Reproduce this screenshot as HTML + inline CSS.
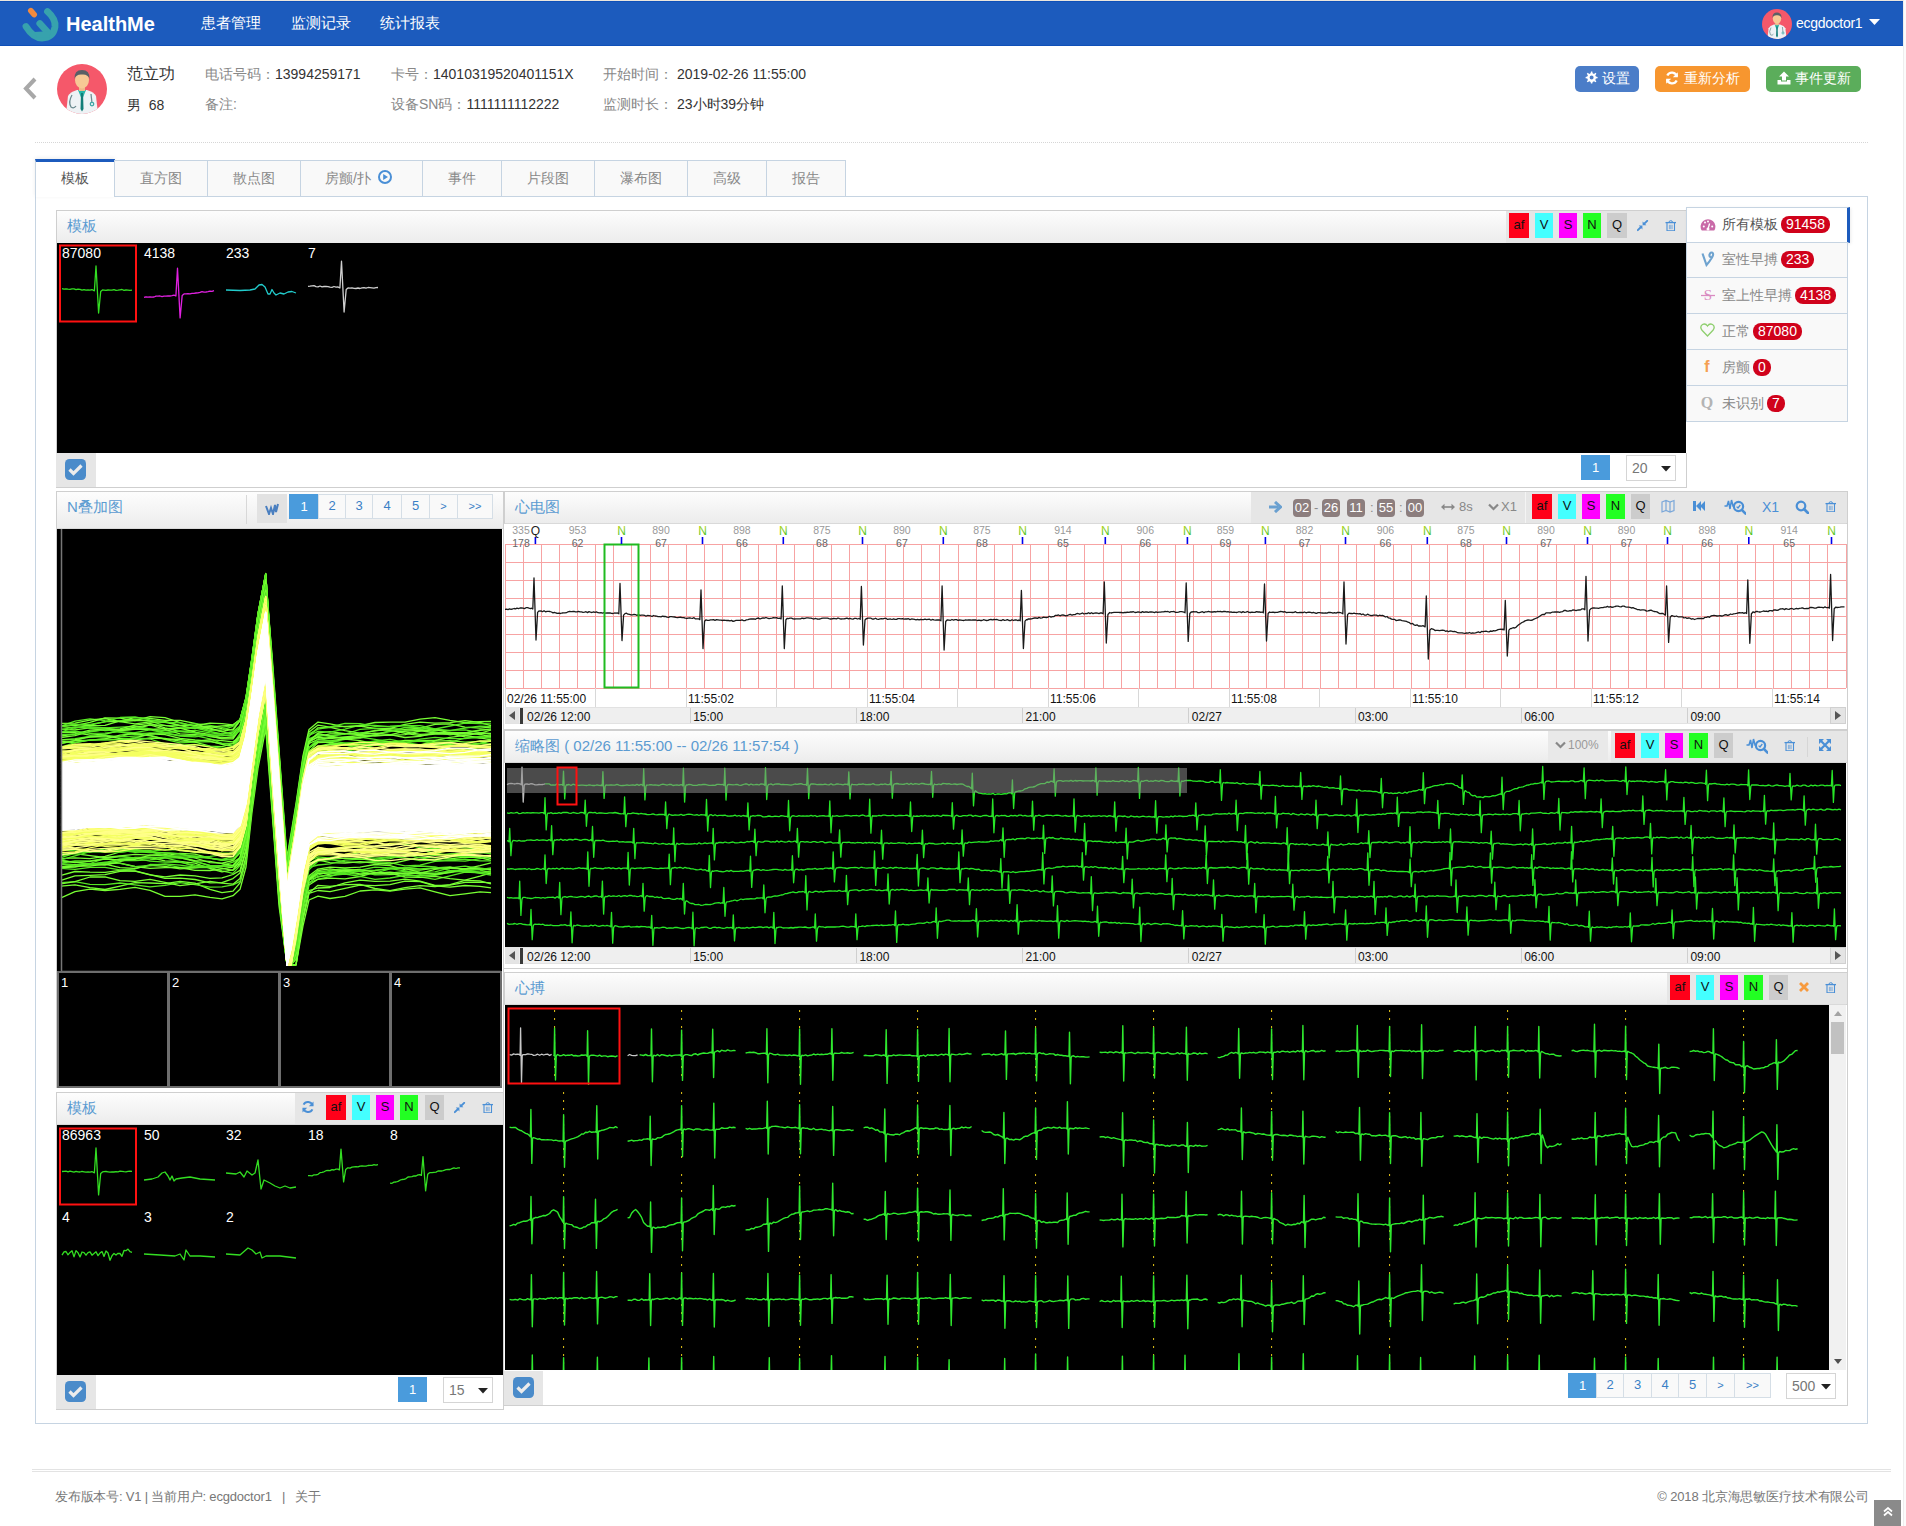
<!DOCTYPE html><html><head><meta charset="utf-8"><style>
html,body{margin:0;padding:0;}
body{width:1906px;height:1526px;overflow:hidden;position:relative;background:#fff;font-family:"Liberation Sans",sans-serif;font-size:14px;color:#333;}
div{position:absolute;box-sizing:border-box;}
.t{white-space:nowrap;}
svg{position:absolute;}
.hdr{background:linear-gradient(#fdfdfd,#ececec);border:1px solid #cfcfcf;border-bottom:1px solid #d9d9d9;}
.ttl{color:#5b9bd1;font-size:14px;}
.cb{background:#4a8bca;border-radius:4px;}
.pg{border:1px solid #d5dde5;background:#f9f9f9;color:#3a80c8;text-align:center;font-size:13px;}
.pga{background:#4a9bdc;color:#fff;border:1px solid #4a9bdc;text-align:center;font-size:13px;}
.bt{text-align:center;font-size:13px;color:#222;line-height:25px;}
</style></head><body>
<div style="left:0px;top:0px;width:1906px;height:1px;background:#ebe6dd"></div>
<div style="left:0px;top:1px;width:1903px;height:45px;background:#1c5bbd;border-top:1px solid #0f50b8;border-bottom:1px solid #0f50b8"></div>
<div style="left:1903px;top:0px;width:3px;height:1526px;background:#fbfbfb;border-left:1px solid #eeeeee"></div>
<svg style="left:0px;top:0px" width="64" height="46" viewBox="0 0 64 46">
<path d="M26 26.5 Q33 38 42 38 Q53 38 55 27 Q56 19 47.5 11.5" stroke="#37a2ad" stroke-width="6.8" fill="none" stroke-linecap="round"/>
<path d="M39.8 23.5 L47.5 32" stroke="#37a2ad" stroke-width="6.8" stroke-linecap="round"/>
<path d="M34 32 L51 31 L49 37.5 L37 37.5 Z" fill="#37a2ad"/>
<path d="M30.8 10.6 L34.2 14.6" stroke="#f28a3e" stroke-width="5.6" stroke-linecap="round"/>
</svg>
<div class="t" style="left:66px;top:12.0px;height:24px;line-height:24px;color:#fff;font-weight:bold;font-size:20px">HealthMe</div>
<div class="t" style="left:201px;top:12.0px;height:22px;line-height:22px;color:#fff;font-size:15px">患者管理</div>
<div class="t" style="left:291px;top:12.0px;height:22px;line-height:22px;color:#fff;font-size:15px">监测记录</div>
<div class="t" style="left:380px;top:12.0px;height:22px;line-height:22px;color:#fff;font-size:15px">统计报表</div>
<svg style="left:1762px;top:9px" width="30" height="30" viewBox="0 0 100 100">
<defs><clipPath id="cp1762"><circle cx="50" cy="50" r="50"/></clipPath></defs>
<circle cx="50" cy="50" r="50" fill="#f5586a"/>
<g clip-path="url(#cp1762)">
<path d="M18 100 L22 64 Q26 56 40 52 L60 52 Q74 56 78 64 L82 100 Z" fill="#eef2f5"/>
<path d="M42 52 L50 72 L58 52 Z" fill="#26b5a8"/>
<path d="M48 58 L52 58 L53 90 L50 95 L47 90 Z" fill="#127d78"/>
<rect x="44" y="40" width="12" height="14" fill="#f0b98a"/>
<ellipse cx="50" cy="32" rx="14" ry="17" fill="#f7c995"/>
<path d="M35 30 Q34 12 50 12 Q66 12 65 30 Q62 20 50 21 Q38 20 35 30 Z" fill="#5a5f66"/>
<path d="M30 62 Q22 76 28 86 Q34 90 38 84" stroke="#6b8a8f" stroke-width="2.5" fill="none"/>
<path d="M68 60 L70 78" stroke="#6b8a8f" stroke-width="2.5" fill="none"/>
<circle cx="70" cy="80" r="3.5" fill="none" stroke="#3fa6a6" stroke-width="2.5"/>
</g></svg>
<div class="t" style="left:1796px;top:13.0px;height:20px;line-height:20px;color:#fff;font-size:14px;letter-spacing:-0.3px">ecgdoctor1</div>
<svg style="left:1869px;top:19px" width="11" height="7"><path d="M0 0 L11 0 L5.5 6 Z" fill="#fff"/></svg>
<svg style="left:22px;top:77px" width="16" height="24"><path d="M13 2 L4 11.5 L13 21" stroke="#a8a8a8" stroke-width="4" fill="none"/></svg>
<svg style="left:57px;top:64px" width="50" height="50" viewBox="0 0 100 100">
<defs><clipPath id="cp57"><circle cx="50" cy="50" r="50"/></clipPath></defs>
<circle cx="50" cy="50" r="50" fill="#f5586a"/>
<g clip-path="url(#cp57)">
<path d="M18 100 L22 64 Q26 56 40 52 L60 52 Q74 56 78 64 L82 100 Z" fill="#eef2f5"/>
<path d="M42 52 L50 72 L58 52 Z" fill="#26b5a8"/>
<path d="M48 58 L52 58 L53 90 L50 95 L47 90 Z" fill="#127d78"/>
<rect x="44" y="40" width="12" height="14" fill="#f0b98a"/>
<ellipse cx="50" cy="32" rx="14" ry="17" fill="#f7c995"/>
<path d="M35 30 Q34 12 50 12 Q66 12 65 30 Q62 20 50 21 Q38 20 35 30 Z" fill="#5a5f66"/>
<path d="M30 62 Q22 76 28 86 Q34 90 38 84" stroke="#6b8a8f" stroke-width="2.5" fill="none"/>
<path d="M68 60 L70 78" stroke="#6b8a8f" stroke-width="2.5" fill="none"/>
<circle cx="70" cy="80" r="3.5" fill="none" stroke="#3fa6a6" stroke-width="2.5"/>
</g></svg>
<div class="t" style="left:127px;top:63.0px;height:22px;line-height:22px;font-size:16px;color:#333">范立功</div>
<div class="t" style="left:127px;top:95.0px;height:20px;line-height:20px;font-size:14px;color:#333">男&nbsp;&nbsp;68</div>
<div class="t" style="left:205px;top:64.0px;height:20px;line-height:20px;"><span style="color:#888;font-size:14px">电话号码：</span><span style="color:#333;font-size:14px">13994259171</span></div>
<div class="t" style="left:205px;top:94.0px;height:20px;line-height:20px;"><span style="color:#888;font-size:14px">备注:</span></div>
<div class="t" style="left:391px;top:64.0px;height:20px;line-height:20px;"><span style="color:#888;font-size:14px">卡号：</span><span style="color:#333;font-size:14px">14010319520401151X</span></div>
<div class="t" style="left:391px;top:94.0px;height:20px;line-height:20px;"><span style="color:#888;font-size:14px">设备SN码：</span><span style="color:#333;font-size:14px">1111111112222</span></div>
<div class="t" style="left:603px;top:64.0px;height:20px;line-height:20px;"><span style="color:#888;font-size:14px">开始时间：</span></div>
<div class="t" style="left:677px;top:64.0px;height:20px;line-height:20px;"><span style="color:#333;font-size:14px">2019-02-26 11:55:00</span></div>
<div class="t" style="left:603px;top:94.0px;height:20px;line-height:20px;"><span style="color:#888;font-size:14px">监测时长：</span></div>
<div class="t" style="left:677px;top:94.0px;height:20px;line-height:20px;"><span style="color:#333;font-size:14px">23小时39分钟</span></div>
<div style="left:1575px;top:66px;width:64px;height:26px;background:#4b7dc8;border-radius:5px;color:#fff;font-size:14px;text-align:center;line-height:25px"><svg width="14" height="14" viewBox="0 0 14 14" style="position:relative;top:2px;margin-right:4px"><path d="M7 0.5 L8.3 0.5 L8.6 2.3 L10 2.9 L11.5 1.8 L12.4 2.8 L11.3 4.2 L11.9 5.6 L13.6 5.9 L13.6 7.3 L11.9 7.6 L11.3 9 L12.4 10.4 L11.5 11.3 L10 10.3 L8.6 10.9 L8.3 12.6 L6.9 12.6 L6.6 10.9 L5.2 10.3 L3.8 11.3 L2.8 10.4 L3.9 9 L3.3 7.6 L1.6 7.3 L1.6 5.9 L3.3 5.6 L3.9 4.2 L2.8 2.8 L3.8 1.8 L5.2 2.9 L6.6 2.3 Z M7.6 4.6 A2 2 0 1 0 7.6 8.6 A2 2 0 1 0 7.6 4.6 Z" fill="#fff" fill-rule="evenodd"/></svg>设置</div>
<div style="left:1655px;top:66px;width:95px;height:26px;background:#f7962f;border-radius:5px;color:#fff;font-size:14px;text-align:center;line-height:25px"><svg width="14" height="14" viewBox="0 0 14 14" style="position:relative;top:2px;margin-right:5px"><path d="M12 5.5 A5.2 5.2 0 0 0 2.3 4.5" stroke="#fff" stroke-width="2.3" fill="none"/><path d="M12.8 1.2 L12.8 6.3 L7.8 6.3 Z" fill="#fff"/><path d="M2 8.5 A5.2 5.2 0 0 0 11.7 9.5" stroke="#fff" stroke-width="2.3" fill="none"/><path d="M1.2 12.8 L1.2 7.7 L6.2 7.7 Z" fill="#fff"/></svg>重新分析</div>
<div style="left:1766px;top:66px;width:95px;height:26px;background:#5bad5b;border-radius:5px;color:#fff;font-size:14px;text-align:center;line-height:25px"><svg width="14" height="14" viewBox="0 0 14 14" style="position:relative;top:2px;margin-right:4px"><path d="M7 0.5 L12 5.5 L9 5.5 L9 9.5 L5 9.5 L5 5.5 L2 5.5 Z" fill="#fff"/><path d="M0.5 9 L4 9 L4 10.5 L10 10.5 L10 9 L13.5 9 L13.5 13.5 L0.5 13.5 Z" fill="#fff"/></svg>事件更新</div>
<div style="left:35px;top:142px;width:1833px;height:1px;border-top:1px dotted #d6d6d6"></div>
<div style="left:35px;top:196px;width:1833px;height:1228px;border:1px solid #c6d4e2;background:#fff"></div>
<div style="left:35px;top:159px;width:80px;height:38px;background:#fff;border-left:1px solid #c6d4e2;border-right:1px solid #c6d4e2;border-top:3px solid #1c5bbd;box-shadow:0 -1px 4px rgba(0,0,0,0.08)"></div>
<div style="left:35px;top:168px;width:80px;height:20px;text-align:center;line-height:20px;color:#555;font-size:14px">模板</div>
<div style="left:114px;top:160px;width:94px;height:37px;background:#f9f9f9;border:1px solid #c6d4e2"></div>
<div style="left:114px;top:168px;width:94px;height:20px;text-align:center;line-height:20px;color:#888;font-size:14px">直方图</div>
<div style="left:207px;top:160px;width:94px;height:37px;background:#f9f9f9;border:1px solid #c6d4e2"></div>
<div style="left:207px;top:168px;width:94px;height:20px;text-align:center;line-height:20px;color:#888;font-size:14px">散点图</div>
<div style="left:300px;top:160px;width:123px;height:37px;background:#f9f9f9;border:1px solid #c6d4e2"></div>
<div style="left:300px;top:168px;width:123px;height:20px;text-align:center;line-height:20px;color:#888;font-size:14px;padding-right:6px">房颤/扑&nbsp;<svg width="14" height="14" viewBox="0 0 14 14" style="position:relative;top:1px;margin-left:3px"><circle cx="7" cy="7" r="6" fill="none" stroke="#4a8fd6" stroke-width="2"/><path d="M5.2 4 L10 7 L5.2 10 Z" fill="#4a8fd6"/></svg></div>
<div style="left:422px;top:160px;width:80px;height:37px;background:#f9f9f9;border:1px solid #c6d4e2"></div>
<div style="left:422px;top:168px;width:80px;height:20px;text-align:center;line-height:20px;color:#888;font-size:14px">事件</div>
<div style="left:501px;top:160px;width:94px;height:37px;background:#f9f9f9;border:1px solid #c6d4e2"></div>
<div style="left:501px;top:168px;width:94px;height:20px;text-align:center;line-height:20px;color:#888;font-size:14px">片段图</div>
<div style="left:594px;top:160px;width:94px;height:37px;background:#f9f9f9;border:1px solid #c6d4e2"></div>
<div style="left:594px;top:168px;width:94px;height:20px;text-align:center;line-height:20px;color:#888;font-size:14px">瀑布图</div>
<div style="left:687px;top:160px;width:80px;height:37px;background:#f9f9f9;border:1px solid #c6d4e2"></div>
<div style="left:687px;top:168px;width:80px;height:20px;text-align:center;line-height:20px;color:#888;font-size:14px">高级</div>
<div style="left:766px;top:160px;width:80px;height:37px;background:#f9f9f9;border:1px solid #c6d4e2"></div>
<div style="left:766px;top:168px;width:80px;height:20px;text-align:center;line-height:20px;color:#888;font-size:14px">报告</div>
<div class="hdr" style="left:56px;top:210px;width:1631px;height:34px;"></div>
<div class="t" style="left:67px;top:216.0px;height:20px;line-height:20px;color:#5b9bd1;font-size:15px">模板</div>
<div style="left:1506px;top:211px;width:180px;height:32px;background:#e6e6e6"></div>
<div style="left:1509px;top:213px;width:20px;height:25px;background:#ff0019;color:#111;text-align:center;font-size:13px;line-height:23px">af</div>
<div style="left:1535px;top:213px;width:18px;height:25px;background:#44ffff;color:#111;text-align:center;font-size:13px;line-height:23px">V</div>
<div style="left:1559px;top:213px;width:18px;height:25px;background:#ff00ff;color:#111;text-align:center;font-size:13px;line-height:23px">S</div>
<div style="left:1583px;top:213px;width:18px;height:25px;background:#22ff22;color:#111;text-align:center;font-size:13px;line-height:23px">N</div>
<div style="left:1607px;top:213px;width:20px;height:25px;background:#cccccc;color:#111;text-align:center;font-size:13px;line-height:23px">Q</div>
<svg style="left:1637px;top:219.5px" width="12" height="12" viewBox="0 0 12 12"><path d="M10.2 0.8 L7.3 3.7 M4 7 L0.8 10.2" stroke="#4a8fd6" stroke-width="1.9" stroke-linecap="round"/><path d="M5.6 1.5 L5.6 5.2 L9.4 5.2 Z M1.8 5.6 L5.4 5.6 L5.4 9.4 Z" fill="#4a8fd6"/></svg>
<svg style="left:1665.25px;top:219.5px" width="11.5" height="11.5" viewBox="0 0 11.5 11.5"><path d="M0.5 2.6 L11 2.6" stroke="#4a8fd6" stroke-width="1.3"/><path d="M4 2.2 Q4 0.7 5.75 0.7 Q7.5 0.7 7.5 2.2" stroke="#4a8fd6" stroke-width="1" fill="none"/><path d="M2 3 L2 10.8 L9.5 10.8 L9.5 3" stroke="#4a8fd6" stroke-width="1.1" fill="none"/><path d="M4.4 4.8 L4.4 9.2 M5.75 4.8 L5.75 9.2 M7.1 4.8 L7.1 9.2" stroke="#4a8fd6" stroke-width="0.8" stroke-opacity="0.8"/></svg>
<div style="left:56px;top:243px;width:1630px;height:211px;background:#000;border-left:1px solid #cfcfcf"></div>
<svg style="left:0px;top:0px" width="1906" height="1526" viewBox="0 0 1906 1526"><polyline points="62,288.7 64,289.1 66,288.9 68,289.2 70,289.3 72,288.8 74,288.8 76,289.7 78,289.2 80,289.3 82,290.2 84,289.7 86,290.2 88,289.9 90,290.1 92,289.6 92.8,290 94.4,290.8 96,266 98.6,313 100.7,291.5 102.5,290 104,290.1 106,290.4 108,290 110,290.2 112,290.2 114,289.6 116,290.3 118,290.1 120,289.8 122,289.5 124,290.4 126,290 128,290.2 130,290.4 132,290.2" fill="none" stroke="#33dd22" stroke-width="1.3" stroke-linejoin="round" /><polyline points="144,297.4 146,296.9 148,297.2 150,296.8 152,297.2 154,297 156,296.2 158,296.1 160,296 162,296.7 164,296.1 166,296.2 168,295.8 170,296 172,295.7 174,295.1 174.2,295.2 175.9,296 177.5,268.2 180.1,317.9 182.2,295.4 184,293.9 186,293.9 188,293.7 190,293.8 192,293.4 194,293.4 196,293 198,292.9 200,292.4 202,291.6 204,292.1 206,292 208,291.7 210,291.2 212,291.3 214,290.7" fill="none" stroke="#e020e0" stroke-width="1.3" stroke-linejoin="round" /><polyline points="226,290 240,290.5 250,290 255,289 259,285 262,284.5 265,287 268,294 270,294 272,289.5 274,293 276,295 280,293 284,294 288,292 292,291.5 296,293" fill="none" stroke="#22cccc" stroke-width="1.3" stroke-linejoin="round" /><polyline points="308,286.3 310,286.1 312,285.8 314,285.7 316,286.6 318,286.8 320,286 322,286.8 324,286.5 326,286.4 328,286.6 330,287.2 332,287.3 334,286.5 336,287.1 338,286.8 338.2,287.2 339.9,288 341.5,261.2 344.1,312 346.2,289.5 348,288 350,288.2 352,287.8 354,288.4 356,288.5 358,288 360,288.5 362,287.8 364,287.6 366,288.1 368,287.5 370,287.7 372,287.9 374,288.1 376,287.7 378,287.5" fill="none" stroke="#cfcfcf" stroke-width="1.3" stroke-linejoin="round" /><rect x="60" y="245.5" width="76" height="76" fill="none" stroke="#ff1111" stroke-width="2"/><g font-family="Liberation Sans, sans-serif"><text x="62" y="258" font-size="14" fill="#fff">87080</text><text x="144" y="258" font-size="14" fill="#fff">4138</text><text x="226" y="258" font-size="14" fill="#fff">233</text><text x="308" y="258" font-size="14" fill="#fff">7</text></g></svg>
<div style="left:56px;top:453px;width:1631px;height:35px;background:#fff;border-bottom:1px solid #cfcfcf;border-left:1px solid #cfcfcf;border-right:1px solid #cfcfcf"></div>
<div style="left:56px;top:453px;width:40px;height:34px;background:#e6e6e6"></div>
<svg style="left:65px;top:459px" width="21" height="21" viewBox="0 0 21 21"><rect x="0" y="0" width="21" height="21" rx="4.5" fill="#4a8bca"/><path d="M4.5 10.5 L8.5 14.5 L16.5 6.5" stroke="#ececec" stroke-width="3.2" fill="none"/></svg>
<div style="left:1581px;top:455px;width:29px;height:25px;background:#4a9bdc;color:#fff;text-align:center;font-size:13px;line-height:25px">1</div>
<div style="left:1626px;top:455px;width:50px;height:26px;border:1px solid #d5d5d5;background:#fff;color:#777;font-size:14px;line-height:25px;padding-left:5px">20</div><svg style="left:1661px;top:466.0px" width="10" height="6" viewBox="0 0 10 6"><path d="M0 0 L10 0 L5 5.5 Z" fill="#222"/></svg>
<div style="left:1686px;top:207px;width:164px;height:36px;background:#fff;border:1px solid #c6d4e2;border-right:3px solid #1c5bbd;box-shadow:1px 1px 3px rgba(0,0,0,0.08)"></div>
<div class="t" style="left:1722px;top:214.0px;height:20px;line-height:20px;"><span style="color:#555;font-size:14px">所有模板</span><span style="display:inline-block;background:#d0021b;color:#fff;border-radius:8px;height:17px;line-height:17px;padding:0 5px;font-size:14px;margin-left:3px;vertical-align:0px">91458</span></div>
<div style="left:1686px;top:242px;width:162px;height:36px;background:#f9f9f9;border:1px solid #c6d4e2"></div>
<div class="t" style="left:1722px;top:249.0px;height:20px;line-height:20px;"><span style="color:#888;font-size:14px">室性早搏</span><span style="display:inline-block;background:#d0021b;color:#fff;border-radius:8px;height:17px;line-height:17px;padding:0 5px;font-size:14px;margin-left:3px;vertical-align:0px">233</span></div>
<div style="left:1686px;top:277px;width:162px;height:37px;background:#f9f9f9;border:1px solid #c6d4e2"></div>
<div class="t" style="left:1722px;top:284.5px;height:20px;line-height:20px;"><span style="color:#888;font-size:14px">室上性早搏</span><span style="display:inline-block;background:#d0021b;color:#fff;border-radius:8px;height:17px;line-height:17px;padding:0 5px;font-size:14px;margin-left:3px;vertical-align:0px">4138</span></div>
<div style="left:1686px;top:313px;width:162px;height:37px;background:#f9f9f9;border:1px solid #c6d4e2"></div>
<div class="t" style="left:1722px;top:320.5px;height:20px;line-height:20px;"><span style="color:#888;font-size:14px">正常</span><span style="display:inline-block;background:#d0021b;color:#fff;border-radius:8px;height:17px;line-height:17px;padding:0 5px;font-size:14px;margin-left:3px;vertical-align:0px">87080</span></div>
<div style="left:1686px;top:349px;width:162px;height:37px;background:#f9f9f9;border:1px solid #c6d4e2"></div>
<div class="t" style="left:1722px;top:356.5px;height:20px;line-height:20px;"><span style="color:#888;font-size:14px">房颤</span><span style="display:inline-block;background:#d0021b;color:#fff;border-radius:8px;height:17px;line-height:17px;padding:0 5px;font-size:14px;margin-left:3px;vertical-align:0px">0</span></div>
<div style="left:1686px;top:385px;width:162px;height:37px;background:#f9f9f9;border:1px solid #c6d4e2"></div>
<div class="t" style="left:1722px;top:392.5px;height:20px;line-height:20px;"><span style="color:#888;font-size:14px">未识别</span><span style="display:inline-block;background:#d0021b;color:#fff;border-radius:8px;height:17px;line-height:17px;padding:0 5px;font-size:14px;margin-left:3px;vertical-align:0px">7</span></div>
<svg style="left:1700px;top:218px" width="16" height="14" viewBox="0 0 16 14"><path d="M1.8 12.6 A7.4 7.4 0 1 1 14.2 12.6 Z" fill="#c96aa8"/><circle cx="8" cy="11" r="1.5" fill="#fff"/><path d="M8 11 L9.6 5.5" stroke="#fff" stroke-width="1.3"/><circle cx="3.8" cy="8.5" r="1" fill="#fff"/><circle cx="5" cy="4.6" r="1" fill="#fff"/><circle cx="8" cy="3.4" r="1" fill="#fff"/><circle cx="12.2" cy="8.5" r="1" fill="#fff"/></svg>
<svg style="left:1701px;top:251px" width="14" height="16" viewBox="0 0 14 16"><path d="M1.5 2.5 L5.5 14 Q9 10 11 6.5 Q13 3 11.5 1.8 Q9.5 0.8 8.5 3.5 Q8 6 10.5 6.5" stroke="#6fa3cf" stroke-width="2.1" fill="none"/></svg>
<svg style="left:1700px;top:287px" width="16" height="16" viewBox="0 0 16 16"><text x="8" y="13" font-size="15" text-anchor="middle" fill="#d98bc0" font-family="Liberation Serif, serif">S</text><path d="M1 8.5 H15" stroke="#d98bc0" stroke-width="1.3"/></svg>
<svg style="left:1700px;top:323px" width="15" height="14" viewBox="0 0 15 14"><path d="M7.5 13 L1.8 7 Q-0.5 3.5 2.5 1.5 Q5.5 0 7.5 3 Q9.5 0 12.5 1.5 Q15.5 3.5 13.2 7 Z" stroke="#8fcf6f" stroke-width="1.3" fill="none"/></svg>
<svg style="left:1702px;top:358px" width="10" height="16" viewBox="0 0 10 16"><text x="5" y="14" font-size="16" font-weight="bold" text-anchor="middle" fill="#f5a052" font-family="Liberation Sans, sans-serif">f</text></svg>
<svg style="left:1699px;top:394px" width="16" height="16" viewBox="0 0 16 16"><text x="8" y="14" font-size="16" font-weight="bold" text-anchor="middle" fill="#b4b4b4" font-family="Liberation Serif, serif">Q</text></svg>
<div class="hdr" style="left:56px;top:491px;width:448px;height:38px;"></div>
<div class="t" style="left:67px;top:496.5px;height:20px;line-height:20px;color:#5b9bd1;font-size:15px">N叠加图</div>
<div style="left:246px;top:495px;width:1px;height:29px;background:#d8d8d8"></div>
<div style="left:257px;top:494px;width:30px;height:29px;background:#e2e2e2"></div>
<svg style="left:265px;top:502px" width="14" height="13" viewBox="0 0 14 13"><path d="M1 4 L4 12 L6 6 L8 12 L10 3 L11 10 L13 2" stroke="#4a7fc0" stroke-width="2" fill="none"/></svg>
<div style="left:289px;top:494px;width:30px;height:25px;background:#4a9bdc;color:#fff;text-align:center;font-size:13px;line-height:25px">1</div>
<div style="left:318px;top:494px;width:28px;height:25px;background:#f9f9f9;border:1px solid #d5dee6;color:#3a7fc6;text-align:center;font-size:13px;line-height:22px">2</div>
<div style="left:345px;top:494px;width:28px;height:25px;background:#f9f9f9;border:1px solid #d5dee6;color:#3a7fc6;text-align:center;font-size:13px;line-height:22px">3</div>
<div style="left:372px;top:494px;width:30px;height:25px;background:#f9f9f9;border:1px solid #d5dee6;color:#3a7fc6;text-align:center;font-size:13px;line-height:22px">4</div>
<div style="left:401px;top:494px;width:29px;height:25px;background:#f9f9f9;border:1px solid #d5dee6;color:#3a7fc6;text-align:center;font-size:13px;line-height:22px">5</div>
<div style="left:429px;top:494px;width:29px;height:25px;background:#f9f9f9;border:1px solid #d5dee6;color:#3a7fc6;text-align:center;font-size:11px;line-height:22px">&gt;</div>
<div style="left:457px;top:494px;width:36px;height:25px;background:#f9f9f9;border:1px solid #d5dee6;color:#3a7fc6;text-align:center;font-size:11px;line-height:22px">&gt;&gt;</div>
<div style="left:56px;top:529px;width:446px;height:559px;background:#000;border-left:1px solid #cfcfcf;border-bottom:1px solid #cfcfcf"></div>
<svg style="left:0px;top:0px" width="1906" height="1526" viewBox="0 0 1906 1526"><svg x="57" y="529" width="445" height="443" viewBox="57 529 445 443"><polyline points="61,897.8 75,891.7 90,889.2 105,890.5 120,889.3 135,887.4 150,890.4 165,896.3 180,896.3 195,894.9 210,897.4 222,898.9 233,895.7 240,889.3 246,867 252,812.2 258,768.4 265.7,728.8 272,810.9 279,905.8 287,965 291,965 296,965 303,925.9 309,900 318,896.2 330,898.5 345,896.4 360,891 375,889.8 390,891.1 405,889.2 420,887.8 435,891.9 450,895.7 465,893.9 480,891.8 491,892.7" fill="none" stroke="#77ff33" stroke-width="1.3" stroke-linejoin="round" /><polyline points="61,886.2 75,884.8 90,887.6 105,889.5 120,886.2 135,882.7 150,883 165,883.7 180,881.4 195,883.1 210,889.4 222,892.6 233,891.1 240,882.8 246,860.9 252,807.4 258,763.6 265.7,723.9 272,806.6 279,901 287,965 291,965 296,965 303,918.9 309,892.9 318,885.3 330,886.4 345,884.7 360,884.3 375,888.5 390,890.7 405,887.6 420,885.6 435,886.5 450,884.7 465,880.4 480,880.8 491,883.9" fill="none" stroke="#77ff33" stroke-width="1.3" stroke-linejoin="round" /><polyline points="61,882.6 75,881.6 90,884.4 105,884.6 120,883 135,884.8 150,886.8 165,885.4 180,882.7 195,884.6 210,887.2 222,886.8 233,884.9 240,881.3 246,859.6 252,806.5 258,762.9 265.7,723.2 272,797.1 279,891.5 287,965 291,965 296,956.8 303,908.9 309,883 318,879.2 330,876.6 345,871.7 360,871.6 375,874.8 390,874.7 405,873.8 420,876.9 435,879.3 450,875.9 465,872.2 480,872.8 491,873" fill="none" stroke="#55e622" stroke-width="1.3" stroke-linejoin="round" /><polyline points="61,883.9 75,881.7 90,877 105,876.8 120,880.7 135,881.4 150,879.4 165,882.4 180,885.6 195,883.8 210,881.3 222,883.1 233,884.2 240,878.4 246,856.4 252,803.2 258,759.1 265.7,719.1 272,797.5 279,892.6 287,965 291,965 296,959.3 303,911.2 309,885 318,879.3 330,878.1 345,878.8 360,876.5 375,872.4 390,873.1 405,877 420,877.4 435,876.3 450,878.6 465,880.1 480,876.1 491,872.9" fill="none" stroke="#77ff33" stroke-width="1.3" stroke-linejoin="round" /><polyline points="61,880.3 75,875.9 90,875.3 105,874.6 120,871.3 135,870.8 150,874.7 165,878.4 180,878.1 195,879.5 210,882.8 222,882.7 233,878.6 240,872.9 246,850.8 252,798.6 258,754.8 265.7,715.1 272,805.3 279,899.9 287,965 291,965 296,965 303,919.1 309,893.4 318,890.5 330,891.7 345,888.4 360,885.2 375,885.7 390,884.7 405,881.2 420,881.6 435,885.9 450,887.2 465,885.5 480,886.4 491,887.8" fill="none" stroke="#77ff33" stroke-width="1.3" stroke-linejoin="round" /><polyline points="61,875.3 75,871.5 90,872.1 105,872.3 120,870.3 135,871.1 150,874.8 165,876.8 180,875 195,875.8 210,878.3 222,877.9 233,874.5 240,870.4 246,848.5 252,796.8 258,753.1 265.7,713.6 272,803.1 279,897.8 287,965 291,965 296,964.3 303,916.5 309,890.7 318,888 330,887.5 345,882.9 360,880.1 375,881.4 390,881.2 405,879.2 420,881.1 435,885.3 450,885.2 465,882.3 480,882.2 491,882.8" fill="none" stroke="#77ff33" stroke-width="1.3" stroke-linejoin="round" /><polyline points="61,868.4 75,869.3 90,867.4 105,867.3 120,869.9 135,869 150,864.5 165,864.7 180,867.4 195,867.5 210,867.4 222,870.8 233,873.4 240,865.5 246,843.6 252,792.6 258,748.4 265.7,708.2 272,785.7 279,880.5 287,965 291,965 296,944.5 303,896.3 309,869.9 318,861.2 330,859.6 345,861.7 360,862.8 375,861.4 390,862.7 405,865.9 420,865.1 435,861.3 450,860.5 465,861.1 480,858.7 491,856.9" fill="none" stroke="#55e622" stroke-width="1.3" stroke-linejoin="round" /><polyline points="61,866.8 75,866 90,866.2 105,863.9 120,863.2 135,866.5 150,868.3 165,867.7 180,867.7 195,870.3 210,870.5 222,868.8 233,867 240,863.6 246,841.9 252,791.4 258,747.6 265.7,707.7 272,793.4 279,887.9 287,965 291,965 296,953.3 303,905.6 309,879.8 318,877 330,874.2 345,870.3 360,870.5 375,870.7 390,868.3 405,868.3 420,872.3 435,874.1 450,871.9 465,871.3 480,872.3 491,871" fill="none" stroke="#77ff33" stroke-width="1.3" stroke-linejoin="round" /><polyline points="61,867.6 75,867 90,864.1 105,864.1 120,867.7 135,868.3 150,865.3 165,866.4 180,868.9 195,867.8 210,866.1 222,868.4 233,870.3 240,864.2 246,842.3 252,791.4 258,747.3 265.7,707.3 272,790.2 279,885.1 287,965 291,965 296,950.3 303,902.1 309,875.8 318,869.1 330,867.1 345,867.8 360,867.1 375,864.5 390,865.7 405,869.6 420,870.1 435,868 450,868.4 465,869 480,865.6 491,862.8" fill="none" stroke="#77ff33" stroke-width="1.3" stroke-linejoin="round" /><polyline points="61,726.1 75,724.5 90,725.6 105,725.3 120,720.9 135,717.6 150,718.4 165,720.4 180,720.3 195,723.4 210,729.2 222,731.5 233,729.1 240,720.2 246,698.1 252,658.1 258,614.2 265.7,574.3 272,658 279,752.4 287,860.2 291,836 296,805.8 303,757.8 309,731.9 318,725.1 330,727.1 345,726.3 360,726 375,728.5 390,728.5 405,724.3 420,722.1 435,723.2 450,722.6 465,720.6 480,722.5 491,725.6" fill="none" stroke="#77ff33" stroke-width="1.3" stroke-linejoin="round" /><polyline points="61,726.2 75,721.2 90,718.9 105,720.7 120,721 135,719.5 150,721.1 165,725.7 180,725.7 195,723.7 210,725.4 222,727.4 233,725.6 240,719.4 246,697.2 252,657.2 258,613.3 265.7,573.7 272,664.3 279,759.3 287,867.6 291,843.6 296,813.5 303,765.3 309,739.2 318,734.6 330,735.8 345,734 360,729.4 375,728.3 390,730.3 405,730.1 420,729.1 435,731.9 450,734.8 465,732.9 480,729.8 491,729.8" fill="none" stroke="#55e622" stroke-width="1.3" stroke-linejoin="round" /><polyline points="61,725.7 75,725.6 90,722.3 105,717.8 120,718.1 135,720.7 150,720.3 165,721.4 180,725.6 195,728.6 210,727.1 222,725.9 233,725.1 240,719.8 246,697.9 252,657.8 258,613.7 265.7,573.5 272,667.2 279,761.8 287,870.3 291,846.5 296,816.8 303,769.2 309,743.3 318,739.5 330,737.5 345,737.3 360,738 375,734.8 390,730.9 405,731.8 420,734.3 435,733.7 450,733.7 465,736.8 480,738 491,735.6" fill="none" stroke="#77ff33" stroke-width="1.3" stroke-linejoin="round" /><polyline points="61,726.4 75,728.1 90,725.2 105,721.7 120,721.6 135,720.7 150,716.7 165,717.6 180,722.7 195,726.1 210,726.7 222,728.7 233,730 240,720.8 246,698.7 252,658.5 258,614.2 265.7,573.7 272,660.8 279,755.4 287,863.7 291,839.8 296,810 303,762 309,735.9 318,727.8 330,727.4 345,730.6 360,733.1 375,730.9 390,728.7 405,729.4 420,728.2 435,724.3 450,723.8 465,727.1 480,728.1 491,727.2" fill="none" stroke="#77ff33" stroke-width="1.3" stroke-linejoin="round" /><polyline points="61,723.4 75,723.2 90,720.2 105,718.5 120,721.6 135,723.9 150,721.9 165,722.4 180,725.3 195,725.5 210,723.1 222,723.6 233,724.8 240,719.8 246,698 252,658 258,613.9 265.7,573.8 272,666.1 279,760.9 287,869.5 291,845.7 296,815.9 303,767.9 309,741.8 318,736.6 330,733.8 345,733.6 360,733.5 375,730.6 390,729.8 405,733.4 420,735.6 435,734 450,733.8 465,735.4 480,733.4 491,730" fill="none" stroke="#77ff33" stroke-width="1.3" stroke-linejoin="round" /><polyline points="61,726.6 75,724.4 90,724.3 105,721.8 120,717.5 135,717 150,719.8 165,722.1 180,722.8 195,726.6 210,730.4 222,730 233,726.3 240,719.6 246,697.6 252,657.6 258,613.8 265.7,573.9 272,664.1 279,758.6 287,866.5 291,842.5 296,812.5 303,764.7 309,739.1 318,735.3 330,736.2 345,733.9 360,733.2 375,734 390,731.5 405,727.4 420,727.7 435,730.5 450,730.3 465,729.8 480,732.7 491,734.4" fill="none" stroke="#55e622" stroke-width="1.3" stroke-linejoin="round" /><polyline points="61,863.7 75,864.6 90,864.2 105,862.1 120,863.4 135,866.6 150,865.5 165,863.9 180,865.1 195,867.1 210,866.1 222,865.6 233,866.1 240,861.9 246,840.3 252,789.9 258,746 265.7,706 272,793.4 279,888 287,965 291,965 296,953.5 303,905.7 309,879.7 318,875 330,871.3 345,869.4 360,870.8 375,870.2 390,868.6 405,870.9 420,874.4 435,873.5 450,870.8 465,871.1 480,870.9 491,868.5" fill="none" stroke="#55e622" stroke-width="1.3" stroke-linejoin="round" /><polyline points="61,867.2 75,864.8 90,864.5 105,865 120,861.7 135,857.5 150,857.5 165,860.8 180,861.5 195,863.1 210,868.5 222,871.8 233,869.9 240,860.3 246,838.1 252,787.8 258,743.8 265.7,703.9 272,784.2 279,878.8 287,965 291,965 296,941.6 303,893.4 309,867.4 318,859.9 330,862.6 345,863 360,861.7 375,863 390,864 405,860.7 420,857.2 435,857.9 450,858.8 465,857.2 480,857.6 491,860.4" fill="none" stroke="#77ff33" stroke-width="1.3" stroke-linejoin="round" /><polyline points="61,860.9 75,862.2 90,864.7 105,863.3 120,860.5 135,860.5 150,859.9 165,858.1 180,857.6 195,861.7 210,865.5 222,866.4 233,865.6 240,858.9 246,837.1 252,787.4 258,743.5 265.7,703.5 272,793.5 279,887.8 287,965 291,965 296,952.3 303,904.4 309,878.5 318,872.1 330,870.5 345,868.7 360,871.2 375,874.3 390,873.2 405,871.4 420,872.4 435,871.9 450,867.9 465,866.2 480,868.5 491,869.7" fill="none" stroke="#55e622" stroke-width="1.3" stroke-linejoin="round" /><polyline points="61,863.1 75,861 90,860.9 105,858.5 120,856.1 135,858.1 150,861.1 165,862.2 180,862.4 195,865.2 210,866.8 222,865.3 233,862.1 240,857.8 246,835.9 252,786.2 258,742.4 265.7,702.5 272,782.9 279,877.4 287,965 291,965 296,940.8 303,893.1 309,867.4 318,865 330,863.8 345,860.1 360,859.2 375,859.5 390,856.9 405,854.9 420,857.6 435,860.6 450,859.8 465,859.1 480,860.9 491,860.8" fill="none" stroke="#55e622" stroke-width="1.3" stroke-linejoin="round" /><polyline points="61,729.2 75,729.9 90,727.9 105,728 120,730.4 135,729.2 150,724.9 165,725.4 180,727.9 195,728 210,728.2 222,731.7 233,734.1 240,726.1 246,704.1 252,664 258,619.8 265.7,579.7 272,667.1 279,761.8 287,870.2 291,846.2 296,816.2 303,767.9 309,741.6 318,732.9 330,731.6 345,733.7 360,734.5 375,733.2 390,734.6 405,737.5 420,736.4 435,732.9 450,732.3 465,732.8 480,730.4 491,728.9" fill="none" stroke="#77ff33" stroke-width="1.3" stroke-linejoin="round" /><polyline points="61,864.5 75,865.4 90,863.5 105,858.5 120,856.6 135,857.9 150,857.1 165,857.6 180,861.7 195,866.6 210,867.3 222,866.5 233,865.5 240,858.5 246,836.6 252,786.6 258,742.4 265.7,702.1 272,791.9 279,886.3 287,965 291,965 296,951.7 303,904.1 309,878.3 318,873.3 330,872.2 345,872.6 360,874.7 375,873.2 390,868.9 405,867.8 420,869 435,867.9 450,866.8 465,869.7 480,872.7 491,872" fill="none" stroke="#55e622" stroke-width="1.3" stroke-linejoin="round" /><polyline points="61,860.9 75,861.9 90,864.2 105,862.6 120,859 135,858.4 150,858.1 165,856.9 180,856.8 195,861.2 210,865.6 222,866.6 233,865.3 240,858 246,836.1 252,786.5 258,742.6 265.7,702.5 272,797.2 279,891.4 287,965 291,965 296,956.6 303,908.6 309,882.8 318,876.3 330,875.5 345,874 360,876.3 375,879.4 390,878 405,875.4 420,875.7 435,875.4 450,872 465,870.4 480,873.3 491,875" fill="none" stroke="#55e622" stroke-width="1.3" stroke-linejoin="round" /><polyline points="61,732 75,727.5 90,726.6 105,728 120,727.2 135,726.3 150,728.8 165,732.4 180,731.3 195,730.4 210,732.8 222,734.1 233,731.6 240,726.1 246,704 252,664.1 258,620.3 265.7,580.7 272,660.7 279,755.5 287,863.7 291,839.6 296,809.5 303,761.4 309,735.5 318,731.4 330,732.1 345,729.1 360,725.2 375,725.4 390,726.8 405,725.7 420,725.6 435,729 450,730.7 465,728 480,726.1 491,726.6" fill="none" stroke="#55e622" stroke-width="1.3" stroke-linejoin="round" /><polyline points="61,729.7 75,726.9 90,728.2 105,730.6 120,729.7 135,728.2 150,729.3 165,730.7 180,728.4 195,727.9 210,731.5 222,733.8 233,732.4 240,726.4 246,704.5 252,664.6 258,620.9 265.7,581.3 272,674 279,768.7 287,876.6 291,852.5 296,822.3 303,774.1 309,748 318,742.2 330,742.2 345,739.3 360,737 375,739.3 390,741.9 405,741 420,740.7 435,742.8 450,742.2 465,738.1 480,736.3 491,737.4" fill="none" stroke="#55e622" stroke-width="1.3" stroke-linejoin="round" /><polyline points="61,736 75,733.9 90,730.1 105,729.4 120,728.8 135,725.2 150,723.3 165,727.8 180,731.6 195,732.3 210,734.5 222,738 233,737.7 240,727.7 246,705.4 252,665 258,620.8 265.7,580.7 272,666.7 279,761.5 287,869.8 291,845.8 296,815.7 303,767.6 309,741.5 318,733.6 330,736 345,738.8 360,737.3 375,735 390,735.4 405,734.6 420,731 435,729.7 450,732.6 465,734 480,733 491,733.5" fill="none" stroke="#77ff33" stroke-width="1.3" stroke-linejoin="round" /><polyline points="61,860.4 75,862.7 90,861.4 105,859.2 120,859.9 135,859.4 150,855.2 165,854.4 180,857.9 195,860.6 210,861.4 222,863.6 233,865.5 240,857.2 246,835.4 252,785.6 258,741.4 265.7,701.1 272,793.3 279,887.8 287,965 291,965 296,953.1 303,905.1 309,879 318,870.5 330,868.9 345,871.1 360,873.9 375,873.1 390,872.2 405,873.8 420,873.4 435,869.4 450,867.4 465,869.1 480,869.3 491,868.2" fill="none" stroke="#77ff33" stroke-width="1.3" stroke-linejoin="round" /><polyline points="61,737.5 75,735.7 90,731.3 105,729.9 120,729.9 135,727.2 150,725 165,729.4 180,733.8 195,734.6 210,735.9 222,738.8 233,738.8 240,729.2 246,706.9 252,666.6 258,622.3 265.7,582.1 272,654.4 279,749.3 287,857.6 291,833.7 296,803.7 303,755.6 309,729.5 318,722.1 330,723.9 345,726.9 360,725.6 375,722.5 390,722.2 405,722.1 420,719.1 435,717.6 450,720.4 465,722.7 480,721.7 491,721.5" fill="none" stroke="#77ff33" stroke-width="1.3" stroke-linejoin="round" /><polyline points="61,732.3 75,732.7 90,735.1 105,734.1 120,730.5 135,729.4 150,729.4 165,728.6 180,728.1 195,732 210,736.7 222,738 233,736.6 240,729.2 246,707.3 252,667.5 258,623.7 265.7,583.7 272,673.7 279,768 287,875.7 291,851.6 296,821.5 303,773.5 309,747.6 318,741.1 330,740.6 345,739 360,740.7 375,744 390,743.2 405,740.4 420,740.4 435,740.5 450,737.4 465,735.3 480,737.8 491,739.8" fill="none" stroke="#77ff33" stroke-width="1.3" stroke-linejoin="round" /><polyline points="61,731.6 75,731.1 90,733.3 105,733.2 120,731.7 135,732.8 150,733.8 165,732.7 180,731 195,733 210,735.6 222,735.9 233,734.5 240,729.8 246,708.1 252,668.4 258,624.7 265.7,584.9 272,659.5 279,753.9 287,861.8 291,837.8 296,807.7 303,759.8 309,733.9 318,729.1 330,727 345,723.4 360,723.7 375,726.3 390,726.2 405,725.4 420,727.7 435,729 450,726 465,723.1 480,723.6 491,723.9" fill="none" stroke="#55e622" stroke-width="1.3" stroke-linejoin="round" /><polyline points="61,734.5 75,734.3 90,731.8 105,729.7 120,732 135,734.5 150,733 165,733.3 180,736 195,736.9 210,734.9 222,735 233,735.6 240,730.8 246,709 252,669 258,625 265.7,584.9 272,675.6 279,770.4 287,878.9 291,855.1 296,825.3 303,777.4 309,751.4 318,746.5 330,743.7 345,743.1 360,743.3 375,740.8 390,739.4 405,742.3 420,744.8 435,743.7 450,743.1 465,744.5 480,743.3 491,740.3" fill="none" stroke="#55e622" stroke-width="1.3" stroke-linejoin="round" /><polyline points="61,855.5 75,853.6 90,855.7 105,857.5 120,855.8 135,854.4 150,855.1 165,855.6 180,853.4 195,854.1 210,858.2 222,860.3 233,859 240,852.7 246,830.8 252,781.9 258,738.1 265.7,698.4 272,794.7 279,889.3 287,965 291,965 296,953.8 303,905.7 309,879.6 318,873.5 330,873.2 345,870.5 360,869.4 375,872.4 390,874.3 405,872.9 420,872.8 435,874.3 450,872.6 465,868.7 480,868.1 491,869.5" fill="none" stroke="#77ff33" stroke-width="1.3" stroke-linejoin="round" /><polyline points="61,858.6 75,857.8 90,858.6 105,856.4 120,852 135,850.7 150,851.8 165,853 180,853.7 195,858 210,862.6 222,863.2 233,860.5 240,852.8 246,830.8 252,781.7 258,737.8 265.7,697.8 272,780.9 279,875.2 287,965 291,965 296,937.7 303,889.9 309,864.1 318,858.6 330,859.4 345,858.1 360,858.8 375,860.6 390,858.6 405,854.6 420,854.2 435,855.3 450,854 465,853.3 480,856.4 491,858.6" fill="none" stroke="#77ff33" stroke-width="1.3" stroke-linejoin="round" /><polyline points="61,859.8 75,855.9 90,851.7 105,851.6 120,852.1 135,850.3 150,850.3 165,855.5 180,858.2 195,857.3 210,858 222,860.2 233,859.1 240,851.5 246,829.2 252,780.1 258,736 265.7,696.1 272,791 279,886 287,965 291,965 296,951.1 303,903 309,876.9 318,871.4 330,873 345,873.6 360,870.1 375,867.1 390,867.8 405,867.8 420,866 435,866.9 450,870.5 465,871.2 480,868.9 491,868.4" fill="none" stroke="#55e622" stroke-width="1.3" stroke-linejoin="round" /><polyline points="61,739.9 75,738.6 90,736.5 105,737.1 120,736.7 135,732.6 150,729.8 165,733 180,735.3 195,735.7 210,738.9 222,743.3 233,743.8 240,733.6 246,711.4 252,671.2 258,627 265.7,586.9 272,673.6 279,768.3 287,876.5 291,852.4 296,822.2 303,773.9 309,747.7 318,738.7 330,740.6 345,743.1 360,742.3 375,741.7 390,743.5 405,743 420,739.2 435,737.4 450,738.7 465,738.6 480,737.2 491,738.1" fill="none" stroke="#55e622" stroke-width="1.3" stroke-linejoin="round" /><polyline points="61,857.6 75,853.1 90,851.5 105,852 120,850.5 135,849.3 150,851.7 165,855.9 180,856 195,855.8 210,858.3 222,859.5 233,856.6 240,850.4 246,828.3 252,779.4 258,735.5 265.7,695.9 272,777.8 279,872.6 287,965 291,964.9 296,934.9 303,886.9 309,861 318,856.9 330,858.2 345,856 360,852.3 375,851.9 390,852.4 405,850.6 420,850 435,853.2 450,855.4 465,853.8 480,852.7 491,853.5" fill="none" stroke="#55e622" stroke-width="1.3" stroke-linejoin="round" /><polyline points="61,853.4 75,852.8 90,851.9 105,848.9 120,848.7 135,851.7 150,852.7 165,852.6 180,854 195,856.7 210,856.3 222,854.8 233,853.4 240,849.4 246,827.6 252,779.1 258,735.2 265.7,695.2 272,772.6 279,867.2 287,965 291,958.9 296,929.1 303,881.5 309,855.6 318,852.4 330,849.8 345,847.2 360,847.6 375,846.7 390,843.9 405,844.3 420,847.7 435,848.7 450,847.2 465,847.8 480,848.8 491,847.1" fill="none" stroke="#55e622" stroke-width="1.3" stroke-linejoin="round" /><polyline points="61,849.8 75,850.8 90,851.7 105,850.1 120,850.1 135,852.3 150,851.4 165,849.6 180,849.9 195,852.4 210,853.1 222,853.1 233,853.1 240,848.3 246,826.6 252,778.4 258,734.6 265.7,694.5 272,782.2 279,876.7 287,965 291,965 296,939.8 303,892 309,866 318,860.7 330,857.6 345,855.4 360,857.2 375,858.1 390,856.9 405,857.9 420,860.7 435,860 450,856.8 465,856 480,856.5 491,855.3" fill="none" stroke="#55e622" stroke-width="1.3" stroke-linejoin="round" /><polyline points="61,743.5 75,740.7 90,736.1 105,735.2 120,736.8 135,736.1 150,735.1 165,739.4 180,742.9 195,742.2 210,741.6 222,743.5 233,743.2 240,736.1 246,713.9 252,673.6 258,629.5 265.7,589.5 272,679.8 279,774.8 287,883.3 291,859.5 296,829.5 303,781.5 309,755.4 318,749.8 330,750.3 345,751.4 360,748.8 375,745.1 390,745.1 405,746.4 420,745.5 435,745.4 450,748.4 465,750 480,747.6 491,746" fill="none" stroke="#55e622" stroke-width="1.3" stroke-linejoin="round" /><polyline points="61,741.5 75,742.5 90,740.2 105,738.9 120,739.8 135,738 150,733.8 165,734.7 180,738.4 195,740 210,741.1 222,744.3 233,746.1 240,736.9 246,714.9 252,674.7 258,630.5 265.7,590.2 272,676.8 279,771.5 287,879.7 291,855.8 296,825.7 303,777.6 309,751.4 318,742.5 330,742.2 345,745.1 360,746.5 375,745.1 390,745.2 405,746.6 420,744.8 435,741.1 450,740.7 465,742.2 480,741.5 491,740.8" fill="none" stroke="#77ff33" stroke-width="1.3" stroke-linejoin="round" /><polyline points="61,739.9 75,739.6 90,737.1 105,735.8 120,738.5 135,740.1 150,738 165,738.5 180,741.1 195,741.3 210,739.7 222,740.6 233,741.8 240,736.3 246,714.5 252,674.5 258,630.4 265.7,590.3 272,677.2 279,772 287,880.5 291,856.6 296,826.8 303,778.8 309,752.7 318,747 330,744.5 345,744.5 360,744.4 375,742.1 390,741.7 405,744.8 420,746.5 435,744.9 450,744.6 465,745.6 480,743.7 491,740.9" fill="none" stroke="#77ff33" stroke-width="1.3" stroke-linejoin="round" /><polyline points="61,743.4 75,740.7 90,740.2 105,738.8 120,735.1 135,733.7 150,735.9 165,738.8 180,739.5 195,742.2 210,746.2 222,746.7 233,743.5 240,736.2 246,714.1 252,674.1 258,630.2 265.7,590.4 272,667 279,761.5 287,869.5 291,845.4 296,815.4 303,767.5 309,741.7 318,737.2 330,738.7 345,737 360,735.5 375,736.2 390,734.8 405,731.1 420,730.5 435,733 450,733.5 465,732.7 480,734.5 491,736.3" fill="none" stroke="#77ff33" stroke-width="1.3" stroke-linejoin="round" /><polyline points="61,851 75,848.7 90,849.6 105,852 120,851.1 135,848.6 150,848.5 165,850.1 180,848.6 195,848.3 210,852.2 222,855.4 233,854.7 240,847.4 246,825.4 252,777.1 258,733.3 265.7,693.6 272,774.9 279,869.6 287,965 291,960.9 296,930.7 303,882.4 309,856.3 318,849.2 330,849.8 345,848.3 360,846.6 375,848.6 390,851.4 405,850.6 420,849.1 435,850 450,849.6 465,846 480,844.3 491,845.7" fill="none" stroke="#f4ff60" stroke-width="1.3" stroke-linejoin="round" /><polyline points="61,849 75,848.9 90,851.3 105,851.3 120,848.9 135,848.2 150,848.4 165,847.6 180,846.2 195,848.9 210,853 222,854.4 233,853.2 240,846.7 246,824.8 252,776.9 258,733.1 265.7,693.2 272,782.9 279,877.2 287,965 291,965 296,939.8 303,891.7 309,865.8 318,859.6 330,858.7 345,856.3 360,857.2 375,860.3 390,860.6 405,858.8 420,859.3 435,859.8 450,856.9 465,854 480,855.1 491,856.6" fill="none" stroke="#ffff88" stroke-width="1.3" stroke-linejoin="round" /><polyline points="61,854.6 75,853 90,849.3 105,848.3 120,848 135,845 150,842.7 165,846.6 180,850.6 195,851.5 210,853.3 222,856.5 233,856.5 240,846.8 246,824.5 252,776.1 258,731.8 265.7,691.7 272,775.5 279,870.3 287,965 291,962.5 296,932.5 303,884.3 309,858.2 318,850.4 330,852.2 345,855 360,854 375,851.7 390,851.8 405,851.5 420,848.3 435,846.7 450,849 465,850.7 480,849.8 491,849.9" fill="none" stroke="#ffff88" stroke-width="1.3" stroke-linejoin="round" /><polyline points="61,848.9 75,849.4 90,851.5 105,850.4 120,847.3 135,846.5 150,846.3 165,845.5 180,845.1 195,848.9 210,853.1 222,854.3 233,853.1 240,845.9 246,824 252,776.2 258,732.3 265.7,692.3 272,775.5 279,869.8 287,965 291,961.2 296,931.1 303,883.2 309,857.3 318,850.8 330,850.1 345,848.6 360,850.3 375,853.1 390,852.3 405,850 420,850.2 435,850.2 450,847.1 465,845.3 480,847.5 491,849.1" fill="none" stroke="#ffff88" stroke-width="1.3" stroke-linejoin="round" /><polyline points="61,852.6 75,852 90,847.8 105,844.8 120,845.2 135,844.4 150,842.2 165,845 180,850 195,852 210,851.9 222,853.4 233,853.6 240,845.2 246,823.1 252,774.9 258,730.6 265.7,690.3 272,767.7 279,862.4 287,965 291,953.6 296,923.7 303,875.8 309,849.8 318,843.2 330,843.5 345,845.9 360,845.9 375,842.5 390,840.7 405,841.3 420,840.2 435,838.2 450,839.8 465,843 480,842.9 491,841.7" fill="none" stroke="#f4ff60" stroke-width="1.3" stroke-linejoin="round" /><polyline points="61,747 75,742.7 90,739.8 105,740.2 120,739.7 135,737.8 150,739 165,743.8 180,745.2 195,744.5 210,746.4 222,748.3 233,746.3 240,739.2 246,716.9 252,676.8 258,632.8 265.7,593 272,677 279,771.9 287,880.2 291,856.1 296,826.1 303,778 309,752 318,747 330,748.7 345,748.1 360,744.4 375,742.7 390,743.5 405,742.5 420,741 435,743 450,746 465,745.5 480,743.7 491,744" fill="none" stroke="#55e622" stroke-width="1.3" stroke-linejoin="round" /><polyline points="61,848.1 75,845.3 90,844.1 105,846.4 120,847.6 135,845.6 150,844.7 165,847.3 180,847.2 195,845.4 210,847.3 222,850.6 233,850.7 240,843.7 246,821.6 252,773.8 258,729.9 265.7,690.2 272,778.8 279,873.6 287,965 291,965 296,935.9 303,887.6 309,861.4 318,854.5 330,854.8 345,854.2 360,851.6 375,851.5 390,854.5 405,855.5 420,854.1 435,854.4 450,855.5 465,853.2 480,849.9 491,849.7" fill="none" stroke="#f4ff60" stroke-width="1.3" stroke-linejoin="round" /><polyline points="61,748.2 75,747.3 90,747.2 105,744.3 120,740.6 135,740.5 150,741.9 165,743.2 180,744.5 195,748.7 210,752 222,751.8 233,749.1 240,742.1 246,720.2 252,680.2 258,636.3 265.7,596.3 272,689.7 279,784.1 287,892.1 291,868 296,838.1 303,790.3 309,764.6 318,760.1 330,760.3 345,758.8 360,759.1 375,759.9 390,757.2 405,754 420,754.4 435,755.8 450,754.9 465,754.9 480,757.8 491,759.1" fill="none" stroke="#ffff88" stroke-width="1.3" stroke-linejoin="round" /><polyline points="61,747.5 75,744.6 90,744.3 105,743.2 120,741 135,741.5 150,744.3 165,746.4 180,746.2 195,747.9 210,750.3 222,750 233,746.9 240,741.8 246,719.8 252,679.9 258,636.1 265.7,596.4 272,685.8 279,780.4 287,888.5 291,864.5 296,834.5 303,786.7 309,760.9 318,757.6 330,757.5 345,754.3 360,752.4 375,752.8 390,751.7 405,749.5 420,750.8 435,753.9 450,754 465,752.6 480,753.3 491,753.9" fill="none" stroke="#ffff88" stroke-width="1.3" stroke-linejoin="round" /><polyline points="61,846.5 75,847.8 90,845.8 105,843.8 120,844.3 135,843 150,839.2 165,839.8 180,843.5 195,845.8 210,846.8 222,849.3 233,850.8 240,842 246,820 252,772.5 258,728.3 265.7,688 272,778.8 279,873.4 287,965 291,965 296,936.2 303,888.1 309,861.9 318,853.6 330,852.9 345,855.4 360,857.3 375,856 390,855.3 405,856.4 420,855.2 435,851.7 450,850.9 465,852.7 480,852.7 491,851.9" fill="none" stroke="#ffff88" stroke-width="1.3" stroke-linejoin="round" /><polyline points="61,747.1 75,744.1 90,743.6 105,746 120,746.3 135,744.4 150,744.3 165,746.8 180,746 195,744.6 210,747.1 222,750.1 233,749.5 240,742.8 246,720.8 252,680.8 258,637 265.7,597.3 272,678.1 279,772.9 287,881 291,856.9 296,826.7 303,778.4 309,752.3 318,745.8 330,746.2 345,744.8 360,742.2 375,742.8 390,745.6 405,745.8 420,744.7 435,745.8 450,746.5 465,743.6 480,740.9 491,741.2" fill="none" stroke="#f4ff60" stroke-width="1.3" stroke-linejoin="round" /><polyline points="61,747.2 75,745.9 90,745.5 105,743 120,741.5 135,743.7 150,745.6 165,746.1 180,746.9 195,749.6 210,750.4 222,749.2 233,747 240,742.6 246,720.7 252,680.9 258,637.1 265.7,597.1 272,685.1 279,779.7 287,887.9 291,863.9 296,834.1 303,786.3 309,760.6 318,757.5 330,755.8 345,752.8 360,752.5 375,752.4 390,749.9 405,749 420,751.8 435,753.6 450,752.5 465,752.3 480,753.6 491,753" fill="none" stroke="#f4ff60" stroke-width="1.3" stroke-linejoin="round" /><polyline points="61,842.8 75,844.5 90,845.4 105,843.5 120,843 135,844.1 150,842.2 165,840.4 180,841.4 195,844.6 210,845.9 222,846.7 233,847.2 240,841 246,819.3 252,772.1 258,728.2 265.7,688 272,777.1 279,871.5 287,965 291,963.7 296,933.7 303,885.8 309,859.8 318,853.3 330,850.8 345,849.9 360,852.4 375,853.5 390,852.3 405,852.9 420,854.5 435,852.7 450,849.4 465,849.1 480,850.1 491,849.4" fill="none" stroke="#f4ff60" stroke-width="1.3" stroke-linejoin="round" /><polyline points="61,843.8 75,842.5 90,842.5 105,840.6 120,839.4 135,841.6 150,843.4 165,843.7 180,843.8 195,846.2 210,847.1 222,846.1 233,844.1 240,839.8 246,818 252,771 258,727.2 265.7,687.3 272,779.7 279,874.3 287,965 291,965 296,937.2 303,889.4 309,863.6 318,860.4 330,858.5 345,855.2 360,854.8 375,855.1 390,853.2 405,852.5 420,855.4 435,857.3 450,855.9 465,855.1 480,856 491,855.4" fill="none" stroke="#ffff88" stroke-width="1.3" stroke-linejoin="round" /><polyline points="61,746.6 75,746 90,746.1 105,744.1 120,743.7 135,746.2 150,747.1 165,746.7 180,747.1 195,749.3 210,749.7 222,748.9 233,747.6 240,743.4 246,721.7 252,681.9 258,638.1 265.7,598.1 272,678.4 279,773 287,881.2 291,857.2 296,827.4 303,779.6 309,753.7 318,750 330,747.5 345,744.5 360,744.8 375,745 390,743.2 405,743.4 420,746.5 435,747.5 450,745.6 465,745 480,745.7 491,744.5" fill="none" stroke="#f4ff60" stroke-width="1.3" stroke-linejoin="round" /><polyline points="61,841.7 75,842.4 90,842.4 105,840.7 120,841.2 135,843.4 150,842.5 165,841.2 180,842.1 195,844.2 210,844.3 222,844.3 233,844.4 240,839.6 246,817.9 252,770.9 258,727 265.7,687 272,776.6 279,871.2 287,965 291,963.4 296,933.5 303,885.7 309,859.7 318,854.6 330,851.6 345,849.8 360,851 375,851.2 390,849.9 405,851.3 420,854 435,853.3 450,850.7 465,850.5 480,850.6 491,849" fill="none" stroke="#f4ff60" stroke-width="1.3" stroke-linejoin="round" /><polyline points="61,847.4 75,845.1 90,843.2 105,843.3 120,841.6 135,837.9 150,836.9 165,840.7 180,842.7 195,843.6 210,847.3 222,850.6 233,849.7 240,840.1 246,817.9 252,770.5 258,726.4 265.7,686.4 272,773.4 279,868.1 287,965 291,959.6 296,929.4 303,881.2 309,855.2 318,847.5 330,849.9 345,851.3 360,849.8 375,849.4 390,850.3 405,848.5 420,845.1 435,844.8 450,846.6 465,846.4 480,845.8 491,847.3" fill="none" stroke="#f4ff60" stroke-width="1.3" stroke-linejoin="round" /><polyline points="61,846.2 75,844.2 90,844.1 105,843.8 120,840.5 135,837.4 150,837.9 165,840.6 180,841.2 195,843.4 210,848.2 222,850.5 233,848.5 240,839.7 246,817.6 252,770.4 258,726.4 265.7,686.5 272,764.7 279,859.3 287,965 291,949 296,918.8 303,870.7 309,844.8 318,838.2 330,840.1 345,839.8 360,838.9 375,840.1 390,840.3 405,837 420,834.8 435,835.7 450,836.1 465,834.7 480,835.7 491,838" fill="none" stroke="#f4ff60" stroke-width="1.3" stroke-linejoin="round" /><polyline points="61,845.2 75,844.6 90,844.8 105,841.9 120,838.2 135,837.9 150,838.9 165,839.8 180,841.2 195,845.5 210,849 222,849 233,846.6 240,839.4 246,817.4 252,770.4 258,726.4 265.7,686.4 272,766.1 279,860.5 287,965 291,950.6 296,920.6 303,872.8 309,847.1 318,842.1 330,842.2 345,841 360,841.8 375,842.8 390,840.2 405,837 420,837.3 435,838.2 450,836.9 465,837 480,840 491,841.3" fill="none" stroke="#ffff88" stroke-width="1.3" stroke-linejoin="round" /><polyline points="61,747.7 75,749.1 90,748.2 105,746.8 120,748.1 135,748.6 150,745.5 165,744.6 180,746.8 195,748.6 210,748.7 222,750.4 233,752 240,745.2 246,723.4 252,683.5 258,639.4 265.7,599.2 272,692.1 279,786.7 287,894.9 291,871 296,841.1 303,793 309,766.9 318,759.6 330,757.3 345,757.9 360,759.8 375,759.2 390,758.8 405,761 420,761.7 435,758.9 450,756.9 465,757.5 480,756.9 491,755.3" fill="none" stroke="#f4ff60" stroke-width="1.3" stroke-linejoin="round" /><polyline points="61,748.4 75,746.9 90,748.5 105,749.8 120,747.9 135,745.9 150,746 165,746.8 180,745.4 195,746.5 210,750.8 222,753.4 233,752.2 240,745 246,723 252,683.2 258,639.4 265.7,599.6 272,688.9 279,783.4 287,891.3 291,867.1 296,836.9 303,788.7 309,762.7 318,755.9 330,756.1 345,754.4 360,753.7 375,756.4 390,758 405,756.4 420,755.4 435,756.3 450,754.9 465,751.7 480,751.4 491,753" fill="none" stroke="#ffff88" stroke-width="1.3" stroke-linejoin="round" /><polyline points="61,751.1 75,752 90,749.8 105,745.6 120,744.5 135,745 150,743.4 165,744.2 180,748.3 195,752.3 210,753 222,753.2 233,752.8 240,745.3 246,723.3 252,683.3 258,639.1 265.7,598.8 272,678.2 279,772.7 287,881 291,857.1 296,827.3 303,779.5 309,753.6 318,747.8 330,746.9 345,748 360,749.8 375,748.1 390,744.8 405,744.4 420,744.9 435,743.1 450,742.4 465,745.1 480,747.1 491,746.4" fill="none" stroke="#f4ff60" stroke-width="1.3" stroke-linejoin="round" /><polyline points="61,841.8 75,840.9 90,840.7 105,838.6 120,837.9 135,840.3 150,841.6 165,841.5 180,842 195,844.4 210,844.9 222,843.9 233,842.3 240,838.1 246,816.3 252,769.5 258,725.7 265.7,685.7 272,763.8 279,858.4 287,965 291,948.4 296,918.5 303,870.7 309,844.9 318,841.5 330,839.2 345,836.2 360,836.2 375,836.3 390,834.3 405,834.1 420,837.1 435,838.5 450,836.9 465,836.4 480,837.2 491,836.2" fill="none" stroke="#ffff88" stroke-width="1.3" stroke-linejoin="round" /><polyline points="61,751.2 75,752.1 90,751.3 105,747.3 120,745 135,745.5 150,744.6 165,744.8 180,747.8 195,752.5 210,754.3 222,754.2 233,753.3 240,745.9 246,724 252,684 258,639.9 265.7,599.7 272,679 279,773.4 287,881.5 291,857.5 296,827.7 303,779.9 309,754.1 318,748.4 330,747.6 345,747.7 360,749.9 375,749.5 390,746.2 405,744.8 420,745.5 435,744.4 450,742.7 465,744.5 480,747.3 491,747.3" fill="none" stroke="#ffff88" stroke-width="1.3" stroke-linejoin="round" /><polyline points="61,842.9 75,841.2 90,838.2 105,838.3 120,840.9 135,840.9 150,839 165,841.2 180,843.4 195,842.3 210,841.5 222,843.7 233,844.5 240,838.2 246,816.2 252,769.2 258,725.1 265.7,685.1 272,774.8 279,869.7 287,965 291,962 296,932 303,883.9 309,857.7 318,851.4 330,850.4 345,850.7 360,849.2 375,846.8 390,847.8 405,850.5 420,850.5 435,849.5 450,850.7 465,851 480,848 491,845.9" fill="none" stroke="#ffff88" stroke-width="1.3" stroke-linejoin="round" /><polyline points="61,845 75,843.9 90,841.3 105,840.8 120,840.5 135,837.3 150,834.6 165,837.8 180,840.9 195,841.8 210,844.2 222,847.8 233,848.2 240,838.4 246,816.2 252,769.1 258,724.9 265.7,684.7 272,777.9 279,872.6 287,965 291,965 296,935 303,886.8 309,860.6 318,852.3 330,853.8 345,856.4 360,855.8 375,854.4 390,855.2 405,854.9 420,851.8 435,849.8 450,851.3 465,852.1 480,851.1 491,851.6" fill="none" stroke="#ffff88" stroke-width="1.3" stroke-linejoin="round" /><polyline points="61,841.8 75,841 90,839.9 105,836.8 120,835.8 135,838.1 150,839.3 165,839.8 180,841.5 195,844.4 210,844.7 222,843.4 233,841.7 240,837 246,815.1 252,768.4 258,724.5 265.7,684.5 272,771.5 279,866.1 287,965 291,957.6 296,927.7 303,880 309,854.2 318,850.9 330,849 345,846.8 360,847 375,846.1 390,843.3 405,842.8 420,845.5 435,846.6 450,845.6 465,846.3 480,847.7 491,846.6" fill="none" stroke="#f4ff60" stroke-width="1.3" stroke-linejoin="round" /><polyline points="61,749.2 75,747.9 90,749.7 105,750.5 120,748.9 135,748.1 150,748.8 165,748.9 180,747.3 195,748.6 210,752.2 222,753.8 233,752.5 240,746.4 246,724.5 252,684.7 258,641 265.7,601.2 272,698.2 279,792.7 287,900.6 291,876.5 296,846.3 303,798.3 309,772.3 318,766.4 330,765.8 345,763.1 360,762.6 375,765.2 390,766.3 405,765 420,765.4 435,766.6 450,764.7 465,761.5 480,761.4 491,762.5" fill="none" stroke="#f4ff60" stroke-width="1.3" stroke-linejoin="round" /><polyline points="61,751.5 75,750.1 90,748.9 105,750.5 120,751.1 135,748.1 150,745.7 165,747.9 180,748.9 195,748.3 210,750.8 222,754.9 233,755.6 240,747 246,725 252,684.9 258,640.8 265.7,600.9 272,691.6 279,786.4 287,894.6 291,870.5 296,840.3 303,792 309,765.7 318,757.3 330,758 345,759 360,758 375,758 390,760.5 405,761.2 420,758.7 435,757.3 450,757.8 465,756.5 480,754.1 491,754.4" fill="none" stroke="#f4ff60" stroke-width="1.3" stroke-linejoin="round" /><polyline points="61,844.5 75,840.6 90,837.6 105,837.8 120,837.7 135,836 150,836.7 165,841.3 180,842.9 195,842.2 210,843.7 222,845.7 233,844.1 240,837 246,814.8 252,767.8 258,723.8 265.7,684 272,763 279,857.9 287,965 291,947.9 296,917.8 303,869.8 309,843.7 318,838.5 330,839.9 345,839.6 360,836.2 375,834.3 390,835.1 405,834.5 420,833.1 435,834.7 450,837.6 465,837.2 480,835.4 491,835.3" fill="none" stroke="#ffff88" stroke-width="1.3" stroke-linejoin="round" /><polyline points="61,844.2 75,841.2 90,840.3 105,839.4 120,836.3 135,834.6 150,836.4 165,839.8 180,840.6 195,842.5 210,846.2 222,847.3 233,844.4 240,836.9 246,814.8 252,768 258,724.1 265.7,684.2 272,770.7 279,865.3 287,965 291,956.2 296,926.2 303,878.2 309,852.4 318,847.5 330,849.1 345,847.8 360,845.9 375,846.2 390,845.5 405,842.3 420,841.3 435,843.5 450,844.6 465,843.7 480,844.7 491,846.3" fill="none" stroke="#ffff88" stroke-width="1.3" stroke-linejoin="round" /><polyline points="61,755.5 75,753 90,749.9 105,749.3 120,748.4 135,745.4 150,744.4 165,748.7 180,751.6 195,752.3 210,754.7 222,757.6 233,756.7 240,747.5 246,725.3 252,685 258,640.9 265.7,600.8 272,688.4 279,783.2 287,891.4 291,867.4 296,837.3 303,789.2 309,763.1 318,756.1 330,758.2 345,759.9 360,758 375,756.3 390,756.6 405,755.5 420,752.6 435,752.3 450,754.8 465,755.5 480,754.7 491,755.4" fill="none" stroke="#f4ff60" stroke-width="1.3" stroke-linejoin="round" /><polyline points="61,754.8 75,750.7 90,748.6 105,749 120,748.2 135,746.8 150,748.3 165,752.5 180,753.2 195,752.8 210,754.9 222,756.5 233,754.3 240,747.7 246,725.5 252,685.4 258,641.5 265.7,601.8 272,686.1 279,780.9 287,889.1 291,865.1 296,835 303,787 309,761 318,756.3 330,757.5 345,756.2 360,752.8 375,751.8 390,752.5 405,751.4 420,750.5 435,752.8 450,755.1 465,754 480,752.5 491,752.9" fill="none" stroke="#f4ff60" stroke-width="1.3" stroke-linejoin="round" /><polyline points="61,753.7 75,750.1 90,748.8 105,750.5 120,750.8 135,749.5 150,750.2 165,753.3 180,753 195,751.7 210,753.6 222,755.8 233,754.6 240,748.4 246,726.3 252,686.3 258,642.5 265.7,602.8 272,694.2 279,789.1 287,897.3 291,873.2 296,843.1 303,794.9 309,768.9 318,763.4 330,763.9 345,762.2 360,759 375,758.8 390,760.8 405,760.9 420,760.2 435,762 450,763.4 465,761.2 480,758.7 491,758.7" fill="none" stroke="#ffff88" stroke-width="1.3" stroke-linejoin="round" /><polyline points="61,753.1 75,749.7 90,749.5 105,750.8 120,750.2 135,749.4 150,750.9 165,753.4 180,752.3 195,751.8 210,754.3 222,755.8 233,754.1 240,748.4 246,726.3 252,686.4 258,642.7 265.7,603 272,682.9 279,777.6 287,885.7 291,861.7 296,831.5 303,783.4 309,757.4 318,752.6 330,752.7 345,750.1 360,747.3 375,748 390,749.5 405,748.8 420,748.9 435,751.2 450,751.8 465,749.1 480,747.4 491,747.8" fill="none" stroke="#ffff88" stroke-width="1.3" stroke-linejoin="round" /><polyline points="61,752.6 75,752.4 90,750.2 105,749.7 120,752.1 135,752.5 150,750 165,750.7 180,752.9 195,752.9 210,752.2 222,754.1 233,755.4 240,749.2 246,727.2 252,687.2 258,643.2 265.7,603.1 272,687.3 279,782.1 287,890.6 291,866.6 296,836.7 303,788.6 309,762.4 318,755.8 330,753.9 345,754.4 360,754.3 375,752.5 390,753 405,755.8 420,756.4 435,754.5 450,754.2 465,754.7 480,752.5 491,750.4" fill="none" stroke="#f4ff60" stroke-width="1.3" stroke-linejoin="round" /><polyline points="61,756.4 75,753.9 90,753.2 105,752.7 120,749.6 135,746.9 150,747.7 165,750.9 180,751.9 195,753.8 210,758.1 222,760.1 233,757.8 240,749.4 246,727.2 252,687.1 258,643.1 265.7,603.2 272,696 279,790.6 287,898.5 291,874.4 296,844.3 303,796.3 309,770.4 318,764.3 330,766.2 345,765.9 360,764.5 375,765.1 390,765 405,761.9 420,759.8 435,761.1 450,762 465,761 480,761.9 491,763.9" fill="none" stroke="#f4ff60" stroke-width="1.3" stroke-linejoin="round" /><polyline points="61,841.8 75,839.3 90,835.1 105,834 120,835 135,834.1 150,833.1 165,837.1 180,840.5 195,840.5 210,840.4 222,842.2 233,841.8 240,834.4 246,812.2 252,765.6 258,721.5 265.7,681.5 272,762.2 279,857.1 287,965 291,947.3 296,917.3 303,869.3 309,843.2 318,837.4 330,838.1 345,839.2 360,837.1 375,833.8 390,833.5 405,834.4 420,833.3 435,833 450,835.7 465,837.3 480,835.5 491,834.3" fill="none" stroke="#f4ff60" stroke-width="1.3" stroke-linejoin="round" /><polyline points="61,840.9 75,838.9 90,838.8 105,838.5 120,835.4 135,832.4 150,832.8 165,835.4 180,836.1 195,838.2 210,842.8 222,845.1 233,843.2 240,834.5 246,812.4 252,766 258,722 265.7,682.1 272,773.9 279,868.4 287,965 291,959.7 296,929.5 303,881.5 309,855.6 318,848.9 330,850.7 345,850.4 360,849.5 375,850.7 390,850.9 405,847.8 420,845.7 435,846.5 450,846.8 465,845.5 480,846.4 491,848.6" fill="none" stroke="#ffff88" stroke-width="1.3" stroke-linejoin="round" /><polyline points="61,757.7 75,754.4 90,751.7 105,751.3 120,750.1 135,747.5 150,747.7 165,752.2 180,754.3 195,754.8 210,757.3 222,759.7 233,758.1 240,749.7 246,727.4 252,687.2 258,643.1 265.7,603.2 272,689.3 279,784.1 287,892.3 291,868.3 296,838.2 303,790.1 309,764.2 318,758.1 330,760.2 345,760.7 360,758.2 375,756.8 390,757.1 405,755.5 420,753.2 435,754.1 450,756.7 465,756.8 480,756 491,756.8" fill="none" stroke="#ffff88" stroke-width="1.3" stroke-linejoin="round" /><polyline points="61,839 75,837.2 90,837.1 105,838.8 120,838 135,834.8 150,833.7 165,835.8 180,835.7 195,835.7 210,839.5 222,843.2 233,842.9 240,834.5 246,812.4 252,766 258,722.1 265.7,682.2 272,768.9 279,863.6 287,965 291,954 296,923.8 303,875.5 309,849.3 318,841.5 330,842.5 345,842.5 360,841.3 375,842.5 390,844.9 405,844.1 420,841.7 435,841.5 450,841.6 465,839.3 480,837.8 491,839.1" fill="none" stroke="#ffff88" stroke-width="1.3" stroke-linejoin="round" /><polyline points="61,840.3 75,838.7 90,838.5 105,836.2 120,832.8 135,832.2 150,833.9 165,835.7 180,836.7 195,840.2 210,843.5 222,843.7 233,840.9 240,834 246,812 252,765.7 258,721.8 265.7,681.8 272,773.7 279,868.1 287,965 291,959.6 296,929.6 303,881.8 309,856.1 318,851.5 330,852 345,850.4 360,850.1 375,850.8 390,848.7 405,845.6 420,845.7 435,847.4 450,847 465,846.6 480,848.9 491,850.3" fill="none" stroke="#ffff88" stroke-width="1.3" stroke-linejoin="round" /><polyline points="61,838.7 75,837.9 90,836.3 105,837.2 120,838.3 135,835.8 150,832.9 165,834.7 180,836.4 195,836.1 210,837.9 222,841.7 233,842.9 240,834.4 246,812.3 252,765.9 258,721.8 265.7,681.8 272,763.6 279,858.3 287,965 291,948.2 296,918 303,869.7 309,843.5 318,835 330,835.3 345,836.8 360,836.2 375,835.6 390,837.7 405,838.9 420,836.8 435,834.8 450,835.2 465,834.5 480,832.2 491,832" fill="none" stroke="#f4ff60" stroke-width="1.3" stroke-linejoin="round" /><polyline points="61,838.4 75,837.7 90,834.8 105,832.8 120,834.6 135,836.2 150,834.9 165,836.1 180,839.1 195,839.9 210,838.5 222,838.9 233,839.2 240,833.7 246,811.8 252,765.5 258,721.4 265.7,681.3 272,756.5 279,851.3 287,964.3 291,940.5 296,910.6 303,862.7 309,836.7 318,831.6 330,829.8 345,829.6 360,829.2 375,826.6 390,825.4 405,827.6 420,829.1 435,828.3 450,828.5 465,830 480,828.8 491,826.4" fill="none" stroke="#ffff88" stroke-width="1.3" stroke-linejoin="round" /><polyline points="61,757 75,753.2 90,750.3 105,750.6 120,750.9 135,749.4 150,749.9 165,754.2 180,755.8 195,754.9 210,756.1 222,758.1 233,756.8 240,749.9 246,727.7 252,687.5 258,643.5 265.7,603.7 272,689.5 279,784.4 287,892.8 291,868.8 296,838.7 303,790.6 309,764.6 318,759.3 330,760.4 345,760 360,756.7 375,754.8 390,755.7 405,755.6 420,754.4 435,755.8 450,758.5 465,758.1 480,756 491,755.7" fill="none" stroke="#f4ff60" stroke-width="1.3" stroke-linejoin="round" /><polyline points="61,757 75,755.6 90,754.2 105,755 120,754.4 135,750.9 150,748.8 165,751.4 180,753.1 195,753.5 210,756.7 222,760.6 233,760.8 240,751.4 246,729.2 252,689.1 258,645 265.7,605 272,697 279,791.8 287,899.9 291,875.8 296,845.6 303,797.3 309,771.2 318,762.7 330,764.1 345,765.7 360,764.9 375,764.8 390,766.5 405,766.1 420,763 435,761.7 450,762.5 465,761.8 480,760.5 491,761.4" fill="none" stroke="#f4ff60" stroke-width="1.3" stroke-linejoin="round" /><polyline points="61,837.1 75,836.5 90,835.2 105,832.3 120,831.8 135,834.2 150,834.8 165,835.2 180,837.1 195,839.7 210,839.6 222,838.6 233,837.3 240,832.5 246,810.7 252,764.7 258,720.7 265.7,680.7 272,764.5 279,859.1 287,965 291,949.4 296,919.6 303,871.9 309,846 318,842.4 330,840.3 345,838.4 360,838.6 375,837.6 390,835 405,835.1 420,837.7 435,838.4 450,837.4 465,838.2 480,839.2 491,837.8" fill="none" stroke="#ffff88" stroke-width="1.3" stroke-linejoin="round" /><polyline points="61,839.9 75,837.4 90,833.3 105,832.2 120,833.4 135,832.6 150,831.7 165,835.5 180,838.8 195,838.7 210,838.5 222,840.2 233,839.9 240,832.7 246,810.5 252,764.2 258,720.1 265.7,680 272,765.2 279,860.1 287,965 291,950.7 296,920.8 303,872.8 309,846.7 318,841 330,841.5 345,842.4 360,840.2 375,837 390,836.9 405,837.9 420,837 435,836.8 450,839.3 465,840.7 480,838.9 491,837.6" fill="none" stroke="#f4ff60" stroke-width="1.3" stroke-linejoin="round" /><polyline points="61,754.7 75,755.9 90,754.7 105,753.4 120,754.6 135,754.5 150,751.1 165,750.8 180,753.3 195,754.9 210,755.4 222,757.5 233,759.1 240,751.7 246,729.8 252,689.8 258,645.7 265.7,605.5 272,685.2 279,779.8 287,888.1 291,864.1 296,834.2 303,786.1 309,759.9 318,752.2 330,750.5 345,751.7 360,753.3 375,752.5 390,752.4 405,754.3 420,754.3 435,751.4 450,749.9 465,750.6 480,749.9 491,748.6" fill="none" stroke="#f4ff60" stroke-width="1.3" stroke-linejoin="round" /><polyline points="61,754.3 75,754.8 90,756.5 105,755.5 120,753.1 135,752.6 150,752.3 165,751.5 180,751.3 195,754.6 210,758.1 222,759.2 233,758.3 240,751.5 246,729.6 252,689.8 258,646 265.7,606 272,682.4 279,776.7 287,884.6 291,860.5 296,830.5 303,782.5 309,756.6 318,750.2 330,749.2 345,747.7 360,749.2 375,751.6 390,750.9 405,749.3 420,749.8 435,749.6 450,746.7 465,745.1 480,746.7 491,747.8" fill="none" stroke="#ffff88" stroke-width="1.3" stroke-linejoin="round" /><polyline points="61,838.5 75,838.1 90,835 105,831.4 120,831.6 135,832.7 150,831.7 165,833.3 180,837.3 195,839.8 210,839.3 222,839.3 233,838.9 240,832.3 246,810.3 252,764.2 258,720 265.7,679.8 272,766.8 279,861.5 287,965 291,952.5 296,922.7 303,874.9 309,849 318,844 330,842.9 345,843.4 360,843.8 375,841.1 390,838.4 405,838.9 420,839.9 435,839 450,839.3 465,842 480,842.6 491,841" fill="none" stroke="#f4ff60" stroke-width="1.3" stroke-linejoin="round" /><polyline points="61,755.5 75,757 90,757.5 105,755 120,753.2 135,753.3 150,751.8 165,750.8 180,752.4 195,756.4 210,758.8 222,759.6 233,759.4 240,752.2 246,730.4 252,690.5 258,646.5 265.7,606.3 272,689.5 279,783.9 287,891.9 291,867.9 296,837.9 303,790 309,764.1 318,757.5 330,756 345,755.8 360,758.3 375,759.4 390,757.6 405,756.7 420,757.4 435,755.8 450,753 465,753.2 480,755.2 491,755.5" fill="none" stroke="#ffff88" stroke-width="1.3" stroke-linejoin="round" /><polyline points="61,756.9 75,758.1 90,756.4 105,754.4 120,754.7 135,753.8 150,750.3 165,750.7 180,754.1 195,756.5 210,757.5 222,759.8 233,761.1 240,752.6 246,730.6 252,690.5 258,646.3 265.7,606.1 272,685.4 279,780 287,888.3 291,864.3 296,834.3 303,786.3 309,760.2 318,752.1 330,751.4 345,753.4 360,755.2 375,754.1 390,753.4 405,754.3 420,753.5 435,750.3 450,749.3 465,750.9 480,750.9 491,750.2" fill="none" stroke="#ffff88" stroke-width="1.3" stroke-linejoin="round" /><polyline points="61,836.1 75,834 90,833.5 105,835.5 120,835.7 135,833.2 150,832.1 165,834.2 180,834 195,833.3 210,836.1 222,839.6 233,839.5 240,831.9 246,809.8 252,763.8 258,719.9 265.7,680.1 272,759.1 279,853.9 287,965 291,942.7 296,912.5 303,864.2 309,838 318,830.6 330,831.1 345,830.8 360,829.1 375,829.7 390,832.4 405,832.6 420,830.8 435,830.7 450,831.1 465,828.8 480,826.4 491,827" fill="none" stroke="#f4ff60" stroke-width="1.3" stroke-linejoin="round" /><polyline points="61,754.9 75,756.4 90,757.3 105,755.3 120,754 135,754.5 150,753 165,751.6 180,752.6 195,756.1 210,758.2 222,759.1 233,759.1 240,752.4 246,730.6 252,690.8 258,646.8 265.7,606.7 272,682.7 279,777.1 287,885.1 291,861.1 296,831.2 303,783.2 309,757.3 318,750.7 330,748.8 345,748.1 360,750.5 375,751.8 390,750.5 405,750.2 420,751.2 435,749.8 450,746.7 465,746.3 480,747.8 491,747.8" fill="none" stroke="#f4ff60" stroke-width="1.3" stroke-linejoin="round" /><polyline points="61,757.9 75,755.4 90,752.1 105,752.2 120,754.1 135,753.6 150,752.6 165,755.7 180,757.9 195,756.8 210,756.5 222,758.5 233,758.6 240,752.1 246,730 252,689.9 258,645.9 265.7,605.9 272,679.7 279,774.6 287,883.1 291,859.2 296,829.2 303,781.1 309,754.9 318,749.1 330,748.9 345,749.1 360,746.7 375,744.2 390,745.1 405,746.9 420,746.5 435,746.4 450,748.3 465,748.6 480,745.8 491,744.2" fill="none" stroke="#ffff88" stroke-width="1.3" stroke-linejoin="round" /><polyline points="61,754.7 75,755.8 90,755.7 105,754.1 120,754.6 135,756 150,754.2 165,753 180,754.2 195,756.4 210,756.9 222,757.7 233,758.2 240,752.5 246,730.7 252,690.9 258,646.9 265.7,606.8 272,688.4 279,782.9 287,891.1 291,867.2 296,837.2 303,789.3 309,763.3 318,757.2 330,754.5 345,753.7 360,755.4 375,755.6 390,754.6 405,756 420,757.8 435,756.3 450,753.7 465,753.6 480,753.7 491,752.4" fill="none" stroke="#f4ff60" stroke-width="1.3" stroke-linejoin="round" /><polyline points="61,758.7 75,754.9 90,752.7 105,753.6 120,754 135,752.7 150,753.4 165,757.1 180,757.8 195,756.8 210,758.2 222,760.2 233,758.9 240,752.4 246,730.3 252,690.2 258,646.3 265.7,606.5 272,690.3 279,785.2 287,893.5 291,869.5 296,839.4 303,791.3 309,765.2 318,760 330,760.7 345,759.7 360,756.4 375,755.2 390,756.5 405,756.6 420,755.7 435,757.4 450,759.5 465,758.3 480,756 491,755.7" fill="none" stroke="#ffff88" stroke-width="1.3" stroke-linejoin="round" /><polyline points="61,756.1 75,754.3 90,754.8 105,754.1 120,752.8 135,753.9 150,755.7 165,756.4 180,755.7 195,757.3 210,759.1 222,759 233,756.9 240,752.3 246,730.4 252,690.6 258,646.9 265.7,607.1 272,700.9 279,795.5 287,903.6 291,879.5 296,849.6 303,801.7 309,775.8 318,772 330,770.7 345,767.3 360,766.4 375,767.3 390,766.6 405,765.7 420,767.7 435,769.9 450,768.7 465,766.9 480,767.2 491,767.1" fill="none" stroke="#f4ff60" stroke-width="1.3" stroke-linejoin="round" /><polyline points="61,833.9 75,832.1 90,833.4 105,834.2 120,832.9 135,832.5 150,833.5 165,834.1 180,832.6 195,833.5 210,836.5 222,837.8 233,836.4 240,830.7 246,808.8 252,763.2 258,719.4 265.7,679.7 272,765.8 279,860.4 287,965 291,950.2 296,920.1 303,872.1 309,846.1 318,840.8 330,840.1 345,837.2 360,836.2 375,838.2 390,839.1 405,838.1 420,838.8 435,840.4 450,839 465,836.1 480,835.6 491,836.3" fill="none" stroke="#ffff88" stroke-width="1.3" stroke-linejoin="round" /><polyline points="61,837.1 75,834.8 90,830.9 105,829.9 120,831.4 135,831.1 150,830.1 165,833.5 180,836.6 195,836.3 210,835.8 222,837.4 233,837.3 240,830.5 246,808.4 252,762.4 258,718.3 265.7,678.3 272,751.7 279,846.6 287,958.8 291,934.9 296,905 303,857 309,830.9 318,825.3 330,825.3 345,826 360,824 375,820.9 390,820.7 405,822.1 420,821.7 435,821.4 450,823.6 465,824.9 480,822.9 491,821.3" fill="none" stroke="#ffff88" stroke-width="1.3" stroke-linejoin="round" /><polyline points="61,759.2 75,758.2 90,758.5 105,756.6 120,753 135,751.8 150,752.7 165,754 180,755 195,758.6 210,762.5 222,763.3 233,761 240,753.4 246,731.4 252,691.5 258,647.5 265.7,607.5 272,697.6 279,792 287,899.9 291,875.9 296,845.8 303,797.9 309,772.1 318,766.6 330,767.2 345,766.1 360,766.4 375,767.7 390,766.1 405,762.9 420,762.5 435,763.4 450,762.5 465,761.9 480,764.2 491,765.9" fill="none" stroke="#f4ff60" stroke-width="1.3" stroke-linejoin="round" /><polyline points="61,757.2 75,757 90,755 105,754.7 120,756.9 135,756.9 150,754.2 165,755 180,757.1 195,757.1 210,756.8 222,759 233,760.4 240,753.7 246,731.8 252,691.8 258,647.7 265.7,607.7 272,695.1 279,789.8 287,898.2 291,874.3 296,844.3 303,796.2 309,770 318,763 330,761.4 345,762 360,762 375,760.5 390,761.2 405,763.8 420,764 435,762 450,761.7 465,762 480,759.8 491,758" fill="none" stroke="#ffff88" stroke-width="1.3" stroke-linejoin="round" /><polyline points="61,837.4 75,837.1 90,833.5 105,830.8 120,830.9 135,830 150,827.8 165,830.3 180,834.7 195,836.8 210,837.2 222,838.8 233,839 240,830.6 246,808.5 252,762.6 258,718.3 265.7,678.1 272,761.3 279,856 287,965 291,945.9 296,916 303,868.1 309,842 318,835.3 330,835.5 345,837.6 360,837.9 375,835.2 390,833.6 405,833.9 420,832.9 435,830.9 450,832 465,834.6 480,834.7 491,833.8" fill="none" stroke="#ffff88" stroke-width="1.3" stroke-linejoin="round" /><polyline points="61,756.5 75,755.5 90,756.6 105,756.4 120,755.2 135,756 150,757 165,756.8 180,755.8 195,757.5 210,759.7 222,760.1 233,758.7 240,753.7 246,731.9 252,692.1 258,648.4 265.7,608.6 272,699.5 279,794.1 287,902.1 291,878 296,848 303,800.1 309,774.1 318,769.4 330,767.9 345,764.8 360,764.5 375,766.2 390,766 405,765.3 420,767.1 435,768.5 450,766.5 465,764.2 480,764.5 491,764.6" fill="none" stroke="#ffff88" stroke-width="1.3" stroke-linejoin="round" /><polyline points="61,761.8 75,759.5 90,757.1 105,756.8 120,755.5 135,752.3 150,751.5 165,755.4 180,757.7 195,758.6 210,761.6 222,764.5 233,763.5 240,754.4 246,732.1 252,691.9 258,647.8 265.7,607.8 272,693.5 279,788.2 287,896.4 291,872.3 296,842.2 303,794.1 309,768.1 318,760.9 330,763 345,764.3 360,762.7 375,761.7 390,762.2 405,760.7 420,757.8 435,757.7 450,759.7 465,759.8 480,759.2 491,760.3" fill="none" stroke="#f4ff60" stroke-width="1.3" stroke-linejoin="round" /><polyline points="61,832.1 75,832.6 90,834.2 105,833.2 120,831.4 135,831.6 150,831.1 165,830 180,829.8 195,832.8 210,835.7 222,836.6 233,836 240,829.6 246,807.8 252,762.4 258,718.5 265.7,678.5 272,761.5 279,855.9 287,965 291,945 296,915 303,867.1 309,841.1 318,835 330,833.5 345,831.7 360,833.2 375,835.3 390,834.7 405,833.7 420,834.8 435,834.5 450,831.5 465,829.9 480,831.2 491,831.8" fill="none" stroke="#ffff88" stroke-width="1.3" stroke-linejoin="round" /><polyline points="61,833.1 75,833 90,831 105,830.2 120,832.3 135,833 150,830.7 165,831.2 180,833.3 195,833.7 210,833.1 222,834.6 233,835.8 240,829.7 246,807.8 252,762.1 258,718.1 265.7,678 272,762.5 279,857.3 287,965 291,947.2 296,917.3 303,869.3 309,843.1 318,836.7 330,834.7 345,834.9 360,835.1 375,833.5 390,833.6 405,836.2 420,837.1 435,835.3 450,834.7 465,835.3 480,833.5 491,831.4" fill="none" stroke="#ffff88" stroke-width="1.3" stroke-linejoin="round" /><polyline points="61,760.1 75,759.5 90,759.7 105,757.2 120,753.8 135,753.2 150,753.9 165,754.9 180,756.2 195,760.1 210,763.6 222,763.9 233,761.8 240,754.5 246,732.5 252,692.6 258,648.6 265.7,608.6 272,693.9 279,788.3 287,896.2 291,872.2 296,842.2 303,794.4 309,768.6 318,763.3 330,763.4 345,762.4 360,763.1 375,764.1 390,761.9 405,759 420,759.1 435,759.8 450,758.6 465,758.5 480,761 491,762.4" fill="none" stroke="#f4ff60" stroke-width="1.3" stroke-linejoin="round" /><polyline points="61,757 75,757.6 90,757.2 105,755.5 120,756.3 135,758 150,756.7 165,755.8 180,757.1 195,759 210,759.1 222,759.4 233,759.8 240,754.5 246,732.7 252,692.9 258,649 265.7,608.9 272,685.8 279,780.4 287,888.6 291,864.7 296,834.8 303,786.9 309,760.8 318,755.3 330,752.6 345,751.4 360,752.6 375,752.4 390,751.3 405,752.8 420,755 435,754 450,751.8 465,751.8 480,751.7 491,750.1" fill="none" stroke="#ffff88" stroke-width="1.3" stroke-linejoin="round" /><polyline points="61,835 75,835.1 90,832.9 105,831.9 120,832.3 135,830.3 150,826.9 165,828.5 180,831.8 195,833.1 210,834.6 222,837.7 233,838.8 240,829.8 246,807.7 252,762 258,717.8 265.7,677.6 272,763.6 279,858.3 287,965 291,948.3 296,918.3 303,870.1 309,843.9 318,835.5 330,835.7 345,838.1 360,838.8 375,837.5 390,837.7 405,838.5 420,836.5 435,833.8 450,833.9 465,835 480,834.2 491,833.9" fill="none" stroke="#ffff88" stroke-width="1.3" stroke-linejoin="round" /><polyline points="61,758.4 75,757.3 90,757.1 105,755.3 120,754.4 135,756.3 150,757.6 165,757.8 180,758.3 195,760.5 210,761.3 222,760.6 233,759 240,754.4 246,732.6 252,692.8 258,649 265.7,609.1 272,698.7 279,793.3 287,901.4 291,877.5 296,847.6 303,799.8 309,773.9 318,770.3 330,768.4 345,765.6 360,765.4 375,765.5 390,763.7 405,763.4 420,766 435,767.3 450,765.9 465,765.4 480,766.1 491,765.3" fill="none" stroke="#f4ff60" stroke-width="1.3" stroke-linejoin="round" /><polyline points="61,758.4 75,760 90,760.2 105,757.8 120,756.7 135,756.8 150,754.8 165,753.8 180,755.7 195,759.4 210,761.3 222,762.3 233,762.5 240,755.3 246,733.5 252,693.5 258,649.5 265.7,609.3 272,687.6 279,782 287,890.1 291,866.1 296,836.2 303,788.2 309,762.3 318,755.4 330,753.8 345,753.9 360,756.4 375,757.1 390,755.4 405,755.2 420,755.9 435,753.9 450,751.2 465,751.7 480,753.3 491,753.1" fill="none" stroke="#f4ff60" stroke-width="1.3" stroke-linejoin="round" /><polyline points="61,835.6 75,834 90,830 105,828 120,829.1 135,829.1 150,827.9 165,830.8 180,834.6 195,835.4 210,834.8 222,836 233,835.8 240,828.8 246,806.7 252,761 258,716.9 265.7,676.7 272,764.9 279,859.7 287,965 291,950.4 296,920.5 303,872.6 309,846.5 318,840.9 330,840.7 345,841.8 360,840.6 375,837.4 390,836.3 405,837.4 420,837.2 435,836.5 450,838.2 465,840.3 480,839.2 491,837.5" fill="none" stroke="#f4ff60" stroke-width="1.3" stroke-linejoin="round" /><polyline points="61,833.9 75,831.5 90,828.5 105,828.8 120,830.7 135,830.2 150,829 165,831.9 180,833.8 195,832.8 210,832.6 222,834.8 233,835 240,828.4 246,806.4 252,760.8 258,716.7 265.7,676.8 272,766.8 279,861.7 287,965 291,952.5 296,922.5 303,874.4 309,848.3 318,842.3 330,842 345,842.1 360,839.9 375,837.7 390,838.8 405,840.6 420,840.2 435,840 450,841.6 465,841.7 480,838.8 491,837.3" fill="none" stroke="#ffff88" stroke-width="1.3" stroke-linejoin="round" /><polyline points="61,836 75,833.7 90,831.7 105,831.5 120,829.9 135,826.7 150,826 165,829.7 180,831.7 195,832.7 210,836 222,838.9 233,837.9 240,828.7 246,806.5 252,760.9 258,716.8 265.7,676.8 272,755.4 279,850.1 287,962.5 291,938.4 296,908.3 303,860.2 309,834.2 318,827 330,829.1 345,830.2 360,828.6 375,828 390,828.6 405,826.9 420,824.1 435,824 450,825.7 465,825.6 480,825.1 491,826.4" fill="none" stroke="#ffff88" stroke-width="1.3" stroke-linejoin="round" /><polyline points="61,835.3 75,834.2 90,830.4 105,827.8 120,828.5 135,828.4 150,827 165,829.7 180,833.8 195,835.3 210,834.9 222,835.9 233,835.8 240,828.5 246,806.4 252,760.8 258,716.6 265.7,676.4 272,757.9 279,852.7 287,965 291,942.1 296,912.3 303,864.4 309,838.3 318,832.6 330,832.4 345,833.7 360,833.2 375,830 390,828.4 405,829.2 420,829 435,827.9 450,829.3 465,831.8 480,831.3 491,829.9" fill="none" stroke="#f4ff60" stroke-width="1.3" stroke-linejoin="round" /><polyline points="61,763.6 75,761.2 90,757.8 105,756.9 120,756.5 135,754.2 150,753.2 165,757.3 180,760.5 195,761 210,762.7 222,765.2 233,764.5 240,755.8 246,733.6 252,693.3 258,649.2 265.7,609.1 272,698.8 279,793.6 287,901.9 291,877.9 296,847.9 303,799.8 309,773.8 318,767.1 330,768.7 345,770.2 360,768.4 375,766.3 390,766.3 405,765.7 420,763.4 435,763.1 450,765.6 465,766.6 480,765.6 491,765.7" fill="none" stroke="#f4ff60" stroke-width="1.3" stroke-linejoin="round" /><polyline points="61,835.5 75,834.6 90,830.8 105,828.4 120,828.7 135,827.8 150,825.9 165,828.8 180,833.1 195,834.7 210,835 222,836.6 233,836.6 240,828.4 246,806.3 252,760.7 258,716.4 265.7,676.2 272,767 279,861.8 287,965 291,952.7 296,922.8 303,874.9 309,848.8 318,842.4 330,842.7 345,844.6 360,844.3 375,841.4 390,840 405,840.4 420,839.4 435,837.9 450,839.4 465,841.8 480,841.5 491,840.5" fill="none" stroke="#f4ff60" stroke-width="1.3" stroke-linejoin="round" /><polyline points="61,761 75,761.3 90,761.4 105,758.6 120,755.6 135,755.4 150,755.3 165,755.6 180,757.2 195,761.5 210,764.5 222,764.9 233,763.4 240,756 246,734.1 252,694.2 258,650.2 265.7,610 272,697.7 279,792.1 287,900.1 291,876 296,846.1 303,798.3 309,772.4 318,766.7 330,766.4 345,765.7 360,767.2 375,768.1 390,765.7 405,763.4 420,763.7 435,763.6 450,761.8 465,762.1 480,764.8 491,765.7" fill="none" stroke="#f4ff60" stroke-width="1.3" stroke-linejoin="round" /><polyline points="61,830.5 75,830.6 90,832.2 105,831.6 120,829.7 135,829.6 150,829.5 165,828.7 180,828.2 195,830.9 210,834 222,835.1 233,834.2 240,827.9 246,806.1 252,760.9 258,717 265.7,677.1 272,757.5 279,851.9 287,964.4 291,940.3 296,910.2 303,862.2 309,836.3 318,830.2 330,829 345,827 360,828.1 375,830.4 390,830 405,828.9 420,829.8 435,829.8 450,827.1 465,825.2 480,826.2 491,827" fill="none" stroke="#ffff88" stroke-width="1.3" stroke-linejoin="round" /><polyline points="61,760.9 75,760.1 90,757.2 105,755.6 120,757.4 135,758.6 150,757.2 165,758.6 180,761.4 195,761.9 210,760.8 222,761.6 233,761.9 240,756.2 246,734.2 252,694.2 258,650.1 265.7,610.1 272,689.8 279,784.6 287,893 291,869.2 296,839.3 303,791.4 309,765.3 318,760 330,758.3 345,758.3 360,757.8 375,755.2 390,754.4 405,756.6 420,757.8 435,756.9 450,757.3 465,758.5 480,757.1 491,754.8" fill="none" stroke="#f4ff60" stroke-width="1.3" stroke-linejoin="round" /><polyline points="61,832.8 75,831.2 90,831.4 105,832.2 120,830.2 135,827.2 150,826.6 165,828.6 180,828.7 195,829.9 210,834.2 222,837.3 233,836.3 240,827.8 246,805.7 252,760.3 258,716.4 265.7,676.5 272,759.3 279,853.9 287,965 291,942.6 296,912.4 303,864.2 309,838.1 318,830.7 330,831.9 345,831.8 360,831 375,832.5 390,833.8 405,832 420,829.8 435,829.9 450,829.7 465,827.8 480,827.5 491,829.3" fill="none" stroke="#ffff88" stroke-width="1.3" stroke-linejoin="round" /><polyline points="61,830.3 75,831.7 90,832.4 105,830.4 120,829.2 135,829.5 150,827.9 165,826.7 180,827.9 195,831.4 210,833.5 222,834.4 233,834.4 240,827.6 246,805.8 252,760.6 258,716.6 265.7,676.5 272,764.4 279,858.8 287,965 291,948.7 296,918.7 303,870.8 309,844.8 318,838.2 330,836.5 345,835.9 360,838.2 375,839.3 390,838 405,837.7 420,838.6 435,837.1 450,834.2 465,834 480,835.5 491,835.4" fill="none" stroke="#f4ff60" stroke-width="1.3" stroke-linejoin="round" /><polyline points="61,762.1 75,763.3 90,761.5 105,758.4 120,757.7 135,757.4 150,754.9 165,755.4 180,759 195,762.4 210,763.5 222,764.8 233,765.2 240,757.1 246,735.1 252,695 258,650.9 265.7,610.6 272,688.3 279,782.8 287,891 291,867.1 296,837.2 303,789.3 309,763.3 318,756.3 330,755.5 345,757.1 360,759 375,757.8 390,755.8 405,755.8 420,755.5 435,753.1 450,752.1 465,754.1 480,755.4 491,754.8" fill="none" stroke="#f4ff60" stroke-width="1.3" stroke-linejoin="round" /><polyline points="61,833.7 75,830.8 90,827.3 105,827 120,828.1 135,827.2 150,826.7 165,830.4 180,832.9 195,832.2 210,832.5 222,834.4 233,833.9 240,826.9 246,804.8 252,759.4 258,715.3 265.7,675.4 272,763.5 279,858.4 287,965 291,948.7 296,918.7 303,870.6 309,844.5 318,838.9 330,839.4 345,839.7 360,837.1 375,834.6 390,835 405,835.9 420,835.1 435,835.4 450,837.8 465,838.3 480,836.1 491,835" fill="none" stroke="#ffff88" stroke-width="1.3" stroke-linejoin="round" /><polyline points="61,762.6 75,762.2 90,760.3 105,756.8 120,755.8 135,757.3 150,757.4 165,758.3 180,761.3 195,764.5 210,764.8 222,764.1 233,762.9 240,757 246,735 252,695.1 258,651 265.7,610.9 272,698.8 279,793.4 287,901.7 291,877.8 296,848 303,800.3 309,774.4 318,770.1 330,768.8 345,768.1 360,768.7 375,767.2 390,764.1 405,763.7 420,765.4 435,765.4 450,764.8 465,766.6 480,768.1 491,767" fill="none" stroke="#ffff88" stroke-width="1.3" stroke-linejoin="round" /><polyline points="61,834.4 75,832.7 90,829.7 105,828.8 120,828.3 135,825.6 150,824 165,827.6 180,830.8 195,831.7 210,833.7 222,836.6 233,836.3 240,827.1 246,804.9 252,759.5 258,715.3 265.7,675.2 272,759.8 279,854.5 287,965 291,943.9 296,913.9 303,865.7 309,839.7 318,832.3 330,833.9 345,835.8 360,834.7 375,832.9 390,833.1 405,832.5 420,829.9 435,828.9 450,830.8 465,831.8 480,831 491,831.4" fill="none" stroke="#f4ff60" stroke-width="1.3" stroke-linejoin="round" /><polyline points="61,761.6 75,763 90,762.7 105,759.8 120,758.3 135,758.3 150,756.5 165,756 180,758.4 195,762.4 210,764.3 222,765.2 233,765.2 240,757.6 246,735.7 252,695.8 258,651.7 265.7,611.4 272,694.5 279,789 287,897 291,873 296,843.1 303,795.2 309,769.3 318,762.6 330,761.4 345,761.8 360,764.2 375,764.4 390,762.3 405,761.7 420,762.1 435,760.2 450,758 465,759 480,760.9 491,760.9" fill="none" stroke="#f4ff60" stroke-width="1.3" stroke-linejoin="round" /><polyline points="61,832.7 75,832.3 90,830.1 105,829.5 120,829.8 135,827.4 150,824.3 165,826.4 180,829.3 195,830.3 210,832.1 222,835.5 233,836.4 240,827.2 246,805.1 252,759.7 258,715.5 265.7,675.4 272,760.7 279,855.4 287,965 291,944.8 296,914.7 303,866.6 309,840.4 318,832 330,832.6 345,834.8 360,835 375,833.9 390,834.5 405,835 420,832.7 435,830.3 450,830.8 465,831.5 480,830.5 491,830.4" fill="none" stroke="#ffff88" stroke-width="1.3" stroke-linejoin="round" /><polyline points="61,764.2 75,763.7 90,760.9 105,759.6 120,759.6 135,757.3 150,754.6 165,757.1 180,760.6 195,762 210,763.6 222,766.5 233,767.1 240,757.9 246,735.7 252,695.5 258,651.3 265.7,611.1 272,707.1 279,801.8 287,910.1 291,886.1 296,856.1 303,808 309,781.9 318,773.9 330,774.7 345,777.1 360,777.2 375,775.5 390,775.4 405,775.6 420,773.3 435,771.1 450,772.1 465,773.5 480,772.9 491,772.8" fill="none" stroke="#ffff88" stroke-width="1.3" stroke-linejoin="round" /><polyline points="61,830.7 75,827.5 90,827 105,827.5 120,826.4 135,826 150,827.8 165,830.2 180,829.7 195,830 210,832.2 222,833.2 233,831.1 240,825.5 246,803.4 252,758.4 258,714.6 265.7,674.9 272,764.4 279,859.1 287,965 291,949 296,918.9 303,870.9 309,845 318,840.6 330,840.6 345,838 360,835.6 375,836 390,836.5 405,835.4 420,835.8 435,838.3 450,838.8 465,836.7 480,835.8 491,836.2" fill="none" stroke="#ffffff" stroke-width="1.3" stroke-linejoin="round" /><polyline points="61,762.5 75,759.9 90,759.7 105,759.2 120,757.7 135,758.1 150,760.2 165,761.9 180,761.6 195,762.8 210,764.9 222,765.1 233,762.7 240,757.5 246,735.6 252,695.7 258,651.9 265.7,612.1 272,693.3 279,787.9 287,896 291,872 296,842 303,794.1 309,768.2 318,764.4 330,763.9 345,761 360,759.2 375,759.8 390,759.3 405,757.9 420,759.1 435,761.6 450,761.4 465,759.7 480,759.9 491,760.1" fill="none" stroke="#ffffff" stroke-width="1.3" stroke-linejoin="round" /><polyline points="61,762.9 75,764.3 90,763.2 105,760.8 120,760.6 135,760.2 150,757.4 165,757.2 180,760.2 195,763.2 210,764.4 222,766 233,766.9 240,759 246,737.1 252,697 258,652.9 265.7,612.6 272,704.6 279,799.1 287,907.3 291,883.3 296,853.4 303,805.4 309,779.4 318,771.9 330,770.7 345,772 360,774.2 375,773.6 390,772.3 405,772.8 420,772.7 435,770 450,768.3 465,769.6 480,770.4 491,769.8" fill="none" stroke="#ffffff" stroke-width="1.3" stroke-linejoin="round" /><polyline points="61,764.5 75,761.5 90,760.6 105,759.9 120,757.7 135,757.3 150,759.4 165,762.1 180,762.5 195,763.9 210,766.5 222,767 233,764.3 240,758.1 246,736.1 252,696.1 258,652.3 265.7,612.5 272,696.8 279,791.5 287,899.6 291,875.5 296,845.5 303,797.6 309,771.8 318,767.6 330,768.2 345,766 360,764 375,764.1 390,763.4 405,761.2 420,761.5 435,764 450,764.7 465,763.6 480,764 491,764.7" fill="none" stroke="#ffffff" stroke-width="1.3" stroke-linejoin="round" /><polyline points="61,829.2 75,828.9 90,826.9 105,826.7 120,828.7 135,828.4 150,825.8 165,826.7 180,828.7 195,828.8 210,828.8 222,831.1 233,832.4 240,825.6 246,803.6 252,758.6 258,714.5 265.7,674.4 272,759 279,853.7 287,965 291,943 296,913 303,864.9 309,838.7 318,831.6 330,830.3 345,830.9 360,830.8 375,829.5 390,830.3 405,832.6 420,832.6 435,830.6 450,830.4 465,830.6 480,828.5 491,826.9" fill="none" stroke="#ffffff" stroke-width="1.3" stroke-linejoin="round" /><polyline points="61,828.5 75,828.3 90,826.7 105,824.6 120,825.6 135,827.5 150,826.7 165,827 180,828.9 195,830.5 210,829.9 222,829.9 233,829.8 240,824.7 246,802.9 252,758 258,714 265.7,674 272,757.7 279,852.3 287,965 291,941.5 296,911.6 303,863.8 309,837.8 318,833 330,830.7 345,829.6 360,829.9 375,828.5 390,827 405,828.6 420,830.8 435,830.2 450,829.3 465,830 480,829.7 491,827.7" fill="none" stroke="#ffffff" stroke-width="1.3" stroke-linejoin="round" /><polyline points="61,766.6 75,764.3 90,760.5 105,759.3 120,759.7 135,758.3 150,757.3 165,761.1 180,764.5 195,764.9 210,765.6 222,767.5 233,767 240,759.1 246,736.9 252,696.7 258,652.6 265.7,612.5 272,697.5 279,792.3 287,900.7 291,876.8 296,846.8 303,798.8 309,772.7 318,766.6 330,767.5 345,768.8 360,767 375,764.3 390,764 405,764.2 420,762.7 435,762.4 450,764.7 465,766.2 480,764.9 491,764.2" fill="none" stroke="#ffffff" stroke-width="1.3" stroke-linejoin="round" /><polyline points="61,764.1 75,761.5 90,761.1 105,760.1 120,758.3 135,758.6 150,760.8 165,762.7 180,762.8 195,764.4 210,766.5 222,766.6 233,764 240,758.6 246,736.6 252,696.7 258,652.9 265.7,613.1 272,706.5 279,801.2 287,909.3 291,885.2 296,855.3 303,807.4 309,781.6 318,777.8 330,777.5 345,774.8 360,773.2 375,773.5 390,772.6 405,770.9 420,772 435,774.5 450,774.4 465,773.2 480,773.7 491,774" fill="none" stroke="#ffffff" stroke-width="1.3" stroke-linejoin="round" /><polyline points="61,762.4 75,763.9 90,763.7 105,761.7 120,761.5 135,761.8 150,759.5 165,758.6 180,760.5 195,763.4 210,764.6 222,765.9 233,766.6 240,759.6 246,737.7 252,697.8 258,653.8 265.7,613.6 272,693.4 279,787.9 287,896 291,872 296,842.1 303,794.1 309,768.1 318,761.1 330,759.3 345,759.5 360,761.6 375,761.8 390,760.7 405,761.4 420,762.1 435,759.9 450,757.5 465,758 480,758.7 491,758" fill="none" stroke="#ffffff" stroke-width="1.3" stroke-linejoin="round" /><polyline points="61,763.3 75,764.4 90,764.9 105,762.6 120,760.6 135,760.5 150,759.3 165,758.6 180,760.2 195,764 210,766.6 222,767.4 233,767 240,759.7 246,737.9 252,698 258,654 265.7,613.8 272,684.4 279,778.8 287,886.8 291,862.8 296,832.8 303,784.9 309,759 318,752.5 330,751.3 345,751 360,753.1 375,754.2 390,752.4 405,751.4 420,751.9 435,750.7 450,748.1 465,748.2 480,750.2 491,750.6" fill="none" stroke="#ffffff" stroke-width="1.3" stroke-linejoin="round" /><polyline points="61,764.3 75,761.7 90,759.9 105,761.3 120,762.5 135,761.1 150,760.3 165,762.9 180,763.6 195,762.4 210,763.6 222,766.3 233,766.2 240,759.5 246,737.4 252,697.4 258,653.4 265.7,613.6 272,685.4 279,780.3 287,888.6 291,864.5 296,834.4 303,786.2 309,760.1 318,753.6 330,753.7 345,753.3 360,751 375,750.1 390,752.1 405,753.3 420,752.4 435,752.5 450,753.7 465,752.4 480,749.6 491,749" fill="none" stroke="#ffffff" stroke-width="1.3" stroke-linejoin="round" /><polyline points="61,764.4 75,764.8 90,765.1 105,762.4 120,759.7 135,759.4 150,759.1 165,759.2 180,760.7 195,764.9 210,767.9 222,768.4 233,767.1 240,759.7 246,737.8 252,697.9 258,653.9 265.7,613.8 272,695.7 279,790.1 287,898.1 291,874.1 296,844.1 303,796.3 309,770.4 318,764.5 330,764 345,763.4 360,765 375,766 390,763.8 405,761.8 420,762.1 435,761.7 450,759.8 465,759.9 480,762.4 491,763.3" fill="none" stroke="#ffffff" stroke-width="1.3" stroke-linejoin="round" /><polyline points="61,765.3 75,763.7 90,763.1 105,760.9 120,758.2 135,758.3 150,759.9 165,761.6 180,762.7 195,765.8 210,768.3 222,768.2 233,765.6 240,759.3 246,737.3 252,697.4 258,653.5 265.7,613.5 272,707.2 279,801.8 287,909.8 291,885.8 296,855.9 303,808.1 309,782.3 318,778.1 330,778.1 345,776.3 360,775.8 375,776 390,773.9 405,771.5 420,772.3 435,774 450,773.6 465,773.4 480,775.3 491,776" fill="none" stroke="#ffffff" stroke-width="1.3" stroke-linejoin="round" /><polyline points="61,828.4 75,826.9 90,825.6 105,826.8 120,827.7 135,825.6 150,823.5 165,825.4 180,826.5 195,826 210,827.8 222,831.2 233,831.9 240,824 246,802 252,757.1 258,713.1 265.7,673.2 272,762.4 279,857.2 287,965 291,946.8 296,916.7 303,868.4 309,842.2 318,834.4 330,834.6 345,835.2 360,834.1 375,833.8 390,835.9 405,836.9 420,835.2 435,834.1 450,834.5 465,833.4 480,831 491,830.8" fill="none" stroke="#ffffff" stroke-width="1.3" stroke-linejoin="round" /><polyline points="61,766.9 75,765.2 90,763.8 105,764.1 120,762.9 135,759.6 150,758.2 165,761.1 180,762.7 195,763.6 210,767 222,770.3 233,769.9 240,760.7 246,738.6 252,698.4 258,654.3 265.7,614.4 272,697.7 279,792.4 287,900.5 291,876.4 296,846.3 303,798.1 309,772 318,764.1 330,765.8 345,766.9 360,765.9 375,765.9 390,767 405,765.9 420,763 435,762.4 450,763.3 465,762.7 480,762 491,763.2" fill="none" stroke="#ffffff" stroke-width="1.3" stroke-linejoin="round" /><polyline points="61,767 75,766.3 90,763.8 105,763 120,762.9 135,760.3 150,757.8 165,760.3 180,763.5 195,764.6 210,766.5 222,769.6 233,770.1 240,760.9 246,738.7 252,698.5 258,654.3 265.7,614.2 272,695.7 279,790.4 287,898.6 291,874.6 296,844.6 303,796.4 309,770.3 318,762.3 330,763.2 345,765.4 360,765.3 375,763.9 390,764.2 405,764.2 420,761.8 435,759.8 450,760.8 465,761.8 480,761 491,761.1" fill="none" stroke="#ffffff" stroke-width="1.3" stroke-linejoin="round" /><polyline points="61,830 75,829.6 90,826.7 105,824.9 120,824.9 135,823.1 150,820.6 165,822.9 180,826.7 195,828.4 210,829.7 222,832.1 233,832.5 240,823.6 246,801.5 252,756.6 258,712.4 265.7,672.2 272,746.3 279,841 287,952 291,928 296,898 303,850 309,823.9 318,816.4 330,816.9 345,819.1 360,819.4 375,817.4 390,816.8 405,817 420,815.2 435,813.1 450,813.9 465,815.8 480,815.5 491,815.1" fill="none" stroke="#ffffff" stroke-width="1.3" stroke-linejoin="round" /><polyline points="61,763.8 75,763.9 90,762.9 105,761.2 120,762.1 135,763.8 150,762.8 165,762.5 180,764 195,765.7 210,765.4 222,765.7 233,765.9 240,760.7 246,738.9 252,699 258,655 265.7,615 272,704.4 279,799.1 287,907.4 291,883.4 296,853.6 303,805.7 309,779.7 318,774.4 330,772 345,770.8 360,771.5 375,770.8 390,769.6 405,771.2 420,773.3 435,772.5 450,770.9 465,771.2 480,770.9 491,769.1" fill="none" stroke="#ffffff" stroke-width="1.3" stroke-linejoin="round" /><polyline points="61,827.5 75,825.5 90,824.9 105,826.5 120,826.6 135,824.4 150,823.3 165,825.3 180,825.4 195,824.9 210,827.5 222,830.8 233,830.7 240,823.1 246,801.1 252,756.4 258,712.5 265.7,672.6 272,754 279,848.8 287,960.8 291,936.7 296,906.6 303,858.3 309,832.1 318,824.8 330,825.3 345,825 360,823.4 375,823.9 390,826.2 405,826.4 420,824.8 435,824.7 450,825 465,823 480,820.9 491,821.3" fill="none" stroke="#ffffff" stroke-width="1.3" stroke-linejoin="round" /><polyline points="61,763.6 75,764.3 90,764 105,762.4 120,763 135,764.3 150,762.7 165,761.9 180,763.2 195,765.2 210,765.6 222,766.3 233,766.7 240,761 246,739.3 252,699.4 258,655.4 265.7,615.3 272,690.5 279,785 287,893.2 291,869.3 296,839.4 303,791.4 309,765.4 318,759.5 330,757.1 345,756.1 360,757.4 375,757.4 390,756.5 405,757.8 420,759.6 435,758.3 450,756.1 465,756.1 480,756 491,754.7" fill="none" stroke="#ffffff" stroke-width="1.3" stroke-linejoin="round" /><polyline points="61,827.3 75,826.6 90,825.1 105,822.1 120,821.4 135,823.2 150,823.6 165,824.4 180,826.6 195,829.3 210,829.5 222,828.8 233,827.6 240,822.2 246,800.3 252,755.8 258,711.8 265.7,671.7 272,756.4 279,851 287,963.7 291,939.9 296,910 303,862.3 309,836.4 318,832.4 330,830.8 345,829.4 360,829.7 375,828.5 390,825.8 405,825.7 420,827.8 435,828.2 450,827.5 465,828.6 480,829.6 491,828.5" fill="none" stroke="#ffffff" stroke-width="1.3" stroke-linejoin="round" /><polyline points="61,825.8 75,824.6 90,825.9 105,826.5 120,824.7 135,823.5 150,823.6 165,824.1 180,823.2 195,824.7 210,828.4 222,830.3 233,829.2 240,822.4 246,800.5 252,756 258,712.2 265.7,672.4 272,749.1 279,843.6 287,954.6 291,930.5 296,900.4 303,852.3 309,826.3 318,820 330,819.7 345,817.9 360,817.6 375,819.8 390,820.6 405,819.3 420,819 435,819.7 450,818.2 465,815.6 480,815.6 491,816.8" fill="none" stroke="#ffffff" stroke-width="1.3" stroke-linejoin="round" /><polyline points="61,825.7 75,824.7 90,824.6 105,823.1 120,822.2 135,823.9 150,824.9 165,825.1 180,825.5 195,827.5 210,828.6 222,828.2 233,826.7 240,821.9 246,800.1 252,755.7 258,711.9 265.7,672 272,758 279,852.6 287,965 291,941.5 296,911.5 303,863.7 309,837.8 318,833.9 330,832 345,829.4 360,829.2 375,829.5 390,828.1 405,827.7 420,830.1 435,831.3 450,829.9 465,829.1 480,829.7 491,829" fill="none" stroke="#ffffff" stroke-width="1.3" stroke-linejoin="round" /><polyline points="61,825.9 75,825.6 90,827 105,826.5 120,824.1 135,823 150,823 165,823 180,822.7 195,825.3 210,829.2 222,830.7 233,829.5 240,822.4 246,800.5 252,756.1 258,712.2 265.7,672.3 272,755.3 279,849.8 287,961.8 291,937.7 296,907.6 303,859.6 309,833.7 318,827.3 330,826.9 345,825.4 360,826.1 375,828.4 390,828.2 405,826.4 420,826.3 435,826.5 450,824.4 465,822.5 480,823.7 491,825" fill="none" stroke="#ffffff" stroke-width="1.3" stroke-linejoin="round" /><polyline points="61,827.3 75,824.6 90,824.1 105,823.4 120,821.7 135,821.9 150,823.9 165,825.9 180,825.9 195,827.4 210,829.6 222,829.8 233,827.3 240,821.8 246,799.8 252,755.4 258,711.5 265.7,671.7 272,752.6 279,847.2 287,959.1 291,935.1 296,905.1 303,857.2 309,831.3 318,827.4 330,827.2 345,824.6 360,822.9 375,823.2 390,822.5 405,820.9 420,821.8 435,824.2 450,824.3 465,823 480,823.2 491,823.6" fill="none" stroke="#ffffff" stroke-width="1.3" stroke-linejoin="round" /><polyline points="61,825.3 75,825.5 90,824.3 105,822.8 120,824.1 135,825.4 150,823.9 165,823.7 180,825.5 195,826.8 210,826.5 222,827.3 233,827.8 240,822.2 246,800.4 252,755.9 258,711.9 265.7,671.8 272,755.6 279,850.3 287,962.9 291,939 296,909.1 303,861.1 309,835.1 318,829.3 330,827 345,826.4 360,827.1 375,826.1 390,825.4 405,827.2 420,828.9 435,827.7 450,826.3 465,826.7 480,826 491,824.2" fill="none" stroke="#ffffff" stroke-width="1.3" stroke-linejoin="round" /><polyline points="61,768 75,766.3 90,766.1 105,766.1 120,763.7 135,760.9 150,760.7 165,763 180,763.6 195,765.4 210,769.6 222,772.2 233,770.8 240,762.2 246,740.1 252,700.1 258,656.1 265.7,616.2 272,707.5 279,802 287,910 291,885.8 296,855.7 303,807.6 309,781.6 318,774.7 330,776.1 345,775.9 360,775.2 375,776.3 390,776.8 405,774.5 420,772.4 435,772.8 450,772.9 465,771.5 480,771.9 491,773.8" fill="none" stroke="#ffffff" stroke-width="1.3" stroke-linejoin="round" /><polyline points="61,825.5 75,826.7 90,825.5 105,823.4 120,823.4 135,822.9 150,820.1 165,820.1 180,822.9 195,825.6 210,826.7 222,828.5 233,829.4 240,821.5 246,799.6 252,755.2 258,711.1 265.7,670.8 272,754.8 279,849.4 287,961.8 291,937.8 296,907.9 303,859.9 309,833.8 318,826.3 330,825.2 345,826.5 360,828.4 375,827.7 390,826.7 405,827.4 420,827.1 435,824.5 450,823.1 465,824.2 480,824.7 491,824" fill="none" stroke="#ffffff" stroke-width="1.3" stroke-linejoin="round" /><polyline points="61,766.6 75,764.7 90,764.9 105,764.2 120,762.9 135,763.8 150,765.4 165,766.2 180,765.9 195,767.5 210,769.3 222,769.3 233,767.4 240,762.4 246,740.5 252,700.7 258,656.9 265.7,617.1 272,702.9 279,797.5 287,905.5 291,881.5 296,851.5 303,803.7 309,777.8 318,773.7 330,772.6 345,769.7 360,768.7 375,769.4 390,768.7 405,767.8 420,769.5 435,771.4 450,770.5 465,768.9 480,769.2 491,769.1" fill="none" stroke="#ffffff" stroke-width="1.3" stroke-linejoin="round" /><polyline points="61,826.9 75,825.4 90,824.9 105,822.9 120,820 135,819.5 150,820.8 165,822.5 180,823.7 195,826.8 210,829.8 222,830.1 233,827.7 240,820.8 246,798.8 252,754.5 258,710.5 265.7,670.6 272,749 279,843.5 287,954.7 291,930.6 296,900.7 303,852.8 309,827 318,822.3 330,822.6 345,821.2 360,820.9 375,821.3 390,819.5 405,816.9 420,817 435,818.4 450,818.1 465,817.8 480,819.6 491,820.7" fill="none" stroke="#ffffff" stroke-width="1.3" stroke-linejoin="round" /><polyline points="61,767.6 75,767.8 90,768.4 105,766.4 120,763.6 135,763 150,762.8 165,762.9 180,763.9 195,767.6 210,771 222,771.9 233,770.6 240,763.2 246,741.3 252,701.4 258,657.4 265.7,617.3 272,703.8 279,798.2 287,906.1 291,882 296,852 303,804.1 309,778.3 318,772.1 330,771.8 345,771 360,772.3 375,773.7 390,772.2 405,770.1 420,770.1 435,769.9 450,768 465,767.5 480,769.7 491,770.8" fill="none" stroke="#ffffff" stroke-width="1.3" stroke-linejoin="round" /><polyline points="61,769.9 75,769.8 90,766.9 105,764.5 120,764.4 135,763.3 150,760.9 165,762.9 180,766.9 195,769.1 210,769.9 222,771.8 233,772.1 240,763.6 246,741.6 252,701.4 258,657.2 265.7,616.9 272,697.8 279,792.4 287,900.7 291,876.8 296,846.9 303,798.9 309,772.9 318,765.8 330,765.9 345,767.9 360,768.5 375,766.4 390,765.1 405,765.3 420,764.2 435,762.1 450,762.7 465,764.8 480,765 491,764.3" fill="none" stroke="#ffffff" stroke-width="1.3" stroke-linejoin="round" /><polyline points="61,823 75,822.3 90,823.6 105,823.4 120,822 135,822.1 150,822.4 165,822.2 180,821.5 195,823.4 210,826.1 222,827 233,826 240,820.1 246,798.3 252,754.3 258,710.4 265.7,670.6 272,764.8 279,859.3 287,965 291,949 296,919 303,871 309,845 318,839.5 330,838.3 345,835.9 360,836 375,837.9 390,838 405,837.1 420,838.2 435,838.9 450,836.8 465,834.7 480,835 491,835.4" fill="none" stroke="#ffffff" stroke-width="1.3" stroke-linejoin="round" /><polyline points="61,823.6 75,824 90,822.7 105,821.7 120,823.1 135,823.3 150,820.7 165,820.8 180,822.8 195,824 210,824.2 222,825.9 233,827.1 240,820.4 246,798.5 252,754.3 258,710.2 265.7,670.1 272,764.5 279,859.2 287,965 291,949.4 296,919.4 303,871.4 309,845.2 318,838.3 330,836.5 345,836.9 360,837.8 375,836.9 390,836.9 405,838.8 420,839.3 435,837.2 450,836 465,836.4 480,835.4 491,833.9" fill="none" stroke="#ffffff" stroke-width="1.3" stroke-linejoin="round" /><polyline points="61,769.1 75,767.5 90,766.9 105,767.9 120,767.2 135,764.2 150,762.8 165,765 180,765.7 195,766.1 210,769.4 222,772.8 233,772.7 240,764.1 246,742 252,702 258,658 265.7,618 272,702.6 279,797.3 287,905.4 291,881.3 296,851.1 303,802.8 309,776.7 318,768.9 330,769.9 345,770.4 360,769.4 375,770 390,771.7 405,771.1 420,768.8 435,768.3 450,768.6 465,767.1 480,765.8 491,766.8" fill="none" stroke="#ffffff" stroke-width="1.3" stroke-linejoin="round" /><polyline points="61,825.2 75,824.3 90,824.8 105,824 120,821 135,819.2 150,819.4 165,820.6 180,821.1 195,823.9 210,828.1 222,829.7 233,828 240,820.1 246,798.1 252,754 258,710.1 265.7,670.1 272,761.9 279,856.4 287,965 291,945.6 296,915.5 303,867.5 309,841.6 318,835.2 330,835.9 345,835 360,835.2 375,836.8 390,836.3 405,833.7 420,832.7 435,833.2 450,832.2 465,831 480,832.4 491,834.2" fill="none" stroke="#ffffff" stroke-width="1.3" stroke-linejoin="round" /><polyline points="61,824.2 75,823.7 90,821.5 105,819.5 120,820.7 135,822.2 150,821.2 165,822 180,824.5 195,825.7 210,825 222,825.3 233,825.3 240,819.8 246,797.9 252,753.8 258,709.7 265.7,669.6 272,749.4 279,844.1 287,955.8 291,931.9 296,902.1 303,854.2 309,828.2 318,823.1 330,821.2 345,820.7 360,820.7 375,818.8 390,817.4 405,819.1 420,820.7 435,820.1 450,819.7 465,820.8 480,820.2 491,818.2" fill="none" stroke="#ffffff" stroke-width="1.3" stroke-linejoin="round" /><polyline points="61,825.6 75,822.2 90,820.5 105,821.1 120,820.7 135,819.7 150,820.7 165,824 180,824.4 195,824 210,825.9 222,827.5 233,825.9 240,819.5 246,797.4 252,753.2 258,709.3 265.7,669.6 272,760.1 279,854.9 287,965 291,944.2 296,914.1 303,866 309,840 318,835 330,835.6 345,834.2 360,831.3 375,830.7 390,831.6 405,831.1 420,830.5 435,832.4 450,833.9 465,832.6 480,831 491,831.1" fill="none" stroke="#ffffff" stroke-width="1.3" stroke-linejoin="round" /><polyline points="61,768.8 75,765.8 90,765.4 105,765.8 120,764.8 135,764.4 150,765.9 165,768.2 180,767.7 195,768 210,770.3 222,771.4 233,769.4 240,763.7 246,741.7 252,701.8 258,658 265.7,618.2 272,705.5 279,800.2 287,908.3 291,884.3 296,854.2 303,806.2 309,780.2 318,775.6 330,775.6 345,773.2 360,770.9 375,771.4 390,772 405,771 420,771.3 435,773.5 450,773.9 465,771.9 480,771 491,771.3" fill="none" stroke="#ffffff" stroke-width="1.3" stroke-linejoin="round" /><polyline points="61,769.7 75,769.1 90,767.3 105,767.2 120,767.6 135,765.3 150,762.5 165,764.4 180,766.7 195,767.4 210,769.3 222,772.6 233,773.4 240,764.7 246,742.6 252,702.4 258,658.3 265.7,618.2 272,711.1 279,805.8 287,914 291,890 296,859.9 303,811.7 309,785.5 318,777.3 330,777.7 345,779.4 360,779.4 375,778.6 390,779.6 405,780.2 420,778.1 435,776.1 450,776.4 465,776.6 480,775.2 491,775.2" fill="none" stroke="#ffffff" stroke-width="1.3" stroke-linejoin="round" /><polyline points="61,825.6 75,823.9 90,823.3 105,823.5 120,821.6 135,818.6 150,818 165,820.5 180,821.4 195,822.7 210,826.6 222,829.5 233,828.5 240,819.8 246,797.6 252,753.4 258,709.4 265.7,669.5 272,754.2 279,848.8 287,960.9 291,936.7 296,906.6 303,858.4 309,832.4 318,825.1 330,826.6 345,826.9 360,826 375,826.7 390,827.6 405,825.7 420,823.4 435,823.4 450,823.9 465,822.7 480,822.5 491,824.1" fill="none" stroke="#ffffff" stroke-width="1.3" stroke-linejoin="round" /><polyline points="61,826.3 75,824.5 90,822.6 105,822.5 120,821.3 135,818.3 150,817.1 165,820.2 180,822.2 195,823.2 210,826.3 222,829.3 233,828.7 240,819.7 246,797.5 252,753.2 258,709.1 265.7,669.1 272,743.9 279,838.6 287,949 291,925 296,894.9 303,846.7 309,820.6 318,813.2 330,814.8 345,816 360,814.9 375,814.4 390,815.1 405,813.9 420,811.3 435,810.7 450,812 465,811.8 480,811.2 491,812.2" fill="none" stroke="#ffffff" stroke-width="1.3" stroke-linejoin="round" /><polyline points="61,823.8 75,822.2 90,822.4 105,823.4 120,822.1 135,819.6 150,818.9 165,820.6 180,820.6 195,821.3 210,825 222,828 233,827.3 240,819.3 246,797.3 252,753.2 258,709.3 265.7,669.4 272,747.9 279,842.5 287,953.3 291,929.2 296,899 303,850.8 309,824.7 318,817.4 330,818.2 345,817.8 360,816.9 375,818.2 390,819.8 405,818.7 420,816.9 435,817 450,816.8 465,814.6 480,813.9 491,815.1" fill="none" stroke="#ffffff" stroke-width="1.3" stroke-linejoin="round" /><polyline points="61,771.4 75,769.5 90,765.9 105,764.6 120,765.6 135,765.3 150,764.2 165,767.3 180,770.5 195,770.7 210,770.6 222,772 233,771.8 240,764.8 246,742.7 252,702.6 258,658.5 265.7,618.4 272,691.2 279,786.1 287,894.5 291,870.7 296,840.7 303,792.7 309,766.7 318,761 330,761 345,761.7 360,760.1 375,757.3 390,756.9 405,757.9 420,757.5 435,757.1 450,758.9 465,760.3 480,758.8 491,757.4" fill="none" stroke="#ffffff" stroke-width="1.3" stroke-linejoin="round" /><polyline points="61,821.7 75,821.5 90,821 105,819.3 120,819.4 135,821.2 150,820.9 165,820.7 180,821.7 195,823.7 210,824 222,824 233,823.5 240,818.4 246,796.6 252,752.8 258,708.9 265.7,668.9 272,756.8 279,851.4 287,964.2 291,940.2 296,910.3 303,862.5 309,836.5 318,831.8 330,829.5 345,827.7 360,828.2 375,828 390,826.7 405,827.4 420,829.7 435,829.6 450,828 465,827.8 480,828 491,826.7" fill="none" stroke="#ffffff" stroke-width="1.3" stroke-linejoin="round" /><polyline points="61,769.3 75,767.4 90,767.5 105,767.1 120,765.9 135,766.5 150,768 165,769 180,768.5 195,769.9 210,771.9 222,772.2 233,770.3 240,765.1 246,743.2 252,703.4 258,659.6 265.7,619.8 272,701.6 279,796.2 287,904.2 291,880.2 296,850.2 303,802.3 309,776.4 318,772.1 330,771.2 345,768.4 360,767.2 375,768 390,767.6 405,766.7 420,768.2 435,770.1 450,769.2 465,767.5 480,767.5 491,767.6" fill="none" stroke="#ffffff" stroke-width="1.3" stroke-linejoin="round" /><polyline points="61,770.6 75,770.3 90,768.5 105,768.4 120,769.2 135,767.3 150,764.4 165,765.9 180,768.2 195,768.8 210,770.3 222,773.4 233,774.5 240,766.1 246,744 252,703.9 258,659.8 265.7,619.7 272,705.6 279,800.3 287,908.5 291,884.5 296,854.5 303,806.3 309,780.1 318,772 330,771.9 345,773.4 360,773.5 375,772.7 390,773.7 405,774.8 420,773.2 435,771 450,771 465,771.2 480,769.7 491,769.3" fill="none" stroke="#ffffff" stroke-width="1.3" stroke-linejoin="round" /><polyline points="61,770.6 75,767.6 90,766.9 105,767.2 120,766.1 135,765.6 150,767.2 165,769.7 180,769.5 195,769.8 210,772 222,773.1 233,771.1 240,765.2 246,743.2 252,703.3 258,659.4 265.7,619.7 272,705.1 279,799.8 287,907.9 291,883.9 296,853.8 303,805.8 309,779.9 318,775.3 330,775.5 345,773.2 360,770.9 375,771.1 390,771.5 405,770.4 420,770.7 435,772.9 450,773.5 465,771.7 480,770.9 491,771.3" fill="none" stroke="#ffffff" stroke-width="1.3" stroke-linejoin="round" /><polyline points="61,771.5 75,772 90,770 105,768 120,768 135,766.9 150,764.1 165,765.1 180,768.5 195,770.8 210,771.9 222,774.1 233,774.8 240,766.4 246,744.4 252,704.3 258,660.1 265.7,619.8 272,707 279,801.6 287,909.9 291,885.9 296,856 303,807.9 309,781.9 318,774.3 330,773.9 345,775.7 360,776.9 375,775.7 390,774.8 405,775.3 420,774.3 435,771.8 450,771.4 465,772.9 480,773 491,772.5" fill="none" stroke="#ffffff" stroke-width="1.3" stroke-linejoin="round" /><polyline points="61,825 75,821.7 90,819.3 105,819.2 120,818.4 135,816.8 150,817.5 165,821.3 180,822.8 195,823 210,824.9 222,826.7 233,825.1 240,817.8 246,795.7 252,751.7 258,707.7 265.7,667.8 272,755.9 279,850.7 287,963.3 291,939.3 296,909.3 303,861.2 309,835.2 318,829.9 330,831.1 345,830.7 360,828 375,826.8 390,827.1 405,826.1 420,824.9 435,826.3 450,828.4 465,828 480,826.9 491,827.2" fill="none" stroke="#ffffff" stroke-width="1.3" stroke-linejoin="round" /><polyline points="61,823.2 75,822.1 90,820.8 105,821.4 120,821.5 135,818.9 150,816.8 165,818.8 180,820.3 195,820.6 210,823 222,826.4 233,826.9 240,818.4 246,796.3 252,752.3 258,708.2 265.7,668.2 272,760.6 279,855.3 287,965 291,944.5 296,914.4 303,866.2 309,840 318,832 330,832.6 345,833.7 360,833 375,832.8 390,834.4 405,834.7 420,832.5 435,831.1 450,831.6 465,830.9 480,829.3 491,829.6" fill="none" stroke="#ffffff" stroke-width="1.3" stroke-linejoin="round" /><polyline points="61,771.9 75,770.4 90,769.6 105,770.2 120,769 135,766 150,764.8 165,767.2 180,768.2 195,768.9 210,772.4 222,775.7 233,775.3 240,766.5 246,744.4 252,704.3 258,660.3 265.7,620.3 272,702.6 279,797.3 287,905.4 291,881.2 296,851.1 303,802.9 309,776.8 318,769.1 330,770.3 345,770.9 360,770 375,770.5 390,771.9 405,770.8 420,768.4 435,767.9 450,768.4 465,767.2 480,766.4 491,767.6" fill="none" stroke="#ffffff" stroke-width="1.3" stroke-linejoin="round" /><polyline points="61,821.4 75,822.3 90,821.2 105,819.8 120,820.4 135,820.2 150,817.4 165,817.4 180,819.7 195,821.6 210,822.4 222,824.3 233,825.4 240,818 246,796.1 252,752.3 258,708.2 265.7,668 272,755.5 279,850.1 287,962.6 291,938.6 296,908.7 303,860.6 309,834.5 318,827.2 330,825.7 345,826.6 360,828 375,827.4 390,827 405,828.3 420,828.4 435,826 450,824.6 465,825.2 480,824.8 491,823.9" fill="none" stroke="#ffffff" stroke-width="1.3" stroke-linejoin="round" /><polyline points="61,770.9 75,769.1 90,767.8 105,769 120,769.9 135,768.1 150,766.7 165,768.8 180,769.5 195,768.8 210,770.6 222,773.6 233,773.9 240,766.5 246,744.5 252,704.4 258,660.4 265.7,620.6 272,706.1 279,800.9 287,909.1 291,885.1 296,854.9 303,806.7 309,780.5 318,773.4 330,773.5 345,773.5 360,771.9 375,771.6 390,773.6 405,774.5 420,773.3 435,772.8 450,773.4 465,772 480,769.6 491,769.4" fill="none" stroke="#ffffff" stroke-width="1.3" stroke-linejoin="round" /><polyline points="61,769.6 75,768.3 90,769.4 105,769.7 120,768.4 135,767.9 150,768.3 165,768.8 180,767.9 195,769.2 210,772.2 222,773.6 233,772.4 240,766.3 246,744.4 252,704.6 258,660.8 265.7,621 272,707.5 279,802.1 287,910.1 291,886 296,855.9 303,807.8 309,781.8 318,776.1 330,775.4 345,773.2 360,772.7 375,774.5 390,775.1 405,774.2 420,774.6 435,775.6 450,774.1 465,771.7 480,771.5 491,772.2" fill="none" stroke="#ffffff" stroke-width="1.3" stroke-linejoin="round" /><polyline points="61,822.4 75,821.5 90,820.4 105,817.6 120,816.1 135,817.3 150,818.2 165,819.2 180,821 195,823.9 210,825 222,824.5 233,822.8 240,817 246,795.1 252,751.4 258,707.4 265.7,667.4 272,754.3 279,848.8 287,961.1 291,937.2 296,907.3 303,859.6 309,833.8 318,829.7 330,828.6 345,827 360,827.1 375,826.5 390,824 405,823 420,824.6 435,825.5 450,824.8 465,825.4 480,826.9 491,826.5" fill="none" stroke="#ffffff" stroke-width="1.3" stroke-linejoin="round" /><polyline points="61,823.8 75,821 90,819.8 105,819 120,816.9 135,815.4 150,816.7 165,819.8 180,820.8 195,822.3 210,825.3 222,826.5 233,824.2 240,817 246,794.8 252,751 258,707.1 265.7,667.2 272,744.5 279,839.1 287,949.6 291,925.6 296,895.5 303,847.5 309,821.7 318,816.6 330,817.8 345,816.7 360,814.8 375,814.8 390,814.3 405,812 420,811.2 435,812.9 450,814 465,813.3 480,813.6 491,814.7" fill="none" stroke="#ffffff" stroke-width="1.3" stroke-linejoin="round" /><polyline points="61,770.6 75,770.2 90,769.5 105,767.6 120,767.7 135,769.5 150,769.3 165,769.3 180,770.6 195,772.5 210,772.7 222,772.6 233,772 240,767 246,745.1 252,705.3 258,661.4 265.7,621.4 272,706.5 279,801.2 287,909.4 291,885.5 296,855.6 303,807.7 309,781.8 318,777.2 330,775 345,773.3 360,773.7 375,773.2 390,771.7 405,772.4 420,774.6 435,774.7 450,773.3 465,773.4 480,773.5 491,772.2" fill="none" stroke="#ffffff" stroke-width="1.3" stroke-linejoin="round" /><polyline points="61,822.3 75,822.1 90,819.9 105,816.6 120,815.9 135,816.7 150,816.1 165,817.3 180,820.5 195,823.5 210,824 222,823.9 233,823.1 240,816.5 246,794.6 252,750.9 258,706.8 265.7,666.6 272,743.7 279,838.3 287,948.9 291,925 296,895.2 303,847.4 309,821.5 318,816.5 330,815.5 345,815.5 360,816.2 375,814.5 390,811.8 405,811.6 420,812.6 435,812 450,811.7 465,813.6 480,814.8 491,813.8" fill="none" stroke="#ffffff" stroke-width="1.3" stroke-linejoin="round" /><polyline points="61,821.4 75,820 90,817.2 105,816.4 120,818 135,818.3 150,816.9 165,818.9 180,821.4 195,821.4 210,820.9 222,822.3 233,822.6 240,816.4 246,794.3 252,750.6 258,706.6 265.7,666.5 272,755.5 279,850.3 287,963 291,939.1 296,909.2 303,861.2 309,835.1 318,829.3 330,828.3 345,828.5 360,827.4 375,825.1 390,825.1 405,827 420,827.3 435,826.6 450,827.4 465,828.2 480,826.3 491,824.5" fill="none" stroke="#ffffff" stroke-width="1.3" stroke-linejoin="round" /><polyline points="61,818.9 75,819.4 90,820 105,818.7 120,818 135,818.7 150,817.9 165,817.1 180,817.5 195,820.1 210,821.8 222,822.5 233,822.2 240,816.3 246,794.5 252,751 258,707.1 265.7,667.1 272,744 279,838.5 287,948.8 291,924.7 296,894.8 303,846.8 309,820.9 318,815 330,813.1 345,811.6 360,812.9 375,814 390,813.2 405,813.2 420,814.6 435,814 450,811.5 465,810.6 480,811.3 491,811" fill="none" stroke="#ffffff" stroke-width="1.3" stroke-linejoin="round" /><polyline points="61,774.3 75,774 90,771.6 105,770.1 120,770.1 135,768.3 150,765.7 165,767.7 180,771.1 195,772.7 210,774.1 222,776.7 233,777.2 240,768.5 246,746.4 252,706.2 258,662 265.7,621.8 272,711.8 279,806.5 287,914.8 291,890.8 296,860.8 303,812.7 309,786.6 318,778.9 330,779.3 345,781.3 360,781.6 375,780.1 390,779.8 405,780.1 420,778.4 435,776.3 450,776.8 465,778.1 480,777.7 491,777.4" fill="none" stroke="#ffffff" stroke-width="1.3" stroke-linejoin="round" /><polyline points="61,771.2 75,770.1 90,770.5 105,769.7 120,768.8 135,769.8 150,770.6 165,770.7 180,770.6 195,772.3 210,774 222,774.2 233,772.9 240,767.7 246,745.9 252,706.1 258,662.3 265.7,622.4 272,710.7 279,805.2 287,913.3 291,889.3 296,859.3 303,811.4 309,785.5 318,780.9 330,779.4 345,776.8 360,776.5 375,777.4 390,776.7 405,776.3 420,778.1 435,779.2 450,777.7 465,776.2 480,776.5 491,776.2" fill="none" stroke="#ffffff" stroke-width="1.3" stroke-linejoin="round" /><polyline points="61,818.7 75,818.7 90,818.3 105,816.7 120,816.8 135,818.4 150,817.9 165,817.6 180,818.6 195,820.6 210,821 222,821.2 233,820.8 240,815.6 246,793.8 252,750.4 258,706.5 265.7,666.5 272,751.5 279,846.1 287,957.9 291,933.9 296,904 303,856.2 309,830.2 318,825.2 330,823 345,821.3 360,821.9 375,821.8 390,820.6 405,821.4 420,823.5 435,823.3 450,821.6 465,821.3 480,821.4 491,820.2" fill="none" stroke="#ffffff" stroke-width="1.3" stroke-linejoin="round" /><polyline points="61,771.3 75,772.2 90,772.4 105,770.7 120,770.2 135,770.6 150,769 165,768.2 180,769.5 195,772.2 210,773.8 222,774.8 233,775 240,768.4 246,746.6 252,706.7 258,662.7 265.7,622.6 272,703.9 279,798.4 287,906.5 291,882.5 296,852.5 303,804.6 309,778.5 318,772.1 330,770.3 345,769.7 360,771.5 375,772.1 390,771.1 405,771.4 420,772.4 435,770.9 450,768.5 465,768.4 480,769.1 491,768.7" fill="none" stroke="#ffffff" stroke-width="1.3" stroke-linejoin="round" /><polyline points="61,773 75,771.4 90,771 105,772.1 120,771.5 135,769 150,767.9 165,769.8 180,770.1 195,770.4 210,773.6 222,776.8 233,776.5 240,768.4 246,746.4 252,706.4 258,662.4 265.7,622.5 272,706.4 279,801 287,909.1 291,885 296,854.8 303,806.6 309,780.5 318,773 330,773.7 345,773.6 360,772.6 375,773.3 390,775.1 405,774.6 420,772.8 435,772.5 450,772.6 465,770.8 480,769.5 491,770.4" fill="none" stroke="#ffffff" stroke-width="1.3" stroke-linejoin="round" /><polyline points="61,773.5 75,772.1 90,772.2 105,772.6 120,770.6 135,768.1 150,767.7 165,769.5 180,769.7 195,771.2 210,775.1 222,777.8 233,776.8 240,768.5 246,746.5 252,706.5 258,662.5 265.7,622.6 272,703 279,797.5 287,905.5 291,881.4 296,851.2 303,803.1 309,777 318,769.9 330,770.9 345,770.5 360,769.9 375,771.3 390,772.2 405,770.4 420,768.7 435,768.9 450,768.5 465,766.8 480,766.8 491,768.4" fill="none" stroke="#ffffff" stroke-width="1.3" stroke-linejoin="round" /><polyline points="61,775.3 75,774.6 90,771.6 105,769.6 120,769.5 135,768.2 150,766.2 165,768.7 180,772.5 195,774.2 210,775.1 222,777.1 233,777.2 240,768.8 246,746.7 252,706.5 258,662.3 265.7,622.1 272,706.2 279,800.9 287,909.2 291,885.3 296,855.3 303,807.3 309,781.3 318,774.4 330,774.8 345,776.6 360,776.5 375,774.4 390,773.4 405,773.6 420,772.3 435,770.7 450,771.7 465,773.5 480,773.3 491,772.8" fill="none" stroke="#ffffff" stroke-width="1.3" stroke-linejoin="round" /><polyline points="61,774.9 75,772.8 90,772.1 105,771 120,768.3 135,766.7 150,767.7 165,770.2 180,771.2 195,773.4 210,776.9 222,778.2 233,776 240,768.4 246,746.3 252,706.3 258,662.3 265.7,622.4 272,708.4 279,803 287,911 291,886.9 296,856.9 303,808.9 309,783.1 318,777.6 330,778.7 345,777.8 360,776.8 375,777.2 390,776.5 405,773.9 420,772.9 435,774.2 450,774.6 465,773.9 480,774.9 491,776.3" fill="none" stroke="#ffffff" stroke-width="1.3" stroke-linejoin="round" /><polyline points="61,773.2 75,771.8 90,769.5 105,769.5 120,771.2 135,770.9 150,769.2 165,771 180,772.9 195,772.5 210,772.6 222,774.7 233,775.3 240,768.6 246,746.6 252,706.6 258,662.5 265.7,622.6 272,711.8 279,806.6 287,915 291,891 296,861 303,812.9 309,786.7 318,780.3 330,779.5 345,779.7 360,778.6 375,777 390,777.8 405,779.7 420,779.5 435,778.6 450,779.3 465,779.3 480,777 491,775.6" fill="none" stroke="#ffffff" stroke-width="1.3" stroke-linejoin="round" /><polyline points="61,773.2 75,773.9 90,772.5 105,771.2 120,771.7 135,771 150,768.1 165,768.5 180,771.1 195,772.9 210,773.9 222,776.1 233,777.1 240,769.3 246,747.4 252,707.3 258,663.2 265.7,623 272,707.9 279,802.5 287,910.8 291,886.8 296,856.8 303,808.7 309,782.6 318,775 330,774 345,775.3 360,776.5 375,775.8 390,775.5 405,776.6 420,776.1 435,773.6 450,772.6 465,773.4 480,773 491,772.2" fill="none" stroke="#ffffff" stroke-width="1.3" stroke-linejoin="round" /><polyline points="61,771.8 75,771.2 90,771.5 105,770.3 120,769.7 135,771 150,771.3 165,771 180,771.3 195,773.3 210,774.5 222,774.6 233,773.7 240,768.6 246,746.8 252,707 258,663.1 265.7,623.2 272,715.9 279,810.5 287,918.6 291,894.6 296,864.7 303,816.8 309,790.8 318,786.1 330,784.2 345,781.9 360,782.2 375,782.8 390,781.8 405,781.9 420,783.8 435,784.4 450,782.6 465,781.6 480,781.9 491,781.3" fill="none" stroke="#ffffff" stroke-width="1.3" stroke-linejoin="round" /><polyline points="61,773.4 75,772 90,770.2 105,770.8 120,772.2 135,771 150,769.2 165,771 180,772.4 195,771.9 210,772.8 222,775.5 233,776.2 240,769 246,747 252,706.9 258,662.9 265.7,623 272,714.9 279,809.7 287,918 291,894 296,864 303,815.8 309,789.6 318,782.5 330,782.1 345,782.5 360,781.3 375,780.4 390,781.9 405,783.4 420,782.6 435,781.6 450,782.1 465,781.5 480,779.1 491,778.2" fill="none" stroke="#ffffff" stroke-width="1.3" stroke-linejoin="round" /><polyline points="61,773.9 75,772.1 90,769.5 105,769.4 120,771 135,770.7 150,769.4 165,771.7 180,773.7 195,773.2 210,773.2 222,775.1 233,775.4 240,768.9 246,746.8 252,706.8 258,662.7 265.7,622.7 272,696 279,790.9 287,899.3 291,875.4 296,845.4 303,797.3 309,771.1 318,765.1 330,764.5 345,764.6 360,763.1 375,761.2 390,761.8 405,763.5 420,763.4 435,762.8 450,763.9 465,764.1 480,761.8 491,760.4" fill="none" stroke="#ffffff" stroke-width="1.3" stroke-linejoin="round" /><polyline points="61,820.2 75,819.3 90,818.3 105,815.5 120,813.8 135,814.8 150,815.6 165,816.6 180,818.5 195,821.6 210,822.8 222,822.4 233,820.7 240,814.7 246,792.8 252,749.4 258,705.5 265.7,665.4 272,750.8 279,845.4 287,957.1 291,933.1 296,903.3 303,855.5 309,829.7 318,825.4 330,824.5 345,823.1 360,823.3 375,822.8 390,820.3 405,819.1 420,820.5 435,821.2 450,820.6 465,821.2 480,822.8 491,822.5" fill="none" stroke="#ffffff" stroke-width="1.3" stroke-linejoin="round" /><polyline points="61,775.5 75,774.9 90,772.6 105,771.9 120,771.8 135,769.6 150,767.1 165,769.3 180,772.2 195,773.4 210,775.2 222,778.1 233,778.6 240,769.7 246,747.6 252,707.4 258,663.3 265.7,623.2 272,704.3 279,799 287,907.3 291,883.3 296,853.2 303,805.1 309,779 318,771.1 330,771.7 345,773.6 360,773.5 375,772.4 390,772.7 405,772.9 420,770.8 435,768.9 450,769.5 465,770.3 480,769.5 491,769.5" fill="none" stroke="#ffffff" stroke-width="1.3" stroke-linejoin="round" /><polyline points="61,819.7 75,818.1 90,817.6 105,818.5 120,817.9 135,815.3 150,814 165,816.1 180,816.6 195,817 210,820.1 222,823.4 233,823.1 240,814.9 246,792.8 252,749.4 258,705.4 265.7,665.5 272,756.2 279,850.8 287,963.3 291,939.1 296,909 303,860.8 309,834.6 318,827.1 330,827.8 345,828 360,827.1 375,827.7 390,829.4 405,828.8 420,826.9 435,826.4 450,826.6 465,825.1 480,823.8 491,824.7" fill="none" stroke="#ffffff" stroke-width="1.3" stroke-linejoin="round" /><polyline points="61,818.6 75,818.2 90,816.6 105,814.5 120,815 135,816.6 150,816.1 165,816.6 180,818.7 195,820.4 210,820.1 222,820.1 233,819.8 240,814.4 246,792.6 252,749.2 258,705.2 265.7,665.2 272,755.9 279,850.6 287,963.3 291,939.4 296,909.5 303,861.7 309,835.7 318,830.9 330,829 345,827.9 360,828.1 375,826.8 390,825.2 405,826.3 420,828.2 435,827.9 450,827.1 465,827.9 480,827.8 491,826.1" fill="none" stroke="#ffffff" stroke-width="1.3" stroke-linejoin="round" /><polyline points="61,819.3 75,819.6 90,819.8 105,817.5 120,815.1 135,814.7 150,814.2 165,814.4 180,815.9 195,819.6 210,822.5 222,823.2 233,822.1 240,814.8 246,792.9 252,749.5 258,705.5 265.7,665.4 272,755.3 279,849.7 287,961.9 291,937.9 296,907.9 303,860 309,834.2 318,828.1 330,827.6 345,827 360,828.4 375,829.3 390,827.5 405,825.8 420,826 435,825.6 450,823.8 465,823.8 480,825.9 491,826.6" fill="none" stroke="#ffffff" stroke-width="1.3" stroke-linejoin="round" /><polyline points="61,772.4 75,773.3 90,772.9 105,771.4 120,771.6 135,772.2 150,770.4 165,769.7 180,771.3 195,773.5 210,774.3 222,775.5 233,776 240,769.6 246,747.8 252,707.8 258,663.8 265.7,623.7 272,701.3 279,795.8 287,904 291,880 296,850.1 303,802.1 309,776.1 318,769.6 330,767.6 345,767.3 360,768.8 375,768.8 390,768 405,769 420,770 435,768.4 450,766.4 465,766.5 480,766.6 491,765.6" fill="none" stroke="#ffffff" stroke-width="1.3" stroke-linejoin="round" /><polyline points="61,820.2 75,816.9 90,815.2 105,815.6 120,815.3 135,814.2 150,815 165,818.3 180,818.9 195,818.7 210,820.4 222,822.1 233,820.6 240,814.1 246,792 252,748.6 258,704.7 265.7,664.9 272,747.7 279,842.5 287,953.7 291,929.6 296,899.6 303,851.5 309,825.5 318,820.4 330,821 345,819.7 360,817 375,816.3 390,817.1 405,816.6 420,816.1 435,817.6 450,819.2 465,818 480,816.5 491,816.6" fill="none" stroke="#ffffff" stroke-width="1.3" stroke-linejoin="round" /><polyline points="61,821.3 75,818.3 90,815.5 105,815.2 120,815.1 135,813.7 150,813.7 165,817.5 180,819.4 195,819.4 210,820.8 222,822.7 233,821.6 240,814.3 246,792.1 252,748.6 258,704.6 265.7,664.7 272,752.8 279,847.7 287,959.8 291,935.8 296,905.8 303,857.8 309,831.7 318,826.1 330,827.1 345,827.1 360,824.7 375,823 390,823.3 405,823 420,821.8 435,822.6 450,824.7 465,824.8 480,823.3 491,823.2" fill="none" stroke="#ffffff" stroke-width="1.3" stroke-linejoin="round" /><polyline points="61,817.6 75,817.9 90,818.8 105,817.6 120,815.8 135,815.5 150,814.9 165,814.5 180,814.9 195,817.9 210,820.8 222,821.9 233,821.1 240,814.3 246,792.5 252,749.3 258,705.4 265.7,665.3 272,742.9 279,837.3 287,947.3 291,923.2 296,893.2 303,845.2 309,819.3 318,813 330,812 345,810.8 360,812 375,813.7 390,812.9 405,811.8 420,812.3 435,811.9 450,809.6 465,808.5 480,809.7 491,810.4" fill="none" stroke="#ffffff" stroke-width="1.3" stroke-linejoin="round" /><polyline points="61,821.5 75,819.5 90,816.5 105,815.5 120,815.1 135,813.1 150,812.1 165,815.6 180,818.5 195,819.4 210,821 222,823.3 233,822.7 240,814.3 246,792.1 252,748.6 258,704.5 265.7,664.4 272,760.2 279,855 287,965 291,944.5 296,914.5 303,866.4 309,840.4 318,833.8 330,835 345,836.2 360,834.8 375,833 390,832.9 405,832.5 420,830.5 435,830.1 450,832 465,832.9 480,832.1 491,832.1" fill="none" stroke="#ffffff" stroke-width="1.3" stroke-linejoin="round" /><polyline points="61,776.3 75,775.3 90,772 105,769.7 120,770.1 135,770.2 150,768.9 165,771.3 180,774.9 195,776.4 210,776.3 222,777.3 233,777 240,769.9 246,747.9 252,707.8 258,663.6 265.7,623.5 272,713.5 279,808.3 287,916.7 291,892.8 296,862.9 303,815 309,789 318,783.4 330,783 345,783.8 360,783.4 375,780.8 390,779.3 405,780 420,780 435,779.1 450,780.1 465,782 480,781.7 491,780.4" fill="none" stroke="#ffffff" stroke-width="1.3" stroke-linejoin="round" /><polyline points="61,820 75,820.3 90,818 105,815.6 120,815.3 135,814.5 150,812.2 165,813.5 180,817.1 195,819.6 210,820.6 222,822.3 233,822.6 240,814.4 246,792.4 252,749 258,704.8 265.7,664.5 272,751.1 279,845.7 287,957.6 291,933.6 296,903.7 303,855.7 309,829.7 318,822.7 330,822.4 345,824 360,825 375,823.5 390,822.1 405,822.3 420,821.5 435,819.4 450,819.3 465,821.1 480,821.6 491,821" fill="none" stroke="#ffffff" stroke-width="1.3" stroke-linejoin="round" /><polyline points="61,774.3 75,774.2 90,772.6 105,772.2 120,773.5 135,772.8 150,770.1 165,771 180,773 195,773.6 210,774.3 222,776.7 233,777.8 240,770.5 246,748.5 252,708.5 258,664.4 265.7,624.3 272,714.4 279,809.2 287,917.4 291,893.5 296,863.5 303,815.3 309,789.2 318,781.8 330,780.8 345,781.6 360,781.9 375,780.9 390,781.5 405,783.2 420,782.8 435,780.8 450,780.3 465,780.5 480,779 491,777.9" fill="none" stroke="#ffffff" stroke-width="1.3" stroke-linejoin="round" /><polyline points="61,818.1 75,819.1 90,818.1 105,816 120,815.7 135,815.4 150,812.9 165,812.9 180,815.6 195,818.3 210,819.6 222,821.2 233,821.8 240,814.1 246,792.2 252,748.9 258,704.8 265.7,664.6 272,755.5 279,850 287,962.5 291,938.5 296,908.6 303,860.6 309,834.6 318,827.4 330,826.3 345,827.2 360,829 375,828.5 390,827.4 405,827.8 420,827.7 435,825.5 450,824 465,825 480,825.6 491,825" fill="none" stroke="#ffffff" stroke-width="1.3" stroke-linejoin="round" /><polyline points="61,774.4 75,773.3 90,772.7 105,770.8 120,769.8 135,771.3 150,772.2 165,772.9 180,773.8 195,776 210,777 222,776.6 233,775.1 240,769.9 246,748.1 252,708.2 258,664.3 265.7,624.4 272,704.5 279,799.1 287,907.2 291,883.3 296,853.4 303,805.6 309,779.7 318,775.6 330,774.2 345,772 360,771.8 375,771.6 390,769.9 405,769.4 420,771.4 435,772.5 450,771.5 465,771.3 480,772 491,771.4" fill="none" stroke="#ffffff" stroke-width="1.3" stroke-linejoin="round" /><polyline points="61,819.8 75,819.5 90,816.7 105,813.8 120,813.6 135,813.7 150,812.4 165,814.1 180,817.8 195,820.2 210,820.5 222,821.3 233,821 240,813.7 246,791.7 252,748.3 258,704.2 265.7,664 272,747.6 279,842.2 287,953.5 291,929.6 296,899.8 303,851.9 309,825.9 318,820.2 330,819.6 345,820.5 360,820.9 375,818.8 390,816.7 405,816.9 420,817 435,815.9 450,816.2 465,818.3 480,818.8 491,817.8" fill="none" stroke="#ffffff" stroke-width="1.3" stroke-linejoin="round" /><polyline points="61,816.3 75,816.5 90,817.4 105,816.4 120,815.2 135,815.5 150,815 165,814.5 180,814.6 195,817 210,819.4 222,820.3 233,819.7 240,813.5 246,791.7 252,748.6 258,704.7 265.7,664.8 272,749.4 279,843.9 287,955 291,931 296,901 303,853 309,827 318,821.1 330,819.7 345,818 360,819 375,820.5 390,819.9 405,819.4 420,820.4 435,820.3 450,817.9 465,816.6 480,817.4 491,817.5" fill="none" stroke="#ffffff" stroke-width="1.3" stroke-linejoin="round" /><polyline points="61,818.9 75,817.3 90,817.1 105,817.5 120,815.7 135,813.1 150,812.5 165,814.5 180,815.1 195,816.3 210,820.1 222,822.9 233,822 240,813.6 246,791.6 252,748.3 258,704.3 265.7,664.4 272,749.1 279,843.7 287,954.8 291,930.7 296,900.6 303,852.4 309,826.4 318,819.2 330,820.2 345,820.2 360,819.4 375,820.4 390,821.4 405,819.8 420,817.9 435,817.9 450,817.9 465,816.4 480,816.2 491,817.6" fill="none" stroke="#ffffff" stroke-width="1.3" stroke-linejoin="round" /><polyline points="61,816.3 75,816.7 90,817.5 105,816.3 120,815 135,815.2 150,814.5 165,813.8 180,814.2 195,817 210,819.4 222,820.3 233,819.8 240,813.4 246,791.5 252,748.5 258,704.6 265.7,664.6 272,744.2 279,838.7 287,949 291,924.9 296,894.9 303,847 309,821 318,814.9 330,813.4 345,812.1 360,813.4 375,814.8 390,814.1 405,813.5 420,814.4 435,813.9 450,811.5 465,810.4 480,811.4 491,811.6" fill="none" stroke="#ffffff" stroke-width="1.3" stroke-linejoin="round" /><polyline points="61,818 75,817.1 90,815.6 105,816.1 120,816.7 135,814.6 150,812.3 165,814.1 180,815.7 195,815.9 210,817.8 222,821 233,821.6 240,813.4 246,791.4 252,748.1 258,704.1 265.7,664.1 272,744.9 279,839.6 287,950.2 291,926.2 296,896.1 303,847.9 309,821.7 318,813.8 330,814 345,815 360,814.4 375,814 390,815.5 405,816.2 420,814.5 435,813 450,813.3 465,812.7 480,811 491,810.9" fill="none" stroke="#ffffff" stroke-width="1.3" stroke-linejoin="round" /><polyline points="61,776.1 75,773.5 90,771.4 105,772 120,772.9 135,771.9 150,771.4 165,774.3 180,775.3 195,774.6 210,775.6 222,777.8 233,777.4 240,770.7 246,748.6 252,708.6 258,664.6 265.7,624.8 272,710.3 279,805.2 287,913.5 291,889.5 296,859.4 303,811.3 309,785.2 318,779.2 330,779.3 345,778.8 360,776.6 375,775.4 390,776.7 405,777.5 420,776.8 435,777.3 450,778.6 465,777.8 480,775.5 491,774.8" fill="none" stroke="#ffffff" stroke-width="1.3" stroke-linejoin="round" /><polyline points="61,817.1 75,814.8 90,814.5 105,815.7 120,815.3 135,814 150,814.2 165,816.1 180,815.6 195,815.5 210,818.1 222,820.3 233,819.3 240,812.8 246,790.8 252,747.7 258,703.8 265.7,664.1 272,750.3 279,845 287,956.4 291,932.3 296,902.2 303,854 309,828 318,822 330,822 345,820.5 360,818.7 375,819.4 390,821 405,820.6 420,820.1 435,821.2 450,821.2 465,819 480,817.5 491,817.9" fill="none" stroke="#ffffff" stroke-width="1.3" stroke-linejoin="round" /><polyline points="61,776.8 75,774.1 90,771.8 105,772.2 120,773 135,772.1 150,771.7 165,774.7 180,776.1 195,775.4 210,776.2 222,778.3 233,777.8 240,771.1 246,749 252,709 258,665 265.7,625.1 272,705.9 279,800.8 287,909.1 291,885.1 296,855.1 303,807 309,780.9 318,775.1 330,775.2 345,774.9 360,772.6 375,771.1 390,772.1 405,772.9 420,772.3 435,772.7 450,774.3 465,773.8 480,771.5 491,770.8" fill="none" stroke="#ffffff" stroke-width="1.3" stroke-linejoin="round" /><polyline points="61,777.1 75,776.2 90,773.2 105,770.9 120,771.5 135,772.2 150,771.2 165,773.1 180,776.3 195,777.7 210,777.4 222,778 233,777.8 240,771.3 246,749.3 252,709.2 258,665.1 265.7,625 272,707.8 279,802.5 287,911 291,887.1 296,857.2 303,809.3 309,783.3 318,778 330,777.2 345,777.5 360,777.1 375,774.6 390,773.1 405,774.1 420,774.7 435,774 450,774.6 465,776.4 480,775.9 491,774.4" fill="none" stroke="#ffffff" stroke-width="1.3" stroke-linejoin="round" /><polyline points="61,817.8 75,817 90,816.2 105,813.5 120,811.3 135,811.8 150,812.4 165,813.6 180,815.4 195,818.7 210,820.6 222,820.5 233,818.7 240,812.2 246,790.2 252,747.2 258,703.3 265.7,663.2 272,754 279,848.5 287,960.7 291,936.7 296,906.8 303,859 309,833.2 318,828.5 330,828.1 345,826.9 360,827.2 375,827 390,824.7 405,823 420,823.9 435,824.5 450,823.8 465,824.3 480,826.1 491,826.3" fill="none" stroke="#ffffff" stroke-width="1.3" stroke-linejoin="round" /><polyline points="61,775.8 75,775.9 90,774.5 105,773.7 120,774.8 135,774.3 150,771.7 165,772.2 180,774.4 195,775.4 210,776.1 222,778.3 233,779.4 240,772.1 246,750.1 252,710.1 258,666 265.7,625.9 272,705.9 279,800.6 287,908.8 291,884.9 296,854.9 303,806.8 309,780.6 318,773.3 330,772.2 345,773 360,773.6 375,772.7 390,773 405,774.6 420,774.3 435,772.2 450,771.5 465,771.8 480,770.7 491,769.6" fill="none" stroke="#ffffff" stroke-width="1.3" stroke-linejoin="round" /><polyline points="61,778.7 75,776.2 90,773 105,772.4 120,772.8 135,771.8 150,771.2 165,774.7 180,777.2 195,777.3 210,778 222,779.8 233,779.1 240,771.9 246,749.7 252,709.6 258,665.5 265.7,625.6 272,705.9 279,800.7 287,909.1 291,885.1 296,855.2 303,807.1 309,781.1 318,775.3 330,775.9 345,776.3 360,774.2 375,772 390,772.1 405,772.5 420,771.5 435,771.7 450,773.7 465,774.3 480,772.8 491,772.1" fill="none" stroke="#ffffff" stroke-width="1.3" stroke-linejoin="round" /><polyline points="61,776 75,776.2 90,774.8 105,774 120,775.1 135,774.6 150,771.9 165,772.5 180,774.6 195,775.7 210,776.4 222,778.6 233,779.6 240,772.3 246,750.4 252,710.4 258,666.3 265.7,626.2 272,709 279,803.7 287,911.9 291,887.9 296,858 303,809.9 309,783.7 318,776.4 330,775.2 345,776 360,776.7 375,775.8 390,776.1 405,777.6 420,777.4 435,775.3 450,774.5 465,774.9 480,773.8 491,772.7" fill="none" stroke="#ffffff" stroke-width="1.3" stroke-linejoin="round" /><polyline points="61,816.3 75,814.2 90,813.4 105,814.7 120,814.8 135,813.2 150,812.6 165,814.7 180,814.8 195,814.4 210,816.6 222,819.3 233,818.9 240,811.9 246,789.9 252,746.9 258,702.9 265.7,663.1 272,752.9 279,847.7 287,959.6 291,935.5 296,905.4 303,857.2 309,831 318,824.4 330,824.6 345,823.9 360,822.2 375,822.4 390,824.3 405,824.4 420,823.4 435,823.7 450,824.1 465,822.3 480,820.3 491,820.5" fill="none" stroke="#ffffff" stroke-width="1.3" stroke-linejoin="round" /><polyline points="61,818.9 75,817.3 90,815 105,814.3 120,813.7 135,811.2 150,809.7 165,812.8 180,815.3 195,816.4 210,818.7 222,821.4 233,821.1 240,812.2 246,790.1 252,746.9 258,702.8 265.7,662.7 272,757.6 279,852.4 287,965 291,941.2 296,911.2 303,863.1 309,837 318,829.7 330,831 345,832.4 360,831.5 375,830.3 390,830.6 405,830 420,827.7 435,826.9 450,828.2 465,828.6 480,828 491,828.4" fill="none" stroke="#ffffff" stroke-width="1.3" stroke-linejoin="round" /><polyline points="61,776 75,775.6 90,773.8 105,772.7 120,774.1 135,774.8 150,773.1 165,773.9 180,775.9 195,776.7 210,776.4 222,777.7 233,778.2 240,772.1 246,750.2 252,710.2 258,666.2 265.7,626.2 272,705.2 279,799.9 287,908.2 291,884.3 296,854.4 303,806.4 309,780.3 318,774.3 330,772.7 345,772.5 360,772.5 375,771.1 390,770.8 405,772.7 420,773.6 435,772.4 450,771.9 465,772.4 480,771.2 491,769.5" fill="none" stroke="#ffffff" stroke-width="1.3" stroke-linejoin="round" /><polyline points="61,818.2 75,815.8 90,814.6 105,813.9 120,811.7 135,809.9 150,810.5 165,813.6 180,814.8 195,816.4 210,819.5 222,821.2 233,819.2 240,811.5 246,789.3 252,746.3 258,702.4 265.7,662.5 272,753.4 279,848.1 287,960.1 291,936 296,906 303,857.9 309,832 318,826.3 330,827.6 345,827.1 360,825.6 375,825.6 390,825.3 405,823.2 420,821.8 435,823 450,824 465,823.4 480,823.7 491,824.9" fill="none" stroke="#ffffff" stroke-width="1.3" stroke-linejoin="round" /><polyline points="61,817.3 75,817.5 90,815.3 105,812.3 120,811.6 135,811.6 150,810.2 165,811.4 180,814.8 195,817.8 210,818.7 222,819.4 233,819.1 240,811.6 246,789.6 252,746.7 258,702.5 265.7,662.3 272,745.3 279,839.9 287,950.8 291,926.8 296,897 303,849.1 309,823.2 318,817.1 330,816.5 345,817.4 360,818.3 375,816.8 390,814.6 405,814.4 420,814.5 435,813.2 450,812.9 465,814.8 480,815.8 491,815.2" fill="none" stroke="#ffffff" stroke-width="1.3" stroke-linejoin="round" /><polyline points="61,818.4 75,816.1 90,813.1 105,812.2 120,812 135,810.4 150,809.6 165,813.2 180,816 195,816.6 210,817.9 222,819.9 233,819.2 240,811.3 246,789.1 252,746 258,701.9 265.7,661.9 272,749.2 279,844 287,955.6 291,931.6 296,901.6 303,853.6 309,827.5 318,821.3 330,822.3 345,823.2 360,821.5 375,819.6 390,819.4 405,819.2 420,817.7 435,817.6 450,819.5 465,820.3 480,819.4 491,819.1" fill="none" stroke="#ffffff" stroke-width="1.3" stroke-linejoin="round" /><polyline points="61,818.1 75,816 90,812.9 105,811.9 120,811.7 135,810.1 150,809.2 165,812.7 180,815.6 195,816.3 210,817.6 222,819.6 233,819 240,811 246,788.8 252,745.8 258,701.7 265.7,661.6 272,743.4 279,838.2 287,948.7 291,924.7 296,894.7 303,846.7 309,820.6 318,814.4 330,815.3 345,816.3 360,814.8 375,812.8 390,812.6 405,812.4 420,810.9 435,810.6 450,812.5 465,813.4 480,812.5 491,812.3" fill="none" stroke="#ffffff" stroke-width="1.3" stroke-linejoin="round" /><polyline points="61,776.8 75,775.1 90,775.7 105,776.4 120,775.3 135,774.3 150,774.5 165,775.6 180,774.9 195,775.8 210,778.8 222,780.6 233,779.5 240,773 246,751.1 252,711.2 258,667.3 265.7,627.5 272,717.2 279,811.8 287,919.8 291,895.7 296,865.6 303,817.5 309,791.5 318,785.5 330,785.2 345,783.4 360,782.5 375,784 390,785 405,784.1 420,784 435,784.9 450,784 465,781.7 480,781.1 491,781.8" fill="none" stroke="#ffffff" stroke-width="1.3" stroke-linejoin="round" /><polyline points="61,777.9 75,777.5 90,778 105,776.7 120,774.1 135,773 150,773 165,773.6 180,774.3 195,777.4 210,780.9 222,782.2 233,780.8 240,773.3 246,751.4 252,711.4 258,667.5 265.7,627.5 272,711.3 279,805.8 287,913.7 291,889.6 296,859.6 303,811.6 309,785.7 318,779.5 330,779.6 345,778.7 360,779.3 375,780.7 390,779.8 405,777.7 420,777.4 435,777.5 450,776.1 465,775.2 480,776.8 491,778" fill="none" stroke="#ffffff" stroke-width="1.3" stroke-linejoin="round" /><polyline points="61,778.8 75,778.7 90,777.9 105,775 120,773 135,773.1 150,773 165,773.7 180,775.9 195,779.5 210,781.5 222,781.8 233,780.5 240,773.5 246,751.5 252,711.6 258,667.5 265.7,627.4 272,706.7 279,801.2 287,909.3 291,885.3 296,855.4 303,807.6 309,781.8 318,776.3 330,775.8 345,775.3 360,776.4 375,776.2 390,773.8 405,772.4 420,772.9 435,772.7 450,771.6 465,772.5 480,774.4 491,774.6" fill="none" stroke="#ffffff" stroke-width="1.3" stroke-linejoin="round" /><polyline points="61,816.8 75,815.1 90,811.8 105,810.4 120,811.2 135,810.8 150,809.8 165,812.6 180,815.7 195,816.2 210,816.3 222,817.7 233,817.5 240,810.4 246,788.3 252,745.4 258,701.3 265.7,661.3 272,747 279,841.8 287,953.1 291,929.2 296,899.2 303,851.2 309,825.2 318,819.5 330,819.4 345,820 360,818.7 375,816.2 390,815.7 405,816.5 420,816.1 435,815.7 450,817.2 465,818.5 480,817.3 491,816.1" fill="none" stroke="#ffffff" stroke-width="1.3" stroke-linejoin="round" /><polyline points="61,776.7 75,777.3 90,777.3 105,775.9 120,775.6 135,776.2 150,774.8 165,774.2 180,775.3 195,777.7 210,779 222,780 233,780.1 240,773.8 246,751.9 252,712.1 258,668.1 265.7,628 272,710.5 279,805.1 287,913.2 291,889.2 296,859.2 303,811.3 309,785.3 318,779.1 330,777.2 345,776.4 360,777.8 375,778.3 390,777.4 405,777.9 420,779 435,777.9 450,775.7 465,775.4 480,775.9 491,775.2" fill="none" stroke="#ffffff" stroke-width="1.3" stroke-linejoin="round" /><polyline points="61,814.1 75,813.1 90,812.6 105,810.8 120,810.1 135,811.5 150,812.2 165,812.7 180,813.6 195,815.7 210,816.6 222,816.4 233,815.1 240,809.9 246,788 252,745.4 258,701.5 265.7,661.6 272,750.3 279,844.9 287,956.4 291,932.5 296,902.5 303,854.7 309,828.8 318,824.5 330,823 345,820.9 360,820.7 375,820.6 390,819.1 405,818.9 420,820.8 435,821.7 450,820.6 465,820.3 480,820.8 491,820.1" fill="none" stroke="#ffffff" stroke-width="1.3" stroke-linejoin="round" /><polyline points="61,813.7 75,812.8 90,812.6 105,811.2 120,810.5 135,811.8 150,812.4 165,812.7 180,813.2 195,815.1 210,816.3 222,816.3 233,815 240,809.9 246,788 252,745.5 258,701.6 265.7,661.7 272,755.4 279,850 287,962.4 291,938.4 296,908.4 303,860.6 309,834.7 318,830.2 330,828.6 345,826.4 360,826.2 375,826.5 390,825.3 405,825.1 420,827 435,827.9 450,826.6 465,825.8 480,826.2 491,825.6" fill="none" stroke="#ffffff" stroke-width="1.3" stroke-linejoin="round" /><polyline points="61,816.4 75,815.5 90,812.4 105,810 120,810.4 135,810.6 150,809.5 165,811.6 180,815 195,816.6 210,816.6 222,817.5 233,817.2 240,810.2 246,788.2 252,745.4 258,701.2 265.7,661.1 272,738 279,832.7 287,942.4 291,918.5 296,888.6 303,840.7 309,814.7 318,809.2 330,808.6 345,809.2 360,809 375,806.6 390,805 405,805.6 420,805.8 435,805 450,805.7 465,807.6 480,807.4 491,806.1" fill="none" stroke="#ffffff" stroke-width="1.3" stroke-linejoin="round" /><polyline points="61,816.8 75,814.5 90,813.5 105,812.7 120,810.5 135,808.6 150,809.2 165,812 180,813.2 195,814.9 210,818.2 222,819.9 233,818 240,810.2 246,788 252,745.3 258,701.3 265.7,661.3 272,741 279,835.6 287,945.4 291,921.3 296,891.2 303,843.2 309,817.3 318,811.5 330,812.7 345,812.3 360,811 375,811.1 390,810.8 405,808.6 420,807.3 435,808.3 450,809 465,808.4 480,808.9 491,810.1" fill="none" stroke="#ffffff" stroke-width="1.3" stroke-linejoin="round" /><polyline points="61,815.7 75,813.3 90,812.5 105,811.5 120,809.6 135,809.3 150,810.9 165,813.1 180,813.7 195,815.4 210,817.7 222,818.2 233,816 240,809.8 246,787.7 252,745.1 258,701.2 265.7,661.3 272,744.5 279,839.2 287,949.6 291,925.6 296,895.6 303,847.7 309,821.9 318,817.5 330,817.6 345,815.7 360,814.3 375,814.3 390,813.5 405,811.7 420,812.1 435,814 450,814.3 465,813.5 480,813.9 491,814.4" fill="none" stroke="#ffffff" stroke-width="1.3" stroke-linejoin="round" /><polyline points="61,815.6 75,814.4 90,813.7 105,811.5 120,809.2 135,809.2 150,810.1 165,811.6 180,813 195,816 210,818.3 222,818.5 233,816.4 240,809.8 246,787.9 252,745.2 258,701.3 265.7,661.3 272,753.8 279,848.3 287,960.4 291,936.4 296,906.5 303,858.6 309,832.8 318,828.1 330,828 345,826.7 360,826.5 375,826.6 390,824.7 405,822.7 420,823.2 435,824.3 450,823.9 465,823.9 480,825.5 491,826" fill="none" stroke="#ffffff" stroke-width="1.3" stroke-linejoin="round" /><polyline points="61,815 75,813.2 90,812.6 105,811 120,809.3 135,809.8 150,811.2 165,812.7 180,813.5 195,815.7 210,817.5 222,817.5 233,815.4 240,809.6 246,787.7 252,745.1 258,701.2 265.7,661.3 272,744.1 279,838.7 287,949.1 291,925.1 296,895.2 303,847.3 309,821.5 318,817.3 330,816.9 345,814.8 360,813.9 375,814 390,812.5 405,811.1 420,812.2 435,813.8 450,813.5 465,813 480,813.8 491,814" fill="none" stroke="#ffffff" stroke-width="1.3" stroke-linejoin="round" /><polyline points="61,779.9 75,778.7 90,775.6 105,773.7 120,774.4 135,774.7 150,773.7 165,775.9 180,779 195,780.1 210,779.8 222,780.8 233,780.6 240,773.9 246,751.9 252,711.8 258,667.7 265.7,627.6 272,721.6 279,816.3 287,924.7 291,900.9 296,871 303,823 309,797 318,791.5 330,790.9 345,791.3 360,790.6 375,788.1 390,787 405,788 420,788.3 435,787.7 450,788.6 465,790.1 480,789.4 491,787.9" fill="none" stroke="#ffffff" stroke-width="1.3" stroke-linejoin="round" /><polyline points="61,778.5 75,777.6 90,775.3 105,774.4 120,775.9 135,776.3 150,774.8 165,776.1 180,778.3 195,778.8 210,778.5 222,779.8 233,780.3 240,774 246,752.1 252,712.1 258,668 265.7,628 272,716.4 279,811.2 287,919.5 291,895.6 296,865.7 303,817.7 309,791.6 318,785.7 330,784.4 345,784.3 360,783.8 375,782.1 390,781.9 405,783.7 420,784.4 435,783.4 450,783.5 465,784.1 480,782.6 491,780.9" fill="none" stroke="#ffffff" stroke-width="1.3" stroke-linejoin="round" /><polyline points="61,777.6 75,775.9 90,776.3 105,776.2 120,775.2 135,775.3 150,776.1 165,777 180,776.5 195,777.7 210,779.9 222,780.8 233,779.4 240,773.7 246,751.8 252,712 258,668.2 265.7,628.4 272,718 279,812.6 287,920.7 291,896.6 296,866.6 303,818.6 309,792.6 318,787.7 330,786.8 345,784.4 360,783.5 375,784.5 390,784.7 405,783.9 420,784.9 435,786.2 450,785.3 465,783.3 480,783.1 491,783.3" fill="none" stroke="#ffffff" stroke-width="1.3" stroke-linejoin="round" /><polyline points="61,780.3 75,777.4 90,774.9 105,775 120,775 135,773.9 150,774 165,777.4 180,778.9 195,778.7 210,780 222,781.9 233,780.8 240,773.9 246,751.8 252,711.7 258,667.7 265.7,627.8 272,715 279,809.8 287,918.1 291,894.1 296,864.1 303,816 309,790 318,784.5 330,785.1 345,784.7 360,782.3 375,780.8 390,781.4 405,781.3 420,780.5 435,781.4 450,783.2 465,782.9 480,781.2 491,780.9" fill="none" stroke="#ffffff" stroke-width="1.3" stroke-linejoin="round" /><polyline points="61,778.2 75,777.3 90,778.2 105,778 120,776 135,774.6 150,774.5 165,775.2 180,775 195,777.1 210,780.7 222,782.5 233,781.4 240,774.2 246,752.2 252,712.3 258,668.4 265.7,628.5 272,712.2 279,806.7 287,914.6 291,890.5 296,860.4 303,812.3 309,786.4 318,779.9 330,779.9 345,778.7 360,778.8 375,780.5 390,780.8 405,779.2 420,778.7 435,779 450,777.6 465,775.8 480,776.4 491,777.6" fill="none" stroke="#ffffff" stroke-width="1.3" stroke-linejoin="round" /><polyline points="61,815.9 75,815.4 90,812.7 105,810 120,809.8 135,810 150,808.8 165,810.5 180,814 195,816.3 210,816.6 222,817.4 233,817 240,809.9 246,787.8 252,745.1 258,700.9 265.7,660.8 272,739.9 279,834.6 287,944.5 291,920.6 296,890.7 303,842.9 309,816.9 318,811.2 330,810.7 345,811.4 360,811.6 375,809.6 390,807.6 405,807.8 420,808 435,807 450,807.3 465,809.3 480,809.7 491,808.7" fill="none" stroke="#ffffff" stroke-width="1.3" stroke-linejoin="round" /><polyline points="61,815.4 75,815.8 90,813.9 105,811.4 120,810.9 135,810.3 150,808.2 165,809.3 180,812.6 195,815.3 210,816.5 222,817.9 233,818.1 240,810.1 246,788.1 252,745.4 258,701.2 265.7,661 272,753.9 279,848.5 287,960.8 291,936.8 296,906.9 303,859 309,833 318,826.1 330,825.6 345,826.9 360,828.1 375,826.8 390,825.3 405,825.4 420,824.9 435,823 450,822.5 465,824.2 480,824.9 491,824.3" fill="none" stroke="#ffffff" stroke-width="1.3" stroke-linejoin="round" /><polyline points="61,779.3 75,780.1 90,778.9 105,776.4 120,775.7 135,775.4 150,773.4 165,773.7 180,776.5 195,779.5 210,781 222,782.3 233,782.4 240,774.7 246,752.8 252,712.7 258,668.6 265.7,628.4 272,711.7 279,806.3 287,914.4 291,890.5 296,860.5 303,812.6 309,786.6 318,779.8 330,778.9 345,779.7 360,781.4 375,780.8 390,779.3 405,779.1 420,779.1 435,777.2 450,776 465,777.1 480,778.2 491,777.8" fill="none" stroke="#ffffff" stroke-width="1.3" stroke-linejoin="round" /><polyline points="61,780.6 75,778.9 90,777.8 105,777.8 120,776.4 135,773.7 150,772.8 165,775.4 180,776.8 195,777.9 210,781.2 222,784.1 233,783.3 240,774.7 246,752.5 252,712.4 258,668.4 265.7,628.4 272,711.2 279,805.8 287,913.9 291,889.8 296,859.7 303,811.6 309,785.5 318,778.3 330,779.6 345,780.1 360,779.2 375,779.4 390,780.1 405,778.8 420,776.5 435,776.3 450,777 465,776.2 480,775.9 491,777" fill="none" stroke="#ffffff" stroke-width="1.3" stroke-linejoin="round" /><polyline points="61,813.3 75,812.7 90,813.6 105,813.1 120,811 135,809.8 150,809.6 165,810.1 180,810.2 195,812.5 210,816.1 222,817.7 233,816.6 240,809.4 246,787.4 252,744.9 258,701 265.7,661.1 272,737.3 279,831.8 287,940.7 291,916.6 296,886.5 303,838.5 309,812.6 318,806.2 330,806 345,804.8 360,805.2 375,806.9 390,806.8 405,805.2 420,804.9 435,805.1 450,803.5 465,801.9 480,802.7 491,803.9" fill="none" stroke="#ffffff" stroke-width="1.3" stroke-linejoin="round" /><polyline points="61,813.7 75,812.6 90,811.8 105,809.8 120,808.7 135,809.9 150,810.8 165,811.7 180,812.8 195,815.1 210,816.2 222,816 233,814.4 240,808.9 246,787 252,744.6 258,700.6 265.7,660.7 272,748.9 279,843.5 287,954.8 291,930.9 296,901 303,853.2 309,827.3 318,823.2 330,822 345,820 360,819.7 375,819.5 390,817.7 405,817 420,818.7 435,819.7 450,819 465,818.9 480,819.7 491,819.2" fill="none" stroke="#ffffff" stroke-width="1.3" stroke-linejoin="round" /><polyline points="61,814.7 75,813.5 90,810.4 105,808.5 120,809.1 135,809.3 150,808.2 165,810.5 180,813.7 195,814.8 210,814.7 222,815.7 233,815.5 240,808.7 246,786.6 252,744 258,699.9 265.7,659.8 272,744.8 279,839.6 287,950.4 291,926.5 296,896.6 303,848.7 309,822.7 318,817.1 330,816.6 345,817.1 360,816.5 375,814 390,812.9 405,813.7 420,813.9 435,813.2 450,814.2 465,815.7 480,815.1 491,813.7" fill="none" stroke="#ffffff" stroke-width="1.3" stroke-linejoin="round" /><polyline points="61,812 75,811.9 90,810.9 105,809.3 120,809.8 135,811.1 150,810.3 165,810.4 180,811.8 195,813.5 210,813.7 222,814.2 233,814 240,808.5 246,786.7 252,744.3 258,700.3 265.7,660.3 272,744.2 279,838.9 287,949.4 291,925.5 296,895.6 303,847.7 309,821.7 318,816.4 330,814.4 345,813.3 360,813.7 375,813.1 390,812.1 405,813.1 420,814.8 435,814.3 450,813 465,813.2 480,813 491,811.6" fill="none" stroke="#ffffff" stroke-width="1.3" stroke-linejoin="round" /><polyline points="61,813.1 75,811.9 90,809.6 105,809.3 120,810.8 135,810.6 150,809.1 165,810.8 180,812.7 195,812.7 210,812.8 222,814.6 233,815.1 240,808.5 246,786.5 252,744 258,700 265.7,660 272,749.3 279,844.1 287,955.7 291,931.7 296,901.8 303,853.7 309,827.6 318,821.3 330,820.4 345,820.5 360,819.6 375,818 390,818.5 405,820.2 420,820.3 435,819.4 450,819.8 465,820 480,818.1 491,816.7" fill="none" stroke="#ffffff" stroke-width="1.3" stroke-linejoin="round" /><polyline points="61,780.3 75,780.3 90,780.3 105,778.2 120,775.8 135,775.4 150,775.1 165,775.5 180,777 195,780.5 210,783.3 222,784.1 233,782.9 240,775.6 246,753.6 252,713.7 258,669.7 265.7,629.6 272,712.2 279,806.7 287,914.7 291,890.6 296,860.7 303,812.8 309,786.9 318,780.9 330,780.6 345,780 360,781 375,781.8 390,780.1 405,778.4 420,778.5 435,778.3 450,776.8 465,776.8 480,778.6 491,779.4" fill="none" stroke="#ffffff" stroke-width="1.3" stroke-linejoin="round" /><polyline points="61,780.2 75,779.4 90,777 105,775.5 120,776.6 135,777.4 150,776.3 165,777.6 180,780.1 195,781 210,780.6 222,781.4 233,781.5 240,775.5 246,753.5 252,713.5 258,669.5 265.7,629.4 272,724.7 279,819.5 287,927.9 291,904 296,874.1 303,826.2 309,800.1 318,794.7 330,793.3 345,793.1 360,792.7 375,790.8 390,790 405,791.5 420,792.4 435,791.7 450,791.9 465,792.8 480,791.8 491,790.1" fill="none" stroke="#ffffff" stroke-width="1.3" stroke-linejoin="round" /><polyline points="61,781.4 75,779.8 90,779 105,779.3 120,778.1 135,775.4 150,774.4 165,776.7 180,777.7 195,778.7 210,782 222,784.9 233,784.4 240,775.9 246,753.8 252,713.7 258,669.7 265.7,629.7 272,702.2 279,796.9 287,904.9 291,880.8 296,850.7 303,802.5 309,776.5 318,769.1 330,770.1 345,770.6 360,769.8 375,770.1 390,771.1 405,770 420,768 435,767.6 450,768 465,767 480,766.4 491,767.4" fill="none" stroke="#ffffff" stroke-width="1.3" stroke-linejoin="round" /><polyline points="61,813.6 75,813 90,811.3 105,811 120,811.2 135,809.2 150,806.7 165,808.5 180,810.8 195,811.7 210,813.5 222,816.5 233,817.1 240,808.6 246,786.5 252,744 258,699.9 265.7,659.8 272,752.5 279,847.2 287,959.2 291,935.2 296,905.1 303,857 309,830.8 318,823 330,823.2 345,824.7 360,824.6 375,823.8 390,824.5 405,825 420,823.3 435,821.5 450,821.7 465,821.9 480,820.8 491,820.7" fill="none" stroke="#ffffff" stroke-width="1.3" stroke-linejoin="round" /><polyline points="61,781 75,779.7 90,777.1 105,776.4 120,777.8 135,777.9 150,776.6 165,778.5 180,780.7 195,780.8 210,780.7 222,782.2 233,782.5 240,776.1 246,754.1 252,714 258,670 265.7,630 272,711.1 279,805.9 287,914.3 291,890.4 296,860.4 303,812.4 309,786.3 318,780.4 330,779.5 345,779.5 360,778.6 375,776.7 390,776.7 405,778.4 420,778.6 435,777.9 450,778.5 465,779.1 480,777.3 491,775.8" fill="none" stroke="#ffffff" stroke-width="1.3" stroke-linejoin="round" /><polyline points="61,814.1 75,813.7 90,811.1 105,809.3 120,809.1 135,807.8 150,805.8 165,807.8 180,811.2 195,813 210,814.2 222,816.2 233,816.4 240,808.1 246,786 252,743.5 258,699.3 265.7,659.1 272,744.6 279,839.3 287,950 291,926 296,896.1 303,848.1 309,822 318,815 330,815.1 345,816.7 360,817 375,815.3 390,814.5 405,814.6 420,813.4 435,811.7 450,812.2 465,813.8 480,813.7 491,813.2" fill="none" stroke="#ffffff" stroke-width="1.3" stroke-linejoin="round" /><polyline points="61,812.2 75,812.5 90,810.9 105,809.7 120,810 135,808.9 150,806.3 165,807.2 180,809.8 195,811.4 210,812.6 222,815 233,815.8 240,807.7 246,785.8 252,743.4 258,699.2 265.7,659.1 272,751 279,845.7 287,957.4 291,933.4 296,903.4 303,855.4 309,829.2 318,821.7 330,821.1 345,822.4 360,823.3 375,822.4 390,822.3 405,823.1 420,822.2 435,820 450,819.5 465,820.2 480,819.7 491,819.2" fill="none" stroke="#ffffff" stroke-width="1.3" stroke-linejoin="round" /><polyline points="61,781 75,780.5 90,778.6 105,776.6 120,777.2 135,778.4 150,777.8 165,778.6 180,780.8 195,782.4 210,782.2 222,782.5 233,782.2 240,776.5 246,754.6 252,714.7 258,670.6 265.7,630.6 272,720.3 279,815 287,923.3 291,899.4 296,869.6 303,821.7 309,795.7 318,790.7 330,789.1 345,788.3 360,788.3 375,786.9 390,785.5 405,786.5 420,788 435,787.6 450,787.1 465,788 480,787.7 491,786.2" fill="none" stroke="#ffffff" stroke-width="1.3" stroke-linejoin="round" /><polyline points="61,781.4 75,780 90,777.8 105,777.8 120,779.2 135,778.7 150,777.2 165,779.1 180,780.9 195,780.6 210,781 222,783.1 233,783.5 240,776.8 246,754.7 252,714.7 258,670.7 265.7,630.7 272,725.7 279,820.5 287,928.9 291,904.9 296,874.9 303,826.8 309,800.7 318,794.3 330,793.7 345,793.8 360,792.6 375,791.2 390,792 405,793.5 420,793.2 435,792.5 450,793.2 465,793.1 480,791 491,789.8" fill="none" stroke="#ffffff" stroke-width="1.3" stroke-linejoin="round" /><polyline points="61,780.9 75,780.4 90,778.8 105,777 120,777.6 135,778.9 150,778.1 165,778.7 180,780.7 195,782.2 210,782.1 222,782.5 233,782.3 240,776.7 246,754.8 252,714.9 258,670.9 265.7,630.8 272,723.9 279,818.6 287,926.9 291,903 296,873.1 303,825.2 309,799.2 318,794.1 330,792.3 345,791.5 360,791.6 375,790.3 390,789.2 405,790.3 420,791.8 435,791.3 450,790.7 465,791.3 480,790.9 491,789.4" fill="none" stroke="#ffffff" stroke-width="1.3" stroke-linejoin="round" /><polyline points="61,813.5 75,812.7 90,809.7 105,807.4 120,807.5 135,807.1 150,805.7 165,807.9 180,811.4 195,813.2 210,813.6 222,814.9 233,814.7 240,807.2 246,785.1 252,742.7 258,698.6 265.7,658.4 272,753.4 279,848.1 287,960.4 291,936.5 296,906.6 303,858.7 309,832.6 318,826.6 330,826.5 345,827.5 360,827.3 375,825.1 390,823.7 405,824 420,823.6 435,822.6 450,823.4 465,825.2 480,825.1 491,824.2" fill="none" stroke="#ffffff" stroke-width="1.3" stroke-linejoin="round" /><polyline points="61,782.8 75,782.4 90,780.7 105,780.1 120,780.4 135,778.7 150,776.2 165,777.7 180,780.1 195,781.2 210,782.8 222,785.6 233,786.2 240,777.9 246,755.9 252,715.7 258,671.6 265.7,631.5 272,716 279,810.7 287,918.9 291,894.9 296,864.9 303,816.7 309,790.6 318,782.8 330,782.8 345,784.2 360,784.4 375,783.6 390,784 405,784.6 420,783.2 435,781.3 450,781.3 465,781.7 480,780.7 491,780.5" fill="none" stroke="#ffffff" stroke-width="1.3" stroke-linejoin="round" /><polyline points="61,783.4 75,781 90,778.4 105,778.4 120,779.2 135,778.4 150,777.9 165,780.8 180,782.5 195,782.2 210,782.9 222,784.8 233,784.3 240,777.6 246,755.5 252,715.4 258,671.4 265.7,631.5 272,717.8 279,812.6 287,920.9 291,897 296,867 303,818.9 309,792.8 318,787 330,787.1 345,786.9 360,784.9 375,783.3 390,783.9 405,784.7 420,784.1 435,784.4 450,785.8 465,785.7 480,783.8 491,783" fill="none" stroke="#ffffff" stroke-width="1.3" stroke-linejoin="round" /><polyline points="61,781.5 75,782.3 90,781.7 105,780 120,779.8 135,779.8 150,777.7 165,777.5 180,779.5 195,782 210,783.3 222,784.7 233,785.1 240,778 246,756.1 252,716.2 258,672.1 265.7,632 272,717.6 279,812.2 287,920.3 291,896.3 296,866.4 303,818.4 309,792.4 318,785.5 330,784.2 345,784.4 360,785.9 375,785.8 390,784.9 405,785.4 420,785.8 435,784 450,782.3 465,782.7 480,783.1 491,782.5" fill="none" stroke="#ffffff" stroke-width="1.3" stroke-linejoin="round" /><polyline points="61,783.8 75,783.6 90,781.3 105,779.7 120,779.5 135,778.2 150,775.9 165,777.7 180,780.9 195,782.7 210,784.1 222,786.2 233,786.5 240,778.2 246,756.1 252,716 258,671.8 265.7,631.6 272,719.5 279,814.2 287,922.4 291,898.5 296,868.5 303,820.4 309,794.4 318,787.1 330,787.2 345,788.8 360,789.2 375,787.8 390,787.2 405,787.4 420,786.2 435,784.3 450,784.5 465,785.9 480,785.7 491,785.3" fill="none" stroke="#ffffff" stroke-width="1.3" stroke-linejoin="round" /><polyline points="61,811.6 75,810.7 90,810 105,807.6 120,805.4 135,805.5 150,806 165,807.2 180,808.9 195,812 210,814.2 222,814.5 233,812.7 240,806 246,784 252,741.9 258,698 265.7,657.9 272,742.1 279,836.6 287,946.6 291,922.7 296,892.7 303,844.9 309,819.1 318,814.1 330,813.8 345,812.8 360,813 375,813 390,811 405,809.2 420,809.8 435,810.4 450,809.7 465,810 480,811.6 491,812" fill="none" stroke="#ffffff" stroke-width="1.3" stroke-linejoin="round" /><polyline points="61,810.7 75,809.6 90,808.7 105,806.6 120,805.5 135,806.5 150,807.3 165,808.3 180,809.6 195,812 210,813.1 222,812.9 233,811.3 240,805.7 246,783.8 252,741.8 258,697.9 265.7,657.9 272,736.4 279,831 287,940.1 291,916.2 296,886.3 303,838.5 309,812.6 318,808.3 330,807.2 345,805.5 360,805.3 375,804.9 390,803 405,802.4 420,803.9 435,804.8 450,804.1 465,804.2 480,805.1 491,804.6" fill="none" stroke="#ffffff" stroke-width="1.3" stroke-linejoin="round" /><polyline points="61,809.5 75,808.2 90,808.1 105,807.2 120,806.2 135,806.9 150,807.8 165,808.5 180,808.7 195,810.4 210,812 222,812.3 233,810.8 240,805.5 246,783.6 252,741.7 258,697.8 265.7,657.9 272,744.5 279,839.1 287,949.5 291,925.5 296,895.5 303,847.6 309,821.7 318,817.2 330,816 345,813.7 360,813.1 375,813.6 390,812.9 405,812.3 420,813.7 435,815 450,813.9 465,812.8 480,813 491,812.8" fill="none" stroke="#ffffff" stroke-width="1.3" stroke-linejoin="round" /><polyline points="61,783.1 75,780.5 90,779.7 105,780.3 120,779.8 135,778.9 150,779.6 165,781.9 180,781.9 195,782 210,784.1 222,785.7 233,784.4 240,778.1 246,756.1 252,716.1 258,672.3 265.7,632.5 272,715.2 279,809.9 287,918.1 291,894 296,863.9 303,815.9 309,789.8 318,784.5 330,784.6 345,782.9 360,780.9 375,781.1 390,781.9 405,781.5 420,781.3 435,782.7 450,783.2 465,781.5 480,780.3 491,780.4" fill="none" stroke="#ffffff" stroke-width="1.3" stroke-linejoin="round" /><polyline points="61,783.8 75,783 90,781.4 105,781.3 120,781.4 135,779.4 150,777.2 165,779 180,781 195,781.8 210,783.8 222,786.7 233,787.2 240,778.8 246,756.7 252,716.6 258,672.5 265.7,632.5 272,718.3 279,813 287,921.1 291,897.1 296,867 303,818.9 309,792.7 318,785 330,785.3 345,786.5 360,786.3 375,785.7 390,786.5 405,786.8 420,785.1 435,783.6 450,783.9 465,783.8 480,782.7 491,782.7" fill="none" stroke="#ffffff" stroke-width="1.3" stroke-linejoin="round" /><polyline points="61,810 75,808.7 90,808.9 105,809.3 120,807.8 135,805.9 150,805.5 165,806.9 180,807 195,808.3 210,811.7 222,814.1 233,813.2 240,805.6 246,783.6 252,741.6 258,697.7 265.7,657.8 272,739.7 279,834.3 287,943.7 291,919.6 296,889.5 303,841.4 309,815.3 318,808.5 330,808.9 345,808.2 360,807.6 375,808.9 390,809.8 405,808.5 420,807.4 435,807.7 450,807.1 465,805.2 480,805 491,806.1" fill="none" stroke="#ffffff" stroke-width="1.3" stroke-linejoin="round" /><polyline points="61,784.2 75,784.1 90,782.4 105,779.4 120,778.4 135,778.7 150,777.8 165,778.8 180,781.8 195,784.8 210,785.9 222,786.4 233,785.7 240,778.6 246,756.6 252,716.6 258,672.5 265.7,632.3 272,708.3 279,802.8 287,911 291,887.1 296,857.2 303,809.4 309,783.5 318,777.8 330,777.1 345,777.4 360,778.2 375,777.1 390,774.9 405,774.4 420,774.8 435,773.9 450,773.4 465,774.9 480,776.2 491,775.7" fill="none" stroke="#ffffff" stroke-width="1.3" stroke-linejoin="round" /><polyline points="61,811.6 75,810.2 90,808.6 105,808.4 120,807.6 135,805.1 150,803.7 165,806.2 180,808.1 195,809.1 210,811.8 222,814.7 233,814.4 240,805.7 246,783.6 252,741.4 258,697.3 265.7,657.3 272,753.9 279,848.6 287,960.8 291,936.7 296,906.6 303,858.5 309,832.4 318,825 330,826.1 345,827 360,826.3 375,825.9 390,826.5 405,825.8 420,823.6 435,822.9 450,823.7 465,823.4 480,822.8 491,823.5" fill="none" stroke="#ffffff" stroke-width="1.3" stroke-linejoin="round" /><polyline points="61,782.9 75,781.4 90,781.6 105,782.3 120,781 135,779.3 150,779 165,780.4 180,780.2 195,781.2 210,784.4 222,786.8 233,786 240,778.6 246,756.6 252,716.7 258,672.8 265.7,632.9 272,714.5 279,809.1 287,917.1 291,893 296,862.8 303,814.7 309,788.7 318,782 330,782.2 345,781.2 360,780.5 375,781.8 390,782.8 405,781.9 420,781 435,781.3 450,780.7 465,778.7 480,778.2 491,779.1" fill="none" stroke="#ffffff" stroke-width="1.3" stroke-linejoin="round" /><polyline points="61,783.8 75,782.1 90,779.6 105,779.2 120,780.4 135,780.1 150,779 165,781.3 180,783.3 195,783.2 210,783.4 222,785.2 233,785.2 240,778.6 246,756.6 252,716.5 258,672.5 265.7,632.5 272,720.7 279,815.5 287,923.9 291,900 296,870 303,821.9 309,795.8 318,789.9 330,789.4 345,789.4 360,788.1 375,786.2 390,786.6 405,787.9 420,787.8 435,787.4 450,788.4 465,788.6 480,786.8 491,785.5" fill="none" stroke="#ffffff" stroke-width="1.3" stroke-linejoin="round" /><polyline points="61,784.4 75,783 90,782.5 105,780.7 120,778.3 135,777.7 150,778.5 165,780.1 180,781.4 195,784.1 210,786.9 222,787.6 233,785.6 240,778.6 246,756.6 252,716.6 258,672.7 265.7,632.7 272,718.4 279,812.9 287,921 291,896.9 296,867 303,819.1 309,793.2 318,788.1 330,788.3 345,787.2 360,786.9 375,787.3 390,785.8 405,783.7 420,783.7 435,784.6 450,784.3 465,784 480,785.4 491,786.3" fill="none" stroke="#ffffff" stroke-width="1.3" stroke-linejoin="round" /><polyline points="61,784.2 75,783.4 90,782.4 105,779.8 120,778 135,778.5 150,779 165,780.1 180,782 195,785 210,786.7 222,786.7 233,785.1 240,778.7 246,756.7 252,716.8 258,672.8 265.7,632.7 272,719.4 279,813.9 287,922.1 291,898.1 296,868.2 303,820.4 309,794.5 318,789.8 330,789.2 345,788.2 360,788.4 375,788 390,785.8 405,784.5 420,785.4 435,785.9 450,785.3 465,785.8 480,787.3 491,787.3" fill="none" stroke="#ffffff" stroke-width="1.3" stroke-linejoin="round" /><polyline points="61,785.7 75,784.3 90,781.7 105,780.5 120,780.2 135,778.4 150,776.9 165,779.7 180,782.7 195,783.9 210,785.5 222,787.7 233,787.5 240,779.1 246,756.9 252,716.8 258,672.6 265.7,632.5 272,715.2 279,809.9 287,918.2 291,894.2 296,864.2 303,816.2 309,790.1 318,783.2 330,784 345,785.4 360,784.7 375,783.1 390,782.8 405,782.6 420,780.9 435,779.9 450,781.2 465,782.2 480,781.6 491,781.5" fill="none" stroke="#ffffff" stroke-width="1.3" stroke-linejoin="round" /><polyline points="61,783.6 75,783.2 90,781.6 105,781.3 120,782 135,780.5 150,778.1 165,779.5 180,781.5 195,782.3 210,783.6 222,786.4 233,787.1 240,779.2 246,757.2 252,717.1 258,673 265.7,632.9 272,723.8 279,818.5 287,926.7 291,902.7 296,872.7 303,824.5 309,798.4 318,790.8 330,790.5 345,791.5 360,791.5 375,790.8 390,791.5 405,792.5 420,791.3 435,789.6 450,789.5 465,789.5 480,788.3 491,787.8" fill="none" stroke="#ffffff" stroke-width="1.3" stroke-linejoin="round" /><polyline points="61,784.9 75,784.9 90,782.7 105,780.1 120,779.5 135,779.3 150,777.7 165,779 180,782.3 195,785 210,785.9 222,787 233,786.8 240,779.2 246,757.2 252,717.1 258,673 265.7,632.8 272,724.2 279,818.8 287,927.1 291,903.1 296,873.2 303,825.3 309,799.3 318,793.1 330,792.6 345,793.5 360,794.3 375,792.9 390,791.1 405,791 420,790.8 435,789.4 450,789.2 465,790.9 480,791.7 491,791.1" fill="none" stroke="#ffffff" stroke-width="1.3" stroke-linejoin="round" /><polyline points="61,809.2 75,807.3 90,806.6 105,807.6 120,807.5 135,805.9 150,805.3 165,807.2 180,807.4 195,807.4 210,809.7 222,812.3 233,811.9 240,804.7 246,782.7 252,740.8 258,696.9 265.7,657 272,751.1 279,845.8 287,957.4 291,933.3 296,903.2 303,855 309,828.9 318,822.3 330,822.4 345,821.8 360,820.3 375,820.6 390,822.2 405,822.2 420,821.2 435,821.4 450,821.7 465,820 480,818.3 491,818.6" fill="none" stroke="#ffffff" stroke-width="1.3" stroke-linejoin="round" /><polyline points="61,810.1 75,810.1 90,808.7 105,805.8 120,804.5 135,804.7 150,804 165,804.9 180,807.6 195,810.8 210,812.2 222,812.6 233,811.8 240,804.7 246,782.7 252,740.8 258,696.8 265.7,656.6 272,746.1 279,840.7 287,951.5 291,927.6 296,897.7 303,849.9 309,824 318,818.4 330,817.7 345,817.7 360,818.6 375,817.9 390,815.6 405,814.8 420,815.3 435,814.6 450,813.9 465,815.1 480,816.6 491,816.3" fill="none" stroke="#ffffff" stroke-width="1.3" stroke-linejoin="round" /><polyline points="61,810 75,809.8 90,808.4 105,805.4 120,804.2 135,804.5 150,803.9 165,804.9 180,807.6 195,810.8 210,812 222,812.3 233,811.5 240,804.5 246,782.6 252,740.7 258,696.6 265.7,656.4 272,742.4 279,837 287,947.2 291,923.3 296,893.4 303,845.5 309,819.6 318,814.2 330,813.5 345,813.4 360,814.2 375,813.3 390,811 405,810.3 420,810.9 435,810.3 450,809.7 465,811 480,812.4 491,812" fill="none" stroke="#ffffff" stroke-width="1.3" stroke-linejoin="round" /><polyline points="61,784.8 75,782.3 90,781.6 105,781.1 120,779.8 135,779.5 150,780.8 165,782.9 180,783.3 195,784.4 210,786.6 222,787.3 233,785.4 240,779.3 246,757.3 252,717.4 258,673.5 265.7,633.7 272,713 279,807.7 287,915.8 291,891.8 296,861.8 303,813.8 309,787.9 318,783.3 330,783.3 345,781.3 360,779.7 375,779.8 390,779.5 405,778.3 420,778.7 435,780.5 450,780.7 465,779.6 480,779.5 491,779.8" fill="none" stroke="#ffffff" stroke-width="1.3" stroke-linejoin="round" /><polyline points="61,809.8 75,808.6 90,808.4 105,807 120,804.5 135,803.3 150,803.7 165,805.3 180,806.3 195,809 210,812.3 222,813.4 233,811.7 240,804.2 246,782.2 252,740.4 258,696.4 265.7,656.4 272,745.4 279,840 287,950.5 291,926.4 296,896.4 303,848.4 309,822.6 318,816.8 330,817.3 345,816.5 360,816.3 375,817 390,816.1 405,813.8 420,813.3 435,813.9 450,813.5 465,812.9 480,814.2 491,815.3" fill="none" stroke="#ffffff" stroke-width="1.3" stroke-linejoin="round" /><polyline points="61,784.3 75,782.6 90,782.1 105,780.9 120,779.5 135,780.1 150,781.3 165,782.6 180,783.1 195,785 210,786.7 222,786.8 233,785 240,779.4 246,757.5 252,717.6 258,673.7 265.7,633.8 272,716.9 279,811.5 287,919.6 291,895.7 296,865.7 303,817.8 309,791.9 318,787.6 330,786.9 345,784.8 360,783.9 375,784.1 390,783 405,782 420,783.1 435,784.6 450,784.1 465,783.4 480,783.8 491,783.8" fill="none" stroke="#ffffff" stroke-width="1.3" stroke-linejoin="round" /><polyline points="61,807.9 75,808.3 90,808.6 105,807 120,805.6 135,805.5 150,804.5 165,804.2 180,805.4 195,808.3 210,810.6 222,811.7 233,811.2 240,804.3 246,782.4 252,740.7 258,696.7 265.7,656.6 272,742.5 279,837 287,947 291,922.9 296,893 303,845 309,819.1 318,812.7 330,811.6 345,811 360,812.3 375,813.2 390,812.2 405,811.5 420,812 435,811.2 450,809.1 465,808.8 480,809.9 491,810.1" fill="none" stroke="#ffffff" stroke-width="1.3" stroke-linejoin="round" /><polyline points="61,785.2 75,785.4 90,783.7 105,782.4 120,782.6 135,781.5 150,779 165,780.1 180,782.7 195,784.4 210,785.7 222,788 233,788.6 240,780.6 246,758.6 252,718.5 258,674.4 265.7,634.2 272,712.5 279,807.2 287,915.4 291,891.4 296,861.4 303,813.4 309,787.3 318,779.8 330,779.4 345,780.7 360,781.4 375,780.5 390,780.3 405,780.9 420,780 435,777.9 450,777.5 465,778.3 480,777.9 491,777.4" fill="none" stroke="#ffffff" stroke-width="1.3" stroke-linejoin="round" /><polyline points="61,809.9 75,809.1 90,806.3 105,804 120,804.1 135,803.9 150,802.7 165,804.7 180,808.1 195,809.9 210,810.3 222,811.4 233,811.1 240,803.8 246,781.7 252,739.9 258,695.8 265.7,655.6 272,739.7 279,834.4 287,944.3 291,920.4 296,890.5 303,842.6 309,816.6 318,810.7 330,810.4 345,811.2 360,811.1 375,809 390,807.5 405,807.8 420,807.7 435,806.7 450,807.4 465,809.1 480,809.1 491,808.1" fill="none" stroke="#ffffff" stroke-width="1.3" stroke-linejoin="round" /><polyline points="61,786.1 75,784.6 90,784 105,782.4 120,780 135,779.3 150,780 165,781.8 180,783 195,785.6 210,788.5 222,789.2 233,787.3 240,780.2 246,758.2 252,718.2 258,674.2 265.7,634.3 272,712.9 279,807.5 287,915.5 291,891.5 296,861.5 303,813.6 309,787.7 318,782.5 330,782.8 345,781.8 360,781.4 375,781.7 390,780.4 405,778.3 420,778.1 435,779.1 450,778.9 465,778.5 480,779.8 491,780.7" fill="none" stroke="#ffffff" stroke-width="1.3" stroke-linejoin="round" /><polyline points="61,807.8 75,807.1 90,805.9 105,803.9 120,803.6 135,804.8 150,805 165,805.6 180,807.2 195,809.3 210,809.8 222,809.8 233,808.8 240,803.3 246,781.4 252,739.8 258,695.8 265.7,655.8 272,735.4 279,830 287,939 291,915.1 296,885.2 303,837.3 309,811.4 318,806.8 330,805.3 345,803.9 360,803.9 375,803.2 390,801.6 405,801.7 420,803.4 435,803.7 450,802.9 465,803.2 480,803.6 491,802.6" fill="none" stroke="#ffffff" stroke-width="1.3" stroke-linejoin="round" /><polyline points="61,807.3 75,806.4 90,805.9 105,804.5 120,803.7 135,804.8 150,805.4 165,805.9 180,806.6 195,808.6 210,809.7 222,809.8 233,808.6 240,803.2 246,781.4 252,739.8 258,695.9 265.7,655.9 272,740.4 279,835 287,944.7 291,920.8 296,890.8 303,843 309,817 318,812.5 330,811.1 345,809.1 360,808.9 375,808.9 390,807.7 405,807.5 420,809.2 435,809.9 450,808.9 465,808.4 480,808.7 491,808.1" fill="none" stroke="#ffffff" stroke-width="1.3" stroke-linejoin="round" /><polyline points="61,808.6 75,809 90,808 105,805.4 120,804.1 135,804 150,802.7 165,803.2 180,805.7 195,809 210,810.6 222,811.5 233,811.1 240,803.7 246,781.8 252,740 258,696 265.7,655.8 272,738.4 279,832.9 287,942.4 291,918.4 296,888.5 303,840.6 309,814.7 318,808.4 330,807.7 345,808 360,809.3 375,808.9 390,807.1 405,806.5 420,806.6 435,805.4 450,804.3 465,805.3 480,806.6 491,806.5" fill="none" stroke="#ffffff" stroke-width="1.3" stroke-linejoin="round" /><polyline points="61,786 75,785.5 90,783.7 105,783.1 120,783.2 135,781.4 150,779.1 165,780.8 180,783.2 195,784.4 210,786.1 222,788.8 233,789.3 240,780.9 246,758.9 252,718.8 258,674.6 265.7,634.5 272,712.7 279,807.4 287,915.6 291,891.6 296,861.6 303,813.5 309,787.3 318,779.7 330,779.9 345,781.2 360,781.3 375,780.4 390,780.8 405,781.2 420,779.7 435,777.9 450,778.1 465,778.5 480,777.7 491,777.5" fill="none" stroke="#ffffff" stroke-width="1.3" stroke-linejoin="round" /><polyline points="61,808.9 75,808.4 90,806.6 105,803.8 120,803 135,803.7 150,803.2 165,804.4 180,807.2 195,809.8 210,810.5 222,810.7 233,809.9 240,803.3 246,781.4 252,739.7 258,695.6 265.7,655.5 272,738.1 279,832.7 287,942.2 291,918.3 296,888.4 303,840.6 309,814.7 318,809.6 330,808.7 345,808.5 360,808.9 375,807.6 390,805.4 405,805.1 420,805.9 435,805.6 450,805.2 465,806.6 480,807.5 491,806.8" fill="none" stroke="#ffffff" stroke-width="1.3" stroke-linejoin="round" /><polyline points="61,810.2 75,808.8 90,805.9 105,804.5 120,804.4 135,803 150,801.7 165,804.5 180,807.6 195,808.8 210,810 222,812 233,811.6 240,803.6 246,781.4 252,739.6 258,695.4 265.7,655.3 272,737 279,831.7 287,941.1 291,917.1 296,887.2 303,839.1 309,813.1 318,806.6 330,807.2 345,808.4 360,807.5 375,805.7 390,805.2 405,805.1 420,803.8 435,803 450,804.3 465,805.5 480,804.9 491,804.5" fill="none" stroke="#ffffff" stroke-width="1.3" stroke-linejoin="round" /><polyline points="61,809.5 75,809 90,806.6 105,804.8 120,804.6 135,803.4 150,801.4 165,803.4 180,806.7 195,808.5 210,809.7 222,811.7 233,811.8 240,803.5 246,781.5 252,739.6 258,695.5 265.7,655.3 272,748.4 279,843.1 287,954.4 291,930.5 296,900.5 303,852.5 309,826.4 318,819.5 330,819.6 345,821.1 360,821.3 375,819.7 390,818.9 405,819 420,817.9 435,816.3 450,816.8 465,818.2 480,818.1 491,817.7" fill="none" stroke="#ffffff" stroke-width="1.3" stroke-linejoin="round" /><polyline points="61,806.9 75,806.8 90,805.4 105,804.6 120,805.5 135,805.5 150,803.4 165,804 180,805.9 195,806.9 210,807.5 222,809.3 233,810 240,803.2 246,781.2 252,739.6 258,695.5 265.7,655.5 272,738.4 279,833.1 287,942.6 291,918.6 296,888.6 303,840.6 309,814.5 318,807.8 330,806.5 345,806.7 360,807.1 375,806.2 390,806.2 405,807.7 420,807.9 435,806.3 450,805.6 465,805.9 480,804.8 491,803.7" fill="none" stroke="#ffffff" stroke-width="1.3" stroke-linejoin="round" /><polyline points="61,784.6 75,783.4 90,783.5 105,782.7 120,781.8 135,782.4 150,783 165,783.5 180,783.6 195,785.3 210,787 222,787.5 233,786.3 240,780.7 246,758.9 252,719 258,675.2 265.7,635.3 272,718.9 279,813.5 287,921.6 291,897.5 296,867.6 303,819.6 309,793.7 318,788.9 330,787.7 345,785.5 360,785.1 375,785.7 390,785.2 405,784.7 420,786 435,787 450,785.8 465,784.6 480,784.7 491,784.6" fill="none" stroke="#ffffff" stroke-width="1.3" stroke-linejoin="round" /><polyline points="61,807.9 75,806.8 90,805.9 105,803.7 120,802.2 135,802.9 150,803.7 165,804.9 180,806.3 195,808.9 210,810.4 222,810.3 233,808.6 240,802.6 246,780.7 252,739.1 258,695.2 265.7,655.2 272,747.6 279,842.2 287,953.3 291,929.3 296,899.4 303,851.6 309,825.7 318,821.3 330,820.6 345,819 360,818.8 375,818.5 390,816.7 405,815.6 420,816.7 435,817.6 450,817.1 465,817.2 480,818.3 491,818.1" fill="none" stroke="#ffffff" stroke-width="1.3" stroke-linejoin="round" /><polyline points="61,808.1 75,806.5 90,803.9 105,803 120,804 135,803.9 150,802.9 165,805.1 180,807.5 195,807.8 210,807.8 222,809.3 233,809.2 240,802.7 246,780.6 252,738.9 258,694.9 265.7,654.9 272,741.8 279,836.6 287,946.9 291,923 296,893.1 303,845 309,819 318,813.2 330,812.7 345,812.8 360,811.6 375,809.6 390,809.5 405,810.7 420,810.7 435,810.3 450,811.2 465,811.9 480,810.4 491,809" fill="none" stroke="#ffffff" stroke-width="1.3" stroke-linejoin="round" /><polyline points="61,806.9 75,807.4 90,806.2 105,804.9 120,805.1 135,804.7 150,802.4 165,802.7 180,805 195,806.8 210,808 222,809.8 233,810.4 240,803 246,781.1 252,739.5 258,695.4 265.7,655.3 272,737.4 279,832 287,941.3 291,917.3 296,887.4 303,839.3 309,813.2 318,806.1 330,805.1 345,805.7 360,806.8 375,806.3 390,805.8 405,806.6 420,806.5 435,804.6 450,803.5 465,804 480,803.8 491,803.1" fill="none" stroke="#ffffff" stroke-width="1.3" stroke-linejoin="round" /><polyline points="61,807.7 75,806.4 90,806.3 105,806.3 120,804.6 135,802.5 150,802.1 165,803.8 180,804.3 195,805.8 210,809.3 222,811.6 233,810.7 240,802.8 246,780.7 252,739.1 258,695.2 265.7,655.2 272,735.1 279,829.7 287,938.4 291,914.3 296,884.1 303,836 309,810 318,803.2 330,803.8 345,803.4 360,802.9 375,803.9 390,804.5 405,803.1 420,801.7 435,801.8 450,801.5 465,800.1 480,800.1 491,801.3" fill="none" stroke="#ffffff" stroke-width="1.3" stroke-linejoin="round" /><polyline points="61,786.5 75,784.3 90,782.7 105,783.3 120,783.9 135,782.8 150,782.2 165,784.6 180,785.4 195,785 210,786.5 222,788.7 233,788.3 240,781.5 246,759.5 252,719.5 258,675.5 265.7,635.6 272,716.4 279,811.2 287,919.4 291,895.4 296,865.3 303,817.2 309,791.1 318,785 330,785 345,784.4 360,782.6 375,782 390,783.2 405,783.7 420,783.1 435,783.4 450,784.2 465,783.1 480,781.2 491,780.8" fill="none" stroke="#ffffff" stroke-width="1.3" stroke-linejoin="round" /><polyline points="61,786.8 75,785.8 90,783.5 105,782 120,782.9 135,783.5 150,782.4 165,784 180,786.4 195,787.3 210,787.1 222,788.1 233,788.1 240,781.8 246,759.9 252,719.9 258,675.8 265.7,635.7 272,718.1 279,812.8 287,921.2 291,897.3 296,867.4 303,819.4 309,793.4 318,787.9 330,786.7 345,786.6 360,786.1 375,784.3 390,783.5 405,784.8 420,785.5 435,784.9 450,785.1 465,786 480,785.1 491,783.5" fill="none" stroke="#ffffff" stroke-width="1.3" stroke-linejoin="round" /><polyline points="61,785.4 75,785.8 90,785.1 105,783.7 120,784 135,784.4 150,782.7 165,782.6 180,784.3 195,786.1 210,787 222,788.2 233,788.6 240,782.1 246,760.2 252,720.3 258,676.3 265.7,636.2 272,721.5 279,816.1 287,924.3 291,900.3 296,870.4 303,822.4 309,796.3 318,789.9 330,788.3 345,788.1 360,789 375,788.8 390,788.2 405,789.1 420,789.9 435,788.5 450,787 465,787.1 480,786.9 491,786" fill="none" stroke="#ffffff" stroke-width="1.3" stroke-linejoin="round" /><polyline points="61,786.2 75,785 90,784.4 105,782.8 120,781.8 135,782.8 150,783.5 165,784.4 180,785.3 195,787.3 210,788.6 222,788.6 233,787.2 240,781.7 246,759.7 252,719.9 258,676 265.7,636 272,717 279,811.6 287,919.7 291,895.7 296,865.8 303,818 309,792.1 318,787.6 330,786.5 345,784.6 360,784.2 375,784.1 390,782.8 405,782.2 420,783.7 435,784.7 450,783.9 465,783.5 480,784 491,783.6" fill="none" stroke="#ffffff" stroke-width="1.3" stroke-linejoin="round" /><polyline points="61,806.4 75,804.6 90,803.7 105,804.6 120,804.7 135,803.1 150,802.3 165,804.2 180,804.7 195,804.7 210,806.8 222,809.4 233,809.1 240,801.9 246,779.9 252,738.4 258,694.4 265.7,654.6 272,737.2 279,832 287,941.1 291,917.1 296,887 303,838.8 309,812.7 318,806 330,806.1 345,805.6 360,804.3 375,804.4 390,805.9 405,806 420,805 435,805.1 450,805.3 465,803.8 480,802.2 491,802.3" fill="none" stroke="#ffffff" stroke-width="1.3" stroke-linejoin="round" /><polyline points="61,806.9 75,806 90,806.2 105,805.2 120,802.9 135,801.6 150,801.5 165,802.7 180,803.4 195,805.9 210,809.4 222,810.9 233,809.6 240,802 246,780 252,738.5 258,694.6 265.7,654.6 272,732 279,826.5 287,934.6 291,910.6 296,880.5 303,832.5 309,806.6 318,800.3 330,800.6 345,799.9 360,800 375,801.1 390,800.6 405,798.7 420,798 435,798.3 450,797.4 465,796.4 480,797.5 491,798.7" fill="none" stroke="#ffffff" stroke-width="1.3" stroke-linejoin="round" /><polyline points="61,787 75,787.2 90,785.7 105,784.3 120,784.4 135,783.5 150,781.1 165,782 180,784.6 195,786.4 210,787.7 222,789.8 233,790.4 240,782.5 246,760.5 252,720.4 258,676.3 265.7,636.1 272,728 279,822.7 287,930.9 291,906.9 296,876.9 303,828.9 309,802.8 318,795.4 330,794.9 345,796 360,796.9 375,796.1 390,795.7 405,796.3 420,795.5 435,793.5 450,793 465,793.7 480,793.5 491,793" fill="none" stroke="#ffffff" stroke-width="1.3" stroke-linejoin="round" /><polyline points="61,806.3 75,805.2 90,803.5 105,803.6 120,804.6 135,803.8 150,802 165,803.5 180,805.2 195,805.3 210,806.1 222,808.5 233,809 240,801.9 246,779.9 252,738.4 258,694.4 265.7,654.4 272,736.6 279,831.4 287,940.6 291,916.6 296,886.6 303,838.5 309,812.3 318,805.5 330,804.9 345,805.2 360,804.5 375,803.6 390,804.4 405,805.7 420,805.2 435,804.1 450,804.3 465,804.1 480,802.3 491,801.4" fill="none" stroke="#ffffff" stroke-width="1.3" stroke-linejoin="round" /><polyline points="61,787.6 75,784.9 90,783.8 105,783.7 120,782.9 135,782.1 150,783.1 165,785.6 180,786.1 195,786.6 210,788.6 222,789.9 233,788.3 240,781.9 246,759.9 252,719.9 258,676 265.7,636.2 272,732.8 279,827.6 287,936 291,912 296,881.9 303,833.9 309,808 318,802.9 330,803.2 345,801.7 360,799.7 375,799.5 390,799.7 405,798.9 420,798.8 435,800.3 450,801 465,799.9 480,799.1 491,799.3" fill="none" stroke="#ffffff" stroke-width="1.3" stroke-linejoin="round" /><polyline points="61,806.3 75,804.5 90,803.4 105,804.2 120,804.5 135,803 150,802 165,804 180,804.7 195,804.6 210,806.5 222,809.1 233,809 240,801.7 246,779.7 252,738.2 258,694.3 265.7,654.4 272,735.4 279,830.1 287,939 291,914.9 296,884.8 303,836.7 309,810.6 318,803.8 330,803.9 345,803.6 360,802.2 375,802.1 390,803.6 405,803.9 420,803 435,802.8 450,803.2 465,801.9 480,800.1 491,800.1" fill="none" stroke="#ffffff" stroke-width="1.3" stroke-linejoin="round" /><polyline points="61,806.9 75,804.7 90,803.9 105,803 120,801.5 135,801.3 150,802.5 165,804.6 180,805.2 195,806.7 210,808.8 222,809.5 233,807.5 240,801.3 246,779.3 252,737.9 258,694 265.7,654.2 272,730.4 279,825 287,933.1 291,909.1 296,879.1 303,831.2 309,805.3 318,800.7 330,800.7 345,798.9 360,797.5 375,797.5 390,796.9 405,795.5 420,795.9 435,797.5 450,797.8 465,796.9 480,797.1 491,797.4" fill="none" stroke="#ffffff" stroke-width="1.3" stroke-linejoin="round" /><polyline points="61,787.8 75,786.6 90,785.3 105,785.5 120,785.3 135,783.1 150,781.4 165,783.4 180,784.9 195,785.6 210,787.9 222,790.9 233,791 240,782.7 246,760.6 252,720.6 258,676.5 265.7,636.5 272,718.2 279,812.9 287,921 291,897 296,866.9 303,818.7 309,792.6 318,785.1 330,785.6 345,786.3 360,785.7 375,785.5 390,786.6 405,786.5 420,784.7 435,783.8 450,784.1 465,783.5 480,782.4 491,782.7" fill="none" stroke="#ffffff" stroke-width="1.3" stroke-linejoin="round" /><polyline points="61,806.8 75,804 90,802.8 105,802.9 120,802.3 135,801.4 150,802.2 165,804.8 180,805.3 195,805.7 210,807.6 222,809.1 233,807.6 240,801.1 246,779.1 252,737.7 258,693.8 265.7,654 272,743.7 279,838.4 287,948.8 291,924.8 296,894.7 303,846.7 309,820.7 318,815.5 330,815.8 345,814.5 360,812.4 375,812.1 390,812.5 405,811.9 420,811.6 435,813 450,813.9 465,812.7 480,811.7 491,811.8" fill="none" stroke="#ffffff" stroke-width="1.3" stroke-linejoin="round" /><polyline points="61,787.1 75,786.2 90,785.1 105,782.9 120,782.3 135,783.5 150,783.7 165,784.6 180,786.2 195,788.4 210,789.1 222,789.1 233,788 240,782.3 246,760.4 252,720.5 258,676.5 265.7,636.5 272,714.3 279,808.9 287,917.1 291,893.2 296,863.3 303,815.5 309,789.6 318,785 330,783.7 345,782.3 360,782.3 375,781.6 390,779.9 405,779.7 420,781.2 435,781.7 450,781 465,781.3 480,781.9 491,781.1" fill="none" stroke="#ffffff" stroke-width="1.3" stroke-linejoin="round" /><polyline points="61,806.7 75,805.6 90,804.7 105,802.6 120,800.7 135,801 150,801.7 165,803.1 180,804.6 195,807.3 210,809.2 222,809.3 233,807.6 240,801.2 246,779.2 252,737.9 258,693.9 265.7,653.9 272,735.1 279,829.6 287,938.5 291,914.5 296,884.6 303,836.7 309,810.9 318,806.2 330,805.8 345,804.5 360,804.3 375,804.2 390,802.3 405,800.9 420,801.6 435,802.5 450,802 465,802.1 480,803.4 491,803.6" fill="none" stroke="#ffffff" stroke-width="1.3" stroke-linejoin="round" /><polyline points="61,788.6 75,787 90,786.5 105,785.7 120,783.5 135,781.7 150,781.9 165,784 180,785 195,787.1 210,790.4 222,792.1 233,790.6 240,782.8 246,760.7 252,720.7 258,676.7 265.7,636.8 272,728.2 279,822.8 287,930.8 291,906.7 296,876.7 303,828.6 309,802.7 318,796.6 330,797.4 345,796.9 360,796.3 375,796.9 390,796.5 405,794.5 420,793.4 435,794 450,794 465,793.2 480,793.9 491,795.1" fill="none" stroke="#ffffff" stroke-width="1.3" stroke-linejoin="round" /><polyline points="61,787.1 75,786.4 90,784.7 105,784.3 120,785.4 135,785 150,783.1 165,784.3 180,786.1 195,786.5 210,787.2 222,789.3 233,789.9 240,782.9 246,761 252,720.9 258,676.9 265.7,636.9 272,714.2 279,809 287,917.3 291,893.3 296,863.3 303,815.2 309,789.1 318,782.3 330,781.4 345,781.7 360,781.4 375,780.4 390,780.9 405,782.4 420,782.2 435,780.9 450,780.8 465,780.8 480,779.3 491,778.2" fill="none" stroke="#ffffff" stroke-width="1.3" stroke-linejoin="round" /><polyline points="61,786.8 75,787 90,787.3 105,785.7 120,784.1 135,783.8 150,783 165,783 180,784.1 195,787 210,789.6 222,790.7 233,790 240,783 246,761.1 252,721.1 258,677.2 265.7,637.1 272,721.7 279,816.1 287,924.1 291,900.1 296,870.1 303,822.2 309,796.2 318,789.9 330,789.1 345,788.4 360,789.6 375,790.5 390,789.5 405,788.5 420,788.8 435,788.2 450,786.4 465,785.9 480,787.1 491,787.6" fill="none" stroke="#ffffff" stroke-width="1.3" stroke-linejoin="round" /><polyline points="61,804.8 75,805.4 90,805 105,803.3 120,802.9 135,802.9 150,801.2 165,801.1 180,802.8 195,805.3 210,806.8 222,808 233,808.2 240,801.2 246,779.4 252,738.1 258,694 265.7,653.9 272,734.4 279,829 287,937.7 291,913.7 296,883.7 303,835.7 309,809.7 318,803.1 330,801.8 345,801.7 360,803 375,803.2 390,802.3 405,802.5 420,803 435,801.5 450,799.8 465,800 480,800.5 491,800.1" fill="none" stroke="#ffffff" stroke-width="1.3" stroke-linejoin="round" /><polyline points="61,787.2 75,785.2 90,785.1 105,785.7 120,785 135,784 150,784.1 165,785.7 180,785.5 195,786 210,788.5 222,790.4 233,789.4 240,782.9 246,760.9 252,721 258,677.1 265.7,637.3 272,727.8 279,822.4 287,930.5 291,906.4 296,876.3 303,828.2 309,802.2 318,796.3 330,796.2 345,794.7 360,793.4 375,794.2 390,795.2 405,794.7 420,794.4 435,795.2 450,795 465,793 480,792.1 491,792.5" fill="none" stroke="#ffffff" stroke-width="1.3" stroke-linejoin="round" /><polyline points="61,805.6 75,805.8 90,805.5 105,803.4 120,801.6 135,801.3 150,800.6 165,800.9 180,802.6 195,805.9 210,808.2 222,809.1 233,808.3 240,801.1 246,779.1 252,737.8 258,693.8 265.7,653.7 272,743.2 279,837.6 287,947.8 291,923.8 296,893.8 303,845.9 309,820 318,813.9 330,813.3 345,812.9 360,814.1 375,814.5 390,813 405,811.8 420,812.1 435,811.4 450,809.9 465,810.1 480,811.6 491,812" fill="none" stroke="#ffffff" stroke-width="1.3" stroke-linejoin="round" /><polyline points="61,807.4 75,806.3 90,803.6 105,802 120,801.8 135,800.7 150,799.2 165,801.7 180,804.8 195,806.3 210,807.4 222,809.3 233,809 240,801 246,778.9 252,737.4 258,693.3 265.7,653.2 272,737.6 279,832.3 287,941.8 291,917.8 296,887.9 303,839.8 309,813.8 318,807.2 330,807.6 345,808.8 360,808.4 375,806.6 390,805.9 405,805.9 420,804.8 435,803.7 450,804.7 465,806 480,805.6 491,805.2" fill="none" stroke="#ffffff" stroke-width="1.3" stroke-linejoin="round" /><polyline points="61,788.6 75,786.2 90,784.2 105,784.4 120,784.8 135,783.9 150,783.6 165,786.3 180,787.5 195,787.3 210,788.4 222,790.4 233,789.8 240,783.1 246,761 252,720.9 258,677 265.7,637.1 272,727 279,821.8 287,930 291,906.1 296,876 303,827.9 309,801.9 318,796 330,796.2 345,795.7 360,793.7 375,792.6 390,793.4 405,793.8 420,793.3 435,793.7 450,794.9 465,794.3 480,792.6 491,792" fill="none" stroke="#ffffff" stroke-width="1.3" stroke-linejoin="round" /><polyline points="61,788.8 75,788 90,786.4 105,786 120,786 135,784.1 150,782 165,783.8 180,786 195,786.9 210,788.8 222,791.6 233,792 240,783.6 246,761.6 252,721.5 258,677.4 265.7,637.3 272,723 279,817.7 287,925.9 291,901.9 296,871.8 303,823.7 309,797.6 318,790 330,790.3 345,791.5 360,791.3 375,790.6 390,791.2 405,791.4 420,789.8 435,788.3 450,788.6 465,788.7 480,787.8 491,787.8" fill="none" stroke="#ffffff" stroke-width="1.3" stroke-linejoin="round" /><polyline points="61,806.4 75,806.4 90,804.3 105,802.4 120,802.2 135,801.2 150,799.1 165,800.6 180,803.7 195,805.8 210,807 222,808.9 233,809.1 240,801 246,779 252,737.6 258,693.4 265.7,653.2 272,736 279,830.6 287,939.8 291,915.8 296,885.9 303,837.9 309,811.8 318,804.8 330,804.6 345,805.9 360,806.5 375,805.3 390,804.4 405,804.5 420,803.7 435,802 450,801.9 465,803.2 480,803.3 491,802.9" fill="none" stroke="#ffffff" stroke-width="1.3" stroke-linejoin="round" /><polyline points="61,788.6 75,786.3 90,784.4 105,784.8 120,785.3 135,784.4 150,783.9 165,786.4 180,787.6 195,787.3 210,788.5 222,790.5 233,790.1 240,783.3 246,761.3 252,721.2 258,677.2 265.7,637.4 272,723.1 279,817.9 287,926.2 291,902.2 296,872.1 303,824 309,797.9 318,792 330,792 345,791.5 360,789.7 375,788.7 390,789.6 405,790.2 420,789.6 435,789.9 450,791 465,790.3 480,788.4 491,787.9" fill="none" stroke="#ffffff" stroke-width="1.3" stroke-linejoin="round" /><polyline points="61,806.5 75,806.2 90,804 105,801.7 120,801.3 135,800.7 150,799.1 165,800.7 180,804 195,806.2 210,807.2 222,808.6 233,808.5 240,800.7 246,778.7 252,737.3 258,693.2 265.7,653 272,738.1 279,832.7 287,942.3 291,918.3 296,888.4 303,840.5 309,814.5 318,808 330,807.7 345,808.8 360,809.3 375,807.8 390,806.3 405,806.4 420,805.9 435,804.5 450,804.6 465,806.2 480,806.6 491,806" fill="none" stroke="#ffffff" stroke-width="1.3" stroke-linejoin="round" /><polyline points="61,789.3 75,787.8 90,786.9 105,786.9 120,785.7 135,783.4 150,782.5 165,784.7 180,785.9 195,787 210,790.1 222,792.8 233,792.1 240,783.8 246,761.7 252,721.6 258,677.6 265.7,637.7 272,719.3 279,813.9 287,922 291,897.9 296,867.8 303,819.6 309,793.6 318,786.5 330,787.4 345,787.7 360,786.9 375,787.2 390,787.9 405,786.8 420,785 435,784.8 450,785.1 465,784.2 480,783.8 491,784.7" fill="none" stroke="#ffffff" stroke-width="1.3" stroke-linejoin="round" /><polyline points="61,788.1 75,785.9 90,785.6 105,785.9 120,785.2 135,784.6 150,785.1 165,786.8 180,786.7 195,787.2 210,789.5 222,791 233,789.7 240,783.5 246,761.5 252,721.6 258,677.8 265.7,637.9 272,727.5 279,822.2 287,930.3 291,906.2 296,876.2 303,828.1 309,802.1 318,796.7 330,796.5 345,794.8 360,793.3 375,793.8 390,794.5 405,793.9 420,794 435,795.1 450,795.1 465,793.3 480,792.4 491,792.7" fill="none" stroke="#ffffff" stroke-width="1.3" stroke-linejoin="round" /><polyline points="61,789 75,787.9 90,785.4 105,784 120,784.9 135,785.2 150,784.2 165,786 180,788.4 195,789.3 210,789.2 222,790.3 233,790.2 240,783.8 246,761.8 252,721.8 258,677.7 265.7,637.7 272,714.1 279,808.8 287,917.2 291,893.3 296,863.4 303,815.4 309,789.4 318,783.8 330,782.9 345,782.9 360,782.2 375,780.3 390,779.7 405,780.8 420,781.3 435,780.7 450,781.2 465,782.1 480,781.1 491,779.6" fill="none" stroke="#ffffff" stroke-width="1.3" stroke-linejoin="round" /><polyline points="61,787.4 75,786.3 90,786.8 105,786.6 120,785.4 135,785.2 150,785.4 165,786 180,785.8 195,787.3 210,789.8 222,791 233,789.9 240,783.8 246,761.9 252,722 258,678.1 265.7,638.3 272,724.6 279,819.2 287,927.2 291,903.2 296,873.1 303,825.1 309,799.1 318,793.5 330,792.7 345,790.9 360,790.6 375,791.7 390,791.8 405,791.1 420,791.7 435,792.4 450,791.1 465,789.4 480,789.4 491,789.7" fill="none" stroke="#ffffff" stroke-width="1.3" stroke-linejoin="round" /><polyline points="61,805 75,805.4 90,804.1 105,802 120,801.4 135,800.9 150,799.1 165,799.7 180,802.3 195,805 210,806.4 222,807.8 233,807.9 240,800.3 246,778.3 252,737.1 258,693 265.7,652.8 272,740.6 279,835.1 287,945 291,921 296,891.1 303,843.1 309,817.1 318,810.3 330,809.6 345,810.4 360,811.6 375,811 390,809.7 405,809.6 420,809.5 435,807.8 450,806.9 465,807.9 480,808.6 491,808.2" fill="none" stroke="#ffffff" stroke-width="1.3" stroke-linejoin="round" /><polyline points="61,789.6 75,788.3 90,787.7 105,785.9 120,783.7 135,783.2 150,783.8 165,785.5 180,786.7 195,789.4 210,792 222,792.6 233,790.8 240,783.9 246,761.9 252,721.9 258,678 265.7,638 272,724.8 279,819.3 287,927.4 291,903.4 296,873.4 303,825.5 309,799.6 318,794.4 330,794.6 345,793.5 360,793.2 375,793.5 390,792.1 405,790.2 420,790.2 435,791.1 450,790.7 465,790.5 480,791.8 491,792.5" fill="none" stroke="#ffffff" stroke-width="1.3" stroke-linejoin="round" /><polyline points="61,804.3 75,802.5 90,801.9 105,802.7 120,802.4 135,800.9 150,800.4 165,802.2 180,802.5 195,802.7 210,805.1 222,807.5 233,807 240,799.9 246,777.8 252,736.7 258,692.8 265.7,652.9 272,741.8 279,836.5 287,946.5 291,922.4 296,892.3 303,844.1 309,818 318,811.5 330,811.6 345,810.9 360,809.6 375,810 390,811.3 405,811.2 420,810.3 435,810.6 450,810.6 465,809 480,807.6 491,807.9" fill="none" stroke="#ffffff" stroke-width="1.3" stroke-linejoin="round" /><polyline points="61,787.6 75,787.5 90,787.8 105,786.7 120,785.9 135,786.1 150,785.5 165,785.3 180,785.9 195,788.2 210,790.1 222,791.1 233,790.6 240,784.3 246,762.4 252,722.6 258,678.6 265.7,638.6 272,726.3 279,820.8 287,928.9 291,904.8 296,874.8 303,826.9 309,800.9 318,795 330,793.7 345,792.4 360,793.1 375,794 390,793.4 405,793.1 420,794 435,793.7 450,791.9 465,791 480,791.5 491,791.4" fill="none" stroke="#ffffff" stroke-width="1.3" stroke-linejoin="round" /><polyline points="61,789.4 75,788.1 90,785.7 105,784.6 120,785.6 135,785.7 150,784.6 165,786.5 180,788.8 195,789.4 210,789.4 222,790.7 233,790.7 240,784.3 246,762.2 252,722.2 258,678.2 265.7,638.1 272,726.2 279,821 287,929.3 291,905.4 296,875.5 303,827.5 309,801.4 318,795.7 330,794.9 345,794.9 360,794.1 375,792.3 390,791.9 405,793.1 420,793.4 435,792.9 450,793.4 465,794.1 480,792.9 491,791.5" fill="none" stroke="#ffffff" stroke-width="1.3" stroke-linejoin="round" /><polyline points="61,790.8 75,788.6 90,787.3 105,786.6 120,784.9 135,783.2 150,783.5 165,786.3 180,787.6 195,789.1 210,791.9 222,793.6 233,792 240,784.3 246,762.2 252,722.2 258,678.2 265.7,638.2 272,714.8 279,809.5 287,917.6 291,893.5 296,863.5 303,815.4 309,789.5 318,783.6 330,784.7 345,784.3 360,783 375,782.8 390,782.6 405,780.9 420,779.7 435,780.5 450,781.3 465,780.9 480,781 491,781.9" fill="none" stroke="#ffffff" stroke-width="1.3" stroke-linejoin="round" /><polyline points="61,803.6 75,803 90,801.9 105,800.1 120,800.1 135,801.3 150,801 165,801.5 180,803.1 195,804.9 210,805.4 222,805.6 233,805 240,799.4 246,777.5 252,736.5 258,692.5 265.7,652.5 272,746.9 279,841.6 287,952.6 291,928.6 296,898.7 303,850.9 309,824.9 318,820 330,818.4 345,817.2 360,817.3 375,816.6 390,815.3 405,815.7 420,817.3 435,817.3 450,816.4 465,816.6 480,816.7 491,815.6" fill="none" stroke="#ffffff" stroke-width="1.3" stroke-linejoin="round" /><polyline points="61,803.9 75,804 90,804.1 105,802.3 120,800.5 135,800.1 150,799.4 165,799.7 180,801 195,804 210,806.6 222,807.6 233,806.8 240,799.6 246,777.7 252,736.7 258,692.7 265.7,652.6 272,737.3 279,831.8 287,940.9 291,916.9 296,886.9 303,839 309,813 318,806.8 330,806.2 345,805.6 360,806.7 375,807.5 390,806.3 405,805.1 420,805.2 435,804.7 450,803.1 465,802.9 480,804.3 491,804.7" fill="none" stroke="#ffffff" stroke-width="1.3" stroke-linejoin="round" /><polyline points="61,806.2 75,804.4 90,802.2 105,801.4 120,800.7 135,798.7 150,797.8 165,800.7 180,803.1 195,804.2 210,806.2 222,808.5 233,807.8 240,799.6 246,777.4 252,736.2 258,692.1 265.7,652.1 272,733.8 279,828.5 287,937.2 291,913.2 296,883.2 303,835.1 309,809.1 318,802.4 330,803.4 345,804.3 360,803.2 375,802 390,802.1 405,801.4 420,799.7 435,799.3 450,800.6 465,801 480,800.4 491,800.7" fill="none" stroke="#ffffff" stroke-width="1.3" stroke-linejoin="round" /><polyline points="61,805.8 75,804.7 90,802 105,800.4 120,800.3 135,799.1 150,797.7 165,800.2 180,803.3 195,804.7 210,805.8 222,807.7 233,807.4 240,799.5 246,777.4 252,736.1 258,692 265.7,651.9 272,735.2 279,830 287,939 291,915.1 296,885.1 303,837.1 309,811.1 318,804.6 330,804.9 345,806.1 360,805.5 375,803.7 390,803.1 405,803.1 420,802 435,801.1 450,802.1 465,803.3 480,802.9 491,802.5" fill="none" stroke="#ffffff" stroke-width="1.3" stroke-linejoin="round" /><polyline points="61,790.5 75,789.5 90,786.8 105,784.9 120,785.2 135,785.3 150,784.3 165,786.3 180,789.3 195,790.7 210,790.9 222,791.9 233,791.5 240,784.7 246,762.7 252,722.6 258,678.5 265.7,638.4 272,734.1 279,828.8 287,937.7 291,913.8 296,883.9 303,836 309,810 318,804.4 330,803.8 345,804.2 360,803.7 375,801.7 390,800.5 405,801.1 420,801.3 435,800.7 450,801.3 465,802.6 480,802.3 491,801.1" fill="none" stroke="#ffffff" stroke-width="1.3" stroke-linejoin="round" /><polyline points="61,804.6 75,804.4 90,802.9 105,800.2 120,799.1 135,799.3 150,798.6 165,799.6 180,802.3 195,805.2 210,806.5 222,807 233,806.2 240,799.2 246,777.2 252,736.2 258,692.1 265.7,651.9 272,738.6 279,833.2 287,942.8 291,918.8 296,888.9 303,841.1 309,815.2 318,809.6 330,808.9 345,808.9 360,809.6 375,808.7 390,806.7 405,806.1 420,806.5 435,805.9 450,805.3 465,806.5 480,807.7 491,807.3" fill="none" stroke="#ffffff" stroke-width="1.3" stroke-linejoin="round" /><polyline points="61,803.9 75,804.4 90,803.4 105,801.2 120,800.4 135,800.1 150,798.4 165,798.9 180,801.2 195,804.1 210,805.7 222,806.9 233,806.9 240,799.4 246,777.4 252,736.4 258,692.3 265.7,652.1 272,737.6 279,832.1 287,941.4 291,917.4 296,887.5 303,839.5 309,813.5 318,806.9 330,806.1 345,806.6 360,807.9 375,807.5 390,806.2 405,805.9 420,806 435,804.5 450,803.3 465,804.1 480,805 491,804.7" fill="none" stroke="#ffffff" stroke-width="1.3" stroke-linejoin="round" /><polyline points="61,790.3 75,790.1 90,789.4 105,787 120,785.2 135,785 150,784.7 165,785.5 180,787.4 195,790.6 210,792.8 222,793.4 233,792.3 240,785.2 246,763.2 252,723.2 258,679.2 265.7,639.1 272,723.2 279,817.7 287,925.7 291,901.8 296,871.8 303,823.9 309,798.1 318,792.4 330,791.9 345,791.5 360,792.3 375,792.3 390,790.5 405,789.2 420,789.5 435,789.2 450,788.2 465,788.7 480,790.2 491,790.5" fill="none" stroke="#ffffff" stroke-width="1.3" stroke-linejoin="round" /><polyline points="61,802.6 75,803.1 90,802.3 105,800.8 120,800.7 135,800.7 150,798.8 165,798.9 180,800.8 195,802.9 210,804.1 222,805.6 233,805.9 240,798.9 246,777 252,736 258,692 265.7,651.9 272,738.9 279,833.4 287,943 291,919 296,889 303,841 309,815 318,808.3 330,807 345,807.2 360,808.3 375,808.1 390,807.4 405,808 420,808.3 435,806.7 450,805.3 465,805.6 480,805.7 491,805" fill="none" stroke="#ffffff" stroke-width="1.3" stroke-linejoin="round" /><polyline points="61,804 75,803.7 90,801.9 105,801 120,801.1 135,799.6 150,797.4 165,798.9 180,801.4 195,802.7 210,804.3 222,806.7 233,807.2 240,799 246,777 252,735.9 258,691.8 265.7,651.6 272,731.3 279,825.9 287,934.2 291,910.2 296,880.2 303,832.1 309,806 318,798.5 330,798.5 345,799.7 360,799.9 375,799.1 390,799.1 405,799.5 420,798.3 435,796.6 450,796.6 465,797.1 480,796.5 491,796.2" fill="none" stroke="#ffffff" stroke-width="1.3" stroke-linejoin="round" /><polyline points="61,802.4 75,802.3 90,801.1 105,800 120,800.7 135,800.9 150,799.1 165,799.5 180,801.4 195,802.6 210,803.3 222,804.8 233,805.3 240,798.6 246,776.7 252,735.8 258,691.7 265.7,651.7 272,738.5 279,833.2 287,942.7 291,918.7 296,888.8 303,840.8 309,814.7 318,808.2 330,806.8 345,806.8 360,807.3 375,806.6 390,806.3 405,807.6 420,808 435,806.6 450,805.7 465,805.9 480,805.2 491,804.1" fill="none" stroke="#ffffff" stroke-width="1.3" stroke-linejoin="round" /><polyline points="61,803.1 75,802.4 90,800.6 105,798.7 120,798.9 135,799.9 150,799.4 165,800.4 180,802.5 195,804.1 210,804.3 222,804.7 233,804.3 240,798.4 246,776.4 252,735.5 258,691.5 265.7,651.4 272,736.1 279,830.8 287,940 291,916.1 296,886.2 303,838.3 309,812.3 318,807.2 330,805.9 345,805.2 360,805.1 375,803.8 390,802.5 405,803.2 420,804.4 435,804.1 450,803.7 465,804.5 480,804.3 491,803.1" fill="none" stroke="#ffffff" stroke-width="1.3" stroke-linejoin="round" /><polyline points="61,789.5 75,788.7 90,789.2 105,788.9 120,787.4 135,786.5 150,786.3 165,786.9 180,787 195,788.9 210,791.9 222,793.4 233,792.5 240,785.6 246,763.7 252,723.8 258,679.9 265.7,640 272,717.2 279,811.7 287,919.7 291,895.6 296,865.5 303,817.5 309,791.5 318,785.3 330,784.9 345,783.7 360,783.7 375,785 390,785.2 405,784.1 420,784 435,784.2 450,782.9 465,781.4 480,781.7 491,782.4" fill="none" stroke="#ffffff" stroke-width="1.3" stroke-linejoin="round" /><polyline points="61,802.7 75,801.9 90,800 105,798.9 120,799.8 135,800.3 150,799 165,800.2 180,802.2 195,803.1 210,803.2 222,804.4 233,804.5 240,798.3 246,776.3 252,735.4 258,691.3 265.7,651.3 272,729.6 279,824.4 287,932.7 291,908.8 296,878.8 303,830.8 309,804.8 318,799 330,797.7 345,797.5 360,797.2 375,795.8 390,795.4 405,796.7 420,797.4 435,796.6 450,796.5 465,797 480,796 491,794.6" fill="none" stroke="#ffffff" stroke-width="1.3" stroke-linejoin="round" /><polyline points="61,803.6 75,802.6 90,801.1 105,801 120,800.9 135,798.9 150,797.1 165,799 180,800.8 195,801.6 210,803.7 222,806.5 233,806.7 240,798.5 246,776.4 252,735.4 258,691.3 265.7,651.3 272,731.1 279,825.8 287,933.9 291,909.9 296,879.8 303,831.7 309,805.6 318,798.1 330,798.4 345,799.3 360,798.9 375,798.5 390,799.3 405,799.4 420,797.7 435,796.6 450,796.8 465,796.6 480,795.6 491,795.7" fill="none" stroke="#ffffff" stroke-width="1.3" stroke-linejoin="round" /><polyline points="61,791.2 75,790.9 90,789.8 105,787.2 120,785.7 135,785.8 150,785.5 165,786.4 180,788.6 195,791.7 210,793.4 222,793.9 233,792.8 240,785.9 246,763.9 252,723.9 258,679.9 265.7,639.8 272,723.2 279,817.8 287,925.9 291,901.9 296,872 303,824.2 309,798.3 318,792.8 330,792.3 345,791.9 360,792.6 375,792.1 390,790.1 405,789.1 420,789.6 435,789.3 450,788.5 465,789.3 480,790.7 491,790.7" fill="none" stroke="#ffffff" stroke-width="1.3" stroke-linejoin="round" /><polyline points="61,802.7 75,800.6 90,799.7 105,800.4 120,800.2 135,799.1 150,798.9 165,800.9 180,801.2 195,801.3 210,803.3 222,805.4 233,804.7 240,798 246,776 252,735.1 258,691.2 265.7,651.3 272,735.2 279,829.9 287,938.8 291,914.7 296,884.6 303,836.5 309,810.4 318,804.4 330,804.4 345,803.4 360,801.8 375,801.9 390,803.1 405,803 420,802.4 435,803 450,803.4 465,801.8 480,800.4 491,800.5" fill="none" stroke="#ffffff" stroke-width="1.3" stroke-linejoin="round" /><polyline points="61,791.5 75,789 90,787.9 105,787.4 120,786.3 135,785.6 150,786.6 165,789 180,789.7 195,790.7 210,792.8 222,793.9 233,792.2 240,785.7 246,763.6 252,723.7 258,679.8 265.7,639.9 272,718.8 279,813.5 287,921.7 291,897.6 296,867.6 303,819.6 309,793.7 318,788.7 330,789 345,787.6 360,785.8 375,785.6 390,785.5 405,784.4 420,784.3 435,785.8 450,786.4 465,785.5 480,785.1 491,785.5" fill="none" stroke="#ffffff" stroke-width="1.3" stroke-linejoin="round" /><polyline points="61,804.3 75,803.4 90,801 105,799.7 120,799.4 135,797.9 150,796.2 165,798.6 180,801.5 195,802.9 210,804.4 222,806.5 233,806.4 240,798.2 246,776.1 252,735.1 258,690.9 265.7,650.8 272,739 279,833.7 287,943.3 291,919.4 296,889.4 303,841.3 309,815.3 318,808.4 330,808.8 345,810.1 360,809.8 375,808.4 390,807.9 405,807.9 420,806.5 435,805.3 450,806.1 465,807.1 480,806.7 491,806.5" fill="none" stroke="#ffffff" stroke-width="1.3" stroke-linejoin="round" /><polyline points="61,789.7 75,788.6 90,788.9 105,788.8 120,787.7 135,787.3 150,787.4 165,788.1 180,788 195,789.4 210,792 222,793.3 233,792.3 240,786 246,764 252,724.2 258,680.3 265.7,640.4 272,724.6 279,819.1 287,927.2 291,903.1 296,873.1 303,825 309,799.1 318,793.3 330,792.7 345,791 360,790.6 375,791.7 390,791.9 405,791.2 420,791.6 435,792.2 450,791.1 465,789.4 480,789.3 491,789.7" fill="none" stroke="#ffffff" stroke-width="1.3" stroke-linejoin="round" /><polyline points="61,790.9 75,791.3 90,790.7 105,788.6 120,787.4 135,787.1 150,785.9 165,786.2 180,788.2 195,791.2 210,793.1 222,794.2 233,793.8 240,786.5 246,764.6 252,724.6 258,680.6 265.7,640.4 272,735.3 279,829.8 287,938.7 291,914.7 296,884.7 303,836.8 309,810.8 318,804.5 330,803.7 345,803.7 360,805 375,805 390,803.6 405,803 420,803.2 435,802.1 450,800.7 465,801.1 480,802.3 491,802.3" fill="none" stroke="#ffffff" stroke-width="1.3" stroke-linejoin="round" /><polyline points="61,790.9 75,789.6 90,788 105,788.3 120,789 135,787.9 150,786.4 165,788.3 180,789.6 195,789.6 210,790.9 222,793.3 233,793.6 240,786.4 246,764.4 252,724.3 258,680.3 265.7,640.4 272,726.4 279,821.2 287,929.4 291,905.4 296,875.4 303,827.2 309,801.1 318,794.3 330,794 345,794.1 360,793.2 375,792.5 390,793.5 405,794.4 420,793.7 435,793 450,793.3 465,792.7 480,791 491,790.5" fill="none" stroke="#ffffff" stroke-width="1.3" stroke-linejoin="round" /><polyline points="61,803.1 75,802.5 90,800.5 105,798 120,797.5 135,798.1 150,797.6 165,798.9 180,801.5 195,803.9 210,804.5 222,804.9 233,804.1 240,797.6 246,775.6 252,734.8 258,690.7 265.7,650.6 272,737.1 279,831.8 287,941.1 291,917.2 296,887.3 303,839.5 309,813.5 318,808.3 330,807.5 345,807.2 360,807.4 375,806.1 390,804.2 405,804.1 420,804.9 435,804.5 450,804.3 465,805.5 480,806.1 491,805.3" fill="none" stroke="#ffffff" stroke-width="1.3" stroke-linejoin="round" /><polyline points="61,792.3 75,792.5 90,791.2 105,788.8 120,787.8 135,787.6 150,786.3 165,787 180,789.6 195,792.5 210,794 222,795 233,794.7 240,787.3 246,765.3 252,725.3 258,681.2 265.7,641 272,722.9 279,817.5 287,925.6 291,901.7 296,871.7 303,823.8 309,797.9 318,791.6 330,791 345,791.4 360,792.4 375,791.8 390,790.1 405,789.7 420,789.8 435,788.6 450,787.7 465,788.8 480,789.8 491,789.5" fill="none" stroke="#ffffff" stroke-width="1.3" stroke-linejoin="round" /><polyline points="61,793.1 75,791.5 90,790.6 105,790.1 120,788.4 135,786.4 150,786.1 165,788.4 180,789.7 195,791.2 210,794.3 222,796.5 233,795.3 240,787.3 246,765.2 252,725.1 258,681.1 265.7,641.2 272,722.3 279,816.9 287,925 291,900.9 296,870.8 303,822.7 309,796.8 318,790.2 330,791.2 345,791.1 360,790.3 375,790.5 390,790.7 405,789.1 420,787.6 435,787.8 450,788.2 465,787.5 480,787.6 491,788.7" fill="none" stroke="#ffffff" stroke-width="1.3" stroke-linejoin="round" /><polyline points="61,793.8 75,792.1 90,789.9 105,789.1 120,788.5 135,786.6 150,785.6 165,788.4 180,790.8 195,791.9 210,793.9 222,796.2 233,795.5 240,787.3 246,765.2 252,725.1 258,681 265.7,640.9 272,729 279,823.7 287,931.9 291,907.9 296,877.9 303,829.8 309,803.8 318,797.1 330,798 345,798.8 360,797.8 375,796.7 390,796.7 405,796.1 420,794.5 435,794.1 450,795.2 465,795.6 480,795 491,795.3" fill="none" stroke="#ffffff" stroke-width="1.3" stroke-linejoin="round" /><polyline points="61,800.5 75,800.3 90,799.1 105,797.9 120,798.4 135,799 150,797.7 165,798.2 180,799.9 195,801.3 210,801.7 222,802.8 233,802.9 240,796.8 246,774.9 252,734.2 258,690.2 265.7,650.1 272,736.5 279,831.2 287,940.4 291,916.4 296,886.5 303,838.5 309,812.5 318,806.6 330,805 345,804.5 360,804.8 375,804.1 390,803.5 405,804.6 420,805.6 435,804.7 450,803.7 465,803.9 480,803.4 491,802.2" fill="none" stroke="#ffffff" stroke-width="1.3" stroke-linejoin="round" /><polyline points="61,790.8 75,790.1 90,789.8 105,788.5 120,788 135,788.8 150,788.8 165,789.2 180,790 195,791.9 210,793 222,793.5 233,792.6 240,787 246,765.1 252,725.3 258,681.3 265.7,641.4 272,729.4 279,824 287,932.1 291,908.2 296,878.2 303,830.3 309,804.4 318,799.3 330,797.8 345,796.2 360,796.3 375,796.4 390,795.5 405,795.5 420,796.9 435,797.2 450,796 465,795.4 480,795.6 491,795" fill="none" stroke="#ffffff" stroke-width="1.3" stroke-linejoin="round" /><polyline points="61,790.8 75,790.6 90,790.1 105,788.8 120,788.7 135,789.5 150,788.7 165,788.7 180,789.9 195,791.8 210,792.7 222,793.5 233,793.3 240,787.3 246,765.4 252,725.5 258,681.6 265.7,641.6 272,732.2 279,826.8 287,935.1 291,911.1 296,881.2 303,833.2 309,807.3 318,801.6 330,800 345,798.9 360,799.4 375,799.4 390,798.6 405,799.1 420,800.3 435,799.8 450,798.4 465,798.2 480,798.2 491,797.4" fill="none" stroke="#ffffff" stroke-width="1.3" stroke-linejoin="round" /><polyline points="61,802.3 75,802 90,800 105,797.5 120,796.9 135,796.9 150,795.8 165,797.2 180,800.1 195,802.6 210,803.6 222,804.4 233,803.9 240,796.7 246,774.7 252,734 258,689.9 265.7,649.7 272,736.9 279,831.6 287,940.9 291,916.9 296,887 303,839.1 309,813.2 318,807.4 330,806.8 345,807.2 360,807.7 375,806.4 390,804.6 405,804.4 420,804.6 435,803.7 450,803.5 465,804.9 480,805.6 491,805" fill="none" stroke="#ffffff" stroke-width="1.3" stroke-linejoin="round" /><polyline points="61,792.6 75,792.8 90,791.5 105,789.3 120,788.5 135,788.1 150,786.6 165,787.3 180,789.9 195,792.7 210,794.1 222,795.4 233,795.2 240,787.7 246,765.7 252,725.7 258,681.6 265.7,641.4 272,726.2 279,820.8 287,929 291,905 296,875.1 303,827.1 309,801.2 318,794.6 330,794 345,794.6 360,795.6 375,795 390,793.6 405,793.4 420,793.3 435,791.9 450,791 465,792 480,792.8 491,792.5" fill="none" stroke="#ffffff" stroke-width="1.3" stroke-linejoin="round" /><polyline points="61,800.9 75,799.9 90,798.1 105,797.8 120,798.8 135,798.3 150,796.8 165,798.3 180,800 195,800.4 210,801 222,802.9 233,803.3 240,796.5 246,774.5 252,733.8 258,689.8 265.7,649.8 272,734.2 279,828.9 287,937.7 291,913.8 296,883.8 303,835.7 309,809.6 318,803.1 330,802.3 345,802.5 360,801.8 375,800.7 390,801.2 405,802.4 420,802.3 435,801.4 450,801.5 465,801.5 480,800 491,798.9" fill="none" stroke="#ffffff" stroke-width="1.3" stroke-linejoin="round" /><polyline points="61,793 75,791.8 90,791.6 105,790.8 120,788.8 135,787.2 150,787.1 165,788.7 180,789.5 195,791.7 210,795 222,796.7 233,795.4 240,787.7 246,765.7 252,725.7 258,681.8 265.7,641.8 272,726.1 279,820.7 287,928.7 291,904.6 296,874.5 303,826.5 309,800.6 318,794.3 330,794.8 345,794.2 360,793.9 375,794.7 390,794.5 405,792.7 420,791.8 435,792.1 450,791.7 465,790.8 480,791.5 491,792.6" fill="none" stroke="#ffffff" stroke-width="1.3" stroke-linejoin="round" /><polyline points="61,793.5 75,790.9 90,789.4 105,789.1 120,788.4 135,787.4 150,788 165,790.8 180,791.7 195,792.3 210,794.2 222,795.7 233,794.3 240,787.5 246,765.4 252,725.4 258,681.5 265.7,641.6 272,720.6 279,815.3 287,923.5 291,899.5 296,869.5 303,821.4 309,795.4 318,790.1 330,790.6 345,789.6 360,787.7 375,787.1 390,787.3 405,786.5 420,786.1 435,787.2 450,788.3 465,787.5 480,786.7 491,786.9" fill="none" stroke="#ffffff" stroke-width="1.3" stroke-linejoin="round" /><polyline points="61,793.2 75,791 90,788.9 105,788.7 120,789.2 135,788.4 150,787.9 165,790.5 180,792.1 195,792.1 210,793.1 222,794.9 233,794.4 240,787.6 246,765.6 252,725.5 258,681.5 265.7,641.6 272,723 279,817.8 287,926.1 291,902.1 296,872.1 303,824.1 309,798 318,792.2 330,792.2 345,791.9 360,790.2 375,788.9 390,789.4 405,789.9 420,789.4 435,789.6 450,790.8 465,790.5 480,788.9 491,788.3" fill="none" stroke="#ffffff" stroke-width="1.3" stroke-linejoin="round" /><polyline points="61,800.4 75,799.3 90,798.6 105,797 120,796.2 135,797 150,797.5 165,798.4 180,799.4 195,801.4 210,802.6 222,802.8 233,801.5 240,795.9 246,773.9 252,733.4 258,689.5 265.7,649.5 272,738.4 279,833 287,942.4 291,918.4 296,888.5 303,840.6 309,814.7 318,810.1 330,808.9 345,807.2 360,807 375,806.8 390,805.5 405,805.1 420,806.5 435,807.2 450,806.4 465,806.2 480,806.6 491,806.1" fill="none" stroke="#ffffff" stroke-width="1.3" stroke-linejoin="round" /><polyline points="61,793.7 75,791.2 90,789.7 105,789.3 120,788.4 135,787.4 150,788 165,790.8 180,791.8 195,792.6 210,794.6 222,796 233,794.4 240,787.7 246,765.6 252,725.6 258,681.6 265.7,641.7 272,731.5 279,826.3 287,934.5 291,910.5 296,880.4 303,832.4 309,806.5 318,801.2 330,801.7 345,800.7 360,798.9 375,798.4 390,798.4 405,797.4 420,797 435,798.2 450,799.2 465,798.5 480,797.9 491,798.2" fill="none" stroke="#ffffff" stroke-width="1.3" stroke-linejoin="round" /><polyline points="61,802 75,799.9 90,798.9 105,797.9 120,796.1 135,795.1 150,795.8 165,798.1 180,799.2 195,801 210,803.6 222,804.8 233,803 240,795.9 246,773.8 252,733.2 258,689.2 265.7,649.3 272,739.4 279,834.1 287,943.6 291,919.6 296,889.6 303,841.6 309,815.7 318,810.4 330,811 345,810 360,808.9 375,808.9 390,808.2 405,806.5 420,806.1 435,807.2 450,807.6 465,807 480,807.5 491,808.2" fill="none" stroke="#ffffff" stroke-width="1.3" stroke-linejoin="round" /><polyline points="61,793.2 75,791.5 90,790.7 105,789.3 120,787.8 135,787.8 150,788.7 165,790.4 180,791.4 195,793.3 210,795.3 222,795.8 233,794 240,787.8 246,765.8 252,725.8 258,681.9 265.7,642 272,735.4 279,830 287,938.8 291,914.8 296,884.9 303,837 309,811.1 318,806.4 330,806.2 345,804.6 360,803.7 375,803.7 390,802.6 405,801.3 420,801.9 435,803.1 450,803 465,802.5 480,803.1 491,803.3" fill="none" stroke="#ffffff" stroke-width="1.3" stroke-linejoin="round" /><polyline points="61,792.7 75,791.7 90,790.2 105,790.2 120,790.9 135,789.8 150,788 165,789.6 180,791.1 195,791.5 210,792.7 222,795.2 233,795.6 240,788.2 246,766.2 252,726.2 258,682.1 265.7,642.1 272,715 279,809.7 287,918 291,894 296,863.9 303,815.8 309,789.6 318,782.7 330,782.3 345,782.6 360,782.1 375,781.4 390,782.2 405,783.1 420,782.4 435,781.4 450,781.5 465,781.1 480,779.6 491,779" fill="none" stroke="#ffffff" stroke-width="1.3" stroke-linejoin="round" /><polyline points="61,791.9 75,791.3 90,790.6 105,789.1 120,788.8 135,789.8 150,789.6 165,790.1 180,791.2 195,793 210,793.9 222,794.3 233,793.6 240,787.9 246,766.1 252,726.2 258,682.2 265.7,642.2 272,721.9 279,816.5 287,924.7 291,900.8 296,870.8 303,822.9 309,797 318,792 330,790.5 345,789 360,789.1 375,788.9 390,787.8 405,788 420,789.5 435,789.6 450,788.5 465,788.3 480,788.5 491,787.7" fill="none" stroke="#ffffff" stroke-width="1.3" stroke-linejoin="round" /><polyline points="61,793 75,792.5 90,792.5 105,791 120,788.9 135,788.2 150,787.9 165,788.7 180,789.8 195,792.7 210,795.5 222,796.7 233,795.5 240,788.2 246,766.3 252,726.3 258,682.4 265.7,642.3 272,734.2 279,828.7 287,937.2 291,913.2 296,883.2 303,835.2 309,809.3 318,803.3 330,803 345,802.4 360,802.9 375,803.7 390,802.7 405,801.1 420,801 435,801 450,799.8 465,799.3 480,800.6 491,801.3" fill="none" stroke="#ffffff" stroke-width="1.3" stroke-linejoin="round" /><polyline points="61,800.8 75,799.7 90,798.4 105,798.5 120,798.4 135,796.4 150,794.9 165,796.8 180,798.2 195,798.9 210,801.1 222,803.8 233,803.9 240,795.9 246,773.8 252,733.2 258,689.2 265.7,649.2 272,738 279,832.7 287,942 291,917.9 296,887.8 303,839.7 309,813.6 318,806.3 330,806.6 345,807.1 360,806.5 375,806.3 390,807.3 405,807.3 420,805.8 435,804.9 450,805.1 465,804.6 480,803.5 491,803.7" fill="none" stroke="#ffffff" stroke-width="1.3" stroke-linejoin="round" /><polyline points="61,793.1 75,792.7 90,791.2 105,790.7 120,791.1 135,789.9 150,787.8 165,789.1 180,791.1 195,792 210,793.4 222,795.8 233,796.4 240,788.6 246,766.6 252,726.6 258,682.5 265.7,642.4 272,734.5 279,829.2 287,937.9 291,914 296,883.9 303,835.8 309,809.7 318,802.4 330,802 345,802.8 360,802.8 375,802.2 390,802.6 405,803.4 420,802.5 435,801 450,800.8 465,800.9 480,799.9 491,799.4" fill="none" stroke="#ffffff" stroke-width="1.3" stroke-linejoin="round" /><polyline points="61,799.4 75,797.9 90,798 105,798.1 120,797.1 135,796.6 150,796.8 165,797.9 180,797.8 195,798.9 210,801.3 222,802.8 233,801.7 240,795.4 246,773.4 252,733 258,689.1 265.7,649.3 272,730.6 279,825.3 287,933.3 291,909.3 296,879.2 303,831.2 309,805.2 318,799.5 330,799.1 345,797.4 360,796.6 375,797.5 390,797.9 405,797.2 420,797.4 435,798.2 450,797.5 465,795.8 480,795.4 491,795.8" fill="none" stroke="#ffffff" stroke-width="1.3" stroke-linejoin="round" /><polyline points="61,792.4 75,791.1 90,791.4 105,791.5 120,790.3 135,789.4 150,789.4 165,790.4 180,790.3 195,791.6 210,794.4 222,796 233,795.1 240,788.4 246,766.4 252,726.5 258,682.6 265.7,642.8 272,726.8 279,821.4 287,929.4 291,905.3 296,875.3 303,827.2 309,801.2 318,795.1 330,794.8 345,793.4 360,792.9 375,794 390,794.5 405,793.7 420,793.6 435,794.1 450,793.2 465,791.5 480,791.2 491,791.8" fill="none" stroke="#ffffff" stroke-width="1.3" stroke-linejoin="round" /><polyline points="61,792.8 75,792.8 90,792.8 105,791.3 120,789.6 135,789.1 150,788.5 165,788.9 180,790 195,792.8 210,795.4 222,796.6 233,795.8 240,788.6 246,766.7 252,726.8 258,682.8 265.7,642.7 272,725.6 279,820 287,928.1 291,904 296,874 303,826.1 309,800.1 318,793.9 330,793.4 345,792.7 360,793.6 375,794.4 390,793.4 405,792.3 420,792.4 435,792 450,790.5 465,790.1 480,791.2 491,791.7" fill="none" stroke="#ffffff" stroke-width="1.3" stroke-linejoin="round" /><polyline points="61,791.9 75,791.4 90,791.5 105,790.6 120,789.8 135,790.2 150,790 165,790.2 180,790.7 195,792.6 210,794.3 222,795.1 233,794.4 240,788.4 246,766.5 252,726.7 258,682.8 265.7,642.8 272,733.2 279,827.8 287,936.2 291,912.1 296,882.2 303,834.2 309,808.2 318,802.8 330,801.5 345,799.9 360,800.1 375,800.7 390,800.2 405,800 420,801 435,801.2 450,799.7 465,798.8 480,799 491,798.8" fill="none" stroke="#ffffff" stroke-width="1.3" stroke-linejoin="round" /><polyline points="61,793.1 75,791.5 90,791 105,791.6 120,791 135,789.4 150,788.9 165,790.5 180,790.9 195,791.5 210,794.1 222,796.4 233,795.9 240,788.6 246,766.6 252,726.6 258,682.7 265.7,642.8 272,729.7 279,824.3 287,932.4 291,908.4 296,878.2 303,830.1 309,804 318,797.4 330,797.6 345,796.9 360,795.9 375,796.5 390,797.6 405,797.2 420,796.3 435,796.4 450,796.3 465,794.7 480,793.7 491,794.2" fill="none" stroke="#ffffff" stroke-width="1.3" stroke-linejoin="round" /><polyline points="61,793.7 75,793.6 90,792 105,790.9 120,791 135,789.9 150,787.7 165,788.9 180,791.3 195,792.8 210,794.2 222,796.4 233,796.9 240,789 246,767 252,726.9 258,682.8 265.7,642.7 272,732.9 279,827.5 287,936 291,912 296,882 303,834 309,807.9 318,800.6 330,800.3 345,801.3 360,801.7 375,801 390,800.8 405,801.3 420,800.5 435,798.7 450,798.4 465,799 480,798.5 491,798.1" fill="none" stroke="#ffffff" stroke-width="1.3" stroke-linejoin="round" /><polyline points="61,799.9 75,799.6 90,798.1 105,797.4 120,797.8 135,796.9 150,794.7 165,795.8 180,797.9 195,799 210,800.3 222,802.5 233,803.1 240,795.5 246,773.5 252,733 258,688.9 265.7,648.8 272,735 279,829.7 287,938.6 291,914.6 296,884.6 303,836.5 309,810.4 318,803.2 330,802.6 345,803.3 360,803.6 375,802.9 390,803.1 405,803.9 420,803.3 435,801.7 450,801.3 465,801.5 480,800.7 491,800.1" fill="none" stroke="#ffffff" stroke-width="1.3" stroke-linejoin="round" /><polyline points="61,793.4 75,793 90,791.5 105,791 120,791.5 135,790.5 150,788.4 165,789.6 180,791.6 195,792.5 210,793.7 222,796 233,796.6 240,789.1 246,767.1 252,727 258,683 265.7,642.9 272,736.4 279,831.1 287,940.2 291,916.2 296,886.2 303,838.1 309,811.9 318,804.8 330,804.2 345,804.9 360,805 375,804.3 390,804.6 405,805.5 420,804.9 435,803.4 450,803.1 465,803.2 480,802.1 491,801.5" fill="none" stroke="#ffffff" stroke-width="1.3" stroke-linejoin="round" /><polyline points="61,793 75,791.5 90,791.1 105,790.3 120,789.3 135,789.6 150,790.3 165,791.5 180,791.9 195,793.4 210,795.2 222,795.7 233,794.3 240,788.5 246,766.6 252,726.7 258,682.8 265.7,643 272,737.5 279,832.1 287,941.4 291,917.4 296,887.4 303,839.4 309,813.5 318,808.7 330,807.9 345,806 360,805.2 375,805.5 390,805 405,804.3 420,805.3 435,806.4 450,805.7 465,804.7 480,804.8 491,804.7" fill="none" stroke="#ffffff" stroke-width="1.3" stroke-linejoin="round" /><polyline points="61,793.4 75,791.8 90,791.1 105,791.7 120,791.4 135,789.8 150,789.1 165,790.9 180,791.3 195,791.8 210,794.2 222,796.6 233,796.2 240,788.9 246,766.9 252,726.9 258,682.9 265.7,643 272,721 279,815.7 287,923.8 291,899.7 296,869.6 303,821.5 309,795.4 318,788.7 330,788.8 345,788.3 360,787.3 375,787.6 390,788.8 405,788.6 420,787.6 435,787.7 450,787.7 465,786.3 480,785.1 491,785.4" fill="none" stroke="#ffffff" stroke-width="1.3" stroke-linejoin="round" /><polyline points="61,798.9 75,799 90,799.1 105,797.8 120,796.6 135,796.4 150,795.6 165,795.6 180,796.6 195,799.2 210,801.4 222,802.5 233,802 240,795.2 246,773.3 252,732.9 258,689 265.7,648.9 272,717 279,811.5 287,919.6 291,895.6 296,865.6 303,817.6 309,791.6 318,785.4 330,784.4 345,783.7 360,784.6 375,785.4 390,784.6 405,784 420,784.4 435,783.9 450,782.1 465,781.6 480,782.4 491,782.6" fill="none" stroke="#ffffff" stroke-width="1.3" stroke-linejoin="round" /><polyline points="61,798.6 75,798.7 90,798.8 105,797.5 120,796.7 135,796.8 150,795.9 165,795.9 180,796.8 195,799.1 210,801 222,802.1 233,801.7 240,795.1 246,773.3 252,732.9 258,689 265.7,648.9 272,739.4 279,833.9 287,943.4 291,919.4 296,889.4 303,841.5 309,815.5 318,809.4 330,808.1 345,807.2 360,808.1 375,808.7 390,808 405,807.8 420,808.5 435,807.9 450,806.2 465,805.6 480,806.2 491,806" fill="none" stroke="#ffffff" stroke-width="1.3" stroke-linejoin="round" /><polyline points="61,792.5 75,792.5 90,791.9 105,790.6 120,790.6 135,791.1 150,789.9 165,790 180,791.5 195,793.3 210,794.2 222,795.2 233,795.3 240,789 246,767.1 252,727.2 258,683.2 265.7,643.1 272,730.8 279,825.4 287,933.6 291,909.6 296,879.7 303,831.7 309,805.7 318,799.7 330,798.1 345,797.5 360,798.1 375,797.9 390,797.3 405,798 420,798.9 435,798 450,796.7 465,796.6 480,796.5 491,795.7" fill="none" stroke="#ffffff" stroke-width="1.3" stroke-linejoin="round" /><polyline points="61,798.9 75,798.8 90,799 105,797.8 120,796.5 135,796.2 150,795.5 165,795.6 180,796.5 195,799 210,801.4 222,802.6 233,801.9 240,795.1 246,773.2 252,732.8 258,688.9 265.7,648.9 272,739 279,833.5 287,942.8 291,918.8 296,888.8 303,840.8 309,814.9 318,808.7 330,807.8 345,806.9 360,807.8 375,808.7 390,807.9 405,807.2 420,807.5 435,807.1 450,805.5 465,804.8 480,805.6 491,805.9" fill="none" stroke="#ffffff" stroke-width="1.3" stroke-linejoin="round" /><polyline points="61,795.1 75,793.1 90,790.5 105,789.8 120,790 135,789.1 150,788.6 165,791.4 180,793.6 195,794 210,795 222,796.7 233,796.1 240,788.9 246,766.8 252,726.8 258,682.7 265.7,642.7 272,714.5 279,809.2 287,917.6 291,893.6 296,863.6 303,815.6 309,789.5 318,783.7 330,784 345,784.1 360,782.6 375,780.9 390,780.9 405,781.1 420,780.4 435,780.5 450,781.8 465,782.2 480,781 491,780.5" fill="none" stroke="#ffffff" stroke-width="1.3" stroke-linejoin="round" /><polyline points="61,800.6 75,799 90,798.3 105,797 120,794.9 135,794 150,794.5 165,796.4 180,797.6 195,799.8 210,802.6 222,803.7 233,802 240,794.7 246,772.7 252,732.3 258,688.3 265.7,648.4 272,719.7 279,814.2 287,922.3 291,898.3 296,868.2 303,820.3 309,794.4 318,788.9 330,789.3 345,788.5 360,787.9 375,788.1 390,787.2 405,785.4 420,785 435,785.8 450,785.8 465,785.3 480,786.2 491,787" fill="none" stroke="#ffffff" stroke-width="1.3" stroke-linejoin="round" /><polyline points="61,800.6 75,798.1 90,796.7 105,796.3 120,795.3 135,794.4 150,795 165,797.7 180,798.7 195,799.5 210,801.5 222,802.9 233,801.4 240,794.6 246,772.5 252,732.1 258,688.1 265.7,648.2 272,733.7 279,828.4 287,937.1 291,913 296,883 303,835 309,809 318,803.8 330,804.2 345,803.3 360,801.5 375,801 390,801 405,800 420,799.6 435,800.8 450,801.7 465,801 480,800.4 491,800.7" fill="none" stroke="#ffffff" stroke-width="1.3" stroke-linejoin="round" /><polyline points="61,798.9 75,799.3 90,798.7 105,796.8 120,795.9 135,795.6 150,794.2 165,794.5 180,796.4 195,799.1 210,800.9 222,802.1 233,801.9 240,794.7 246,772.8 252,732.4 258,688.4 265.7,648.3 272,733.1 279,827.7 287,936.1 291,912.1 296,882.2 303,834.2 309,808.2 318,801.7 330,800.8 345,800.9 360,802.1 375,802.1 390,800.9 405,800.6 420,800.8 435,799.6 450,798.2 465,798.6 480,799.4 491,799.3" fill="none" stroke="#ffffff" stroke-width="1.3" stroke-linejoin="round" /><polyline points="61,797.9 75,797.4 90,797.3 105,796.1 120,795.6 135,796.2 150,795.9 165,796.1 180,796.8 195,798.7 210,800.1 222,800.8 233,800.2 240,794.3 246,772.4 252,732.2 258,688.2 265.7,648.3 272,744.3 279,838.8 287,949.2 291,925.2 296,895.3 303,847.3 309,821.4 318,815.9 330,814.5 345,813.1 360,813.3 375,813.7 390,813 405,813 420,814.2 435,814.2 450,812.8 465,812.1 480,812.3 491,811.8" fill="none" stroke="#ffffff" stroke-width="1.3" stroke-linejoin="round" /><polyline points="61,797.9 75,797.5 90,797.8 105,796.9 120,795.9 135,795.8 150,795.4 165,795.6 180,796.1 195,798.2 210,800.3 222,801.4 233,800.7 240,794.3 246,772.4 252,732.2 258,688.3 265.7,648.3 272,744.8 279,839.3 287,949.8 291,925.7 296,895.7 303,847.7 309,821.8 318,815.9 330,814.8 345,813.5 360,814 375,814.9 390,814.4 405,813.9 420,814.6 435,814.5 450,812.9 465,811.9 480,812.3 491,812.4" fill="none" stroke="#ffffff" stroke-width="1.3" stroke-linejoin="round" /><polyline points="61,799.2 75,799.5 90,798.6 105,796.4 120,795.3 135,795.1 150,793.8 165,794.3 180,796.6 195,799.4 210,801.2 222,802.3 233,801.9 240,794.6 246,772.6 252,732.3 258,688.2 265.7,648.1 272,738.5 279,833 287,942.4 291,918.4 296,888.5 303,840.6 309,814.6 318,808.2 330,807.5 345,807.7 360,808.8 375,808.6 390,807.2 405,806.7 420,806.8 435,805.6 450,804.5 465,805.2 480,806.2 491,806.1" fill="none" stroke="#ffffff" stroke-width="1.3" stroke-linejoin="round" /><polyline points="61,799.6 75,797.2 90,796.1 105,795.9 120,795 135,794.3 150,795 165,797.4 180,798 195,798.7 210,800.7 222,802 233,800.5 240,794.1 246,772 252,731.7 258,687.8 265.7,647.9 272,729.4 279,824.1 287,932.3 291,908.2 296,878.2 303,830.2 309,804.2 318,799.1 330,799.2 345,797.9 360,796.1 375,796 390,796.1 405,795.3 420,795.2 435,796.5 450,797 465,796 480,795.4 491,795.6" fill="none" stroke="#ffffff" stroke-width="1.3" stroke-linejoin="round" /><polyline points="61,798 75,797.1 90,797.4 105,797 120,795.9 135,795.6 150,795.5 165,796.1 180,796.2 195,797.8 210,800.3 222,801.5 233,800.6 240,794.2 246,772.3 252,732.1 258,688.2 265.7,648.3 272,734.9 279,829.5 287,938.1 291,914 296,884 303,836 309,810 318,804.2 330,803.5 345,801.9 360,801.8 375,802.9 390,802.8 405,802.2 420,802.6 435,803 450,801.7 465,800.3 480,800.4 491,800.7" fill="none" stroke="#ffffff" stroke-width="1.3" stroke-linejoin="round" /><polyline points="61,794.9 75,794.4 90,794.2 105,792.6 120,790.6 135,789.9 150,789.7 165,790.6 180,791.8 195,794.7 210,797.4 222,798.5 233,797.3 240,790 246,768 252,728.1 258,684.1 265.7,644.1 272,729.5 279,824 287,932 291,908 296,878 303,830 309,804.1 318,798.2 330,798 345,797.3 360,797.8 375,798.5 390,797.3 405,795.8 420,795.7 435,795.7 450,794.6 465,794.3 480,795.6 491,796.3" fill="none" stroke="#ffffff" stroke-width="1.3" stroke-linejoin="round" /><polyline points="61,797.7 75,797.9 90,797.8 105,796.3 120,795.6 135,795.7 150,794.6 165,794.5 180,795.8 195,798.2 210,799.9 222,801 233,800.8 240,794.1 246,772.2 252,732 258,688 265.7,648 272,729.9 279,824.4 287,932.5 291,908.5 296,878.5 303,830.6 309,804.6 318,798.3 330,797.1 345,796.5 360,797.5 375,797.9 390,797.1 405,797 420,797.6 435,796.8 450,795.1 465,794.8 480,795.4 491,795.1" fill="none" stroke="#ffffff" stroke-width="1.3" stroke-linejoin="round" /><polyline points="61,793.4 75,793.3 90,793.2 105,792 120,791.5 135,791.9 150,791.1 165,791.1 180,792 195,794.1 210,795.6 222,796.6 233,796.2 240,790 246,768.1 252,728.2 258,684.3 265.7,644.2 272,726.4 279,821 287,929.1 291,905.1 296,875.1 303,827.2 309,801.2 318,795.3 330,793.9 345,792.8 360,793.5 375,793.9 390,793.2 405,793.3 420,794.2 435,793.8 450,792.2 465,791.7 480,791.9 491,791.5" fill="none" stroke="#ffffff" stroke-width="1.3" stroke-linejoin="round" /><polyline points="61,800.2 75,798.5 90,797 105,796.5 120,795.4 135,793.3 150,792.7 165,795.3 180,796.9 195,798.2 210,800.8 222,803.1 233,802.3 240,794.1 246,772 252,731.6 258,687.5 265.7,647.6 272,729.4 279,824 287,932.2 291,908.1 296,878.1 303,830 309,804 318,797.3 330,798.3 345,798.6 360,797.7 375,797.3 390,797.5 405,796.4 420,794.8 435,794.7 450,795.5 465,795.2 480,794.9 491,795.6" fill="none" stroke="#ffffff" stroke-width="1.3" stroke-linejoin="round" /><polyline points="61,798.4 75,797.5 90,795.6 105,794.4 120,795.2 135,795.6 150,794.4 165,795.7 180,797.8 195,798.7 210,798.9 222,800.1 233,800.1 240,793.8 246,771.8 252,731.6 258,687.5 265.7,647.5 272,724.3 279,819 287,927.4 291,903.4 296,873.5 303,825.5 309,799.5 318,793.7 330,792.6 345,792.4 360,792 375,790.6 390,790.2 405,791.3 420,791.9 435,791.2 450,791.2 465,791.7 480,790.7 491,789.4" fill="none" stroke="#ffffff" stroke-width="1.3" stroke-linejoin="round" /><polyline points="61,799.2 75,797.5 90,796.7 105,795.2 120,793.6 135,793.4 150,794.2 165,795.9 180,797 195,799.1 210,801.3 222,801.8 233,800 240,793.6 246,771.6 252,731.4 258,687.4 265.7,647.5 272,717.9 279,812.5 287,920.6 291,896.6 296,866.6 303,818.7 309,792.8 318,788 330,787.9 345,786.5 360,785.8 375,785.7 390,784.6 405,783.2 420,783.6 435,784.6 450,784.5 465,784.2 480,784.9 491,785.2" fill="none" stroke="#ffffff" stroke-width="1.3" stroke-linejoin="round" /><polyline points="61,793.8 75,793.6 90,793 105,791.7 120,791.6 135,792.3 150,791.4 165,791.6 180,792.8 195,794.6 210,795.6 222,796.4 233,796.2 240,790.2 246,768.3 252,728.4 258,684.4 265.7,644.4 272,736.9 279,831.6 287,940.7 291,916.8 296,886.8 303,838.9 309,812.9 318,807.2 330,805.6 345,804.7 360,805.2 375,805 390,804.3 405,804.8 420,805.9 435,805.3 450,804 465,803.9 480,803.8 491,803" fill="none" stroke="#ffffff" stroke-width="1.3" stroke-linejoin="round" /><polyline points="61,799 75,797.9 90,797.7 105,796.8 120,794.8 135,793.4 150,793.3 165,794.8 180,795.7 195,797.9 210,801.1 222,802.7 233,801.4 240,793.8 246,771.8 252,731.6 258,687.6 265.7,647.6 272,731.8 279,826.3 287,934.4 291,910.4 296,880.3 303,832.3 309,806.4 318,800.1 330,800.5 345,799.9 360,799.7 375,800.5 390,800.1 405,798.4 420,797.7 435,797.9 450,797.4 465,796.6 480,797.3 491,798.3" fill="none" stroke="#ffffff" stroke-width="1.3" stroke-linejoin="round" /><polyline points="61,798.3 75,797.4 90,795.9 105,795.8 120,796.4 135,795.3 150,793.5 165,795 180,796.6 195,797.2 210,798.5 222,800.8 233,801.2 240,793.8 246,771.8 252,731.5 258,687.5 265.7,647.5 272,725.1 279,819.8 287,928 291,904 296,874 303,825.9 309,799.8 318,792.8 330,792.4 345,792.8 360,792.4 375,791.7 390,792.4 405,793.2 420,792.5 435,791.4 450,791.4 465,791.1 480,789.8 491,789.3" fill="none" stroke="#ffffff" stroke-width="1.3" stroke-linejoin="round" /><polyline points="61,795.4 75,794.3 90,792.1 105,790.8 120,791.5 135,791.8 150,790.7 165,792.4 180,794.6 195,795.5 210,795.7 222,796.9 233,796.8 240,790.3 246,768.3 252,728.3 258,684.3 265.7,644.2 272,722.8 279,817.5 287,925.8 291,901.9 296,872 303,824 309,798 318,792.3 330,791.4 345,791.3 360,790.7 375,789.1 390,788.6 405,789.6 420,790 435,789.5 450,789.8 465,790.4 480,789.5 491,788.2" fill="none" stroke="#ffffff" stroke-width="1.3" stroke-linejoin="round" /><polyline points="61,797.6 75,796.9 90,797.2 105,796.7 120,795.2 135,794.4 150,794.2 165,794.8 180,795.1 195,797.1 210,799.9 222,801.4 233,800.5 240,793.6 246,771.7 252,731.5 258,687.6 265.7,647.7 272,724.5 279,819.1 287,927.1 291,903 296,872.9 303,824.9 309,799 318,792.8 330,792.4 345,791.2 360,791.3 375,792.5 390,792.4 405,791.4 420,791.3 435,791.5 450,790.2 465,788.9 480,789.3 491,789.9" fill="none" stroke="#ffffff" stroke-width="1.3" stroke-linejoin="round" /><polyline points="61,797.3 75,797.6 90,797 105,795.6 120,795.4 135,795.5 150,794 165,794.1 180,795.6 195,797.8 210,799.1 222,800.4 233,800.4 240,793.7 246,771.8 252,731.6 258,687.6 265.7,647.5 272,738.7 279,833.3 287,942.8 291,918.8 296,888.8 303,840.8 309,814.8 318,808.4 330,807.1 345,806.8 360,807.8 375,807.8 390,807.1 405,807.4 420,808 435,806.8 450,805.4 465,805.4 480,805.5 491,805" fill="none" stroke="#ffffff" stroke-width="1.3" stroke-linejoin="round" /><polyline points="61,795.7 75,793.7 90,793 105,792.1 120,790.8 135,790.7 150,791.6 165,793.4 180,794.1 195,795.6 210,797.6 222,798.2 233,796.5 240,790.4 246,768.4 252,728.5 258,684.6 265.7,644.7 272,731.9 279,826.5 287,934.7 291,910.7 296,880.7 303,832.8 309,806.9 318,802.1 330,801.9 345,800.2 360,799.1 375,799.1 390,798.5 405,797.4 420,797.9 435,799.2 450,799.2 465,798.4 480,798.6 491,798.7" fill="none" stroke="#ffffff" stroke-width="1.3" stroke-linejoin="round" /><polyline points="61,798 75,797.2 90,795.8 105,793.7 120,793.1 135,793.8 150,793.7 165,794.8 180,796.8 195,799 210,799.8 222,800.1 233,799.1 240,793 246,771 252,730.9 258,686.9 265.7,646.9 272,733.5 279,828.1 287,936.8 291,912.8 296,882.9 303,835.1 309,809.2 318,804.3 330,803.2 345,802.3 360,802.3 375,801.5 390,799.8 405,799.6 420,800.7 435,800.8 450,800.4 465,800.9 480,801.5 491,800.8" fill="none" stroke="#ffffff" stroke-width="1.3" stroke-linejoin="round" /><polyline points="61,798.4 75,797.9 90,796.7 105,794.3 120,793 135,793.1 150,792.7 165,793.8 180,796.1 195,798.9 210,800.4 222,800.9 233,799.9 240,793 246,771.1 252,730.9 258,686.9 265.7,646.8 272,739.8 279,834.4 287,944.1 291,920.1 296,890.2 303,842.4 309,816.5 318,811 330,810.4 345,810.1 360,810.6 375,810 390,808.1 405,807.3 420,807.8 435,807.5 450,806.9 465,807.7 480,808.8 491,808.6" fill="none" stroke="#ffffff" stroke-width="1.3" stroke-linejoin="round" /><polyline points="61,796.7 75,796.1 90,793.9 105,791.6 120,791.3 135,791.3 150,790.4 165,792 180,794.8 195,796.9 210,797.7 222,798.6 233,798.1 240,791 246,769 252,729 258,684.9 265.7,644.8 272,734.4 279,829 287,937.9 291,914 296,884.1 303,836.2 309,810.2 318,804.5 330,804 345,804.3 360,804.4 375,802.9 390,801.3 405,801.4 420,801.5 435,800.8 450,800.9 465,802.2 480,802.5 491,801.8" fill="none" stroke="#ffffff" stroke-width="1.3" stroke-linejoin="round" /><polyline points="61,795.9 75,794.5 90,792.4 105,792 120,792.9 135,792.5 150,791.3 165,793.2 180,795 195,795.3 210,795.9 222,797.7 233,797.7 240,791 246,769 252,728.9 258,684.9 265.7,644.9 272,720.1 279,814.8 287,923.2 291,899.2 296,869.2 303,821.1 309,795 318,788.9 330,788.4 345,788.3 360,787.3 375,786 390,786.4 405,787.4 420,787.2 435,786.8 450,787.3 465,787.3 480,785.8 491,784.8" fill="none" stroke="#ffffff" stroke-width="1.3" stroke-linejoin="round" /><polyline points="61,795 75,794.6 90,793.3 105,791.9 120,792.3 135,793 150,792 165,792.7 180,794.4 195,795.8 210,796.2 222,797.1 233,797.1 240,791 246,769.1 252,729.1 258,685.1 265.7,645.1 272,728.8 279,823.5 287,931.7 291,907.8 296,877.9 303,829.9 309,803.9 318,798.2 330,796.8 345,796.2 360,796.3 375,795.5 390,794.8 405,795.6 420,796.6 435,796 450,795.3 465,795.5 480,795.1 491,793.9" fill="none" stroke="#ffffff" stroke-width="1.3" stroke-linejoin="round" /><polyline points="61,798.2 75,796.8 90,795.9 105,796 120,795.3 135,793.3 150,792.2 165,794.2 180,795.3 195,796.2 210,798.8 222,801.4 233,801.1 240,793.1 246,771 252,730.8 258,686.8 265.7,646.9 272,715.9 279,810.6 287,918.7 291,894.6 296,864.5 303,816.4 309,790.3 318,783.2 330,783.7 345,783.9 360,783.2 375,783.4 390,784.2 405,783.7 420,782.2 435,781.8 450,781.9 465,781.1 480,780.3 491,780.9" fill="none" stroke="#ffffff" stroke-width="1.3" stroke-linejoin="round" /><polyline points="61,795.4 75,794.7 90,793 105,792.2 120,793.1 135,793.1 150,791.6 165,792.7 180,794.6 195,795.4 210,795.9 222,797.4 233,797.7 240,791.1 246,769.2 252,729.2 258,685.1 265.7,645.1 272,723.5 279,818.2 287,926.5 291,902.5 296,872.5 303,824.5 309,798.4 318,792.2 330,791.2 345,791.1 360,790.9 375,789.8 390,789.7 405,790.9 420,791.2 435,790.3 450,790.1 465,790.3 480,789.2 491,788" fill="none" stroke="#ffffff" stroke-width="1.3" stroke-linejoin="round" /><polyline points="61,798.8 75,797.9 90,795.9 105,794.8 120,794.5 135,793 150,791.3 165,793.3 180,795.9 195,797.3 210,799 222,801.2 233,801.2 240,793 246,770.9 252,730.7 258,686.6 265.7,646.5 272,737.4 279,832.1 287,941.5 291,917.5 296,887.5 303,839.4 309,813.3 318,806.3 330,806.6 345,807.7 360,807.5 375,806.5 390,806.3 405,806.2 420,804.9 435,803.7 450,804.2 465,804.8 480,804.4 491,804.3" fill="none" stroke="#ffffff" stroke-width="1.3" stroke-linejoin="round" /><polyline points="61,797.3 75,795 90,793 105,792.7 120,792.9 135,792.1 150,791.7 165,794.4 180,795.9 195,796.1 210,797.3 222,799.1 233,798.4 240,791.5 246,769.5 252,729.4 258,685.4 265.7,645.5 272,732.9 279,827.7 287,936.3 291,912.3 296,882.3 303,834.2 309,808.2 318,802.4 330,802.6 345,802.2 360,800.5 375,799.3 390,799.7 405,799.9 420,799.4 435,799.7 450,800.8 465,800.6 480,799.2 491,798.8" fill="none" stroke="#ffffff" stroke-width="1.3" stroke-linejoin="round" /><polyline points="61,797.6 75,796 90,795.1 105,794.5 120,792.8 135,791 150,790.8 165,793 180,794.2 195,795.9 210,798.9 222,800.8 233,799.6 240,791.8 246,769.7 252,729.6 258,685.6 265.7,645.7 272,735 279,829.6 287,938.3 291,914.3 296,884.2 303,836.1 309,810.2 318,803.8 330,804.6 345,804.4 360,803.7 375,803.9 390,803.8 405,802.3 420,801.1 435,801.4 450,801.6 465,801 480,801.2 491,802.1" fill="none" stroke="#ffffff" stroke-width="1.3" stroke-linejoin="round" /><polyline points="61,797.5 75,797.5 90,796.3 105,794 120,793 135,792.7 150,791.6 165,792.5 180,795 195,797.7 210,799.3 222,800.3 233,799.8 240,792.5 246,770.5 252,730.4 258,686.4 265.7,646.2 272,742.6 279,837.2 287,947.4 291,923.5 296,893.5 303,845.6 309,819.7 318,813.5 330,812.9 345,813.2 360,814 375,813.4 390,811.9 405,811.4 420,811.5 435,810.5 450,809.7 465,810.6 480,811.6 491,811.3" fill="none" stroke="#ffffff" stroke-width="1.3" stroke-linejoin="round" /><polyline points="61,797.5 75,796.7 90,795.7 105,793.6 120,792 135,792.1 150,792.3 165,793.6 180,795.3 195,798 210,799.8 222,800.2 233,798.8 240,792.1 246,770.2 252,730.2 258,686.2 265.7,646.1 272,735.2 279,829.8 287,938.6 291,914.6 296,884.7 303,836.8 309,811 318,805.8 330,805.4 345,804.5 360,804.6 375,804.3 390,802.6 405,801.5 420,802 435,802.4 450,801.9 465,802.2 480,803.3 491,803.3" fill="none" stroke="#ffffff" stroke-width="1.3" stroke-linejoin="round" /><polyline points="61,796.2 75,796.4 90,795.8 105,794.3 120,794 135,794 150,792.4 165,792.6 180,794.3 195,796.5 210,797.9 222,799.2 233,799.3 240,792.4 246,770.5 252,730.5 258,686.5 265.7,646.4 272,724 279,818.6 287,926.7 291,902.8 296,872.8 303,824.8 309,798.8 318,792.3 330,791.1 345,791 360,792 375,791.9 390,791.2 405,791.5 420,791.8 435,790.6 450,789.2 465,789.3 480,789.6 491,789.1" fill="none" stroke="#ffffff" stroke-width="1.3" stroke-linejoin="round" /><polygon points="61,764 75,762.9 90,761.8 105,760.8 120,760.2 135,759.6 150,759 165,760.5 180,762 195,763.5 210,765.2 222,766.6 233,766 240,759 246,737 252,697 258,653 265.7,613 272,698.2 279,792.8 287,901 291,877 296,847 303,799 309,773 318,767 330,766.7 345,766.3 360,766 375,765.6 390,765.2 405,764.9 420,764.8 435,764.6 450,764.5 465,764.3 480,764.1 491,764 491,830 480,830.1 465,830.3 450,830.5 435,830.6 420,830.8 405,830.9 390,831.2 375,831.6 360,832 345,832.3 330,832.7 318,833 309,839 303,865 296,913 291,943 287,965 279,858.8 272,764.2 265.7,679 258,719 252,763 246,803 240,825 233,832 222,832.6 210,831.2 195,829.5 180,828 165,826.5 150,825 135,825.6 120,826.2 105,826.8 90,827.8 75,828.9 61,830" fill="#fff"/><path d="M61.5 529V971.5H501" stroke="#777" stroke-width="1.5" fill="none"/></svg></svg>
<div style="left:57px;top:971px;width:112px;height:117px;border:2px solid #6e6e6e"></div>
<div class="t" style="left:61px;top:975.0px;height:16px;line-height:16px;color:#fff;font-size:13px">1</div>
<div style="left:168px;top:971px;width:112px;height:117px;border:2px solid #6e6e6e"></div>
<div class="t" style="left:172px;top:975.0px;height:16px;line-height:16px;color:#fff;font-size:13px">2</div>
<div style="left:279px;top:971px;width:112px;height:117px;border:2px solid #6e6e6e"></div>
<div class="t" style="left:283px;top:975.0px;height:16px;line-height:16px;color:#fff;font-size:13px">3</div>
<div style="left:390px;top:971px;width:112px;height:117px;border:2px solid #6e6e6e"></div>
<div class="t" style="left:394px;top:975.0px;height:16px;line-height:16px;color:#fff;font-size:13px">4</div>
<div class="hdr" style="left:56px;top:1092px;width:448px;height:33px;"></div>
<div class="t" style="left:67px;top:1097.5px;height:20px;line-height:20px;color:#5b9bd1;font-size:15px">模板</div>
<div style="left:295px;top:1093px;width:208px;height:31px;background:#e6e6e6"></div>
<svg style="left:301px;top:1100px" width="14" height="14" viewBox="0 0 14 14"><path d="M11.5 5.5 A4.8 4.8 0 0 0 2.6 4.6" stroke="#4a8fd6" stroke-width="2" fill="none"/><path d="M12.5 1.5 L12.5 6.2 L7.8 6.2 Z" fill="#4a8fd6"/><path d="M2.5 8.5 A4.8 4.8 0 0 0 11.4 9.4" stroke="#4a8fd6" stroke-width="2" fill="none"/><path d="M1.5 12.5 L1.5 7.8 L6.2 7.8 Z" fill="#4a8fd6"/></svg>
<div style="left:326px;top:1095px;width:20px;height:25px;background:#ff0019;color:#111;text-align:center;font-size:13px;line-height:23px">af</div>
<div style="left:352px;top:1095px;width:18px;height:25px;background:#44ffff;color:#111;text-align:center;font-size:13px;line-height:23px">V</div>
<div style="left:376px;top:1095px;width:18px;height:25px;background:#ff00ff;color:#111;text-align:center;font-size:13px;line-height:23px">S</div>
<div style="left:400px;top:1095px;width:18px;height:25px;background:#22ff22;color:#111;text-align:center;font-size:13px;line-height:23px">N</div>
<div style="left:425px;top:1095px;width:19px;height:25px;background:#cccccc;color:#111;text-align:center;font-size:13px;line-height:23px">Q</div>
<svg style="left:454px;top:1101.5px" width="12" height="12" viewBox="0 0 12 12"><path d="M10.2 0.8 L7.3 3.7 M4 7 L0.8 10.2" stroke="#4a8fd6" stroke-width="1.9" stroke-linecap="round"/><path d="M5.6 1.5 L5.6 5.2 L9.4 5.2 Z M1.8 5.6 L5.4 5.6 L5.4 9.4 Z" fill="#4a8fd6"/></svg>
<svg style="left:482.25px;top:1101.5px" width="11.5" height="11.5" viewBox="0 0 11.5 11.5"><path d="M0.5 2.6 L11 2.6" stroke="#4a8fd6" stroke-width="1.3"/><path d="M4 2.2 Q4 0.7 5.75 0.7 Q7.5 0.7 7.5 2.2" stroke="#4a8fd6" stroke-width="1" fill="none"/><path d="M2 3 L2 10.8 L9.5 10.8 L9.5 3" stroke="#4a8fd6" stroke-width="1.1" fill="none"/><path d="M4.4 4.8 L4.4 9.2 M5.75 4.8 L5.75 9.2 M7.1 4.8 L7.1 9.2" stroke="#4a8fd6" stroke-width="0.8" stroke-opacity="0.8"/></svg>
<div style="left:56px;top:1125px;width:447px;height:250px;background:#000;border-left:1px solid #cfcfcf"></div>
<svg style="left:0px;top:0px" width="1906" height="1526" viewBox="0 0 1906 1526"><polyline points="62,1171.5 64,1171.4 66,1171.2 68,1171.9 70,1171.1 72,1171.6 74,1172.1 76,1171.3 78,1171.9 80,1172 82,1171.4 84,1171.8 86,1172.2 88,1171.9 90,1172.2 92,1171.7 92.8,1172 94.4,1172.8 96,1148 98.6,1194.9 100.7,1173.4 102.5,1171.9 104,1171.6 106,1171.5 108,1171.8 110,1172.2 112,1171.8 114,1172 116,1171.6 118,1171.9 120,1171.2 122,1171.4 124,1171.7 126,1171.8 128,1171.4 130,1171.1 132,1171.3" fill="none" stroke="#33dd22" stroke-width="1.3" stroke-linejoin="round" /><polyline points="144,1180 152,1179 158,1177 162,1173 165,1172 168,1176 170,1180 172,1176 174,1181 176,1179 182,1178 190,1177 200,1179 215,1180" fill="none" stroke="#33dd22" stroke-width="1.3" stroke-linejoin="round" /><polyline points="226,1173 236,1174 240,1172 244,1177 247,1171 252,1175 255,1173 258,1160 261,1189 264,1180 270,1183 275,1186 280,1188 285,1186 290,1188 296,1187" fill="none" stroke="#33dd22" stroke-width="1.3" stroke-linejoin="round" /><polyline points="308,1175.7 310,1175.7 312,1175.9 314,1174.8 316,1174.9 318,1174.3 320,1172.7 322,1172.3 324,1171.8 326,1170.7 328,1170.5 330,1170.6 332,1169.6 334,1170 336,1169.2 337.8,1169.1 339.4,1169.9 341,1149.1 343.6,1181.9 345.7,1169.4 347.5,1167.9 348,1167.9 350,1168.1 352,1167.2 354,1166.8 356,1166.6 358,1166.9 360,1166.1 362,1165.9 364,1166.1 366,1166.2 368,1165.5 370,1165.3 372,1165.4 374,1164.7 376,1165.1 378,1164.7" fill="none" stroke="#33dd22" stroke-width="1.3" stroke-linejoin="round" /><polyline points="390,1183.1 392,1183.3 394,1182.1 396,1182 398,1181.4 400,1180.2 402,1179.5 404,1179.4 406,1178.6 408,1177 410,1176.9 412,1176.7 414,1175.8 416,1176 418,1174.9 419.8,1174.6 421.4,1175.4 423,1156.6 425.6,1190.8 427.7,1174.3 429.5,1172.8 430,1172.6 432,1172.7 434,1172.3 436,1172.1 438,1171 440,1170.9 442,1171 444,1170.3 446,1169.7 448,1169.3 450,1169.5 452,1168.7 454,1167.9 456,1168.5 458,1167.9 460,1167.9" fill="none" stroke="#33dd22" stroke-width="1.3" stroke-linejoin="round" /><polyline points="62,1255.1 64,1251.8 66,1251.5 68,1254.8 70,1252.4 72,1250.8 74,1256.9 76,1250.6 78,1252.8 80,1256.9 82,1252 84,1252.6 86,1255.2 88,1252.7 90,1251.8 92,1255.2 94,1253.4 96,1251.7 98,1255.6 100,1253.1 102,1251.6 104,1256.5 106,1251 108,1253 110,1260.3 112,1255.7 114,1253.4 116,1255 118,1253.3 120,1253.5 122,1256.3 124,1250.5 126,1250.7 128,1249.1 130,1251.7 132,1252.3" fill="none" stroke="#33dd22" stroke-width="1.3" stroke-linejoin="round" /><polyline points="144,1254 160,1255 175,1256 180,1254 184,1260 186,1250 190,1256 200,1256 215,1257" fill="none" stroke="#33dd22" stroke-width="1.3" stroke-linejoin="round" /><polyline points="226,1254 240,1255 248,1248 252,1250 256,1254 260,1252 262,1258 266,1256 280,1256 296,1258" fill="none" stroke="#33dd22" stroke-width="1.3" stroke-linejoin="round" /><rect x="60" y="1128.5" width="76" height="76" fill="none" stroke="#ff1111" stroke-width="2"/><g font-family="Liberation Sans, sans-serif"><text x="62" y="1140" font-size="14" fill="#fff">86963</text><text x="144" y="1140" font-size="14" fill="#fff">50</text><text x="226" y="1140" font-size="14" fill="#fff">32</text><text x="308" y="1140" font-size="14" fill="#fff">18</text><text x="390" y="1140" font-size="14" fill="#fff">8</text><text x="62" y="1222" font-size="14" fill="#fff">4</text><text x="144" y="1222" font-size="14" fill="#fff">3</text><text x="226" y="1222" font-size="14" fill="#fff">2</text></g></svg>
<div style="left:56px;top:1375px;width:448px;height:35px;background:#fff;border-bottom:1px solid #cfcfcf;border-left:1px solid #cfcfcf;border-right:1px solid #cfcfcf"></div>
<div style="left:56px;top:1375px;width:40px;height:34px;background:#e6e6e6"></div>
<svg style="left:65px;top:1381px" width="21" height="21" viewBox="0 0 21 21"><rect x="0" y="0" width="21" height="21" rx="4.5" fill="#4a8bca"/><path d="M4.5 10.5 L8.5 14.5 L16.5 6.5" stroke="#ececec" stroke-width="3.2" fill="none"/></svg>
<div style="left:398px;top:1377px;width:29px;height:25px;background:#4a9bdc;color:#fff;text-align:center;font-size:13px;line-height:25px">1</div>
<div style="left:443px;top:1377px;width:50px;height:26px;border:1px solid #d5d5d5;background:#fff;color:#777;font-size:14px;line-height:25px;padding-left:5px">15</div><svg style="left:478px;top:1388.0px" width="10" height="6" viewBox="0 0 10 6"><path d="M0 0 L10 0 L5 5.5 Z" fill="#222"/></svg>
<div style="left:503px;top:491px;width:1345px;height:915px;border-left:1px solid #cfcfcf;border-right:1px solid #cfcfcf"></div>
<div class="hdr" style="left:504px;top:491px;width:1343px;height:33px;"></div>
<div class="t" style="left:515px;top:496.5px;height:20px;line-height:20px;color:#5b9bd1;font-size:15px">心电图</div>
<div style="left:1251px;top:492px;width:596px;height:31px;background:#e6e6e6"></div>
<div style="left:1525px;top:492px;width:1px;height:31px;background:#f4f4f4"></div>
<svg style="left:1268px;top:501px" width="14" height="12" viewBox="0 0 14 12"><path d="M1 6 H10" stroke="#6aa0d0" stroke-width="3"/><path d="M7 1 L12.5 6 L7 11" stroke="#6aa0d0" stroke-width="3" fill="none"/></svg>
<div style="left:1293px;top:499px;width:18px;height:18px;background:#8c7e7e;border-radius:4px;color:#fff;font-size:13px;text-align:center;line-height:18px">02</div>
<div style="left:1322px;top:499px;width:18px;height:18px;background:#8c7e7e;border-radius:4px;color:#fff;font-size:13px;text-align:center;line-height:18px">26</div>
<div style="left:1347px;top:499px;width:18px;height:18px;background:#8c7e7e;border-radius:4px;color:#fff;font-size:13px;text-align:center;line-height:18px">11</div>
<div style="left:1377px;top:499px;width:18px;height:18px;background:#8c7e7e;border-radius:4px;color:#fff;font-size:13px;text-align:center;line-height:18px">55</div>
<div style="left:1406px;top:499px;width:18px;height:18px;background:#8c7e7e;border-radius:4px;color:#fff;font-size:13px;text-align:center;line-height:18px">00</div>
<div class="t" style="left:1314px;top:500.0px;height:16px;line-height:16px;color:#8a8a8a;font-size:13px">-</div>
<div class="t" style="left:1370px;top:500.0px;height:16px;line-height:16px;color:#8a8a8a;font-size:13px">:</div>
<div class="t" style="left:1399px;top:500.0px;height:16px;line-height:16px;color:#8a8a8a;font-size:13px">:</div>
<div class="t" style="left:1441px;top:498.0px;height:18px;line-height:18px;color:#888;font-size:13px"><svg width="14" height="8" viewBox="0 0 14 8" style="position:relative;margin-right:4px"><path d="M2 4 H12" stroke="#888" stroke-width="1.6"/><path d="M0 4 L3.5 0.8 L3.5 7.2 Z M14 4 L10.5 0.8 L10.5 7.2 Z" fill="#888"/></svg>8s</div>
<div class="t" style="left:1488px;top:498.0px;height:18px;line-height:18px;color:#888;font-size:13px"><svg width="11" height="8" viewBox="0 0 11 8" style="position:relative;top:0px;margin-right:2px"><path d="M1 1.5 L5.5 6 L10 1.5" stroke="#888" stroke-width="2.2" fill="none"/></svg>X1</div>
<div style="left:1532px;top:494px;width:20px;height:25px;background:#ff0019;color:#111;text-align:center;font-size:13px;line-height:23px">af</div>
<div style="left:1558px;top:494px;width:18px;height:25px;background:#44ffff;color:#111;text-align:center;font-size:13px;line-height:23px">V</div>
<div style="left:1582px;top:494px;width:18px;height:25px;background:#ff00ff;color:#111;text-align:center;font-size:13px;line-height:23px">S</div>
<div style="left:1606px;top:494px;width:19px;height:25px;background:#22ff22;color:#111;text-align:center;font-size:13px;line-height:23px">N</div>
<div style="left:1631px;top:494px;width:19px;height:25px;background:#cccccc;color:#111;text-align:center;font-size:13px;line-height:23px">Q</div>
<svg style="left:1661px;top:499px" width="14" height="14" viewBox="0 0 14 14"><path d="M1 3 L5 1.5 L9 3 L13 1.5 L13 11.5 L9 13 L5 11.5 L1 13 Z M5 1.5 L5 11.5 M9 3 L9 13" stroke="#7aa7d9" stroke-width="1.2" fill="none"/></svg>
<svg style="left:1692px;top:499px" width="14" height="14" viewBox="0 0 14 14"><path d="M1 2 L4 2 L4 12 L1 12 Z M4 7 L9 2 L9 12 Z M8 7 L13 2 L13 12 Z" fill="#4a8fd6"/></svg>
<svg style="left:1724px;top:498px" width="22" height="17" viewBox="0 0 22 17"><path d="M0.5 8 L3 8 L4.5 3 L6 11 L7.5 2 L9 8 L10 8" stroke="#4a8fd6" stroke-width="1.5" fill="none"/><circle cx="14.5" cy="8.5" r="4.6" stroke="#4a8fd6" stroke-width="2.2" fill="none"/><path d="M17.8 11.8 L21.5 15.5" stroke="#4a8fd6" stroke-width="2.6" stroke-linecap="round"/><path d="M12.6 8.6 L14 10 L16.3 7" stroke="#4a8fd6" stroke-width="1.3" fill="none"/></svg>
<div class="t" style="left:1762px;top:498.0px;height:18px;line-height:18px;color:#4a8fd6;font-size:14px">X1</div>
<svg style="left:1795px;top:500px" width="14" height="14" viewBox="0 0 14 14"><circle cx="6" cy="6" r="4.3" stroke="#4a8fd6" stroke-width="2.2" fill="none"/><path d="M9 9 L13 13" stroke="#4a8fd6" stroke-width="2.6" stroke-linecap="round"/></svg>
<svg style="left:1825.25px;top:500.5px" width="11.5" height="11.5" viewBox="0 0 11.5 11.5"><path d="M0.5 2.6 L11 2.6" stroke="#4a8fd6" stroke-width="1.3"/><path d="M4 2.2 Q4 0.7 5.75 0.7 Q7.5 0.7 7.5 2.2" stroke="#4a8fd6" stroke-width="1" fill="none"/><path d="M2 3 L2 10.8 L9.5 10.8 L9.5 3" stroke="#4a8fd6" stroke-width="1.1" fill="none"/><path d="M4.4 4.8 L4.4 9.2 M5.75 4.8 L5.75 9.2 M7.1 4.8 L7.1 9.2" stroke="#4a8fd6" stroke-width="0.8" stroke-opacity="0.8"/></svg>
<svg overflow="visible" style="left:0px;top:0px" width="1906" height="1526" viewBox="0 0 1906 1526"><path d="M505 544V688M523.1 544V688M541.2 544V688M559.4 544V688M577.5 544V688M595.6 544V688M613.7 544V688M631.9 544V688M650 544V688M668.1 544V688M686.2 544V688M704.3 544V688M722.5 544V688M740.6 544V688M758.7 544V688M776.8 544V688M794.9 544V688M813.1 544V688M831.2 544V688M849.3 544V688M867.4 544V688M885.6 544V688M903.7 544V688M921.8 544V688M939.9 544V688M958 544V688M976.2 544V688M994.3 544V688M1012.4 544V688M1030.5 544V688M1048.6 544V688M1066.8 544V688M1084.9 544V688M1103 544V688M1121.1 544V688M1139.3 544V688M1157.4 544V688M1175.5 544V688M1193.6 544V688M1211.7 544V688M1229.9 544V688M1248 544V688M1266.1 544V688M1284.2 544V688M1302.4 544V688M1320.5 544V688M1338.6 544V688M1356.7 544V688M1374.8 544V688M1393 544V688M1411.1 544V688M1429.2 544V688M1447.3 544V688M1465.4 544V688M1483.6 544V688M1501.7 544V688M1519.8 544V688M1537.9 544V688M1556.1 544V688M1574.2 544V688M1592.3 544V688M1610.4 544V688M1628.5 544V688M1646.7 544V688M1664.8 544V688M1682.9 544V688M1701 544V688M1719.1 544V688M1737.3 544V688M1755.4 544V688M1773.5 544V688M1791.6 544V688M1809.8 544V688M1827.9 544V688M1846 544V688M505 544H1846M505 562H1846M505 580H1846M505 598H1846M505 616H1846M505 634H1846M505 652H1846M505 670H1846M505 688H1846" stroke="#f7a3a3" stroke-width="1" fill="none" shape-rendering="crispEdges"/><polyline points="505,609.3 506.5,609.1 508,609.6 509.5,608.9 511,609.3 512.5,609 514,608.5 515.5,608.9 517,608.2 518.5,608.6 520,608 521.5,607.9 523,608.2 524.5,608.6 526,607.7 527.5,607.7 529,608.2 530.5,608.6 531.5,608.2 532.8,609 534,578 536,640 537.6,612.4 539,610.9 539.5,611.1 541,610.9 542.5,611.7 544,610.7 545.5,611.8 547,611.3 548.5,611.3 550,611.5 551.5,612 553,612.9 554.5,612.3 556,613 557.5,613.3 559,613.1 560.5,613.5 562,613 563.5,612.9 565,612.8 566.5,612.7 568,611.8 569.5,611.3 571,611.6 572.5,611.5 574,611.3 575.5,611.9 577,611.8 578.5,611.3 580,611.8 581.5,611.8 583,612.3 584.5,612.1 586,611.7 587.5,612.6 589,611.6 590.5,612.1 592,612.5 593.5,611.9 595,612.4 596.5,611.9 598,612.7 599.5,612.9 601,612.7 602.5,613.2 604,612.6 605.5,613.1 607,613 608.5,613 610,612.9 611.5,613.4 613,613.5 614.5,613 616,613.2 617.5,613 618.8,613.8 620,583.5 622,640.6 623.6,615.1 625,613.6 626.5,613.2 628,614.2 629.5,614.3 631,614.9 632.5,614.9 634,614.4 635.5,614.7 637,615.3 638.5,614.7 640,615.4 641.5,615.2 643,615.2 644.5,615.3 646,616.2 647.5,615.5 649,615.7 650.5,615.9 652,616.5 653.5,615.5 655,616 656.5,616.2 658,616.7 659.5,616.7 661,616.8 662.5,616.2 664,616.5 665.5,616.5 667,617.2 668.5,617.4 670,616.6 671.5,616.7 673,616.9 674.5,617 676,617.4 677.5,617.6 679,617.3 680.5,617.1 682,617.7 683.5,617.7 685,618 686.5,618.5 688,618.2 689.5,618 691,618.2 692.5,618.3 694,617.7 695.5,618.9 697,618.9 698.5,618.8 699.8,619.6 701,590 703,648.6 704.6,621.3 706,619.8 707.5,620.4 709,620.3 710.5,619.9 712,619.9 713.5,619.6 715,620.3 716.5,619.7 718,619.8 719.5,620.1 721,620.2 722.5,620.5 724,620.2 725.5,620.3 727,620.5 728.5,620.5 730,620.8 731.5,620.4 733,621.4 734.5,621 736,620.4 737.5,620.4 739,620.4 740.5,620.3 742,619.9 743.5,620.6 745,620.6 746.5,619.8 748,619.7 749.5,619.1 751,618.9 752.5,619 754,618.8 755.5,619.3 757,618.3 758.5,618 760,619 761.5,618.4 763,617.8 764.5,618.2 766,617.5 767.5,618.1 769,618.6 770.5,618.4 772,618.2 773.5,617.7 775,617.9 776.5,617.7 778,618.4 779.5,618.2 779.8,618.1 781.1,618.9 782.3,586 784.3,648.6 785.9,619.8 787.3,618.3 788.5,618.7 790,618.2 791.5,618.1 793,618.8 794.5,619 796,618.9 797.5,618.9 799,618.9 800.5,618.8 802,618.2 803.5,618.5 805,618.3 806.5,617.9 808,617.9 809.5,618.2 811,618.2 812.5,618.7 814,619 815.5,618.4 817,619 818.5,619.1 820,619 821.5,618.3 823,618.2 824.5,618.2 826,618.1 827.5,618.1 829,618.6 830.5,619 832,618.9 833.5,618.5 835,618.7 836.5,618.9 838,618 839.5,618.7 841,619 842.5,618.8 844,618.8 845.5,618.5 847,618.1 848.5,618.8 850,618.3 851.5,618.9 853,619.1 854.5,618.4 856,618.4 857.5,619 858.9,618.5 860.2,619.3 861.4,586.5 863.4,645 865,620 866.4,618.5 866.5,618.8 868,618.2 869.5,618.1 871,618.2 872.5,619.1 874,619 875.5,618.2 877,619.1 878.5,619.3 880,618.9 881.5,618.6 883,618.9 884.5,618.4 886,618.3 887.5,619.4 889,619.1 890.5,619 892,619.5 893.5,618.9 895,619.4 896.5,619.4 898,618.6 899.5,618.7 901,618.8 902.5,618.7 904,619.1 905.5,618.8 907,619 908.5,618.7 910,619.6 911.5,619 913,619.2 914.5,619.4 916,619.8 917.5,619.3 919,619.9 920.5,619.5 922,619.6 923.5,619.6 925,619.1 926.5,619.6 928,619.4 929.5,619.2 931,620.2 932.5,619.5 934,619.9 935.5,620.2 937,620 938.5,619.8 939.6,620 940.9,620.8 942.1,586 944.1,650 945.7,621.5 947.1,620 947.5,620 949,620.1 950.5,620.3 952,619.5 953.5,620.1 955,619.7 956.5,619.7 958,620.3 959.5,620 961,620.1 962.5,620.3 964,620.5 965.5,619.9 967,620.1 968.5,620 970,620 971.5,620.2 973,619.9 974.5,620 976,620 977.5,620.5 979,620.2 980.5,620.5 982,620.5 983.5,619.7 985,620.1 986.5,620.5 988,620.4 989.5,619.6 991,619.5 992.5,619.9 994,619.5 995.5,619.7 997,619.5 998.5,620.2 1000,620.3 1001.5,620.5 1003,619.6 1004.5,620.3 1006,620.2 1007.5,619.6 1009,620.5 1010.5,620.6 1012,619.7 1013.5,620.5 1015,619.9 1016.5,620 1018,620.6 1018.9,620 1020.2,620.8 1021.4,590.4 1023.4,648.5 1025,621.1 1026.4,619.6 1027,619.9 1028.5,618.9 1030,619 1031.5,618.9 1033,618.4 1034.5,618 1036,618 1037.5,618.4 1039,617.4 1040.5,618.1 1042,617.9 1043.5,617.2 1045,617.4 1046.5,617.5 1048,617.1 1049.5,616.3 1051,617.1 1052.5,616.6 1054,616.6 1055.5,615.3 1057,615.4 1058.5,615 1060,615.8 1061.5,615.2 1063,615 1064.5,615.3 1066,615.8 1067.5,615.5 1069,614.7 1070.5,614.4 1072,615.2 1073.5,614.6 1075,614.6 1076.5,613.7 1078,613.5 1079.5,614.1 1081,613.6 1082.5,613 1084,614 1085.5,613.5 1087,613.6 1088.5,612.7 1090,613.6 1091.5,612.7 1093,613.6 1094.5,613.1 1096,612.9 1097.5,613.2 1099,613.6 1100.5,612.8 1101.8,613 1103.1,613.8 1104.3,582 1106.3,643 1107.9,614.5 1109.3,613 1109.5,612.5 1111,613 1112.5,612.6 1114,612.4 1115.5,612.4 1117,612.3 1118.5,612.4 1120,612.5 1121.5,612.4 1123,612.9 1124.5,612.3 1126,612.5 1127.5,612.1 1129,612.3 1130.5,611.8 1132,612 1133.5,611.7 1135,612.5 1136.5,612.3 1138,611.8 1139.5,612.1 1141,612.6 1142.5,611.6 1144,612.4 1145.5,611.9 1147,612 1148.5,612.4 1150,611.9 1151.5,612 1153,612.2 1154.5,612.6 1156,611.8 1157.5,612.4 1159,612.2 1160.5,612.2 1162,611.9 1163.5,611.8 1165,611.5 1166.5,611.6 1168,611.5 1169.5,612.3 1171,611.7 1172.5,611.6 1174,611.5 1175.5,612.4 1177,612.4 1178.5,612.2 1180,611.7 1181.5,611.7 1183,611.8 1183.7,612 1185,612.8 1186.2,583 1188.2,641.4 1189.8,613.5 1191.2,612 1192,612 1193.5,611.6 1195,611.9 1196.5,611.7 1198,612.6 1199.5,612.6 1201,612.1 1202.5,611.7 1204,612.6 1205.5,611.8 1207,611.8 1208.5,611.4 1210,611.9 1211.5,612 1213,612 1214.5,611.6 1216,612 1217.5,611.4 1219,611.7 1220.5,611.5 1222,611.9 1223.5,611.5 1225,611.4 1226.5,611.8 1228,611.7 1229.5,612.1 1231,612 1232.5,612.3 1234,612.2 1235.5,612.3 1237,612.5 1238.5,611.9 1240,611.8 1241.5,612.6 1243,611.6 1244.5,612.3 1246,612.2 1247.5,611.5 1249,612.4 1250.5,612.5 1252,612.2 1253.5,612.3 1255,612.4 1256.5,611.6 1258,612 1259.5,612 1261,612.4 1262,612 1263.3,612.8 1264.5,584 1266.5,641 1268.1,613.5 1269.5,612 1270,612.4 1271.5,612.4 1273,612.1 1274.5,612.5 1276,612.3 1277.5,612.3 1279,611.8 1280.5,611.5 1282,611.7 1283.5,612 1285,611.7 1286.5,612.6 1288,612.3 1289.5,612.4 1291,612.4 1292.5,612.5 1294,612.3 1295.5,611.7 1297,612.7 1298.5,612.7 1300,612.4 1301.5,612.5 1303,612.7 1304.5,612 1306,612.8 1307.5,612.3 1309,612.1 1310.5,612.3 1312,612.9 1313.5,612.3 1315,613 1316.5,613.3 1318,612.7 1319.5,612.6 1321,612.8 1322.5,613 1324,613.2 1325.5,613 1327,613.1 1328.5,612.4 1330,612.5 1331.5,612.6 1333,613.2 1334.5,612.7 1336,613.1 1337.5,612.4 1339,612.5 1340.5,612.7 1341.5,613 1342.8,613.8 1344,582 1346,644 1347.6,614.6 1349,613.1 1349.5,613.4 1351,613.5 1352.5,613.6 1354,613.2 1355.5,613.6 1357,613.7 1358.5,613.8 1360,613.6 1361.5,614.7 1363,614 1364.5,615.1 1366,615.2 1367.5,614.2 1369,614.9 1370.5,615.5 1372,615.7 1373.5,615.2 1375,615.1 1376.5,615.1 1378,616 1379.5,615.2 1381,615.6 1382.5,615.3 1384,616.1 1385.5,617 1387,616.5 1388.5,617.9 1390,618.1 1391.5,619.1 1393,619.4 1394.5,619.3 1396,620.5 1397.5,620.4 1399,620 1400.5,620 1402,620.7 1403.5,620.9 1405,621.1 1406.5,621.4 1408,622.2 1409.5,622.7 1411,623.9 1412.5,623.4 1414,624.8 1415.5,625.4 1417,624.8 1418.5,626 1420,625.9 1421.5,626.2 1423,625.7 1423.8,626.1 1425.1,626.9 1426.3,596 1428.3,659 1429.9,630.1 1431.3,628.6 1432,628.8 1433.5,629.3 1435,630.5 1436.5,630.4 1438,630.4 1439.5,630.6 1441,630.4 1442.5,630.2 1444,630.3 1445.5,631.3 1447,630.8 1448.5,631.7 1450,631 1451.5,631.2 1453,631.6 1454.5,631.4 1456,631.8 1457.5,632.7 1459,632.8 1460.5,632.8 1462,632.8 1463.5,633.2 1465,633.4 1466.5,633 1468,633.2 1469.5,632.5 1471,633.3 1472.5,632.9 1474,633.1 1475.5,632.9 1477,632.3 1478.5,631.8 1480,632.7 1481.5,631.5 1483,631.7 1484.5,631.4 1486,631.2 1487.5,631.7 1489,631.9 1490.5,631 1492,631.4 1493.5,630.7 1495,630.8 1496.5,630.3 1498,629.6 1499.5,629.3 1501,629.1 1502.5,629.7 1502.8,629.1 1504.1,629.9 1505.3,600.4 1507.3,656 1508.9,630.1 1510.3,628.6 1511.5,628.5 1513,627.7 1514.5,628 1516,627.3 1517.5,625.8 1519,624.5 1520.5,623.6 1522,622.5 1523.5,621.9 1525,620.9 1526.5,620.4 1528,620 1529.5,620.1 1531,620.4 1532.5,620 1534,619.1 1535.5,618.5 1537,617.9 1538.5,617 1540,616.1 1541.5,614.9 1543,614.4 1544.5,614.5 1546,612.9 1547.5,612.9 1549,612.8 1550.5,613 1552,612.2 1553.5,612.2 1555,612 1556.5,612 1558,611.9 1559.5,612.3 1561,611.9 1562.5,611.7 1564,610.5 1565.5,610.4 1567,611.1 1568.5,611.2 1570,610.7 1571.5,610.8 1573,609.9 1574.5,610.2 1576,610.6 1577.5,610.2 1579,610 1580.5,609.9 1582,608.8 1583.5,608.9 1584.8,609.7 1586,576.3 1588,641 1589.6,610.1 1591,608.6 1592.5,608 1594,607.9 1595.5,608.2 1597,608.2 1598.5,608.3 1600,607.9 1601.5,607.6 1603,607.6 1604.5,607.1 1606,607.1 1607.5,606.4 1609,607.2 1610.5,606.6 1612,607.4 1613.5,607 1615,606.5 1616.5,606.2 1618,606.2 1619.5,606.7 1621,606.8 1622.5,606.1 1624,606.2 1625.5,606.9 1627,607.2 1628.5,607.2 1630,607.3 1631.5,608 1633,607.6 1634.5,608.3 1636,608.8 1637.5,609.7 1639,609.6 1640.5,610.2 1642,609.9 1643.5,609.9 1645,610.1 1646.5,611.1 1648,610.9 1649.5,610.5 1651,610.2 1652.5,610.9 1654,611.5 1655.5,611.6 1657,611.9 1658.5,612.9 1660,613.7 1661.5,613.4 1663,613.5 1664.1,614.3 1665.4,615.1 1666.6,586 1668.6,642.4 1670.2,617.2 1671.6,615.7 1672,615.6 1673.5,616.1 1675,616.5 1676.5,616 1678,616.8 1679.5,616.9 1681,616.9 1682.5,616.8 1684,618 1685.5,617.5 1687,618.4 1688.5,618 1690,618.2 1691.5,619.1 1693,618.7 1694.5,619.5 1696,619 1697.5,618.5 1699,618.4 1700.5,618.5 1702,618.5 1703.5,618.6 1705,617.3 1706.5,617.3 1708,616.7 1709.5,617.3 1711,616 1712.5,615.6 1714,615.4 1715.5,615.6 1717,616 1718.5,615.9 1720,615.7 1721.5,616 1723,615.8 1724.5,615 1726,614.7 1727.5,615.4 1729,615 1730.5,614 1732,614.5 1733.5,613.9 1735,613.7 1736.5,613.4 1738,613 1739.5,612.6 1741,612.8 1742.5,612.7 1744,613.3 1745.3,612.7 1746.6,613.5 1747.8,580 1749.8,643.3 1751.4,613.7 1752.8,612.2 1753,611.8 1754.5,612.6 1756,611.5 1757.5,611.5 1759,612 1760.5,612 1762,611.5 1763.5,611 1765,611.4 1766.5,611.1 1768,611.6 1769.5,610.6 1771,610.6 1772.5,611 1774,609.8 1775.5,610 1777,610.3 1778.5,610 1780,609 1781.5,608.8 1783,608.7 1784.5,609.6 1786,608.6 1787.5,609.2 1789,609.3 1790.5,608.6 1792,608.5 1793.5,609.3 1795,608.9 1796.5,608.4 1798,608.9 1799.5,608.3 1801,608.2 1802.5,607.8 1804,608.6 1805.5,608.7 1807,608.3 1808.5,608.6 1810,607.4 1811.5,607.5 1813,607.7 1814.5,608.2 1816,608.1 1817.5,607.4 1819,607.1 1820.5,607.3 1822,607.3 1823.5,607.8 1825,606.9 1826.5,607.7 1828,607.6 1828.1,607.3 1829.4,608.1 1830.6,574.4 1832.6,640.5 1834.2,608.7 1835.6,607.2 1837,607.5 1838.5,607.4 1840,607.2 1841.5,606.8 1843,606.8 1844.5,606.8" fill="none" stroke="#1a1a1a" stroke-width="1.3" stroke-linejoin="round" /><rect x="604.5" y="544.5" width="34" height="143" fill="none" stroke="#20bb20" stroke-width="2"/><defs><linearGradient id="ng" x1="0" y1="0" x2="0" y2="1"><stop offset="0" stop-color="#c8d820"/><stop offset="1" stop-color="#22bb22"/></linearGradient></defs><path d="M535.4 537V544M621.5 537V544M702.5 537V544M783.3 537V544M862.5 537V544M943.3 537V544M1022.5 537V544M1105.3 537V544M1187.4 537V544M1265.4 537V544M1345.5 537V544M1427.3 537V544M1506.5 537V544M1587.5 537V544M1667.5 537V544M1748.8 537V544M1831.5 537V544" stroke="#0000ee" stroke-width="1.6"/><g font-family="Liberation Sans, sans-serif"><text x="535.4" y="535" font-size="12" text-anchor="middle" fill="#222">Q</text><text x="621.5" y="535" font-size="12" text-anchor="middle" fill="url(#ng)">N</text><text x="702.5" y="535" font-size="12" text-anchor="middle" fill="url(#ng)">N</text><text x="783.3" y="535" font-size="12" text-anchor="middle" fill="url(#ng)">N</text><text x="862.5" y="535" font-size="12" text-anchor="middle" fill="url(#ng)">N</text><text x="943.3" y="535" font-size="12" text-anchor="middle" fill="url(#ng)">N</text><text x="1022.5" y="535" font-size="12" text-anchor="middle" fill="url(#ng)">N</text><text x="1105.3" y="535" font-size="12" text-anchor="middle" fill="url(#ng)">N</text><text x="1187.4" y="535" font-size="12" text-anchor="middle" fill="url(#ng)">N</text><text x="1265.4" y="535" font-size="12" text-anchor="middle" fill="url(#ng)">N</text><text x="1345.5" y="535" font-size="12" text-anchor="middle" fill="url(#ng)">N</text><text x="1427.3" y="535" font-size="12" text-anchor="middle" fill="url(#ng)">N</text><text x="1506.5" y="535" font-size="12" text-anchor="middle" fill="url(#ng)">N</text><text x="1587.5" y="535" font-size="12" text-anchor="middle" fill="url(#ng)">N</text><text x="1667.5" y="535" font-size="12" text-anchor="middle" fill="url(#ng)">N</text><text x="1748.8" y="535" font-size="12" text-anchor="middle" fill="url(#ng)">N</text><text x="1831.5" y="535" font-size="12" text-anchor="middle" fill="url(#ng)">N</text><text x="521" y="534" font-size="10.5" text-anchor="middle" fill="#999">335</text><text x="521" y="547" font-size="10.5" text-anchor="middle" fill="#666">178</text><text x="577.5" y="534" font-size="10.5" text-anchor="middle" fill="#999">953</text><text x="577.5" y="547" font-size="10.5" text-anchor="middle" fill="#666">62</text><text x="661" y="534" font-size="10.5" text-anchor="middle" fill="#999">890</text><text x="661" y="547" font-size="10.5" text-anchor="middle" fill="#666">67</text><text x="741.9" y="534" font-size="10.5" text-anchor="middle" fill="#999">898</text><text x="741.9" y="547" font-size="10.5" text-anchor="middle" fill="#666">66</text><text x="821.9" y="534" font-size="10.5" text-anchor="middle" fill="#999">875</text><text x="821.9" y="547" font-size="10.5" text-anchor="middle" fill="#666">68</text><text x="901.9" y="534" font-size="10.5" text-anchor="middle" fill="#999">890</text><text x="901.9" y="547" font-size="10.5" text-anchor="middle" fill="#666">67</text><text x="981.9" y="534" font-size="10.5" text-anchor="middle" fill="#999">875</text><text x="981.9" y="547" font-size="10.5" text-anchor="middle" fill="#666">68</text><text x="1062.9" y="534" font-size="10.5" text-anchor="middle" fill="#999">914</text><text x="1062.9" y="547" font-size="10.5" text-anchor="middle" fill="#666">65</text><text x="1145.3" y="534" font-size="10.5" text-anchor="middle" fill="#999">906</text><text x="1145.3" y="547" font-size="10.5" text-anchor="middle" fill="#666">66</text><text x="1225.4" y="534" font-size="10.5" text-anchor="middle" fill="#999">859</text><text x="1225.4" y="547" font-size="10.5" text-anchor="middle" fill="#666">69</text><text x="1304.5" y="534" font-size="10.5" text-anchor="middle" fill="#999">882</text><text x="1304.5" y="547" font-size="10.5" text-anchor="middle" fill="#666">67</text><text x="1385.4" y="534" font-size="10.5" text-anchor="middle" fill="#999">906</text><text x="1385.4" y="547" font-size="10.5" text-anchor="middle" fill="#666">66</text><text x="1465.9" y="534" font-size="10.5" text-anchor="middle" fill="#999">875</text><text x="1465.9" y="547" font-size="10.5" text-anchor="middle" fill="#666">68</text><text x="1546" y="534" font-size="10.5" text-anchor="middle" fill="#999">890</text><text x="1546" y="547" font-size="10.5" text-anchor="middle" fill="#666">67</text><text x="1626.5" y="534" font-size="10.5" text-anchor="middle" fill="#999">890</text><text x="1626.5" y="547" font-size="10.5" text-anchor="middle" fill="#666">67</text><text x="1707.2" y="534" font-size="10.5" text-anchor="middle" fill="#999">898</text><text x="1707.2" y="547" font-size="10.5" text-anchor="middle" fill="#666">66</text><text x="1789.2" y="534" font-size="10.5" text-anchor="middle" fill="#999">914</text><text x="1789.2" y="547" font-size="10.5" text-anchor="middle" fill="#666">65</text></g></svg>
<svg style="left:0px;top:0px" width="1906" height="1526" viewBox="0 0 1906 1526"><path d="M505 688V707M595.5 688V707M686 688V707M776.5 688V707M867 688V707M957.5 688V707M1048 688V707M1138.5 688V707M1229 688V707M1319.5 688V707M1410 688V707M1500.5 688V707M1591 688V707M1681.5 688V707M1772 688V707" stroke="#d8d8d8" stroke-width="1" shape-rendering="crispEdges"/><g font-family="Liberation Sans, sans-serif"><text x="507" y="702.5" font-size="12" fill="#111">02/26 11:55:00</text><text x="688" y="702.5" font-size="12" fill="#111">11:55:02</text><text x="869" y="702.5" font-size="12" fill="#111">11:55:04</text><text x="1050" y="702.5" font-size="12" fill="#111">11:55:06</text><text x="1231" y="702.5" font-size="12" fill="#111">11:55:08</text><text x="1412" y="702.5" font-size="12" fill="#111">11:55:10</text><text x="1593" y="702.5" font-size="12" fill="#111">11:55:12</text><text x="1774" y="702.5" font-size="12" fill="#111">11:55:14</text></g></svg>
<div style="left:505px;top:707px;width:1341px;height:17px;background:#efefef;border-top:1px solid #e2e2e2;border-bottom:1px solid #e2e2e2"></div>
<div style="left:505px;top:707px;width:14px;height:16px;background:#e4e4e4"></div>
<svg style="left:509px;top:711px" width="6" height="9" viewBox="0 0 6 9"><path d="M6 0 L0 4.5 L6 9 Z" fill="#555"/></svg>
<div style="left:520px;top:708px;width:3px;height:16px;background:#3a3a3a"></div>
<div style="left:1830px;top:707px;width:16px;height:17px;background:#e4e4e4;border:1px solid #d0d0d0"></div>
<svg style="left:1835px;top:711px" width="6" height="9" viewBox="0 0 6 9"><path d="M0 0 L6 4.5 L0 9 Z" fill="#555"/></svg>
<svg style="left:0px;top:0px" width="1906" height="1526" viewBox="0 0 1906 1526"><path d="M690.2 708V723M856.4 708V723M1022.6 708V723M1188.8 708V723M1355 708V723M1521.2 708V723M1687.4 708V723" stroke="#cfcfcf" stroke-width="1" shape-rendering="crispEdges"/><g font-family="Liberation Sans, sans-serif"><text x="527" y="720.5" font-size="12" fill="#111">02/26 12:00</text><text x="693.2" y="720.5" font-size="12" fill="#111">15:00</text><text x="859.4" y="720.5" font-size="12" fill="#111">18:00</text><text x="1025.6" y="720.5" font-size="12" fill="#111">21:00</text><text x="1191.8" y="720.5" font-size="12" fill="#111">02/27</text><text x="1358" y="720.5" font-size="12" fill="#111">03:00</text><text x="1524.2" y="720.5" font-size="12" fill="#111">06:00</text><text x="1690.4" y="720.5" font-size="12" fill="#111">09:00</text></g></svg>
<div style="left:504px;top:729px;width:1343px;height:1px;background:#cfcfcf"></div>
<div class="hdr" style="left:504px;top:730px;width:1343px;height:33px;"></div>
<div class="t" style="left:515px;top:735.5px;height:20px;line-height:20px;color:#5b9bd1;font-size:15px">缩略图 ( 02/26 11:55:00 -- 02/26 11:57:54 )</div>
<div style="left:1548px;top:731px;width:60px;height:30px;background:#e9e9e9"></div>
<div class="t" style="left:1555px;top:736.0px;height:18px;line-height:18px;color:#999;font-size:12px"><svg width="11" height="8" viewBox="0 0 11 8" style="position:relative;top:0px;margin-right:2px"><path d="M1 1.5 L5.5 6 L10 1.5" stroke="#888" stroke-width="2.2" fill="none"/></svg>100%</div>
<div style="left:1611px;top:731px;width:236px;height:31px;background:#e6e6e6"></div>
<div style="left:1807px;top:737px;width:1px;height:20px;background:#d6d6d6"></div>
<div style="left:1615px;top:733px;width:20px;height:25px;background:#ff0019;color:#111;text-align:center;font-size:13px;line-height:23px">af</div>
<div style="left:1641px;top:733px;width:18px;height:25px;background:#44ffff;color:#111;text-align:center;font-size:13px;line-height:23px">V</div>
<div style="left:1665px;top:733px;width:18px;height:25px;background:#ff00ff;color:#111;text-align:center;font-size:13px;line-height:23px">S</div>
<div style="left:1689px;top:733px;width:19px;height:25px;background:#22ff22;color:#111;text-align:center;font-size:13px;line-height:23px">N</div>
<div style="left:1714px;top:733px;width:19px;height:25px;background:#cccccc;color:#111;text-align:center;font-size:13px;line-height:23px">Q</div>
<svg style="left:1746px;top:737px" width="22" height="17" viewBox="0 0 22 17"><path d="M0.5 8 L3 8 L4.5 3 L6 11 L7.5 2 L9 8 L10 8" stroke="#4a8fd6" stroke-width="1.5" fill="none"/><circle cx="14.5" cy="8.5" r="4.6" stroke="#4a8fd6" stroke-width="2.2" fill="none"/><path d="M17.8 11.8 L21.5 15.5" stroke="#4a8fd6" stroke-width="2.6" stroke-linecap="round"/><path d="M12.6 8.6 L14 10 L16.3 7" stroke="#4a8fd6" stroke-width="1.3" fill="none"/></svg>
<svg style="left:1784.25px;top:739.5px" width="11.5" height="11.5" viewBox="0 0 11.5 11.5"><path d="M0.5 2.6 L11 2.6" stroke="#4a8fd6" stroke-width="1.3"/><path d="M4 2.2 Q4 0.7 5.75 0.7 Q7.5 0.7 7.5 2.2" stroke="#4a8fd6" stroke-width="1" fill="none"/><path d="M2 3 L2 10.8 L9.5 10.8 L9.5 3" stroke="#4a8fd6" stroke-width="1.1" fill="none"/><path d="M4.4 4.8 L4.4 9.2 M5.75 4.8 L5.75 9.2 M7.1 4.8 L7.1 9.2" stroke="#4a8fd6" stroke-width="0.8" stroke-opacity="0.8"/></svg>
<svg style="left:1818px;top:738px" width="14" height="14" viewBox="0 0 14 14"><path d="M1 1 L6 1 L1 6 Z M13 1 L8 1 L13 6 Z M1 13 L6 13 L1 8 Z M13 13 L8 13 L13 8 Z" fill="#4a8fd6"/><path d="M3 3 L11 11 M11 3 L3 11" stroke="#4a8fd6" stroke-width="2.2"/></svg>
<div style="left:505px;top:763px;width:1341px;height:184px;background:#000"></div>
<svg style="left:0px;top:0px" width="1906" height="1526" viewBox="0 0 1906 1526"><svg x="505" y="763" width="1341" height="184" viewBox="505 763 1341 184"><polyline points="507,784.6 509,783.6 511,783.3 513,783.7 515,784 517,783.4 519,783.6 520.5,784.1 521.3,784.9 522,767.1 523.2,802.1 524.2,785.6 525,784.1 527,784 529,784.3 531,783.7 533,784 535,784.8 537,784.9 539,784.5 541,784.6 543,784.5 545,783.9" fill="none" stroke="#bdbdbd" stroke-width="1.3" stroke-linejoin="round" /><polyline points="545,783.9 547,783.8 549,783.8 551,785.1 553,784.8 555,785.2 557,783.9 559,784.8 561,784.6 562,784.6 562.8,785.4 563.5,771.1 564.7,798.9 565.7,786.2 566.5,784.7 567,785 569,784.5 571,785.5 573,784.2 575,784.9 577,785.2 579,785.4 581,785.2 583,785.2 585,785.3 587,785.5 589,784.8 591,785.2 593,785.5 595,785.5 597,784.9 599,785.4 601,785.5 601.4,785 602.2,785.8 602.9,771.6 604.1,798.4 605.1,786.5 605.9,785 607,785.1 609,785.2 611,784.8 613,785.1 615,785.1 617,784.4 619,785.2 621,785.7 623,785.5 625,785.3 627,784.8 629,785.3 631,785.1 633,784.9 635,785.4 637,784.4 639,785.3 641,784.3 642.2,785 643,785.8 643.7,768.7 644.9,799.9 645.9,786.5 646.7,785 647,785.1 649,784.9 651,784.6 653,785.2 655,784.9 657,785.1 659,785.5 661,784.6 663,784.2 665,784.6 667,785.2 669,784.5 671,784.4 673,785.5 675,785.1 677,784.8 679,785.4 681,784.6 681.9,784.9 682.7,785.7 683.4,768.1 684.6,802.1 685.6,786.4 686.4,784.9 687,785.1 689,784.4 691,784.7 693,785.3 695,785.4 697,785.4 699,784.7 701,784.9 703,784.5 705,784.3 707,784.8 709,785.3 711,785.3 713,785.1 715,785.4 717,784.4 719,784.3 721,784.7 723,784.4 723.3,784.7 724.1,785.5 724.8,768.2 726,800.1 727,786.2 727.8,784.7 729,784.3 731,784.6 733,784.9 735,784.7 737,784.4 739,785.1 741,785.3 743,784.6 745,784 747,784 749,785.1 751,784 753,784.9 755,784.7 757,784.3 759,785 761,783.9 763,784.1 764,784.6 764.8,785.4 765.5,767.7 766.7,799.5 767.7,786 768.5,784.5 769,784.5 771,783.9 773,785 775,784.2 777,784 779,783.9 781,784.7 783,784.4 785,784.7 787,784.7 789,784.9 791,785.1 793,784.7 795,784 797,784.4 799,784 801,783.7 803,784.4 805,784.7 806,784.4 806.7,785.2 807.5,768.5 808.7,798.7 809.6,785.9 810.5,784.4 811,783.9 813,784 815,784.1 817,784.6 819,784.4 821,784.5 823,784.7 825,784.2 827,784.7 829,784.9 831,783.7 833,784.9 835,784.6 837,783.8 839,784.2 841,784.4 843,784.8 845,784.1 847,784.3 847.3,784.2 848.1,785 848.8,771.8 850,798.9 851,785.7 851.8,784.2 853,784.7 855,784.6 857,784.8 859,784.1 861,784.4 863,783.8 865,784.5 867,784.6 869,784.4 871,784.5 873,783.7 875,784.7 877,784.8 879,784.8 881,784.2 883,784.5 885,783.9 887,784.7 889,784.6 889.6,784.1 890.4,784.9 891.1,771.5 892.3,798.3 893.3,785.6 894.1,784.1 895,783.9 897,783.5 899,784 901,784.1 903,784.4 905,784 907,783.4 909,784.5 911,783.4 913,784.5 915,783.6 917,783.8 919,784.4 921,783.5 923,783.5 925,784 927,784.3 929,784.5 930,784 930.7,784.8 931.5,771.5 932.7,797.3 933.6,785.5 934.5,784 935,784.3 937,784.6 939,784 941,784.6 943,783.4 945,783.6 947,784 949,783.7 951,784.3 953,784.2 955,784 957,784.5 959,784.1 961,783.8 963,784.2 965,785.5 967,786.5 969,786.5 970.8,788 971.6,788.8 972.3,773.2 973.5,805.9 974.5,792.2 975.3,790.7 977,792.1 979,793.2 981,793.3 983,793.9 985,793.6 987,794.1 989,794 991,794.1 993,793.3 995,794.7 997,794 999,793.9 1001,794.4 1003,794 1005,793.7 1007,793.8 1009,792.6 1010.9,792.9 1011.7,793.7 1012.4,779.9 1013.6,808.5 1014.6,793.4 1015.4,791.9 1017,791.5 1019,790.8 1021,791 1023,790.3 1025,788.8 1027,788.4 1029,787.3 1031,787.1 1033,787 1035,786.5 1037,785.2 1039,784.4 1041,783.7 1043,783.7 1045,783.6 1047,782 1049,782.5 1051,781.1 1052.6,781.5 1053.4,782.3 1054.1,769 1055.3,796.2 1056.3,782.6 1057.1,781.1 1059,780.6 1061,780.6 1063,781.3 1065,780.8 1067,780.8 1069,781.2 1071,780.4 1073,781.3 1075,780.5 1077,781 1079,780.7 1081,780.6 1083,781 1085,780.9 1087,780.8 1089,780.9 1091,781 1093,780.5 1094.4,781 1095.2,781.8 1095.9,767.9 1097.1,795.3 1098,782.5 1098.9,781 1099,780.6 1101,781.2 1103,781.2 1105,781 1107,781.5 1109,781.2 1111,781.5 1113,780.6 1115,781.3 1117,781.4 1119,781.6 1121,780.7 1123,780.7 1125,781.6 1127,780.6 1129,781.7 1131,781.5 1133,780.5 1135,780.6 1136.8,781 1137.6,781.8 1138.3,767.5 1139.5,798.4 1140.5,782.5 1141.3,781 1143,781.3 1145,780.7 1147,780.4 1149,781.5 1151,780.9 1153,781.4 1155,780.5 1157,780.9 1159,781.3 1161,780.3 1163,780.6 1165,781.3 1167,781.6 1169,781.7 1171,780.5 1173,781 1175,781.4 1177,781 1177.2,781 1178,781.8 1178.7,767.9 1179.9,796 1180.9,782.5 1181.7,781 1183,781.3 1185,780.6 1187,780.4 1189,780.5 1191,780.5 1193,781.2 1195,781.2 1197,781.4 1199,780.8 1201,781 1203,781.1 1205,782 1207,782.3 1209,782.3 1211,781.3 1213,781.3 1215,782.7 1217,782.1 1218.8,782.2 1219.6,783 1220.3,769.7 1221.5,800.4 1222.5,784 1223.3,782.5 1225,783 1227,782.5 1229,782.8 1231,783 1233,783 1235,783.3 1237,782.6 1239,783.7 1241,784 1243,783.2 1245,783.7 1247,784.3 1249,783.9 1251,783.8 1253,783.8 1255,784.4 1257,783.9 1258.4,784.6 1259.1,785.4 1259.9,771.5 1261.1,799.2 1262,786.4 1262.9,784.9 1263,785.4 1265,785.4 1267,785.4 1269,785.7 1271,785.4 1273,785.2 1275,785.6 1277,785.5 1279,786.3 1281,786.1 1283,785.4 1285,786.4 1287,786.2 1289,786.3 1291,786.4 1293,785.8 1295,786.5 1297,786.5 1299,786.3 1299.2,786 1300,786.8 1300.7,772.5 1301.9,799.4 1302.8,787.5 1303.7,786 1305,786.4 1307,786.5 1309,786 1311,786.5 1313,785.7 1315,786.2 1317,786.5 1319,786 1321,786.6 1323,787.1 1325,787.3 1327,786.9 1329,788 1331,787.8 1333,787.6 1335,788.2 1337,788.3 1339,788.4 1339.8,789.2 1340.5,775.9 1341.7,804.7 1342.7,790.3 1343.5,788.8 1345,789 1347,789 1349,790.1 1351,789.8 1353,790.1 1355,790.4 1357,790.9 1359,789.8 1361,790.8 1363,791.2 1365,790.7 1367,791.1 1369,790.8 1371,791.1 1373,791.6 1375,791.3 1377,791.7 1379,792.8 1379.8,792.3 1380.5,793.1 1381.3,778.4 1382.5,807.8 1383.4,794 1384.3,792.5 1385,792.6 1387,792.7 1389,793.4 1391,792.9 1393,793.6 1395,793.1 1397,793.4 1399,792.4 1401,793.1 1403,793.3 1405,792.1 1407,793.1 1409,791.8 1411,791.8 1413,791 1415,791 1417,790.7 1419,789.5 1421,790.2 1421.8,789.4 1422.6,790.2 1423.3,772.6 1424.5,803.6 1425.5,789.6 1426.3,788.1 1427,787.9 1429,787.5 1431,787 1433,786.2 1435,785.6 1437,785.7 1439,785.2 1441,784.5 1443,784.8 1445,784 1447,783.4 1449,783.7 1451,783.4 1453,783.9 1455,785.3 1457,785.6 1459,787.4 1460.7,787.8 1461.5,788.6 1462.2,774.9 1463.4,804.4 1464.4,792.1 1465.2,790.6 1467,792.1 1469,792.4 1471,794.9 1473,795.8 1475,795.4 1477,797.2 1479,796.9 1481,797 1483,797.6 1485,796.4 1487,796.6 1489,796.9 1491,796.3 1493,795.6 1495,795.8 1497,795.1 1499,794.3 1500.5,793.8 1501.3,794.6 1502,777.2 1503.2,809.6 1504.2,794 1505,792.5 1507,791.3 1509,791.4 1511,790.5 1513,789.5 1515,788.6 1517,788.6 1519,787.4 1521,787.2 1523,786.9 1525,786 1527,785.1 1529,785 1531,784.2 1533,784.2 1535,783.4 1537,783.6 1539,783.2 1541,782.5 1541.2,782.2 1542,783 1542.7,766.5 1543.9,799.4 1544.9,783.2 1545.7,781.7 1547,781.2 1549,781 1551,782 1553,781.9 1555,781.7 1557,781.3 1559,781.1 1561,781.7 1563,781.5 1565,781.5 1567,781.5 1569,781.6 1571,780.8 1573,780.8 1575,781.8 1577,781.6 1579,781.5 1581,780.3 1582.6,780.9 1583.3,781.7 1584.1,767.9 1585.3,798.6 1586.2,782.3 1587.1,780.8 1589,780.2 1591,780.4 1593,780.6 1595,780.9 1597,780.2 1599,780.8 1601,780.1 1603,780.1 1605,781 1607,780.8 1609,780.9 1611,780.6 1613,780.7 1615,780.4 1617,780.6 1619,781.2 1621,781.3 1623,780.3 1624.3,780.9 1625.1,781.7 1625.8,766.8 1627,794.5 1627.9,782.5 1628.8,781 1629,780.5 1631,781.5 1633,781.2 1635,781.5 1637,780.8 1639,781.1 1641,780.9 1643,781.7 1645,781.2 1647,781.6 1649,782.2 1651,781.3 1653,781.7 1655,782 1657,782.3 1659,781.7 1661,781.7 1663,781.3 1664.1,781.9 1664.8,782.7 1665.6,769.7 1666.8,799.9 1667.7,783.6 1668.6,782.1 1669,782.6 1671,781.6 1673,781.7 1675,782.4 1677,782.4 1679,782.7 1681,782.3 1683,783 1685,782.1 1687,782.4 1689,783.1 1691,782.3 1693,782.7 1695,783.4 1697,783.4 1699,782.9 1701,782.8 1703,783.2 1704.9,783.4 1705.6,784.2 1706.4,770.2 1707.6,800.7 1708.5,785.1 1709.4,783.6 1711,784 1713,783.6 1715,783.3 1717,784.2 1719,784.1 1721,784.6 1723,784.7 1725,784.8 1727,784.2 1729,784.8 1731,784.1 1733,784.2 1735,784.4 1737,785.2 1739,785.2 1741,784.4 1743,784.6 1745,784.7 1747,784.7 1747.1,784.9 1747.9,785.7 1748.6,769.9 1749.8,799.5 1750.8,786.5 1751.6,785 1753,784.9 1755,785 1757,784.8 1759,785.3 1761,785.7 1763,785.4 1765,785.9 1767,785.5 1769,785 1771,785.9 1773,786.1 1775,785.3 1777,784.9 1779,785.7 1781,785.7 1783,785.8 1785,786.4 1787,785.9 1788.5,785.8 1789.3,786.6 1790,773.4 1791.2,799.9 1792.2,787.3 1793,785.8 1795,786.2 1797,785.2 1799,785.9 1801,786.2 1803,785.2 1805,785.2 1807,786.1 1809,786.3 1811,785.1 1813,785.9 1815,785.1 1817,785.9 1819,785.7 1821,785.1 1823,785.1 1825,785.8 1827,785.4 1829,785.7 1830.7,785.3 1831.4,786.1 1832.2,770.5 1833.4,802.4 1834.3,786.7 1835.2,785.2 1837,785 1839,784.9 1841,785.7" fill="none" stroke="#27e527" stroke-width="1.3" stroke-linejoin="round" /><polyline points="507,812.8 509,813.3 511,812.6 513,813.1 515,812.9 517,812.3 519,813.7 521,813.4 523,812.6 525,813.2 527,812.7 529,812.8 531,813 533,812.7 535,812.8 537,812.8 539,813.2 541,812.6 543,812.6 543.5,813 544.3,813.8 545,797.7 546.2,829.9 547.2,814.5 548,813 549,813.3 551,812.7 553,813.6 555,813.1 557,813.3 559,812.7 561,813.4 563,812.4 565,812.5 567,812.4 569,813.2 571,813.3 573,812.5 575,812.8 577,813.4 579,813.1 581,812.4 583,812.6 583.7,813 584.4,813.8 585.2,800.1 586.4,826.3 587.3,814.5 588.2,813 589,812.5 591,812.4 593,812.8 595,812.4 597,813.5 599,812.8 601,813 603,813.2 605,813.4 607,813.4 609,812.9 611,812.8 613,813 615,812.5 617,813 619,813.5 621,813.9 623,813.7 623.1,813.3 623.9,814.1 624.6,796.8 625.8,826.6 626.7,815 627.6,813.5 629,813.7 631,813.7 633,812.9 635,813.4 637,813.5 639,814 641,813.3 643,813.8 645,814 647,814.5 649,814.6 651,814.4 653,813.8 655,814.7 657,814.9 659,814.5 661,814.3 663,814.5 664.1,814.6 664.9,815.4 665.6,802 666.8,828.6 667.8,816.1 668.6,814.6 669,814.1 671,815 673,815.4 675,814.8 677,815.1 679,815.2 681,814.3 683,815.4 685,815 687,814.4 689,814.2 691,814.4 693,814.9 695,815.1 697,814.6 699,815.5 701,814.7 703,814.9 705,815 705.8,815.8 706.5,799.4 707.7,831.1 708.6,816.6 709.5,815.1 711,814.6 713,815.8 715,814.7 717,815.8 719,815.3 721,815.4 723,815.5 725,815.1 727,816 729,816.2 731,816 733,815.8 735,815.1 737,816.2 739,815.5 741,816.4 743,815.5 745,816 746.4,815.9 747.2,816.7 747.9,802.8 749.1,829.9 750.1,817.5 750.9,816 751,816.5 753,815.6 755,816.2 757,815.5 759,815.5 761,815.7 763,816.9 765,816.9 767,816.5 769,816 771,816.5 773,816.6 775,816.1 777,816.4 779,816.7 781,815.6 783,815.9 785,816.3 787,816.3 787.8,817.1 788.5,800.5 789.7,830.8 790.6,817.8 791.5,816.3 793,815.7 795,816.1 797,816.3 799,815.7 801,816.2 803,815.8 805,816.2 807,815.8 809,816.2 811,815.4 813,816.2 815,815.5 817,816.6 819,816 821,815.8 823,815.7 825,816 827,816.1 828.3,815.8 829.1,816.6 829.8,801 831,832.8 831.9,817.2 832.8,815.7 833,816.1 835,816.1 837,815.7 839,816.4 841,816.1 843,816.1 845,815.5 847,815.5 849,815.7 851,816.2 853,815.6 855,815.6 857,815.5 859,816.2 861,815.4 863,815 865,815.9 867,816.2 868.2,815.6 869,816.4 869.7,799.2 870.9,833.2 871.9,817.1 872.7,815.6 873,816 875,815.8 877,816 879,815.4 881,815.8 883,815.1 885,815.1 887,815.6 889,815.7 891,815.6 893,815.1 895,816 897,815.8 899,815.4 901,815.5 903,815.6 905,815.4 907,815.1 909,816.3 909,815.8 909.8,816.6 910.5,802 911.7,831.5 912.7,817.3 913.5,815.8 915,816.4 917,816 919,816.3 921,815.7 923,816.2 925,815.4 927,816.2 929,815.9 931,816.4 933,815.3 935,816.2 937,815.3 939,815.9 941,816.5 943,815.1 945,815.5 947,815.5 949,815.6 950.8,815.8 951.6,816.6 952.3,802.7 953.5,829.1 954.5,817.3 955.3,815.8 957,815.2 959,816.4 961,816.3 963,815.7 965,815.6 967,815.9 969,815.2 971,815.1 973,816.4 975,815.5 977,815.8 979,816.4 981,816.5 983,815.7 985,815.4 987,815.5 989,816.4 991,816.3 991.2,815.8 992,816.6 992.7,799 993.9,832.8 994.9,817.3 995.7,815.8 997,815.3 999,816.2 1001,815.5 1003,815.7 1005,815.3 1007,816.3 1009,816.4 1011,815.3 1013,815.9 1015,815.3 1017,816.2 1019,815.1 1021,815.1 1023,816 1025,815.4 1027,816.2 1029,816.2 1031,815.7 1031.8,816.5 1032.5,801.1 1033.7,830.1 1034.6,817.2 1035.5,815.7 1037,816 1039,815.2 1041,815.9 1043,816.3 1045,815.6 1047,815.1 1049,815.3 1051,815.4 1053,816 1055,815.3 1057,815.2 1059,815.3 1061,815.9 1063,816.1 1065,815.5 1067,816 1069,816.3 1071,815.9 1072.5,815.8 1073.3,816.6 1074,798.8 1075.2,832.1 1076.2,817.3 1077,815.8 1077,815.4 1079,815.6 1081,816.5 1083,816.1 1085,815.6 1087,816.1 1089,815.4 1091,816.7 1093,815.9 1095,816.1 1097,816.1 1099,815.5 1101,816.3 1103,815.8 1105,815.8 1107,816.6 1109,815.6 1111,816 1113,816.6 1113.2,816.3 1114,817.1 1114.7,801.9 1115.9,831.2 1116.9,817.8 1117.7,816.3 1119,816 1121,816.1 1123,816.5 1125,816 1127,817 1129,817.2 1131,815.8 1133,816.5 1135,816.9 1137,816.4 1139,817.2 1141,816.6 1143,816.2 1145,816.7 1147,816.8 1149,816.4 1151,816.9 1153,817 1154.1,816.7 1154.8,817.5 1155.6,800.7 1156.8,833.2 1157.7,818.2 1158.6,816.7 1159,816.7 1161,816.7 1163,817.1 1165,816.9 1167,816.6 1169,817.2 1171,816.1 1173,816.9 1175,815.9 1177,816.5 1179,815.9 1181,816.1 1183,816.5 1185,816.4 1187,816.3 1189,815.5 1191,815.7 1193,815.2 1194.3,815.6 1195.1,816.4 1195.8,802.8 1197,829.9 1198,816.8 1198.8,815.3 1199,815.4 1201,815.2 1203,814.4 1205,815.1 1207,815.2 1209,814.8 1211,815.2 1213,814.1 1215,813.9 1217,813.6 1219,814.2 1221,814 1223,813.9 1225,813.6 1227,814.2 1229,813.1 1231,814.2 1233,813.7 1234.6,813.5 1235.4,814.3 1236.1,800.2 1237.3,830.7 1238.3,814.9 1239.1,813.4 1241,813.4 1243,813.7 1245,812.9 1247,812.7 1249,812.9 1251,812.6 1253,812.9 1255,813.4 1257,813.2 1259,812.9 1261,813.4 1263,812.7 1265,813.8 1267,812.9 1269,813 1271,813 1273,813.7 1273.9,813.5 1274.7,814.3 1275.4,796.5 1276.6,827.9 1277.6,815.1 1278.4,813.6 1279,814.1 1281,814.1 1283,813.1 1285,813.7 1287,813.7 1289,813.5 1291,814.7 1293,813.4 1295,814.1 1297,814.6 1299,815 1301,813.8 1303,814.4 1305,814.8 1307,813.9 1309,814.3 1311,815.2 1313,814.2 1314.5,814.8 1315.3,815.6 1316,800.1 1317.2,828.7 1318.1,816.4 1319,814.9 1319,814.8 1321,814.7 1323,814.9 1325,814.5 1327,814.5 1329,815.9 1331,815.6 1333,815.6 1335,814.9 1337,815 1339,815.4 1341,815 1343,815.3 1345,816 1347,815.2 1349,815.2 1351,816.1 1353,815.5 1355,814.7 1355.2,815.3 1356,816.1 1356.7,799.2 1357.9,832.5 1358.8,816.7 1359.7,815.2 1361,815 1363,815.3 1365,814.4 1367,814.7 1369,815.1 1371,815.2 1373,814.7 1375,815 1377,814.3 1379,814.1 1381,814.6 1383,813.9 1385,814.3 1387,813.4 1389,813.4 1391,813.1 1393,813.5 1395,812.8 1395.8,813.2 1396.6,814 1397.3,797.1 1398.5,826.4 1399.5,814.5 1400.3,813 1401,812.5 1403,812.5 1405,812.7 1407,812.4 1409,812.5 1411,813.2 1413,812.7 1415,812.9 1417,812 1419,812.2 1421,811.8 1423,812.6 1425,812.2 1427,812.1 1429,811.8 1431,812.1 1433,812.3 1435,812.6 1436.3,812.8 1437.1,813.6 1437.8,800.4 1439,828.5 1440,814.6 1440.8,813.1 1441,813.7 1443,813.6 1445,813.1 1447,813.4 1449,813.3 1451,814.5 1453,813.8 1455,814.5 1457,814.6 1459,815 1461,813.9 1463,814.4 1465,814.6 1467,814.2 1469,815.4 1471,814.7 1473,815.3 1475,815 1477,814.3 1478.6,814.9 1479.4,815.7 1480.1,800.6 1481.3,832.7 1482.3,816.4 1483.1,814.9 1485,814.7 1487,814.5 1489,814.2 1491,814.3 1493,814.9 1495,814 1497,814.4 1499,814.5 1501,814.6 1503,814 1505,814.7 1507,814 1509,814.6 1511,814.5 1513,813.7 1515,813.7 1517,813.7 1517.6,814 1518.4,814.8 1519.1,800.5 1520.3,830.8 1521.3,815.4 1522.1,813.9 1523,814.1 1525,813.6 1527,813.5 1529,814.1 1531,813.2 1533,813.2 1535,813.2 1537,812.9 1539,812.6 1541,812.5 1543,813.3 1545,813.1 1547,813.4 1549,813.6 1551,812.6 1553,813 1555,813.3 1557,812.2 1557.3,812.6 1558.1,813.4 1558.8,798.5 1560,830.1 1561,814 1561.8,812.5 1563,812.7 1565,812.6 1567,813 1569,812.8 1571,811.9 1573,812.4 1575,811.6 1577,812 1579,812 1581,811.5 1583,811.9 1585,811.8 1587,812 1589,811.7 1591,811.5 1593,811.9 1595,812 1597,811.5 1599,812.2 1599.6,811.9 1600.4,812.7 1601.1,798.9 1602.3,827.6 1603.2,813.3 1604.1,811.8 1605,811.5 1607,811.2 1609,811.5 1611,811.5 1613,811.1 1615,811.6 1617,811.7 1619,811.4 1621,811.5 1623,810.5 1625,811 1627,810.9 1629,810.4 1631,810.8 1633,810.2 1635,810.8 1637,810.9 1639,810.7 1641,810.4 1641.3,810.7 1642.1,811.5 1642.8,796 1644,824.4 1644.9,812.1 1645.8,810.6 1647,810.3 1649,810 1651,810.4 1653,811.2 1655,810.8 1657,810.3 1659,810.9 1661,810.3 1663,810.7 1665,810.9 1667,811.4 1669,810.6 1671,810.9 1673,811.5 1675,811.2 1677,811.1 1679,811.1 1681,810.8 1682.4,811 1683.2,811.8 1683.9,797.4 1685.1,824.4 1686.1,812.5 1686.9,811 1687,810.9 1689,810.8 1691,811.6 1693,811.7 1695,811 1697,811.7 1699,810.5 1701,810.7 1703,811.2 1705,811 1707,811.1 1709,812 1711,810.8 1713,810.9 1715,810.9 1717,811.6 1719,811 1721,810.6 1722.4,811.3 1723.1,812.1 1723.9,797.8 1725.1,826.7 1726,812.8 1726.9,811.3 1727,811.4 1729,811.2 1731,810.9 1733,811.3 1735,811.5 1737,811.3 1739,811.4 1741,811.3 1743,811.6 1745,811.8 1747,810.9 1749,810.8 1751,811.6 1753,810.7 1755,811.2 1757,811.2 1759,811.1 1761,811.5 1762.9,810.8 1763.6,811.6 1764.4,795.3 1765.6,824.2 1766.5,812.2 1767.4,810.7 1769,811.1 1771,810.1 1773,810.7 1775,810.5 1777,810.5 1779,810.2 1781,810.1 1783,810.7 1785,810.3 1787,809.9 1789,809.8 1791,809.9 1793,809.6 1795,810.1 1797,809.5 1799,809.3 1801,809.3 1802.6,809.9 1803.4,810.7 1804.1,795.9 1805.3,825.1 1806.3,811.3 1807.1,809.8 1809,809.2 1811,810 1813,809.1 1815,809.6 1817,810 1819,809.6 1821,809.1 1823,810.1 1825,810.1 1827,808.9 1829,809.2 1831,809.5 1833,809.9 1835,809.3 1837,809.8 1839,809.1 1841,809.8" fill="none" stroke="#27e527" stroke-width="1.3" stroke-linejoin="round" /><polyline points="507,840.7 508.2,841 509,841.8 509.7,828.4 510.9,855.6 511.9,842.5 512.7,841 513,840.4 515,840.7 517,841.2 519,840.4 521,841.1 523,840.8 525,841 527,840.2 529,840.1 531,840 533,840.3 535,840.3 537,839.7 539,840.3 541,840.1 543,839.9 545,840.2 547,840.7 549,839.6 550.1,840 550.9,840.8 551.6,825.6 552.8,854.7 553.8,841.4 554.6,839.9 555,840.4 557,839.6 559,840.1 561,839.2 563,840.4 565,839.6 567,840.3 569,839.3 571,839.5 573,840 575,839.2 577,839.4 579,840 581,840.4 583,839.6 585,839.4 587,839.7 589,840.7 591,839.6 591,840.1 591.8,840.9 592.5,826.5 593.7,857.3 594.7,841.8 595.5,840.3 597,840.5 599,840.3 601,840.7 603,840.2 605,840.9 607,841.4 609,841.5 611,841.3 613,841.2 615,841.4 617,840.9 619,842 621,841.9 623,841.7 625,842.1 627,841.9 629,842 631,841.9 632.2,842.3 633,843.1 633.7,828.4 634.9,858.7 635.8,844.1 636.7,842.6 637,842.8 639,842.8 641,842.8 643,842.3 645,843.2 647,843 649,843.3 651,843.4 653,844 655,842.9 657,843.5 659,844.2 661,843.9 663,843.4 665,844 667,844.4 669,843.6 671,844.3 672.2,843.7 673,844.5 673.7,827.9 674.9,861.6 675.8,845.2 676.7,843.7 677,843.2 679,844.4 681,843.7 683,843.3 685,844.1 687,843.8 689,844.2 691,844 693,843.9 695,843.5 697,844.1 699,842.8 701,843.9 703,843.6 705,842.9 707,843.6 709,843.1 711,843.1 711.7,843 712.5,843.8 713.2,828.3 714.4,859.9 715.4,844.4 716.2,842.9 717,843.4 719,842.4 721,842.5 723,842.9 725,842 727,842.7 729,842.9 731,842.4 733,842 735,842.8 737,842.8 739,842.6 741,842.2 743,842.7 745,842.5 747,841.5 749,841.8 751,841.3 753,841.2 753.4,841.8 754.2,842.6 754.9,829.1 756.1,855.6 757,843.2 757.9,841.7 759,841.5 761,842.2 763,842.1 765,841.1 767,841.2 769,841.4 771,842.1 773,841.7 775,842.1 777,840.9 779,842.2 781,841.1 783,841.7 785,842.1 787,841.9 789,841.2 791,841.9 793,841.6 795,841 795.9,841.7 796.7,842.5 797.4,828.4 798.6,857.2 799.6,843.3 800.4,841.8 801,841.6 803,841.6 805,842.1 807,841.6 809,842.1 811,842.3 813,841.6 815,841.6 817,842.4 819,842.1 821,841.7 823,841.7 825,842.9 827,842.5 829,842.2 831,842 833,843.2 835,842.8 837,842.9 838.1,842.6 838.8,843.4 839.6,830 840.8,857.2 841.7,844.1 842.6,842.6 843,842.4 845,842.4 847,842.5 849,842.2 851,842.8 853,842.6 855,843.1 857,842.5 859,842.6 861,842.7 863,843.3 865,842.5 867,843 869,842.4 871,842.9 873,842.5 875,843.3 877,842.5 879,843.4 880,842.9 880.8,843.7 881.5,830.2 882.7,859.1 883.7,844.5 884.5,843 885,843.2 887,842.9 889,843.6 891,842.9 893,843.4 895,843.3 897,843.1 899,842.6 901,843.1 903,842.9 905,843.2 907,844 909,843.1 911,843.7 913,843.7 915,843.1 917,843.3 919,843 920.9,843.5 921.7,844.3 922.4,830.1 923.6,857.7 924.6,845.1 925.4,843.6 927,844.1 929,843.2 931,843.5 933,843.4 935,844.1 937,844.1 939,843.8 941,843.7 943,843.1 945,844.2 947,843 949,843.4 951,843.3 953,843.8 955,843.6 957,843.1 959,843.8 960.6,843.2 961.4,844 962.1,829.9 963.3,856.2 964.3,844.4 965.1,842.9 967,843.4 969,842 971,842.7 973,842.4 975,842.1 977,842.1 979,841.7 981,842.1 983,841.8 985,842.2 987,842 989,841.9 991,840.9 993,841.3 995,840.9 997,840.8 999,841.1 1001,839.6 1001.5,840.2 1002.2,841 1003,827.9 1004.2,857.3 1005.1,841.3 1006,839.8 1007,839.7 1009,839.5 1011,839.7 1013,838.9 1015,839.9 1017,838.6 1019,838.7 1021,838.3 1023,838.5 1025,838.9 1027,837.9 1029,837.9 1031,838.5 1033,838.4 1035,838.5 1037,837.8 1039,838.5 1041,838.4 1042,838 1042.8,838.8 1043.5,825.1 1044.7,853.4 1045.7,839.5 1046.5,838 1047,838.4 1049,837.5 1051,838 1053,837.5 1055,838.7 1057,838.9 1059,839 1061,837.9 1063,838.5 1065,838.9 1067,839 1069,838.6 1071,839.7 1073,839.2 1075,839.7 1077,839.3 1079,840.1 1081,839.7 1083,839.8 1083.1,840.4 1083.9,841.2 1084.6,823.4 1085.8,854.8 1086.7,842.3 1087.6,840.8 1089,840.9 1091,840.8 1093,841.7 1095,841.1 1097,841.5 1099,841.1 1101,841.5 1103,841.9 1105,842.2 1107,842.1 1109,842.7 1111,841.7 1113,842.8 1115,841.9 1117,843 1119,842.4 1121,842.1 1123,842.4 1124.6,842.1 1125.3,842.9 1126.1,828.1 1127.3,858.9 1128.2,843.4 1129.1,841.9 1131,842.2 1133,842.2 1135,841.3 1137,840.5 1139,840.5 1141,841.3 1143,841 1145,840.7 1147,839.8 1149,840.1 1151,839.2 1153,839.1 1155,839.2 1157,840 1159,839.3 1161,839.5 1163,838.2 1164.4,838.8 1165.2,839.6 1165.9,824.8 1167.1,851.9 1168.1,840.1 1168.9,838.6 1169,838.5 1171,837.9 1173,838.1 1175,837.9 1177,839.1 1179,838.3 1181,838.7 1183,839.1 1185,839.5 1187,839.8 1189,839.5 1191,839.6 1193,840.4 1195,839.9 1197,840 1199,840.9 1201,840.4 1203,840.8 1203.7,841 1204.5,841.8 1205.2,825.9 1206.4,855.8 1207.4,842.9 1208.2,841.4 1209,841.4 1211,841.5 1213,841.5 1215,841.6 1217,841.6 1219,841.1 1221,842.2 1223,841.1 1225,841.8 1227,841.8 1229,841.7 1231,841.4 1233,841.3 1235,841.7 1237,841.7 1239,842 1241,841.7 1243,842.5 1244,842.2 1244.7,843 1245.5,825.5 1246.7,859.6 1247.6,843.8 1248.5,842.3 1249,842.3 1251,841.7 1253,842.3 1255,843.2 1257,841.9 1259,842.8 1261,843.4 1263,842.6 1265,843 1267,842.8 1269,842.8 1271,843.3 1273,843.3 1275,843 1277,843.4 1279,843.5 1281,843.9 1283,843 1285,843.1 1285.7,843.7 1286.5,844.5 1287.2,827.6 1288.4,860.5 1289.4,845.4 1290.2,843.9 1291,843.6 1293,843.7 1295,844.5 1297,844 1299,844.7 1301,844.1 1303,844 1305,844.6 1307,843.8 1309,845.2 1311,845 1313,844.3 1315,844.4 1317,845.1 1319,845.1 1321,844.9 1323,844.1 1325,845.1 1326.4,844.8 1327.2,845.6 1327.9,831.9 1329.1,857.9 1330.1,846.3 1330.9,844.8 1331,844.1 1333,844.9 1335,844.8 1337,845.3 1339,844.8 1341,843.9 1343,845 1345,844.7 1347,844.3 1349,843.4 1351,844.3 1353,843.7 1355,844 1357,844.3 1359,844 1361,842.7 1363,843.6 1365,843 1367,843.3 1367.3,842.9 1368.1,843.7 1368.8,830.6 1370,857.5 1371,844.2 1371.8,842.7 1373,842.5 1375,842.5 1377,842.5 1379,842 1381,842.2 1383,842.8 1385,841.9 1387,842 1389,843 1391,842.7 1393,842.5 1395,841.9 1397,841.9 1399,842.2 1401,843.1 1403,842.5 1405,843 1407,842 1408.5,842.4 1409.3,843.2 1410,826.6 1411.2,856.9 1412.1,843.8 1413,842.3 1413,842.2 1415,842.4 1417,842.8 1419,841.7 1421,842.8 1423,842.2 1425,841.6 1427,842.1 1429,842 1431,842.4 1433,842.7 1435,842.1 1437,842.4 1439,841.9 1441,842.5 1443,841.5 1445,842.4 1447,841.6 1449,842.2 1449,842.1 1449.8,842.9 1450.5,829 1451.7,859.8 1452.7,843.6 1453.5,842.1 1455,841.6 1457,841.8 1459,841.6 1461,841.9 1463,842.3 1465,842.2 1467,842.1 1469,842.4 1471,842.8 1473,842.2 1475,842.6 1477,842.6 1479,843.4 1481,842.5 1483,843.1 1485,842.6 1487,842.7 1489,843.5 1489.7,843.2 1490.5,844 1491.2,831.1 1492.4,859.1 1493.4,844.9 1494.2,843.4 1495,843.6 1497,843.2 1499,843.1 1501,844.2 1503,843.7 1505,844.2 1507,843.9 1509,844.3 1511,844.3 1513,844.9 1515,844.9 1517,844.3 1519,844.4 1521,844 1523,844.8 1525,843.9 1527,844.2 1529,844.9 1531,843.8 1531.1,844.4 1531.9,845.2 1532.6,828.8 1533.8,859.4 1534.7,845.9 1535.6,844.4 1537,844.6 1539,844.4 1541,844.3 1543,843.9 1545,843.5 1547,844.6 1549,844.2 1551,844.1 1553,843 1555,843.9 1557,842.9 1559,842.8 1561,843.1 1563,843.1 1565,842.2 1567,843 1569,842.5 1570.1,842.3 1570.9,843.1 1571.6,826.3 1572.8,859.1 1573.8,843.5 1574.6,842 1575,842.5 1577,842.3 1579,841.8 1581,841.2 1583,841.9 1585,841.4 1587,840.6 1589,841.2 1591,840.8 1593,840 1595,839.8 1597,839.3 1599,839.9 1601,839.3 1603,839.2 1605,839 1607,838.6 1609,839 1611,838.5 1611.2,838.8 1611.9,839.6 1612.7,826.3 1613.9,856.3 1614.8,840 1615.7,838.5 1617,838.1 1619,838 1621,838.2 1623,838.6 1625,837.5 1627,838.4 1629,838.3 1631,837.8 1633,837.7 1635,837.9 1637,837.5 1639,837.7 1641,838 1643,837.8 1645,837.1 1647,836.8 1649,837.4 1649.7,838.2 1650.5,823.4 1651.7,853.9 1652.6,838.9 1653.5,837.4 1655,838 1657,837.2 1659,837.8 1661,837.1 1663,837.4 1665,837.3 1667,837.8 1669,838.1 1671,837.5 1673,837.6 1675,837.3 1677,837.1 1679,838.2 1681,837 1683,838.2 1685,837.8 1687,837 1689,838.2 1689.6,837.6 1690.4,838.4 1691.1,825.5 1692.3,853.6 1693.3,839.2 1694.1,837.7 1695,837.1 1697,837.8 1699,837.2 1701,838.4 1703,837.5 1705,838.3 1707,837.2 1709,838 1711,837.2 1713,837.2 1715,837.9 1717,838.5 1719,838.1 1721,838.4 1723,838.3 1725,837.9 1727,837.3 1729,838 1731,837.5 1732.5,837.9 1733.3,838.7 1734,824.8 1735.2,852.9 1736.2,839.4 1737,837.9 1739,838 1741,837.7 1743,837.9 1745,837.5 1747,838.3 1749,837.9 1751,838 1753,837.5 1755,838.2 1757,838.4 1759,839 1761,838.5 1763,838 1765,838.4 1767,838.5 1769,839.1 1771,839.5 1772.2,839 1773,839.8 1773.7,822.9 1774.9,853.9 1775.9,840.6 1776.7,839.1 1777,839.8 1779,839.8 1781,839.8 1783,839.8 1785,839.9 1787,838.6 1789,839.3 1791,839.4 1793,839.5 1795,839.4 1797,839.4 1799,839.9 1801,838.7 1803,839.3 1805,839.9 1807,838.6 1809,838.7 1811,839.8 1813,839.9 1814,839.3 1814.8,840.1 1815.5,824.1 1816.7,854.1 1817.7,840.8 1818.5,839.3 1819,838.6 1821,838.6 1823,839.7 1825,839.6 1827,839.3 1829,839.4 1831,839.6 1833,839.7 1835,838.6 1837,838.7 1839,839.7 1841,840" fill="none" stroke="#27e527" stroke-width="1.3" stroke-linejoin="round" /><polyline points="507,869 509,869.2 511,868.7 513,868.8 515,869.5 517,869.1 519,868.8 521,869 523,868.9 525,868.7 527,869.5 529,868.5 531,869.5 533,869.4 535,869.4 537,868.4 539,868.8 541,869.5 543,868.5 543.5,868.8 544.3,869.6 545,854.9 546.2,883.5 547.2,870.2 548,868.7 549,868.3 551,869 553,868.3 555,868.8 557,868.2 559,869.3 561,868.3 563,868 565,868.8 567,868.3 569,868.6 571,868.5 573,869.1 575,868.5 577,868.3 579,867.7 581,868.4 583,868.1 585,868.5 586.3,868.4 587.1,869.2 587.8,851.8 589,886.3 590,869.8 590.8,868.3 591,868.5 593,868.3 595,867.7 597,868.3 599,868.3 601,868.5 603,868.9 605,868 607,868.2 609,867.7 611,868.7 613,867.9 615,868.7 617,868.7 619,867.9 621,868.8 623,868.2 625,868.1 626.6,868.2 627.4,869 628.1,852.3 629.3,885.1 630.3,869.7 631.1,868.2 633,868.2 635,868.7 637,868.1 639,868.1 641,867.8 643,868.5 645,868 647,867.8 649,867.6 651,867.6 653,868.4 655,868.3 657,868.6 659,868.5 661,868.1 663,868.3 665,868.1 667,868.2 667.7,867.8 668.5,868.6 669.2,854.1 670.4,884.7 671.3,869.3 672.2,867.8 673,868.2 675,867.3 677,868.2 679,867.5 681,867.5 683,868.5 685,867.3 687,868.2 689,868.1 691,868.9 693,868.9 695,869.5 697,869.8 699,869.7 701,869.1 703,870.2 705,869.6 707,871.1 707.8,870.5 708.6,871.3 709.3,855.5 710.5,887.6 711.4,872.4 712.3,870.9 713,871.4 715,870.8 717,870.7 719,871.4 721,871.5 723,871.8 725,871.3 727,870.6 729,871.4 731,870.4 733,871.5 735,871.3 737,871.3 739,871.3 741,870.8 743,871.3 745,870.8 747,870.5 749,870.3 749,870.5 749.8,871.3 750.5,856.1 751.7,887.4 752.7,871.8 753.5,870.3 755,870 757,869.5 759,869.6 761,870.5 763,869.6 765,870.1 767,870.3 769,870.1 771,869.8 773,869.5 775,869.4 777,869.3 779,869.9 781,869.9 783,870.3 785,869.4 787,870.2 789,870.2 790.9,869.6 791.7,870.4 792.4,855.7 793.6,882.8 794.6,871 795.4,869.5 797,869.2 799,870.1 801,869.5 803,870 805,869.6 807,869 809,868.8 811,869.1 813,869 815,868.3 817,869.4 819,868.8 821,868.7 823,869 825,868.2 827,868.1 829,868.5 831,868 831.7,868.3 832.5,869.1 833.2,851.8 834.4,881.9 835.4,869.7 836.2,868.2 837,867.9 839,867.5 841,867.4 843,867.8 845,868 847,868.5 849,868 851,867.7 853,867.6 855,867.4 857,867.7 859,868.3 861,867.2 863,867.6 865,867.9 867,868.1 869,867.8 871,867.9 873,867.7 873.8,868.5 874.5,850.9 875.7,885.4 876.6,869.2 877.5,867.7 879,868.4 881,868.3 883,867.4 885,867.9 887,868.5 889,867.9 891,867.5 893,868.3 895,867.3 897,867.5 899,868.1 901,867.7 903,868.4 905,868.4 907,867.9 909,868.5 911,868.4 913,868.5 915,868.2 915.7,868.3 916.4,869.1 917.2,854.5 918.4,886 919.3,869.8 920.2,868.3 921,868.2 923,867.8 925,868.4 927,869 929,869 931,867.8 933,867.9 935,868.2 937,868.8 939,868.5 941,868 943,868.5 945,868.7 947,869 949,868.5 951,868.8 953,868.9 955,868.8 957,868 957.3,868.6 958.1,869.4 958.8,851.9 960,882.7 961,870.2 961.8,868.7 963,869 965,868.3 967,868.3 969,869 971,868.5 973,868.7 975,869.3 977,869.5 979,869.2 981,870.5 983,870.6 985,870.2 987,870.5 989,870.3 991,871.4 993,870.4 995,870.8 997,870.9 999,871.9 999.3,871.4 1000.1,872.2 1000.8,858.7 1002,888.1 1002.9,873.2 1003.8,871.7 1005,871.8 1007,871.7 1009,871.8 1011,872.5 1013,871.7 1015,872.5 1017,872.3 1019,871.9 1021,871.7 1023,871.7 1025,871.5 1027,871.1 1029,871.3 1031,870.8 1033,870.3 1035,870.7 1037,870 1039,869.7 1041,869.9 1041.2,869.4 1042,870.2 1042.7,852.6 1043.9,883.9 1044.8,870.1 1045.7,868.6 1047,868.3 1049,867.9 1051,868.4 1053,868.2 1055,867.6 1057,866.9 1059,867 1061,866.9 1063,866.2 1065,866.6 1067,866.9 1069,866.4 1071,866.4 1073,866.1 1075,866.5 1077,865.9 1079,866.8 1080.8,866.4 1081.6,867.2 1082.3,852.6 1083.5,880.2 1084.4,868.1 1085.3,866.6 1087,866.8 1089,867.5 1091,866.7 1093,867.4 1095,866.5 1097,867.2 1099,867.8 1101,867.3 1103,867.9 1105,867.5 1107,867.8 1109,868.8 1111,867.8 1113,868.9 1115,867.8 1117,868.6 1119,869.1 1121,869.2 1121.1,868.7 1121.9,869.5 1122.6,856.3 1123.8,882.7 1124.8,870.3 1125.6,868.8 1127,868.7 1129,869 1131,869.1 1133,869.2 1135,869.2 1137,868.9 1139,868.5 1141,869.1 1143,868.9 1145,868.8 1147,869.4 1149,868.2 1151,869.1 1153,868.4 1155,869 1157,869.3 1159,868.3 1161,868.7 1163,868.6 1164.2,868.5 1165,869.3 1165.7,854.8 1166.9,881.7 1167.8,870 1168.7,868.5 1169,868.4 1171,868 1173,868.6 1175,868.9 1177,868.5 1179,868 1181,868.7 1183,868.1 1185,867.7 1187,868.3 1189,868.1 1191,868.1 1193,868.7 1195,868.1 1197,868.6 1199,867.7 1201,868.3 1203,867.3 1204.7,867.9 1205.4,868.7 1206.2,855.3 1207.4,883.5 1208.3,869.3 1209.2,867.8 1211,867.5 1213,868 1215,868 1217,868.2 1219,867.6 1221,867.4 1223,867.5 1225,867.7 1227,867 1229,867.5 1231,867.9 1233,867.2 1235,867.4 1237,868.2 1239,868.4 1241,867.5 1243,867.4 1245,867.4 1246,868 1246.7,868.8 1247.5,853.3 1248.7,884.1 1249.6,869.7 1250.5,868.2 1251,867.7 1253,868.8 1255,868.8 1257,868.3 1259,868.7 1261,869.2 1263,868.3 1265,869.6 1267,869.8 1269,869 1271,869.8 1273,869.9 1275,869.5 1277,870.4 1279,869.5 1281,870 1283,869.8 1285,870.1 1286.8,870.2 1287.5,871 1288.3,853.4 1289.5,883.6 1290.4,871.7 1291.3,870.2 1293,870.7 1295,870.3 1297,870.4 1299,870.9 1301,869.8 1303,869.7 1305,870.3 1307,869.6 1309,870.7 1311,869.8 1313,869.9 1315,869.8 1317,870.3 1319,870.4 1321,870 1323,869.2 1325,869.4 1326.2,869.6 1327,870.4 1327.7,856.5 1328.9,882.9 1329.9,871 1330.7,869.5 1331,869.8 1333,869 1335,869.9 1337,869.9 1339,868.9 1341,869.1 1343,868.9 1345,869.5 1347,868.6 1349,869.5 1351,868.6 1353,869.7 1355,869.3 1357,869.3 1359,868.7 1361,868.7 1363,869.2 1365,870.2 1366.3,869.6 1367.1,870.4 1367.8,852.9 1369,885.3 1370,871.3 1370.8,869.8 1371,870 1373,870.5 1375,869.5 1377,869.7 1379,869.7 1381,870.8 1383,870.2 1385,870.4 1387,871.1 1389,871.3 1391,870.9 1393,871.3 1395,871.1 1397,871.6 1399,871.4 1401,871.5 1403,871.5 1405,871.6 1407,871.6 1408.6,872 1409.4,872.8 1410.1,859.2 1411.3,886.7 1412.3,873.5 1413.1,872 1415,871.3 1417,871.7 1419,872 1421,871.4 1423,871 1425,871.8 1427,871.1 1429,870.9 1431,870.4 1433,871 1435,870.5 1437,870.1 1439,869.8 1441,869.6 1443,869 1445,868.6 1447,868.3 1448.5,868.3 1449.3,869.1 1450,852.3 1451.2,885.6 1452.2,869.3 1453,867.8 1455,867.6 1457,867.3 1459,867.2 1461,867.1 1463,867.4 1465,867.4 1467,866.5 1469,866.2 1471,866.6 1473,866.2 1475,867.3 1477,867.1 1479,866.6 1481,866.5 1483,867.5 1485,867.5 1487,867.3 1488.9,867.1 1489.7,867.9 1490.4,852.8 1491.6,883.2 1492.5,868.6 1493.4,867.1 1495,867.4 1497,867.5 1499,867.2 1501,867.1 1503,867.4 1505,867.9 1507,868.1 1509,868 1511,867.9 1513,866.9 1515,867.2 1517,868.2 1519,867.6 1521,867.6 1523,867.3 1525,868.1 1527,867.6 1529,868.3 1530.2,867.6 1531,868.4 1531.7,854.7 1532.9,885.4 1533.9,869.1 1534.7,867.6 1535,867.1 1537,868.4 1539,867 1541,867.2 1543,867.6 1545,868 1547,867.3 1549,868 1551,868.5 1553,867.9 1555,868.4 1557,868.2 1559,868.3 1561,867.8 1563,868.2 1565,868.9 1567,868.7 1569,868.1 1570,868.6 1570.8,869.4 1571.5,851.7 1572.7,881.9 1573.7,870.3 1574.5,868.8 1575,868.7 1577,868.9 1579,868.7 1581,869.1 1583,869.3 1585,868.5 1587,868.9 1589,869.6 1591,869 1593,868.9 1595,870 1597,869.4 1599,870.4 1601,869.9 1603,869.3 1605,870.1 1607,869.7 1609,870.5 1610.8,870.1 1611.6,870.9 1612.3,857.9 1613.5,884 1614.4,871.7 1615.3,870.2 1617,870.6 1619,870.7 1621,869.7 1623,869.7 1625,870.8 1627,869.9 1629,870 1631,869.7 1633,869.9 1635,870.3 1637,871 1639,870.1 1641,870 1643,870.8 1645,869.9 1647,870.5 1649,870.5 1650.5,870.3 1651.3,871.1 1652,857.4 1653.2,886.9 1654.1,871.7 1655,870.2 1655,870.8 1657,869.6 1659,870.3 1661,870 1663,870.6 1665,869.8 1667,870.4 1669,869.6 1671,870 1673,870.6 1675,869.6 1677,869.6 1679,870.5 1681,870.1 1683,869.2 1685,869.4 1687,869.4 1689,869.4 1691,870.2 1691.2,869.7 1692,870.5 1692.7,856.6 1693.9,886.6 1694.9,871.1 1695.7,869.6 1697,869.9 1699,870.3 1701,869.8 1703,869.7 1705,869.4 1707,869.8 1709,869.5 1711,868.8 1713,869.4 1715,869.2 1717,869.4 1719,868.7 1721,868.7 1723,870 1725,869.2 1727,869.1 1729,868.8 1731,869.5 1732.1,869.3 1732.9,870.1 1733.6,854.8 1734.8,885.6 1735.8,870.9 1736.6,869.4 1737,869.9 1739,869 1741,869.5 1743,869.5 1745,870 1747,869.8 1749,869.4 1751,869.5 1753,870.3 1755,869.6 1757,870.8 1759,869.7 1761,870.1 1763,870.6 1765,871.2 1767,871 1769,871.2 1771,871.3 1772.2,871 1773,871.8 1773.7,858.9 1774.9,885.6 1775.9,872.6 1776.7,871.1 1777,871.4 1779,870.5 1781,871.6 1783,870.6 1785,870.5 1787,870.3 1789,870.1 1791,871.2 1793,870.4 1795,869.8 1797,869.5 1799,870.5 1801,869.9 1803,870.2 1805,868.7 1807,868.6 1809,868.6 1811,868.3 1813,868 1813,868.5 1813.8,869.3 1814.5,856.3 1815.7,882.3 1816.7,869.5 1817.5,868 1819,867.5 1821,867.9 1823,867 1825,866.9 1827,867.2 1829,866.9 1831,866.5 1833,867 1835,866.8 1837,866.6 1839,866.7 1841,866.1" fill="none" stroke="#27e527" stroke-width="1.3" stroke-linejoin="round" /><polyline points="507,897.3 509,898 511,897.7 513,898.1 515,898 517,898 518.2,897.9 519,898.7 519.7,881.2 520.9,915.4 521.9,899.4 522.7,897.9 523,897.3 525,897.4 527,898 529,898.1 531,898.5 533,898.2 535,897.5 537,897.7 539,897.7 541,898.1 543,897.5 545,898.2 547,897.5 549,897.4 551,897.4 553,897.2 555,898.1 557,896.7 558.2,897.3 559,898.1 559.7,882.4 560.9,914.7 561.9,898.7 562.7,897.2 563,897.1 565,896.6 567,897.4 569,896.6 571,896.5 573,896.9 575,897.1 577,897.3 579,896.8 581,896.5 583,896.6 585,897.3 587,896.3 589,896 591,897.1 593,896.5 595,896 597,896 599,897 600.9,896.4 601.6,897.2 602.4,881.1 603.6,914.1 604.5,897.8 605.4,896.3 607,896.6 609,895.7 611,896.5 613,895.8 615,896.1 617,896.3 619,895.5 621,896.7 623,895.9 625,895.6 627,896.4 629,895.5 631,895.4 633,896.2 635,896 637,896.6 639,896.4 641,895.6 641.5,896 642.3,896.8 643,883.3 644.2,911.2 645.2,897.7 646,896.2 647,895.6 649,896.5 651,896.5 653,896.5 655,897.5 657,896.8 659,897.6 661,897 663,898.4 665,898.7 667,898.4 669,898.2 671,898.9 673,899.3 675,899.3 677,898.3 679,899 681,898.5 681.8,899.2 682.5,900 683.3,883.3 684.5,914 685.4,902.2 686.3,900.7 687,901.1 689,902.6 691,903.5 693,903.5 695,904.6 697,904.7 699,904.5 701,905.3 703,905.2 705,904.5 707,904.5 709,904.7 711,904.5 713,903.9 715,903.2 717,902.9 719,902.7 721,903.3 722.3,902.6 723,903.4 723.8,887.5 725,916.3 725.9,903.4 726.8,901.9 727,901.8 729,901.7 731,901 733,900.6 735,900 737,900.8 739,900 741,899 743,899.6 745,899.2 747,899 749,899 751,898.6 753,898.8 755,898.8 757,897.9 759,898.2 761,897.8 762.3,897.9 763.1,898.7 763.8,885 765,912.8 766,899 766.8,897.5 767,897.4 769,897 771,897.1 773,896.3 775,895.9 777,896.2 779,895.6 781,895 783,894.8 785,893.7 787,893.7 789,892.8 791,892.5 793,891.9 795,892.7 797,892.7 799,891.7 801,891.8 803,891.5 804.3,892 805.1,892.8 805.8,875.7 807,909.9 807.9,893.4 808.8,891.9 809,891.4 811,892.1 813,892.4 815,891.2 817,891.4 819,892.1 821,891.3 823,892.1 825,891.3 827,891.4 829,891 831,891 833,891.2 835,890.9 837,891.4 839,890.4 841,891.2 843,891.3 844.9,890.8 845.7,891.6 846.4,875.3 847.6,904.6 848.6,892.2 849.4,890.7 851,890.4 853,890.1 855,889.9 857,889.8 859,890.8 861,890.4 863,889.6 865,890.1 867,890.3 869,889.9 871,889.4 873,889.9 875,889.8 877,890.7 879,889.8 881,890.6 883,890.5 885,890.1 886.5,890 887.3,890.8 888,873.8 889.2,904 890.2,891.5 891,890 893,889.5 895,890.4 897,889.4 899,890.1 901,889.4 903,889.4 905,889.9 907,889.5 909,890.7 911,890.1 913,890.6 915,890.6 917,890.4 919,890.2 921,890 923,890.4 925,890.2 926.4,890 927.2,890.8 927.9,878 929.1,903 930.1,891.5 930.9,890 931,889.5 933,890 935,889.9 937,890 939,890.3 941,890.3 943,890.1 945,890.4 947,890.5 949,889.4 951,889.5 953,889.4 955,889.5 957,890.6 959,889.7 961,889.9 963,890 965,890.1 966.8,890 967.6,890.8 968.3,878 969.5,904.6 970.4,891.5 971.3,890 973,889.7 975,890.4 977,889.8 979,890.5 981,890.4 983,889.3 985,890.1 987,889.4 989,890.5 991,889.4 993,889.7 995,890.4 997,890.1 999,890.2 1001,889.9 1003,890 1005,889.6 1007,890 1007.8,890.8 1008.5,874.9 1009.7,903.4 1010.7,891.6 1011.5,890.1 1013,890.1 1015,889.8 1017,890.5 1019,889.7 1021,889.8 1023,890 1025,890.5 1027,890.7 1029,889.9 1031,891.4 1033,891.2 1035,890.7 1037,890.5 1039,891.5 1041,891.8 1043,890.7 1045,891.6 1047,891.8 1049,892.1 1050.7,891.5 1051.5,892.3 1052.2,876 1053.4,905.9 1054.4,893.2 1055.2,891.7 1057,891.4 1059,891.4 1061,891.5 1063,891.7 1065,892.7 1067,892.8 1069,892.3 1071,891.9 1073,892.3 1075,892.2 1077,892.8 1079,893 1081,893.1 1083,892.7 1085,892.8 1087,892.8 1089,892.7 1089.8,892.9 1090.6,893.7 1091.3,876.6 1092.5,910.6 1093.5,894.5 1094.3,893 1095,892.9 1097,893.3 1099,893.3 1101,892.8 1103,893.1 1105,892.5 1107,892.4 1109,892.9 1111,892.8 1113,892.4 1115,892.5 1117,893 1119,893.7 1121,893.6 1123,892.5 1125,892.9 1127,893 1129,893 1130.7,893.3 1131.5,894.1 1132.2,879.1 1133.4,907.9 1134.4,894.8 1135.2,893.3 1137,892.9 1139,893.5 1141,893.9 1143,893.3 1145,893.1 1147,893 1149,892.9 1151,894 1153,893.3 1155,894.1 1157,894.2 1159,893.3 1161,893.5 1163,893.7 1165,894.4 1167,894.4 1169,893.8 1170.7,894.1 1171.5,894.9 1172.2,878.4 1173.4,909.6 1174.4,895.8 1175.2,894.3 1177,894.3 1179,894.2 1181,894.4 1183,894.9 1185,894.2 1187,895 1189,895.3 1191,894.9 1193,895.4 1195,895.5 1197,894.4 1199,895.7 1201,894.6 1203,895.5 1205,894.6 1207,894.9 1209,895.2 1211,895.8 1212,895.4 1212.7,896.2 1213.5,879.9 1214.7,909.2 1215.6,897 1216.5,895.5 1217,895.8 1219,895.1 1221,896.2 1223,896.2 1225,895.7 1227,895.2 1229,895.5 1231,895.6 1233,895.8 1235,896.6 1237,896.2 1239,896.6 1241,895.6 1243,895.9 1245,896.6 1247,896.1 1249,896 1251,895.8 1253,895.8 1253.2,896.4 1254,897.2 1254.7,883.4 1255.9,912.6 1256.9,898 1257.7,896.5 1259,896.4 1261,896.7 1263,896.5 1265,896.8 1267,896.4 1269,896.1 1271,897 1273,896.6 1275,896.8 1277,896.7 1279,896.6 1281,896.3 1283,896.6 1285,896.7 1287,896.4 1289,896.3 1291,896.9 1291.3,897 1292.1,897.8 1292.8,884.2 1294,910.2 1295,898.5 1295.8,897 1297,896.3 1299,897.5 1301,896.8 1303,896.9 1305,897 1307,896.3 1309,896.4 1311,897.4 1313,897.1 1315,897 1317,896.8 1319,897.3 1321,897 1323,897.4 1325,897.4 1327,897.5 1329,897.3 1331,897.2 1331.5,896.9 1332.3,897.7 1333,881.3 1334.2,912.8 1335.2,898.4 1336,896.9 1337,896.9 1339,896.9 1341,897 1343,896.9 1345,897.3 1347,897.4 1349,896.2 1351,897.2 1353,897 1355,897 1357,897.4 1359,896.2 1361,896.7 1363,896.6 1365,897.4 1367,896.3 1369,896.8 1371,896.2 1372.5,896.7 1373.3,897.5 1374,881.3 1375.2,914.5 1376.2,898.2 1377,896.7 1379,897 1381,896.6 1383,897 1385,896.3 1387,897.1 1389,895.9 1391,896.2 1393,896.9 1395,897.1 1397,896.9 1399,896.2 1401,895.9 1403,896.8 1405,896.8 1407,895.8 1409,897 1411,896.5 1413,895.7 1413.6,896.4 1414.4,897.2 1415.1,884.2 1416.3,911.7 1417.3,897.9 1418.1,896.4 1419,896.3 1421,896.1 1423,895.8 1425,896.9 1427,896.9 1429,895.8 1431,896.2 1433,895.9 1435,896.5 1437,895.7 1439,896 1441,896.1 1443,896.2 1445,896.1 1447,896.3 1449,896.8 1451,896.8 1453,896.7 1454.5,896.1 1455.3,896.9 1456,880 1457.2,912.5 1458.2,897.6 1459,896.1 1461,896.6 1463,895.7 1465,895.7 1467,896 1469,896.3 1471,896.2 1473,895.8 1475,896.7 1477,895.8 1479,895.4 1481,895.5 1483,895.6 1485,896.3 1487,896.5 1489,895.4 1491,895.6 1493,895.6 1493.3,896 1494.1,896.8 1494.8,882.1 1496,909.6 1497,897.5 1497.8,896 1499,896.4 1501,896.6 1503,895.7 1505,895.4 1507,896.6 1509,896.6 1511,896.2 1513,895.8 1515,896.1 1517,896.1 1519,895.6 1521,895.2 1523,895.5 1525,895.6 1527,895 1529,895.4 1531,894.6 1533,895.6 1533.4,895 1534.2,895.8 1534.9,879.7 1536.1,907.8 1537.1,896.2 1537.9,894.7 1539,894.2 1541,894.2 1543,895.1 1545,894.9 1547,894.8 1549,894.5 1551,894.4 1553,894.3 1555,893.8 1557,893 1559,893.8 1561,893.8 1563,893.7 1565,892.5 1567,892.4 1569,893.2 1571,892.8 1573,893.3 1574.2,892.7 1575,893.5 1575.7,879.9 1576.9,905.8 1577.8,894 1578.7,892.5 1579,893.1 1581,892.3 1583,892.6 1585,892.5 1587,892.5 1589,891.9 1591,892.3 1593,891.5 1595,892.6 1597,892.3 1599,892.4 1601,891.9 1603,891.6 1605,891.9 1607,892.3 1609,892.1 1611,891.5 1613,891.3 1615,891.9 1615.1,892 1615.9,892.8 1616.6,877.4 1617.8,905.7 1618.8,893.5 1619.6,892 1621,891.7 1623,891.6 1625,891.6 1627,891.9 1629,892.3 1631,892.6 1633,892.3 1635,891.4 1637,892.6 1639,892.2 1641,892.4 1643,892.2 1645,891.9 1647,891.9 1649,891.5 1651,892.3 1653,891.5 1654.3,892.1 1655.1,892.9 1655.8,878.4 1657,905.7 1658,893.6 1658.8,892.1 1659,892.4 1661,892.7 1663,892.4 1665,892.3 1667,892.6 1669,892.8 1671,892.6 1673,892.9 1675,892.2 1677,891.5 1679,892.4 1681,892.4 1683,892.8 1685,892.4 1687,892.1 1689,891.6 1691,892.8 1693,892.5 1693.9,892.3 1694.7,893.1 1695.4,877 1696.6,909 1697.6,893.8 1698.4,892.3 1699,893 1701,892.5 1703,892.9 1705,892.8 1707,893.1 1709,892.4 1711,893 1713,892.3 1715,891.8 1717,892.2 1719,892.3 1721,893.2 1723,892.3 1725,892.2 1727,892.8 1729,892 1731,892.3 1733,892.4 1735,892 1735.6,892.6 1736.3,893.4 1737.1,877.7 1738.3,909.9 1739.2,894.1 1740.1,892.6 1741,892.7 1743,892.5 1745,893 1747,892.4 1749,893.3 1751,892.2 1753,892.7 1755,892.3 1757,892 1759,892.4 1761,893.3 1763,892.4 1765,892.7 1767,892.8 1769,892.4 1771,892.8 1773,892.2 1775,892.6 1775.4,892.8 1776.2,893.6 1776.9,877.4 1778.1,910.7 1779.1,894.3 1779.9,892.8 1781,892.5 1783,893.3 1785,893.2 1787,893.1 1789,893 1791,893.4 1793,893.2 1795,892.3 1797,892.4 1799,893.2 1801,893.4 1803,893.6 1805,893.3 1807,892.4 1809,893 1811,893.1 1813,893.1 1815,892.4 1815.7,892.9 1816.5,893.7 1817.2,877.8 1818.4,908.3 1819.4,894.5 1820.2,893 1821,893.6 1823,893 1825,892.6 1827,893.6 1829,892.8 1831,892.4 1833,893.2 1835,892.7 1837,892.6 1839,892.7 1841,893.1" fill="none" stroke="#27e527" stroke-width="1.3" stroke-linejoin="round" /><polyline points="507,923.4 509,924.4 511,924.2 513,924 515,923.5 517,924.3 519,923.6 521,923.7 523,924.4 525,924.5 527,924.8 529,924.9 529.5,924.4 530.3,925.2 531,909.5 532.2,939.6 533.2,926 534,924.5 535,924.1 537,924.4 539,924.2 541,924.7 543,924.2 545,925.4 547,925.2 549,925.4 551,925 553,925.7 555,925.6 557,925.6 559,925.6 561,924.8 563,925.1 565,924.7 567,925.7 569,925.3 569.4,925.3 570.2,926.1 570.9,911.9 572.1,942.8 573.1,926.8 573.9,925.3 575,926 577,925 579,925.3 581,925.9 583,926.1 585,925.8 587,926 589,926.1 591,925.2 593,925.8 595,925 597,925.9 599,926.4 601,925.8 603,925.3 605,926 607,925.4 609,926 610,926.1 610.8,926.9 611.5,912.3 612.7,943.1 613.6,927.7 614.5,926.2 615,925.6 617,926.2 619,926.8 621,926.8 623,927 625,926.5 627,926.5 629,926.1 631,927.2 633,926.9 635,926.8 637,926.5 639,927 641,926.5 643,926.6 645,926.6 647,927.2 649,926.8 650.2,927.4 651,928.2 651.7,915.4 652.9,945.3 653.9,929 654.7,927.5 655,928 657,927.7 659,928.1 661,927.7 663,927.2 665,927.4 667,928.3 669,927.9 671,928 673,928.1 675,927.3 677,927.5 679,927.8 681,928.4 683,928.5 685,928.1 687,927.6 689,927.3 691,928 691.4,927.9 692.2,928.7 692.9,912.2 694.1,945.8 695.1,929.4 695.9,927.9 697,927.8 699,928.5 701,927.5 703,927.5 705,927.2 707,927.2 709,928.3 711,928.4 713,927.3 715,927.1 717,927.9 719,927.4 721,927.9 723,928.3 725,928.1 727,927.4 729,927.9 731,927.4 731.8,927.7 732.6,928.5 733.3,914.9 734.5,940.9 735.5,929.2 736.3,927.7 737,928 739,927.3 741,928.1 743,927.9 745,928.1 747,927.4 749,928.2 751,927.7 753,927.2 755,927.7 757,927.3 759,927 761,926.8 763,927.6 765,927.1 767,926.9 769,927.8 771,926.9 772.3,927.4 773.1,928.2 773.8,912.4 775,943.5 776,928.9 776.8,927.4 777,927.8 779,927.1 781,927.2 783,928 785,927.8 787,927.8 789,928 791,927.5 793,928 795,927.5 797,927.5 799,927.1 801,927.2 803,927.4 805,927 807,927.5 809,927.8 811,927.5 813,926.8 813.8,927.2 814.6,928 815.3,914 816.5,941.2 817.5,928.6 818.3,927.1 819,926.4 821,926.9 823,926.9 825,927.5 827,927 829,926.9 831,927 833,926.9 835,927 837,926.8 839,926.8 841,926.3 843,926.1 845,926.6 847,927.2 849,927.2 851,926.3 853,926.7 854.3,926.6 855.1,927.4 855.8,913.9 857,939.7 858,928 858.8,926.5 859,926.6 861,926.4 863,926 865,926.7 867,925.7 869,925.8 871,925.7 873,925.5 875,925.4 877,925.1 879,925.6 881,925 883,925.5 885,925.3 887,925.3 889,925 891,925.1 893,924.5 894,924.8 894.7,925.6 895.5,910.9 896.7,942.4 897.6,926.2 898.5,924.7 899,924.6 901,924.9 903,924.2 905,924.9 907,924.6 909,925 911,924.4 913,924.1 915,924.2 917,923.3 919,923.2 921,923.1 923,923.3 925,923 927,922 929,922.8 931,922.6 933,921.7 934.7,921.5 935.5,922.3 936.2,908 937.4,938.3 938.4,922.6 939.2,921.1 941,921.7 943,921.1 945,920.7 947,920.2 949,920.1 951,920.9 953,921.1 955,921 957,921.2 959,920.7 961,921.1 963,920.9 965,921 967,920.9 969,921 971,920.9 973,920.2 974.9,920.8 975.7,921.6 976.4,908.7 977.6,936.9 978.6,922.3 979.4,920.8 981,921.1 983,921.1 985,920.7 987,921.5 989,920.8 991,920.4 993,920.9 995,920.7 997,920.4 999,921.4 1001,920.4 1003,921.2 1005,920.4 1007,920.9 1009,921.6 1011,920.3 1013,921.4 1015,920.2 1015.6,920.9 1016.3,921.7 1017.1,904.6 1018.3,934.2 1019.2,922.4 1020.1,920.9 1021,921.6 1023,921.5 1025,920.9 1027,921.2 1029,920.9 1031,920.5 1033,920.8 1035,920.9 1037,921.5 1039,920.4 1041,921 1043,921 1045,921.1 1047,921.4 1049,921.1 1051,920.8 1053,921.6 1055,921.1 1056,921 1056.8,921.8 1057.5,905.6 1058.7,938.2 1059.7,922.5 1060.5,921 1061,920.7 1063,921.1 1065,921.5 1067,920.4 1069,921.3 1071,921.1 1073,920.8 1075,920.7 1077,920.8 1079,921.1 1081,921.2 1083,921.5 1085,921.1 1087,921.7 1089,921.5 1091,922.1 1093,922.1 1095,921.4 1096,921.8 1096.8,922.6 1097.5,906.2 1098.7,936.3 1099.7,923.6 1100.5,922.1 1101,922.7 1103,922.2 1105,922 1107,922 1109,922.8 1111,922.5 1113,922.9 1115,922.4 1117,923.4 1119,922.6 1121,923.6 1123,923.1 1125,923.1 1127,923.4 1129,923.4 1131,923.6 1133,923.7 1135,924.3 1137,924.1 1138.2,923.8 1139,924.6 1139.7,907.2 1140.9,941.5 1141.9,925.4 1142.7,923.9 1143,923.4 1145,924.7 1147,923.4 1149,923.5 1151,924.6 1153,923.8 1155,923.5 1157,923.7 1159,924.2 1161,924.7 1163,923.6 1165,923.8 1167,923.7 1169,923.8 1171,924.3 1173,924.7 1175,925.5 1177,925.2 1179,925.6 1181,925.4 1181.1,925.3 1181.8,926.1 1182.6,910.6 1183.8,938.9 1184.7,927.1 1185.6,925.6 1187,926.3 1189,926.1 1191,925.7 1193,925.9 1195,926.2 1197,925.7 1199,926.9 1201,926.3 1203,925.9 1205,926.4 1207,926.8 1209,926.1 1211,926.6 1213,925.9 1215,926.2 1217,926.1 1219,926.6 1220.3,926.6 1221.1,927.4 1221.8,914.3 1223,941.2 1223.9,928.3 1224.8,926.8 1225,927 1227,926.4 1229,927.1 1231,927 1233,927.3 1235,927.7 1237,926.8 1239,927.7 1241,927 1243,927.1 1245,926.6 1247,926.5 1249,927.3 1251,926.5 1253,926.4 1255,926.4 1257,927.1 1259,926.5 1261,926.6 1262.6,926.9 1263.4,927.7 1264.1,914.7 1265.3,944.2 1266.2,928.3 1267.1,926.8 1269,927.1 1271,926.6 1273,926.1 1275,926.8 1277,927.1 1279,926.5 1281,926.2 1283,926.3 1285,926.4 1287,926.5 1289,926.4 1291,925.5 1293,926.2 1295,925.1 1297,925.1 1299,925.5 1301,925 1303,925.4 1303,925.3 1303.8,926.1 1304.5,911.6 1305.7,939.2 1306.7,926.6 1307.5,925.1 1309,924.8 1311,925.6 1313,924.8 1315,925.3 1317,925.4 1319,924.6 1321,925 1323,924.5 1325,924.3 1327,923.9 1329,924.6 1331,924.9 1333,924.5 1335,923.9 1337,924.2 1339,923.9 1341,923.9 1343,924.4 1344.1,924 1344.8,924.8 1345.6,909.8 1346.8,940.1 1347.7,925.5 1348.6,924 1349,923.3 1351,923.9 1353,924 1355,923.5 1357,924.2 1359,923.5 1361,923.7 1363,923.4 1365,923.8 1367,923.5 1369,923.7 1371,923.2 1373,923.6 1375,923.2 1377,922.4 1379,922.8 1381,922.3 1383,922.3 1384.5,922.4 1385.3,923.2 1386,907.8 1387.2,935.4 1388.2,923.6 1389,922.1 1391,922.6 1393,921.8 1395,922 1397,921 1399,921.6 1401,920.7 1403,920.7 1405,920.5 1407,920.2 1409,921.3 1411,921.3 1413,920.4 1415,919.8 1417,920.7 1419,920.6 1421,919.7 1423,920.6 1424.8,920.2 1425.6,921 1426.3,906 1427.5,937.3 1428.5,921.7 1429.3,920.2 1431,919.6 1433,919.9 1435,920.6 1437,920.6 1439,919.9 1441,920.2 1443,920.7 1445,920.4 1447,920.3 1449,919.8 1451,919.6 1453,919.8 1455,920.3 1457,920.4 1459,920.2 1461,920.4 1463,920.3 1465,920.5 1465.4,920.3 1466.2,921.1 1466.9,907 1468.1,935.2 1469.1,921.8 1469.9,920.3 1471,920.1 1473,920.7 1475,920.3 1477,920.8 1479,921 1481,920.7 1483,920.7 1485,920.5 1487,920.4 1489,919.9 1491,919.7 1493,920.5 1495,919.9 1497,920.5 1499,920.4 1501,920.5 1503,920.2 1505,919.9 1507,920 1508,920.3 1508.7,921.1 1509.5,904.3 1510.7,933.3 1511.6,921.8 1512.5,920.3 1513,920.6 1515,920.9 1517,920.1 1519,920.1 1521,920.2 1523,920.2 1525,920.5 1527,920.7 1529,920.8 1531,920.9 1533,920.9 1535,921.4 1537,920.8 1539,920.9 1541,921.4 1543,921.1 1545,922 1547,921.7 1547.5,921.8 1548.3,922.6 1549,906.3 1550.2,940.1 1551.1,923.8 1552,922.3 1553,922.5 1555,922.7 1557,922.8 1559,922.5 1561,923.2 1563,923.7 1565,924.6 1567,923.7 1569,925.1 1571,925.4 1573,925.4 1575,924.9 1577,924.8 1579,926.2 1581,925.3 1583,925.9 1585,926.9 1587,926.8 1587.8,926.6 1588.5,927.4 1589.3,911.1 1590.5,941.1 1591.4,928.4 1592.3,926.9 1593,927.4 1595,927.6 1597,926.8 1599,927.3 1601,926.8 1603,927.2 1605,927.4 1607,927.8 1609,927.1 1611,927.6 1613,926.8 1615,926.9 1617,926.5 1619,927.1 1621,927 1623,927.1 1625,926.5 1627,927.1 1628.8,926.4 1629.6,927.2 1630.3,913 1631.5,941.8 1632.5,927.5 1633.3,926 1635,926.2 1637,925.8 1639,926 1641,924.9 1643,924.8 1645,925 1647,924.8 1649,925.1 1651,924.5 1653,923.5 1655,924.5 1657,923.6 1659,923.1 1661,923.6 1663,923.3 1665,923.4 1667,922.8 1669,922.2 1670.6,922.4 1671.4,923.2 1672.1,909.9 1673.3,938.5 1674.3,923.5 1675.1,922 1677,921.8 1679,921.7 1681,921.4 1683,921.6 1685,920.8 1687,920.9 1689,920.6 1691,920.4 1693,921.1 1695,921.3 1697,920.8 1699,921.5 1701,921.1 1703,921.2 1705,920.7 1707,921.6 1709,920.8 1711,921.6 1711,921.1 1711.8,921.9 1712.5,908.5 1713.7,939 1714.7,922.8 1715.5,921.3 1717,921 1719,922.1 1721,921.8 1723,921.2 1725,922.1 1727,921.4 1729,921.8 1731,921.9 1733,922 1735,922.2 1737,922 1739,922.5 1741,922.2 1743,923.3 1745,922.8 1747,923.5 1749,923.2 1751,924.1 1751.9,923.5 1752.7,924.3 1753.4,907.3 1754.6,941.3 1755.6,925.4 1756.4,923.9 1757,924.4 1759,924.3 1761,924.6 1763,924.9 1765,925 1767,924.4 1769,924.8 1771,924.2 1773,924.7 1775,924.8 1777,925.3 1779,924.5 1781,925.6 1783,924.8 1785,925.3 1787,925.5 1789,926 1790.4,925.6 1791.2,926.4 1791.9,912.7 1793.1,942.2 1794,927.1 1794.9,925.6 1795,925.8 1797,925.1 1799,925.8 1801,925.2 1803,925.8 1805,925.5 1807,926.3 1809,925.5 1811,925.3 1813,925.3 1815,926.3 1817,925.4 1819,925.3 1821,925.7 1823,925.9 1825,926.2 1827,925 1829,925.4 1831,925.9 1832.9,925.6 1833.7,926.4 1834.4,908.9 1835.6,939.7 1836.6,927.1 1837.4,925.6 1839,925.6 1841,925.9" fill="none" stroke="#27e527" stroke-width="1.3" stroke-linejoin="round" /><rect x="507" y="768" width="680" height="25" fill="#888" fill-opacity="0.55"/><rect x="557.5" y="767.5" width="19" height="37" fill="none" stroke="#ff1111" stroke-width="2"/></svg></svg>
<div style="left:505px;top:947px;width:1341px;height:17px;background:#efefef;border-top:1px solid #e2e2e2;border-bottom:1px solid #e2e2e2"></div>
<div style="left:505px;top:947px;width:14px;height:16px;background:#e4e4e4"></div>
<svg style="left:509px;top:951px" width="6" height="9" viewBox="0 0 6 9"><path d="M6 0 L0 4.5 L6 9 Z" fill="#555"/></svg>
<div style="left:520px;top:948px;width:3px;height:16px;background:#3a3a3a"></div>
<div style="left:1830px;top:947px;width:16px;height:17px;background:#e4e4e4;border:1px solid #d0d0d0"></div>
<svg style="left:1835px;top:951px" width="6" height="9" viewBox="0 0 6 9"><path d="M0 0 L6 4.5 L0 9 Z" fill="#555"/></svg>
<svg style="left:0px;top:0px" width="1906" height="1526" viewBox="0 0 1906 1526"><path d="M690.2 948V963M856.4 948V963M1022.6 948V963M1188.8 948V963M1355 948V963M1521.2 948V963M1687.4 948V963" stroke="#cfcfcf" stroke-width="1" shape-rendering="crispEdges"/><g font-family="Liberation Sans, sans-serif"><text x="527" y="960.5" font-size="12" fill="#111">02/26 12:00</text><text x="693.2" y="960.5" font-size="12" fill="#111">15:00</text><text x="859.4" y="960.5" font-size="12" fill="#111">18:00</text><text x="1025.6" y="960.5" font-size="12" fill="#111">21:00</text><text x="1191.8" y="960.5" font-size="12" fill="#111">02/27</text><text x="1358" y="960.5" font-size="12" fill="#111">03:00</text><text x="1524.2" y="960.5" font-size="12" fill="#111">06:00</text><text x="1690.4" y="960.5" font-size="12" fill="#111">09:00</text></g></svg>
<div style="left:504px;top:968px;width:1343px;height:1px;background:#cfcfcf"></div>
<div class="hdr" style="left:504px;top:972px;width:1343px;height:33px;"></div>
<div class="t" style="left:515px;top:977.5px;height:20px;line-height:20px;color:#5b9bd1;font-size:15px">心搏</div>
<div style="left:1667px;top:973px;width:180px;height:31px;background:#e6e6e6"></div>
<div style="left:1670px;top:975px;width:20px;height:25px;background:#ff0019;color:#111;text-align:center;font-size:13px;line-height:23px">af</div>
<div style="left:1696px;top:975px;width:18px;height:25px;background:#44ffff;color:#111;text-align:center;font-size:13px;line-height:23px">V</div>
<div style="left:1720px;top:975px;width:18px;height:25px;background:#ff00ff;color:#111;text-align:center;font-size:13px;line-height:23px">S</div>
<div style="left:1744px;top:975px;width:19px;height:25px;background:#22ff22;color:#111;text-align:center;font-size:13px;line-height:23px">N</div>
<div style="left:1769px;top:975px;width:19px;height:25px;background:#cccccc;color:#111;text-align:center;font-size:13px;line-height:23px">Q</div>
<svg style="left:1798px;top:981px" width="12" height="12" viewBox="0 0 12 12"><path d="M2 2 L10 10 M10 2 L2 10" stroke="#f79a3e" stroke-width="2.8"/></svg>
<svg style="left:1825.25px;top:981.5px" width="11.5" height="11.5" viewBox="0 0 11.5 11.5"><path d="M0.5 2.6 L11 2.6" stroke="#4a8fd6" stroke-width="1.3"/><path d="M4 2.2 Q4 0.7 5.75 0.7 Q7.5 0.7 7.5 2.2" stroke="#4a8fd6" stroke-width="1" fill="none"/><path d="M2 3 L2 10.8 L9.5 10.8 L9.5 3" stroke="#4a8fd6" stroke-width="1.1" fill="none"/><path d="M4.4 4.8 L4.4 9.2 M5.75 4.8 L5.75 9.2 M7.1 4.8 L7.1 9.2" stroke="#4a8fd6" stroke-width="0.8" stroke-opacity="0.8"/></svg>
<div style="left:505px;top:1005px;width:1324px;height:365px;background:#000"></div>
<svg style="left:0px;top:0px" width="1906" height="1526" viewBox="0 0 1906 1526"><svg x="505" y="1005" width="1324" height="365" viewBox="505 1005 1324 365"><path d="M554.6 1010V1082M681.6 1010V1082M799.6 1010V1082M917.6 1010V1082M1035.6 1010V1082M1153.6 1010V1082M1271.6 1010V1082M1389.6 1010V1082M1507.6 1010V1082M1625.6 1010V1082M1743.6 1010V1082M563.6 1092V1164M681.6 1092V1164M799.6 1092V1164M917.6 1092V1164M1035.6 1092V1164M1153.6 1092V1164M1271.6 1092V1164M1389.6 1092V1164M1507.6 1092V1164M1625.6 1092V1164M1743.6 1092V1164M563.6 1174V1246M681.6 1174V1246M799.6 1174V1246M917.6 1174V1246M1035.6 1174V1246M1153.6 1174V1246M1271.6 1174V1246M1389.6 1174V1246M1507.6 1174V1246M1625.6 1174V1246M1743.6 1174V1246M563.6 1256V1328M681.6 1256V1328M799.6 1256V1328M917.6 1256V1328M1035.6 1256V1328M1153.6 1256V1328M1271.6 1256V1328M1389.6 1256V1328M1507.6 1256V1328M1625.6 1256V1328M1743.6 1256V1328M563.6 1338V1410M681.6 1338V1410M799.6 1338V1410M917.6 1338V1410M1035.6 1338V1410M1153.6 1338V1410M1271.6 1338V1410M1389.6 1338V1410M1507.6 1338V1410M1625.6 1338V1410M1743.6 1338V1410" stroke="#e8c81a" stroke-width="1" stroke-dasharray="2 6"/><polyline points="509.6,1054.7 511.6,1055.1 513.6,1053.9 515.6,1054.5 517.6,1054.1 519.5,1054.5 520.1,1055.3 520.6,1027.8 521.5,1082.5 522.2,1056.1 522.9,1054.6 523.6,1054.6 525.6,1054.7 527.6,1053.8 529.6,1054.2 531.6,1054.3 533.6,1055.4 535.6,1055.1 537.6,1054.2 539.6,1055.3 541.6,1054.2 543.6,1055 545.6,1054.3 547.6,1054.1 549.6,1055.5 551.6,1054.4" fill="none" stroke="#c8c8c8" stroke-width="1.3" stroke-linejoin="round" /><polyline points="553.5,1054.9 554.1,1055.7 554.6,1028.2 555.5,1080.1 556.2,1056.5 556.9,1055 557.6,1054.5 559.6,1055.7 561.6,1055.6 563.6,1054.6 565.6,1055.7 567.6,1055.1 569.6,1055.3 571.6,1054.6 573.6,1055.8 575.6,1055.5 577.6,1056 579.6,1055.9 581.6,1055 583.6,1055.2 585.6,1055 586.5,1055.5 587.1,1056.3 587.6,1030.7 588.5,1084.4 589.2,1057.2 589.9,1055.7 591.6,1055.2 593.6,1055.1 595.6,1055.6 597.6,1056.1 599.6,1055.2 601.6,1056.4 603.6,1055.9 605.6,1055.9 607.6,1056.7 609.6,1056.3 611.6,1056 613.6,1056.3 615.6,1056.7 617.6,1055.7" fill="none" stroke="#2ee82e" stroke-width="1.4" stroke-linejoin="round" /><polyline points="627.6,1055.7 629.6,1054.5 631.6,1055.4 633.6,1055.7 635.6,1055.7 637.6,1054.8" fill="none" stroke="#c8c8c8" stroke-width="1.3" stroke-linejoin="round" /><polyline points="639.6,1054.8 641.6,1055.1 643.6,1055.5 645.6,1054.5 647.6,1055.5 649.6,1055.6 650.4,1055.1 651,1055.9 651.5,1029 652.4,1081.7 653.1,1056.7 653.8,1055.2 655.6,1055.8 657.6,1054.5 659.6,1056 661.6,1054.6 663.6,1055 665.6,1055.5 667.6,1056 669.6,1055.1 671.6,1056 673.6,1055.4 675.6,1055.1 677.6,1055.1 679.6,1054.9 680.5,1055.4 681.1,1056.2 681.6,1030.1 682.5,1080.4 683.2,1056.8 683.9,1055.3 685.6,1054.6 687.6,1054.6 689.6,1055.3 691.6,1055.6 693.6,1054.1 695.6,1053.7 697.6,1055 699.6,1054 701.6,1053.5 703.6,1053 705.6,1053.3 707.6,1053.4 709.6,1052.5 711.5,1052.3 712.1,1053.1 712.7,1029.1 713.6,1077.5 714.3,1053.3 714.9,1051.8 715.6,1051.6 717.6,1050.7 719.6,1051.9 721.6,1050.2 723.6,1050.8 725.6,1051.1 727.6,1049.9 729.6,1050.7 731.6,1050.9 733.6,1050.4 735.6,1050.6" fill="none" stroke="#2ee82e" stroke-width="1.4" stroke-linejoin="round" /><polyline points="745.6,1053 747.6,1052.6 749.6,1052.3 751.6,1052.5 753.6,1052.2 755.6,1052.7 757.6,1053.7 759.6,1053.8 761.6,1053.4 763.6,1053.3 765.6,1053.2 765.8,1053.5 766.4,1054.3 766.9,1028.7 767.8,1082.8 768.5,1055.3 769.2,1053.8 769.6,1053.1 771.6,1053.6 773.6,1054.6 775.6,1054.8 777.6,1054.2 779.6,1055 781.6,1055.1 783.6,1055.1 785.6,1055.2 787.6,1055.5 789.6,1054.9 791.6,1055.6 793.6,1055 795.6,1055.3 797.6,1055.8 798.5,1055.4 799.1,1056.2 799.6,1029 800.5,1084.3 801.2,1056.8 801.9,1055.3 803.6,1055.6 805.6,1054.9 807.6,1055.9 809.6,1055.3 811.6,1055.1 813.6,1054 815.6,1054.8 817.6,1054.1 819.6,1054.7 821.6,1054.2 823.6,1054.6 825.6,1054.1 827.6,1054.2 829.6,1053.3 830.8,1053.5 831.4,1054.3 831.9,1028.7 832.8,1080.2 833.5,1054.7 834.2,1053.2 835.6,1053.3 837.6,1053.4 839.6,1053.4 841.6,1052.5 843.6,1053.2 845.6,1053.1 847.6,1052.8 849.6,1053.2 851.6,1053.1 853.6,1052.4" fill="none" stroke="#2ee82e" stroke-width="1.4" stroke-linejoin="round" /><polyline points="863.6,1055.6 865.6,1055.2 867.6,1055.6 869.6,1055.8 871.6,1055.6 873.6,1055.7 875.6,1054.6 877.6,1054.9 879.6,1055.3 881.6,1055.7 883.6,1055 885.1,1055.5 885.6,1056.3 886.2,1029.7 887.1,1083.4 887.8,1057 888.4,1055.5 889.6,1055.8 891.6,1055.8 893.6,1054.9 895.6,1055.6 897.6,1055.2 899.6,1054.9 901.6,1055.1 903.6,1055.4 905.6,1055.2 907.6,1055.2 909.6,1055 911.6,1055.7 913.6,1055.6 915.6,1055.9 916.5,1055.7 917.1,1056.5 917.6,1029.8 918.5,1081.4 919.2,1057.2 919.9,1055.7 921.6,1055.8 923.6,1055.2 925.6,1056.3 927.6,1054.7 929.6,1055.3 931.6,1055 933.6,1055.2 935.6,1054.6 937.6,1055.6 939.6,1054.8 941.6,1054.2 943.6,1055 945.6,1054.1 947.6,1054.7 948,1054.6 948.6,1055.4 949.1,1028.5 950,1081.7 950.7,1055.9 951.3,1054.4 951.6,1054.1 953.6,1054.4 955.6,1054.9 957.6,1054.6 959.6,1053.9 961.6,1054.5 963.6,1054.2 965.6,1053.7 967.6,1053.3 969.6,1054 971.6,1053.9" fill="none" stroke="#2ee82e" stroke-width="1.4" stroke-linejoin="round" /><polyline points="981.6,1055.1 983.6,1054.2 985.6,1054.3 987.6,1054 989.6,1054 991.6,1055.1 993.6,1054.1 995.6,1055 997.6,1054.9 999.6,1054.3 1001.6,1053.7 1003.6,1054.8 1004.3,1054 1004.9,1054.8 1005.5,1031 1006.4,1079.4 1007.1,1055.4 1007.7,1053.9 1009.6,1053.9 1011.6,1053.7 1013.6,1053.5 1015.6,1054.5 1017.6,1053.6 1019.6,1053.3 1021.6,1053.5 1023.6,1052.9 1025.6,1053.7 1027.6,1053.4 1029.6,1053.1 1031.6,1053.9 1033.6,1053.9 1034.5,1053.4 1035.1,1054.2 1035.6,1028.1 1036.5,1080.9 1037.2,1054.9 1037.8,1053.4 1039.6,1052.7 1041.6,1053.6 1043.6,1053.3 1045.6,1054.5 1047.6,1054.4 1049.6,1053.7 1051.6,1053.9 1053.6,1053.9 1055.6,1055.4 1057.6,1054.5 1059.6,1055.2 1061.6,1055.2 1063.6,1055.7 1065.6,1055.8 1067.6,1056.2 1068.4,1055.9 1069,1056.7 1069.5,1032.3 1070.4,1083.7 1071.1,1057.7 1071.8,1056.2 1073.6,1055.8 1075.6,1057 1077.6,1056.4 1079.6,1056.9 1081.6,1056.7 1083.6,1056.7 1085.6,1057.1 1087.6,1057.1 1089.6,1056.9" fill="none" stroke="#2ee82e" stroke-width="1.4" stroke-linejoin="round" /><polyline points="1099.6,1052.3 1101.6,1052.5 1103.6,1052.4 1105.6,1052.1 1107.6,1052.9 1109.6,1052 1111.6,1052.1 1113.6,1052.9 1115.6,1051.8 1117.6,1052.1 1119.6,1052.9 1121.6,1051.8 1121.7,1052.5 1122.3,1053.3 1122.8,1025.8 1123.7,1081.1 1124.5,1054.1 1125.1,1052.6 1125.6,1053.1 1127.6,1052.9 1129.6,1052.6 1131.6,1052.4 1133.6,1053.2 1135.6,1053.5 1137.6,1052.3 1139.6,1052.8 1141.6,1053 1143.6,1052.9 1145.6,1052.7 1147.6,1052.4 1149.6,1053.1 1151.6,1053.5 1152.5,1053 1153.1,1053.8 1153.6,1027.8 1154.5,1078.1 1155.2,1054.5 1155.8,1053 1157.6,1052.3 1159.6,1052.6 1161.6,1053.6 1163.6,1053.5 1165.6,1053.4 1167.6,1052.4 1169.6,1053.5 1171.6,1054 1173.6,1054 1175.6,1053.6 1177.6,1052.6 1179.6,1053.9 1181.6,1052.9 1183.6,1053.6 1185.2,1053.4 1185.8,1054.2 1186.4,1027.3 1187.3,1080.2 1188,1055 1188.6,1053.5 1189.6,1054.2 1191.6,1053.9 1193.6,1053 1195.6,1053.2 1197.6,1054.3 1199.6,1053 1201.6,1053.8 1203.6,1053.5 1205.6,1053.1 1207.6,1053.8" fill="none" stroke="#2ee82e" stroke-width="1.4" stroke-linejoin="round" /><polyline points="1217.6,1057.4 1219.6,1057.6 1221.6,1056.8 1223.6,1056.4 1225.6,1055.2 1227.6,1055 1229.6,1053.3 1231.6,1052.4 1233.6,1053.3 1235.6,1052.4 1237.6,1053.2 1237.6,1053 1238.2,1053.8 1238.7,1028.5 1239.6,1078.2 1240.4,1054.5 1241,1053 1241.6,1053 1243.6,1053.6 1245.6,1053 1247.6,1053.1 1249.6,1052.4 1251.6,1052.9 1253.6,1052.3 1255.6,1053.1 1257.6,1052.7 1259.6,1052 1261.6,1052.1 1263.6,1052.3 1265.6,1052.8 1267.6,1051.9 1269.6,1052.6 1270.5,1052.3 1271.1,1053.1 1271.6,1029 1272.5,1079.5 1273.2,1053.7 1273.8,1052.2 1275.6,1052.4 1277.6,1051.4 1279.6,1052.3 1281.6,1051.3 1283.6,1051.3 1285.6,1051.9 1287.6,1051.3 1289.6,1052.3 1291.6,1051.6 1293.6,1051.3 1295.6,1052 1297.6,1050.7 1299.6,1051.7 1301.6,1050.6 1301.8,1051.3 1302.4,1052.1 1302.9,1025.4 1303.8,1079.8 1304.5,1052.7 1305.2,1051.2 1305.6,1050.7 1307.6,1051.9 1309.6,1051.4 1311.6,1050.7 1313.6,1050.5 1315.6,1051.8 1317.6,1051.3 1319.6,1051.5 1321.6,1050.4 1323.6,1051.2 1325.6,1050.8" fill="none" stroke="#2ee82e" stroke-width="1.4" stroke-linejoin="round" /><polyline points="1335.6,1051.5 1337.6,1050.9 1339.6,1051.6 1341.6,1051 1343.6,1051.1 1345.6,1051.1 1347.6,1051.4 1349.6,1050.8 1351.6,1050.4 1353.6,1050.3 1355.6,1050.5 1356.2,1051 1356.8,1051.8 1357.3,1025.5 1358.2,1077.4 1358.9,1052.5 1359.6,1051 1359.6,1050.3 1361.6,1051.6 1363.6,1051 1365.6,1051.4 1367.6,1050.2 1369.6,1051 1371.6,1051.6 1373.6,1051.2 1375.6,1050.9 1377.6,1050.9 1379.6,1050.4 1381.6,1050.4 1383.6,1050.5 1385.6,1050.8 1387.6,1050.8 1388.5,1051 1389.1,1051.8 1389.6,1026.5 1390.5,1076.5 1391.2,1052.5 1391.8,1051 1393.6,1051.6 1395.6,1050.4 1397.6,1050.6 1399.6,1050.6 1401.6,1050.5 1403.6,1050.7 1405.6,1050.6 1407.6,1051 1409.6,1050.3 1411.6,1051.7 1413.6,1050.8 1415.6,1051.7 1417.6,1051.3 1419.6,1051.3 1420.5,1051 1421.1,1051.8 1421.6,1024.7 1422.5,1078.6 1423.2,1052.5 1423.8,1051 1425.6,1051 1427.6,1051.7 1429.6,1050.4 1431.6,1051.3 1433.6,1050.7 1435.6,1051.3 1437.6,1051.4 1439.6,1050.5 1441.6,1050.5 1443.6,1050.2" fill="none" stroke="#2ee82e" stroke-width="1.4" stroke-linejoin="round" /><polyline points="1453.6,1051.4 1455.6,1051.3 1457.6,1050.5 1459.6,1050.6 1461.6,1051.3 1463.6,1051.7 1465.6,1051.2 1467.6,1050.9 1469.6,1051.8 1471.6,1050.2 1473.6,1050.3 1474.2,1051 1474.8,1051.8 1475.3,1026.4 1476.2,1079.9 1476.9,1052.5 1477.5,1051 1477.6,1051.4 1479.6,1050.9 1481.6,1050.3 1483.6,1051.1 1485.6,1051.8 1487.6,1051 1489.6,1050.8 1491.6,1050.4 1493.6,1050.3 1495.6,1051.6 1497.6,1051 1499.6,1051.7 1501.6,1050.3 1503.6,1050.6 1505.6,1050.3 1506.5,1051 1507.1,1051.8 1507.6,1026.5 1508.5,1077.2 1509.2,1052.5 1509.8,1051 1511.6,1050.8 1513.6,1050.3 1515.6,1050.6 1517.6,1050.9 1519.6,1050.7 1521.6,1050.3 1523.6,1050.3 1525.6,1051.8 1527.6,1050.5 1529.6,1051 1531.6,1050.8 1533.6,1051.1 1535.6,1050.4 1537.6,1051 1537.7,1051.3 1538.3,1052.1 1538.8,1026.4 1539.7,1078 1540.5,1053.4 1541.1,1051.9 1541.6,1051.4 1543.6,1052.5 1545.6,1053.6 1547.6,1053.7 1549.6,1054.6 1551.6,1054.1 1553.6,1054.2 1555.6,1055.5 1557.6,1055.7 1559.6,1056 1561.6,1055.8" fill="none" stroke="#2ee82e" stroke-width="1.4" stroke-linejoin="round" /><polyline points="1571.6,1050.7 1573.6,1050.3 1575.6,1051.4 1577.6,1051.5 1579.6,1050.7 1581.6,1050.4 1583.6,1050.3 1585.6,1050.6 1587.6,1050.3 1589.6,1050.9 1591.6,1051.1 1593.4,1051 1593.9,1051.8 1594.5,1024.3 1595.4,1077.2 1596.1,1052.5 1596.7,1051 1597.6,1050.6 1599.6,1050.3 1601.6,1051.3 1603.6,1050.3 1605.6,1050.5 1607.6,1050.7 1609.6,1050.8 1611.6,1050.4 1613.6,1050.9 1615.6,1050.7 1617.6,1051.4 1619.6,1051.1 1621.6,1051.6 1623.6,1051.2 1624.5,1051 1625.1,1051.8 1625.6,1026.2 1626.5,1079.6 1627.2,1052.8 1627.8,1051.3 1629.6,1052.3 1631.6,1053 1633.6,1054.1 1635.6,1056.2 1637.6,1057.6 1639.6,1059.8 1641.6,1061.2 1643.6,1062.8 1645.6,1063.7 1647.6,1066 1649.6,1066.5 1651.6,1066.9 1653.6,1067.2 1655.6,1067.5 1657.6,1067.6 1657.7,1068 1658.2,1068.8 1658.8,1044.1 1659.7,1093.5 1660.4,1069.5 1661,1068 1661.6,1068.3 1663.6,1067.7 1665.6,1067.3 1667.6,1068.4 1669.6,1068.1 1671.6,1067.2 1673.6,1067.3 1675.6,1067.4 1677.6,1067.8 1679.6,1068.6" fill="none" stroke="#2ee82e" stroke-width="1.4" stroke-linejoin="round" /><polyline points="1689.6,1051.5 1691.6,1051.4 1693.6,1050.5 1695.6,1051.3 1697.6,1050.9 1699.6,1051.9 1701.6,1051.7 1703.6,1052.6 1705.6,1052.4 1707.6,1051.4 1709.6,1051.8 1711.6,1053.1 1712.3,1052.7 1712.9,1053.5 1713.4,1028.7 1714.3,1080.5 1715.1,1055.3 1715.7,1053.8 1717.6,1054.6 1719.6,1055.5 1721.6,1056.6 1723.6,1058.3 1725.6,1059.7 1727.6,1060.2 1729.6,1062 1731.6,1062.5 1733.6,1062.7 1735.6,1064.7 1737.6,1064.8 1739.6,1064.8 1741.6,1066.6 1742.5,1066 1743.1,1066.8 1743.6,1041.5 1744.5,1092.5 1745.2,1067.7 1745.8,1066.2 1747.6,1065.8 1749.6,1067.3 1751.6,1067.8 1753.6,1069 1755.6,1068.7 1757.6,1068.5 1759.6,1068.5 1761.6,1067.9 1763.6,1067.8 1765.6,1066.7 1767.6,1066.4 1769.6,1064.6 1771.6,1063.9 1773.6,1062.9 1775.3,1062.7 1775.9,1063.5 1776.4,1039.6 1777.3,1089.4 1778.1,1063.5 1778.7,1062 1779.6,1062.8 1781.6,1062.2 1783.6,1061.2 1785.6,1059.3 1787.6,1057.3 1789.6,1055 1791.6,1054.4 1793.6,1052.4 1795.6,1050.6 1797.6,1050.5" fill="none" stroke="#2ee82e" stroke-width="1.4" stroke-linejoin="round" /><polyline points="509.6,1127.2 511.6,1127.6 513.6,1127.4 515.6,1127.5 517.6,1129.1 519.6,1130.2 521.6,1130.7 523.6,1132.2 525.6,1133.3 527.6,1134 529.6,1135.6 529.8,1136 530.4,1136.8 530.9,1109.4 531.8,1163.4 532.5,1139.1 533.1,1137.6 533.6,1137.6 535.6,1138.4 537.6,1139.2 539.6,1138.8 541.6,1139.8 543.6,1139.6 545.6,1139.9 547.6,1139.8 549.6,1139.9 551.6,1139.9 553.6,1140.6 555.6,1140.1 557.6,1140.7 559.6,1141 561.6,1140.9 562.5,1140.9 563.1,1141.7 563.6,1114.7 564.5,1167.3 565.2,1142.5 565.9,1141 567.6,1140.5 569.6,1139.7 571.6,1138.9 573.6,1138.4 575.6,1137.7 577.6,1136.9 579.6,1135.7 581.6,1134 583.6,1134.1 585.6,1132.3 587.6,1132.5 589.6,1131.3 591.6,1132.3 593.6,1132 595.6,1132.1 595.6,1131.4 596.2,1132.2 596.8,1105.7 597.7,1159.1 598.4,1132.2 599,1130.7 599.6,1131.2 601.6,1130.3 603.6,1130 605.6,1129.3 607.6,1128.6 609.6,1127.5 611.6,1127.6 613.6,1127.9 615.6,1126.7 617.6,1127.8" fill="none" stroke="#2ee82e" stroke-width="1.4" stroke-linejoin="round" /><polyline points="627.6,1141.2 629.6,1140.8 631.6,1140.2 633.6,1141 635.6,1140.6 637.6,1140.6 639.6,1139.9 641.6,1140.4 643.6,1139.1 645.6,1139.1 647.6,1138.8 649.1,1139.1 649.7,1139.9 650.2,1116.1 651.1,1165.6 651.9,1140.5 652.5,1139 653.6,1139.2 655.6,1139.4 657.6,1137.8 659.6,1137.9 661.6,1137.4 663.6,1135.7 665.6,1134.5 667.6,1134.3 669.6,1133.8 671.6,1132.9 673.6,1131.8 675.6,1130.5 677.6,1129.9 679.6,1129.5 680.5,1129.3 681.1,1130.1 681.6,1105.6 682.5,1156.6 683.2,1130.5 683.9,1129 685.6,1129.7 687.6,1128.8 689.6,1128.8 691.6,1129.4 693.6,1130.1 695.6,1129 697.6,1128.9 699.6,1129.1 701.6,1129.9 703.6,1130.1 705.6,1129.5 707.6,1129.5 709.6,1130.1 711.6,1130.1 712.7,1129.7 713.2,1130.5 713.8,1103.1 714.7,1158 715.4,1130.8 716,1129.3 717.6,1129.4 719.6,1129.2 721.6,1127.8 723.6,1128.2 725.6,1128.4 727.6,1128.3 729.6,1127.1 731.6,1127.7 733.6,1127.3 735.6,1127.7" fill="none" stroke="#2ee82e" stroke-width="1.4" stroke-linejoin="round" /><polyline points="745.6,1128.4 747.6,1129.2 749.6,1128.3 751.6,1129.2 753.6,1129 755.6,1129 757.6,1128.8 759.6,1128.4 761.6,1128.6 763.6,1128.4 765.6,1127.7 766.2,1127.5 766.7,1128.3 767.3,1101.1 768.2,1154.1 768.9,1128.7 769.5,1127.2 769.6,1128 771.6,1126.5 773.6,1126.4 775.6,1126.3 777.6,1126.5 779.6,1126.9 781.6,1127.1 783.6,1127.5 785.6,1127.7 787.6,1126.8 789.6,1127.4 791.6,1127.7 793.6,1127.6 795.6,1127.3 797.6,1128.1 798.5,1128 799.1,1128.8 799.6,1104.6 800.5,1153.8 801.2,1129.5 801.9,1128 803.6,1127.8 805.6,1128.4 807.6,1128.3 809.6,1129.3 811.6,1129.5 813.6,1128.3 815.6,1129.7 817.6,1129.8 819.6,1129.4 821.6,1129.2 823.6,1129.9 825.6,1129.8 827.6,1130.4 829.6,1130.7 831.6,1130 832.2,1130.8 832.7,1106.4 833.6,1155.4 834.3,1131.5 834.9,1130 835.6,1129.8 837.6,1129.7 839.6,1130 841.6,1130.3 843.6,1130.5 845.6,1130.1 847.6,1129.7 849.6,1129.7 851.6,1130.6 853.6,1130" fill="none" stroke="#2ee82e" stroke-width="1.4" stroke-linejoin="round" /><polyline points="863.6,1127.8 865.6,1127.2 867.6,1127.2 869.6,1128.5 871.6,1127.8 873.6,1128.8 875.6,1130.3 877.6,1129.8 879.6,1131.8 881.6,1132 883.6,1132.2 883.6,1132.9 884.2,1133.7 884.8,1109 885.7,1161.7 886.4,1135.5 887,1134 887.6,1133.8 889.6,1134.5 891.6,1134.7 893.6,1135 895.6,1134.2 897.6,1134.1 899.6,1134.8 901.6,1133.3 903.6,1132.6 905.6,1131.2 907.6,1130.7 909.6,1131 911.6,1129.9 913.6,1129 915.6,1127.7 916.5,1128.3 917.1,1129.1 917.6,1105 918.5,1154.1 919.2,1129.5 919.9,1128 921.6,1127.8 923.6,1128.5 925.6,1128.1 927.6,1128.4 929.6,1129 931.6,1128.7 933.6,1128.8 935.6,1128 937.6,1128.1 939.6,1129.4 941.6,1128.8 943.6,1129.6 945.6,1129.5 947.6,1129.6 948.7,1128.8 949.3,1129.6 949.9,1105.4 950.8,1155.5 951.5,1130.1 952.1,1128.6 953.6,1128.2 955.6,1129 957.6,1128.4 959.6,1128.4 961.6,1127 963.6,1127.8 965.6,1127.1 967.6,1127.9 969.6,1127.8 971.6,1126.5" fill="none" stroke="#2ee82e" stroke-width="1.4" stroke-linejoin="round" /><polyline points="981.6,1130.5 983.6,1131.9 985.6,1132.4 987.6,1132.2 989.6,1132 991.6,1132.7 993.6,1134.5 995.6,1135.2 997.6,1134.5 999.6,1135.5 1001.6,1136.7 1002.7,1137.2 1003.3,1138 1003.9,1112.4 1004.8,1163.6 1005.5,1139.8 1006.1,1138.3 1007.6,1138.3 1009.6,1139.6 1011.6,1139.3 1013.6,1140.1 1015.6,1139.1 1017.6,1139.4 1019.6,1139.8 1021.6,1138.7 1023.6,1137 1025.6,1136.2 1027.6,1136.2 1029.6,1134.8 1031.6,1133.7 1033.6,1132.9 1034.5,1132.5 1035.1,1133.3 1035.6,1108 1036.5,1159.4 1037.2,1132.3 1037.8,1130.8 1039.6,1130.2 1041.6,1130 1043.6,1128.2 1045.6,1128.3 1047.6,1127.4 1049.6,1127.8 1051.6,1128.1 1053.6,1127.2 1055.6,1127.7 1057.6,1128.1 1059.6,1127.1 1061.6,1128.4 1063.6,1127.9 1065.6,1128.1 1066.3,1128.1 1066.9,1128.9 1067.4,1101.6 1068.3,1154 1069,1129.7 1069.7,1128.2 1071.6,1128.5 1073.6,1128.8 1075.6,1127.7 1077.6,1128.5 1079.6,1127.8 1081.6,1128.4 1083.6,1128.4 1085.6,1127.9 1087.6,1128.4 1089.6,1128.6" fill="none" stroke="#2ee82e" stroke-width="1.4" stroke-linejoin="round" /><polyline points="1099.6,1137 1101.6,1136.8 1103.6,1136.6 1105.6,1137.7 1107.6,1136.9 1109.6,1137.6 1111.6,1138.4 1113.6,1137.6 1115.6,1138.3 1117.6,1138.9 1119.6,1139.4 1121.4,1139.6 1122,1140.4 1122.6,1112.7 1123.5,1166.3 1124.2,1141.6 1124.8,1140.1 1125.6,1139.8 1127.6,1140.4 1129.6,1139.9 1131.6,1140 1133.6,1140.4 1135.6,1140.2 1137.6,1141.7 1139.6,1140.8 1141.6,1141.1 1143.6,1142.3 1145.6,1142.6 1147.6,1142.2 1149.6,1143.6 1151.6,1143.7 1152.5,1143.7 1153.1,1144.5 1153.6,1120 1154.5,1173.1 1155.2,1145.8 1155.8,1144.3 1157.6,1144.5 1159.6,1145.2 1161.6,1144.8 1163.6,1145.1 1165.6,1146.2 1167.6,1145.5 1169.6,1146.3 1171.6,1145.1 1173.6,1145.1 1175.6,1144.9 1177.6,1146 1179.6,1145.8 1181.6,1144.9 1183.6,1145 1185.6,1146.3 1186.2,1145.7 1186.8,1146.5 1187.4,1122.4 1188.3,1172.6 1189,1147.3 1189.6,1145.8 1191.6,1145.8 1193.6,1146.4 1195.6,1145.1 1197.6,1146 1199.6,1145.3 1201.6,1146.2 1203.6,1146.1 1205.6,1146.1 1207.6,1145.4" fill="none" stroke="#2ee82e" stroke-width="1.4" stroke-linejoin="round" /><polyline points="1217.6,1129.6 1219.6,1129.4 1221.6,1128.4 1223.6,1129.4 1225.6,1129.9 1227.6,1128.9 1229.6,1130.2 1231.6,1129.6 1233.6,1129.9 1235.6,1129.8 1237.6,1131.3 1239.6,1131.2 1240.3,1131.3 1240.9,1132.1 1241.4,1108 1242.3,1159.6 1243.1,1133.3 1243.7,1131.8 1245.6,1132.8 1247.6,1132.4 1249.6,1132.3 1251.6,1132.7 1253.6,1133.1 1255.6,1134.4 1257.6,1133.5 1259.6,1133.6 1261.6,1134.2 1263.6,1134 1265.6,1134.7 1267.6,1135.1 1269.6,1135.2 1270.5,1135 1271.1,1135.8 1271.6,1111.6 1272.5,1160.3 1273.2,1136.5 1273.8,1135 1275.6,1134.5 1277.6,1134.5 1279.6,1135.1 1281.6,1135.5 1283.6,1135.2 1285.6,1135.5 1287.6,1136.1 1289.6,1135 1291.6,1135.2 1293.6,1135.7 1295.6,1135.9 1297.6,1136.6 1299.6,1136.1 1301.6,1136.4 1301.8,1136.2 1302.4,1137 1302.9,1111.3 1303.8,1164 1304.6,1137.9 1305.2,1136.4 1305.6,1136.3 1307.6,1136.9 1309.6,1137.1 1311.6,1136.3 1313.6,1136.1 1315.6,1136.4 1317.6,1136.7 1319.6,1137.6 1321.6,1136.6 1323.6,1137.2 1325.6,1137.2" fill="none" stroke="#2ee82e" stroke-width="1.4" stroke-linejoin="round" /><polyline points="1335.6,1131.3 1337.6,1132.8 1339.6,1131.9 1341.6,1132.4 1343.6,1132.6 1345.6,1132 1347.6,1132.4 1349.6,1132.4 1351.6,1132.2 1353.6,1132.3 1355.6,1133.6 1357.6,1133.3 1358.3,1133.5 1358.9,1134.3 1359.5,1107.5 1360.4,1160.2 1361.1,1135.4 1361.7,1133.9 1363.6,1134.7 1365.6,1133.6 1367.6,1134.2 1369.6,1134.2 1371.6,1135.7 1373.6,1135.6 1375.6,1136 1377.6,1135.5 1379.6,1135 1381.6,1135.6 1383.6,1135.4 1385.6,1135.2 1387.6,1136.1 1388.5,1136 1389.1,1136.8 1389.6,1112.6 1390.5,1163.6 1391.2,1137.5 1391.8,1136 1393.6,1135.8 1395.6,1135.6 1397.6,1136.4 1399.6,1137.3 1401.6,1137.5 1403.6,1137 1405.6,1136.6 1407.6,1137.9 1409.6,1137.1 1411.6,1138.1 1413.6,1137.6 1415.6,1139.2 1417.6,1138.7 1419.6,1138.7 1419.8,1138.8 1420.4,1139.6 1420.9,1112.4 1421.8,1166.3 1422.6,1140.5 1423.2,1139 1423.6,1138.6 1425.6,1139.1 1427.6,1139.7 1429.6,1138.5 1431.6,1137.8 1433.6,1137.8 1435.6,1137.9 1437.6,1136.6 1439.6,1136.6 1441.6,1136.8 1443.6,1135.7" fill="none" stroke="#2ee82e" stroke-width="1.4" stroke-linejoin="round" /><polyline points="1453.6,1136.1 1455.6,1136 1457.6,1135.7 1459.6,1136.5 1461.6,1135.8 1463.6,1136.2 1465.6,1136.8 1467.6,1136.7 1469.6,1136 1471.6,1136.3 1473.6,1137.2 1475.6,1137.5 1475.9,1137.1 1476.5,1137.9 1477,1113.6 1477.9,1162.6 1478.7,1138.9 1479.3,1137.4 1479.6,1136.8 1481.6,1138.4 1483.6,1137.2 1485.6,1137.4 1487.6,1137.4 1489.6,1138.1 1491.6,1138.6 1493.6,1139.1 1495.6,1138.1 1497.6,1139 1499.6,1138.2 1501.6,1139 1503.6,1138.6 1505.6,1138.8 1506.5,1139 1507.1,1139.8 1507.6,1112.2 1508.5,1165.8 1509.2,1140.4 1509.8,1138.9 1511.6,1138 1513.6,1138.8 1515.6,1137.5 1517.6,1138 1519.6,1136.9 1521.6,1136.8 1523.6,1136.3 1525.6,1135.6 1527.6,1135.7 1529.6,1135.4 1531.6,1134 1533.6,1133.9 1535.6,1134.6 1537.6,1133.4 1539.1,1134 1539.6,1134.8 1540.2,1109.2 1541.1,1163.6 1541.8,1136.5 1542.4,1135 1543.6,1138.4 1545.6,1145.5 1547.6,1147.7 1549.6,1146.1 1551.6,1146.5 1553.6,1146.1 1555.6,1145.4 1557.6,1143.7 1559.6,1144.9 1561.6,1143.7" fill="none" stroke="#2ee82e" stroke-width="1.4" stroke-linejoin="round" /><polyline points="1571.6,1139.3 1573.6,1139.2 1575.6,1139.4 1577.6,1138.3 1579.6,1138.7 1581.6,1137.8 1583.6,1138.8 1585.6,1138.6 1587.6,1138.5 1589.6,1137 1591.6,1137.5 1593.6,1137.2 1594,1137.1 1594.6,1137.9 1595.2,1112.4 1596.1,1165 1596.8,1138.2 1597.4,1136.7 1597.6,1136 1599.6,1135.9 1601.6,1136.8 1603.6,1136.4 1605.6,1135.1 1607.6,1135.8 1609.6,1135.3 1611.6,1134.6 1613.6,1134.9 1615.6,1134 1617.6,1133.9 1619.6,1133.4 1621.6,1134.3 1623.6,1134.2 1624.5,1134 1625.1,1134.8 1625.6,1108.3 1626.5,1163.5 1627.2,1138.7 1627.8,1137.2 1629.6,1142.3 1631.6,1146.3 1633.6,1146.9 1635.6,1146.4 1637.6,1146.7 1639.6,1145.6 1641.6,1145.3 1643.6,1144.9 1645.6,1143.7 1647.6,1143.5 1649.6,1142 1651.6,1141.9 1653.6,1142.6 1655.6,1141.4 1657.5,1141.4 1658,1142.2 1658.6,1115.5 1659.5,1166.7 1660.2,1141.2 1660.8,1139.7 1661.6,1138.5 1663.6,1137 1665.6,1136.7 1667.6,1134.2 1669.6,1133.5 1671.6,1132.5 1673.6,1132.6 1675.6,1133 1677.6,1138.5 1679.6,1141.2" fill="none" stroke="#2ee82e" stroke-width="1.4" stroke-linejoin="round" /><polyline points="1689.6,1135.2 1691.6,1136.5 1693.6,1136.5 1695.6,1135 1697.6,1134.5 1699.6,1134.6 1701.6,1133.9 1703.6,1134 1705.6,1133.4 1707.6,1133.6 1709.6,1133.8 1711.6,1136.2 1711.9,1136.6 1712.4,1137.4 1713,1111.1 1713.9,1169 1714.6,1142.2 1715.2,1140.7 1715.6,1140.8 1717.6,1144 1719.6,1145.5 1721.6,1146.3 1723.6,1147.7 1725.6,1147.4 1727.6,1146.6 1729.6,1145.3 1731.6,1144.9 1733.6,1144.2 1735.6,1143.5 1737.6,1142.2 1739.6,1142.4 1741.6,1142.6 1742.5,1142 1743.1,1142.8 1743.6,1116.6 1744.5,1169.5 1745.2,1143.1 1745.8,1141.6 1747.6,1141.2 1749.6,1140.2 1751.6,1138.5 1753.6,1137 1755.6,1135.7 1757.6,1134.4 1759.6,1133.1 1761.6,1131.9 1763.6,1132.5 1765.6,1134.3 1767.6,1137.8 1769.6,1141.3 1771.6,1144.9 1773.6,1148 1775.6,1150.8 1775.8,1151.2 1776.4,1152 1776.9,1124.8 1777.8,1179.4 1778.5,1153.4 1779.2,1151.9 1779.6,1151.5 1781.6,1152 1783.6,1151.8 1785.6,1150.5 1787.6,1150.6 1789.6,1150.6 1791.6,1149.4 1793.6,1148.7 1795.6,1149.3 1797.6,1148.8" fill="none" stroke="#2ee82e" stroke-width="1.4" stroke-linejoin="round" /><polyline points="509.6,1225.7 511.6,1225.4 513.6,1224.4 515.6,1225 517.6,1223.1 519.6,1222.7 521.6,1221.8 523.6,1221.1 525.6,1221.2 527.6,1220.7 529.6,1219.5 529.9,1219.4 530.5,1220.2 531,1196.4 531.9,1243.8 532.7,1219.7 533.3,1218.2 533.6,1218.6 535.6,1217.4 537.6,1217.6 539.6,1216.7 541.6,1216.2 543.6,1215.5 545.6,1215.7 547.6,1214.6 549.6,1213.5 551.6,1210.9 553.6,1209.8 555.6,1210.9 557.6,1212.1 559.6,1216.6 561.6,1219.7 562.5,1221.5 563.1,1222.3 563.6,1196.8 564.5,1248.5 565.2,1224.6 565.9,1223.1 567.6,1223.8 569.6,1224.4 571.6,1224.6 573.6,1226.6 575.6,1227 577.6,1227.5 579.6,1228.6 581.6,1228.3 583.6,1227 585.6,1226.8 587.6,1224.9 589.6,1224.5 591.6,1222.8 593.6,1222.7 594.3,1222.2 594.9,1223 595.5,1199.2 596.4,1248.4 597.1,1222.7 597.7,1221.2 599.6,1221.7 601.6,1220.8 603.6,1218.9 605.6,1218.2 607.6,1216.4 609.6,1214.5 611.6,1212.3 613.6,1211 615.6,1210.3 617.6,1209.3" fill="none" stroke="#2ee82e" stroke-width="1.4" stroke-linejoin="round" /><polyline points="627.6,1217.8 629.6,1217.5 631.6,1213.3 633.6,1211 635.6,1209.5 637.6,1211.5 639.6,1214.1 641.6,1217.4 643.6,1222.4 645.6,1224.5 647.6,1226.3 649.5,1226.2 650.1,1227 650.6,1202 651.5,1252.4 652.2,1228.6 652.9,1227.1 653.6,1227.2 655.6,1228.4 657.6,1227.3 659.6,1227.5 661.6,1227.3 663.6,1226.8 665.6,1227.2 667.6,1226 669.6,1225.1 671.6,1224.7 673.6,1224.5 675.6,1223.5 677.6,1222.7 679.6,1222.6 680.5,1222.2 681.1,1223 681.6,1198 682.5,1250.7 683.2,1223.5 683.9,1222 685.6,1221.9 687.6,1221 689.6,1220 691.6,1218.3 693.6,1217.4 695.6,1216.6 697.6,1214.2 699.6,1212.9 701.6,1212 703.6,1211 705.6,1209.7 707.6,1209.9 709.6,1210.3 711.6,1209 712.2,1209.7 712.8,1210.5 713.3,1185.5 714.2,1234.6 715,1210.7 715.6,1209.2 715.6,1208.6 717.6,1209.2 719.6,1209.1 721.6,1207.3 723.6,1206.9 725.6,1207.4 727.6,1206.4 729.6,1206.7 731.6,1205.5 733.6,1206 735.6,1205.5" fill="none" stroke="#2ee82e" stroke-width="1.4" stroke-linejoin="round" /><polyline points="745.6,1230 747.6,1229.6 749.6,1229.7 751.6,1228.4 753.6,1228.9 755.6,1227.3 757.6,1227.2 759.6,1226.6 761.6,1225.8 763.6,1224.2 765.6,1224.3 766.5,1223.5 767.1,1224.3 767.6,1198.5 768.5,1251.4 769.2,1224.5 769.8,1223 771.6,1223.8 773.6,1222.1 775.6,1222.6 777.6,1221.9 779.6,1220.7 781.6,1219.5 783.6,1218.3 785.6,1217.6 787.6,1217.4 789.6,1215.5 791.6,1214.3 793.6,1214 795.6,1213 797.6,1212.7 798.5,1212.3 799.1,1213.1 799.6,1185.9 800.5,1239.5 801.2,1213.5 801.9,1212 803.6,1211.9 805.6,1211.4 807.6,1210.8 809.6,1211.7 811.6,1211.1 813.6,1210.1 815.6,1210.1 817.6,1209.9 819.6,1209.5 821.6,1209.9 823.6,1209.5 825.6,1208.7 827.6,1208.8 829.6,1209.4 831.6,1209.5 832.1,1210.3 832.7,1183.1 833.6,1235.7 834.3,1211.5 834.9,1210 835.6,1209.6 837.6,1211.3 839.6,1210.3 841.6,1211.4 843.6,1211.5 845.6,1212.2 847.6,1211.8 849.6,1212.3 851.6,1213.7 853.6,1213.5" fill="none" stroke="#2ee82e" stroke-width="1.4" stroke-linejoin="round" /><polyline points="863.6,1219.3 865.6,1219.3 867.6,1220.4 869.6,1219.5 871.6,1219.2 873.6,1218.4 875.6,1217.6 877.6,1216.1 879.6,1215.2 881.6,1214.8 883.6,1213.9 884.1,1214.5 884.7,1215.3 885.3,1191.4 886.2,1239.5 886.9,1215.5 887.5,1214 887.6,1213.5 889.6,1214.3 891.6,1213.9 893.6,1213.1 895.6,1213.4 897.6,1214.2 899.6,1214 901.6,1213.6 903.6,1213.4 905.6,1213.5 907.6,1212.8 909.6,1212.3 911.6,1212.4 913.6,1211.8 915.6,1211.3 916.5,1212.1 917.1,1212.9 917.6,1188.3 918.5,1240.9 919.2,1213.5 919.9,1212 921.6,1211.7 923.6,1212.1 925.6,1211.7 927.6,1211.8 929.6,1212.3 931.6,1212.8 933.6,1214 935.6,1213.5 937.6,1214.2 939.6,1214.2 941.6,1214.1 943.6,1213.7 945.6,1213.9 947.6,1213.8 948.8,1214.2 949.4,1215 950,1189.9 950.9,1240.4 951.6,1216 952.2,1214.5 953.6,1214.8 955.6,1215.4 957.6,1215.5 959.6,1214.9 961.6,1214.9 963.6,1214.8 965.6,1215.9 967.6,1215.5 969.6,1215.2 971.6,1215.7" fill="none" stroke="#2ee82e" stroke-width="1.4" stroke-linejoin="round" /><polyline points="981.6,1220.5 983.6,1220 985.6,1219.9 987.6,1218.6 989.6,1218.4 991.6,1218.3 993.6,1217.9 995.6,1216.6 997.6,1217.1 999.6,1215.8 1001.6,1215.4 1002.2,1215.3 1002.7,1216.1 1003.3,1188.6 1004.2,1239.9 1004.9,1215.9 1005.5,1214.4 1005.6,1214.4 1007.6,1214.5 1009.6,1213.3 1011.6,1213.4 1013.6,1213.4 1015.6,1213.5 1017.6,1213.1 1019.6,1213.4 1021.6,1214.2 1023.6,1215 1025.6,1215.7 1027.6,1215.7 1029.6,1217 1031.6,1218 1033.6,1218.3 1034.5,1219.1 1035.1,1219.9 1035.6,1193.8 1036.5,1248.3 1037.2,1222 1037.8,1220.5 1039.6,1220.5 1041.6,1222.4 1043.6,1221.5 1045.6,1222.7 1047.6,1222.7 1049.6,1222.3 1051.6,1222.6 1053.6,1222.2 1055.6,1222.2 1057.6,1222.5 1059.6,1220.6 1061.6,1220.3 1063.6,1220.1 1065.6,1219.2 1066.1,1218.8 1066.7,1219.6 1067.2,1192.9 1068.1,1244.3 1068.8,1218.9 1069.5,1217.4 1069.6,1216.5 1071.6,1216 1073.6,1215.3 1075.6,1215.4 1077.6,1213.9 1079.6,1213 1081.6,1212.7 1083.6,1212.2 1085.6,1211.3 1087.6,1211.9 1089.6,1211.9" fill="none" stroke="#2ee82e" stroke-width="1.4" stroke-linejoin="round" /><polyline points="1099.6,1220 1101.6,1220.1 1103.6,1220.5 1105.6,1220.1 1107.6,1220.1 1109.6,1220 1111.6,1219.2 1113.6,1219.8 1115.6,1219.7 1117.6,1218.8 1119.6,1219.8 1120.9,1219.3 1121.5,1220.1 1122,1194.3 1122.9,1246.9 1123.7,1220.7 1124.3,1219.2 1125.6,1218.7 1127.6,1219.1 1129.6,1219 1131.6,1219.3 1133.6,1219.3 1135.6,1218.7 1137.6,1219.4 1139.6,1218.6 1141.6,1218.7 1143.6,1219.3 1145.6,1218.2 1147.6,1218.8 1149.6,1219.2 1151.6,1217.8 1152.5,1218.5 1153.1,1219.3 1153.6,1194.1 1154.5,1246.1 1155.2,1219.9 1155.8,1218.4 1157.6,1218.8 1159.6,1218.5 1161.6,1218.2 1163.6,1218.5 1165.6,1218.4 1167.6,1217.1 1169.6,1217.5 1171.6,1217.5 1173.6,1217.4 1175.6,1217.6 1177.6,1217.2 1179.6,1217 1181.6,1215.5 1183.6,1215.9 1185.1,1215.9 1185.7,1216.7 1186.2,1191.4 1187.1,1243 1187.8,1217 1188.5,1215.5 1189.6,1216 1191.6,1215.9 1193.6,1215.4 1195.6,1214.6 1197.6,1215.1 1199.6,1214.6 1201.6,1214.8 1203.6,1214.6 1205.6,1215 1207.6,1214.7" fill="none" stroke="#2ee82e" stroke-width="1.4" stroke-linejoin="round" /><polyline points="1217.6,1215 1219.6,1214.3 1221.6,1214.6 1223.6,1215.8 1225.6,1214.8 1227.6,1214.9 1229.6,1215.9 1231.6,1215.1 1233.6,1215.9 1235.6,1215.9 1237.6,1216.6 1239.6,1216.1 1240.4,1216.2 1241,1217 1241.5,1191.2 1242.4,1244.1 1243.1,1217.9 1243.8,1216.4 1245.6,1216.3 1247.6,1216.4 1249.6,1216.7 1251.6,1216.3 1253.6,1216.6 1255.6,1216.8 1257.6,1217.2 1259.6,1218.1 1261.6,1218.4 1263.6,1217.6 1265.6,1217.5 1267.6,1217.6 1269.6,1218.2 1270.5,1218 1271.1,1218.8 1271.6,1192.7 1272.5,1243.7 1273.2,1220 1273.8,1218.5 1275.6,1219.4 1277.6,1220.1 1279.6,1222.3 1281.6,1223.2 1283.6,1224 1285.6,1225.5 1287.6,1224.3 1289.6,1224.7 1291.6,1225 1293.6,1224.3 1295.6,1224.5 1297.6,1223.2 1299.6,1223.7 1301.6,1221.8 1303,1222.2 1303.5,1223 1304.1,1195.4 1305,1247.6 1305.7,1222.8 1306.3,1221.3 1307.6,1221.6 1309.6,1220.3 1311.6,1219.2 1313.6,1219.1 1315.6,1219.9 1317.6,1219.1 1319.6,1218.8 1321.6,1218.7 1323.6,1217.3 1325.6,1217.7" fill="none" stroke="#2ee82e" stroke-width="1.4" stroke-linejoin="round" /><polyline points="1335.6,1216.9 1337.6,1217.1 1339.6,1217.1 1341.6,1217 1343.6,1218.3 1345.6,1217.9 1347.6,1217.9 1349.6,1219.1 1351.6,1218.7 1353.6,1219.4 1355.6,1219.4 1356.9,1220.3 1357.5,1221.1 1358,1193.7 1358.9,1246.8 1359.6,1222.7 1360.2,1221.2 1361.6,1221.1 1363.6,1222.8 1365.6,1222.7 1367.6,1223 1369.6,1223.6 1371.6,1224 1373.6,1224.1 1375.6,1224.2 1377.6,1224.1 1379.6,1224.1 1381.6,1224.4 1383.6,1224.8 1385.6,1224.2 1387.6,1225.2 1388.5,1224.9 1389.1,1225.7 1389.6,1197.9 1390.5,1251.8 1391.2,1226.1 1391.8,1224.6 1393.6,1224.1 1395.6,1223.7 1397.6,1223.6 1399.6,1223.6 1401.6,1222.8 1403.6,1223.5 1405.6,1222.5 1407.6,1221.5 1409.6,1221.1 1411.6,1222 1413.6,1221.1 1415.6,1220.3 1417.6,1220.5 1419.6,1219.1 1421.6,1220.1 1422.2,1219.3 1422.8,1220.1 1423.3,1195.1 1424.2,1244.1 1424.9,1220.2 1425.6,1218.7 1425.6,1219.4 1427.6,1218.7 1429.6,1217.4 1431.6,1217.7 1433.6,1218.1 1435.6,1217.5 1437.6,1216.8 1439.6,1216.7 1441.6,1216.3 1443.6,1217" fill="none" stroke="#2ee82e" stroke-width="1.4" stroke-linejoin="round" /><polyline points="1453.6,1225.6 1455.6,1224.9 1457.6,1225.2 1459.6,1223.8 1461.6,1224.4 1463.6,1222.7 1465.6,1222.9 1467.6,1222 1469.6,1221.5 1471.6,1220.4 1473.6,1218.7 1474,1219.3 1474.6,1220.1 1475.1,1192.7 1476,1247 1476.8,1219.9 1477.4,1218.4 1477.6,1218 1479.6,1218.4 1481.6,1218.7 1483.6,1218.3 1485.6,1217.3 1487.6,1217.8 1489.6,1217.8 1491.6,1217.5 1493.6,1217.6 1495.6,1218 1497.6,1217.8 1499.6,1217.6 1501.6,1217.9 1503.6,1218.7 1505.6,1218.2 1506.5,1218 1507.1,1218.8 1507.6,1193 1508.5,1246.1 1509.2,1219.5 1509.8,1218 1511.6,1218.4 1513.6,1218.7 1515.6,1217.2 1517.6,1218.6 1519.6,1217.4 1521.6,1217.5 1523.6,1218.4 1525.6,1218.4 1527.6,1218.2 1529.6,1218 1531.6,1218.4 1533.6,1217.9 1535.6,1217.5 1537.6,1217.6 1538.8,1218 1539.4,1218.8 1539.9,1194.5 1540.8,1246.8 1541.6,1219.5 1542.2,1218 1543.6,1217.4 1545.6,1217.3 1547.6,1218.7 1549.6,1218.7 1551.6,1217.8 1553.6,1217.9 1555.6,1217.6 1557.6,1218.5 1559.6,1218 1561.6,1217.5" fill="none" stroke="#2ee82e" stroke-width="1.4" stroke-linejoin="round" /><polyline points="1571.6,1217.7 1573.6,1218.2 1575.6,1218 1577.6,1218 1579.6,1218.3 1581.6,1218 1583.6,1218.7 1585.6,1217.9 1587.6,1218.5 1589.6,1218.7 1591.6,1218.2 1593.6,1218.1 1594.1,1218 1594.7,1218.8 1595.3,1194.8 1596.2,1244.8 1596.9,1219.5 1597.5,1218 1597.6,1218.5 1599.6,1218.3 1601.6,1217.5 1603.6,1217.9 1605.6,1217.5 1607.6,1217.2 1609.6,1218.3 1611.6,1217.7 1613.6,1217.6 1615.6,1217.2 1617.6,1217.2 1619.6,1218.3 1621.6,1217.8 1623.6,1217.9 1624.5,1218 1625.1,1218.8 1625.6,1194.1 1626.5,1245.6 1627.2,1219.5 1627.8,1218 1629.6,1218.3 1631.6,1218.7 1633.6,1218.3 1635.6,1217.6 1637.6,1218.8 1639.6,1217.5 1641.6,1218.1 1643.6,1218.2 1645.6,1217.7 1647.6,1218.6 1649.6,1218.2 1651.6,1218.3 1653.6,1217.4 1655.6,1218.5 1657.6,1217.7 1658.3,1218 1658.8,1218.8 1659.4,1193.6 1660.3,1244.2 1661,1219.5 1661.6,1218 1663.6,1218.2 1665.6,1218.4 1667.6,1217.7 1669.6,1217.6 1671.6,1217.7 1673.6,1218.8 1675.6,1218.3 1677.6,1218 1679.6,1218.1" fill="none" stroke="#2ee82e" stroke-width="1.4" stroke-linejoin="round" /><polyline points="1689.6,1217.6 1691.6,1217.8 1693.6,1217 1695.6,1216.9 1697.6,1217 1699.6,1216.8 1701.6,1217.5 1703.6,1217.2 1705.6,1216.5 1707.6,1217.8 1709.6,1217.2 1711.4,1217.1 1712,1217.9 1712.6,1193.8 1713.5,1242.6 1714.2,1218.7 1714.8,1217.2 1715.6,1217.6 1717.6,1217.3 1719.6,1217.4 1721.6,1217.4 1723.6,1216.7 1725.6,1216.8 1727.6,1217.8 1729.6,1217.2 1731.6,1216.9 1733.6,1218 1735.6,1217.9 1737.6,1218 1739.6,1217.4 1741.6,1217 1742.5,1217.6 1743.1,1218.4 1743.6,1192.3 1744.5,1245.1 1745.2,1219.2 1745.8,1217.7 1747.6,1218.1 1749.6,1217.3 1751.6,1218 1753.6,1218.1 1755.6,1217.5 1757.6,1217.1 1759.6,1218 1761.6,1218.4 1763.6,1218.1 1765.6,1218.7 1767.6,1217.5 1769.6,1218.3 1771.6,1217.9 1773.6,1218.1 1774.3,1218 1774.8,1218.8 1775.4,1191.1 1776.3,1245.5 1777,1219.5 1777.6,1218 1779.6,1217.7 1781.6,1217.6 1783.6,1218.3 1785.6,1218.7 1787.6,1219.5 1789.6,1219.3 1791.6,1219.5 1793.6,1220 1795.6,1220.1 1797.6,1219.9" fill="none" stroke="#2ee82e" stroke-width="1.4" stroke-linejoin="round" /><polyline points="509.6,1299.3 511.6,1299.9 513.6,1299.8 515.6,1299.4 517.6,1300.1 519.6,1298.7 521.6,1299.4 523.6,1299.9 525.6,1299.8 527.6,1298.7 529.6,1299.6 530.3,1299.1 530.9,1299.9 531.4,1274.6 532.3,1326.7 533,1300.4 533.6,1298.9 535.6,1298.9 537.6,1299.5 539.6,1298.4 541.6,1298.9 543.6,1298.8 545.6,1299.3 547.6,1298.2 549.6,1298.2 551.6,1297.7 553.6,1298.6 555.6,1297.5 557.6,1298.7 559.6,1297.6 561.6,1297.7 562.5,1298.1 563.1,1298.9 563.6,1272.5 564.5,1325.1 565.2,1299.6 565.9,1298.1 567.6,1298.9 569.6,1298.1 571.6,1298.5 573.6,1297.8 575.6,1297.6 577.6,1297.8 579.6,1298.7 581.6,1297.4 583.6,1298.5 585.6,1298.5 587.6,1298.1 589.6,1297.4 591.6,1298.1 593.6,1298.3 595.5,1297.6 596.1,1298.4 596.6,1271.4 597.5,1323.9 598.3,1299.1 598.9,1297.6 599.6,1297.7 601.6,1297.1 603.6,1297.7 605.6,1298.2 607.6,1297.6 609.6,1296.8 611.6,1296.9 613.6,1297.6 615.6,1296.6 617.6,1296.6" fill="none" stroke="#2ee82e" stroke-width="1.4" stroke-linejoin="round" /><polyline points="627.6,1300.2 629.6,1300.1 631.6,1300.5 633.6,1299.3 635.6,1299.3 637.6,1300.4 639.6,1300.3 641.6,1298.9 643.6,1300.2 645.6,1299.7 647.6,1300 648.6,1299.4 649.2,1300.2 649.7,1273.7 650.6,1325.5 651.3,1300.7 652,1299.2 653.6,1299.5 655.6,1298.9 657.6,1298.4 659.6,1299.3 661.6,1299.1 663.6,1298.7 665.6,1298.3 667.6,1298.3 669.6,1299.2 671.6,1298.4 673.6,1297.9 675.6,1299.1 677.6,1299.1 679.6,1297.8 680.5,1298.3 681.1,1299.1 681.6,1273 682.5,1325.4 683.2,1299.8 683.9,1298.3 685.6,1297.9 687.6,1298.8 689.6,1298.3 691.6,1298.5 693.6,1298.9 695.6,1298.3 697.6,1298.9 699.6,1298.4 701.6,1298.6 703.6,1299.2 705.6,1299.1 707.6,1300 709.6,1298.9 711.6,1300.3 712.2,1299.6 712.8,1300.4 713.4,1273.5 714.3,1327.1 715,1301.3 715.6,1299.8 717.6,1299.5 719.6,1299.8 721.6,1299.5 723.6,1299.9 725.6,1301.1 727.6,1300.1 729.6,1300.9 731.6,1301.2 733.6,1300.8 735.6,1300" fill="none" stroke="#2ee82e" stroke-width="1.4" stroke-linejoin="round" /><polyline points="745.6,1298.9 747.6,1298.3 749.6,1299 751.6,1298.6 753.6,1299.5 755.6,1298.7 757.6,1299.6 759.6,1299.8 761.6,1299.8 763.6,1298.7 765.6,1299.8 766.8,1299.1 767.4,1299.9 767.9,1273.4 768.8,1326.2 769.5,1300.7 770.1,1299.2 771.6,1299.1 773.6,1299.8 775.6,1299.1 777.6,1299.3 779.6,1298.9 781.6,1299.7 783.6,1299.1 785.6,1299.9 787.6,1299.6 789.6,1299.2 791.6,1298.6 793.6,1299 795.6,1299.2 797.6,1299.1 798.5,1299.3 799.1,1300.1 799.6,1275.2 800.5,1325.3 801.2,1300.8 801.9,1299.3 803.6,1299.4 805.6,1298.5 807.6,1299.1 809.6,1299.8 811.6,1299.8 813.6,1299.3 815.6,1299.2 817.6,1298.9 819.6,1299.5 821.6,1299 823.6,1298.4 825.6,1298.4 827.6,1299 829.6,1298.2 830,1298.1 830.6,1298.9 831.1,1274.6 832,1323.4 832.7,1299.4 833.4,1297.9 833.6,1298.1 835.6,1297.5 837.6,1298 839.6,1297.6 841.6,1298.3 843.6,1298.3 845.6,1298.2 847.6,1298.1 849.6,1296.6 851.6,1296.7 853.6,1297.1" fill="none" stroke="#2ee82e" stroke-width="1.4" stroke-linejoin="round" /><polyline points="863.6,1298.4 865.6,1299.6 867.6,1299.3 869.6,1299.6 871.6,1299.4 873.6,1299.3 875.6,1298.6 877.6,1298.8 879.6,1298.7 881.6,1298.7 883.6,1299.5 885.6,1298.7 886,1298.8 886.5,1299.6 887.1,1275.3 888,1324.3 888.7,1300.2 889.3,1298.7 889.6,1299.2 891.6,1298.9 893.6,1298 895.6,1298.2 897.6,1298.7 899.6,1299 901.6,1298.1 903.6,1298.1 905.6,1298.3 907.6,1298.4 909.6,1298.3 911.6,1299.1 913.6,1298.6 915.6,1298 916.5,1298.4 917.1,1299.2 917.6,1272.4 918.5,1324.2 919.2,1299.9 919.9,1298.4 921.6,1298.1 923.6,1298.4 925.6,1297.8 927.6,1298.2 929.6,1297.6 931.6,1298.6 933.6,1298.9 935.6,1298.9 937.6,1298.4 939.6,1298.1 941.6,1298.3 943.6,1298.3 945.6,1297.7 947.6,1298.2 949.1,1298.1 949.7,1298.9 950.3,1274.5 951.2,1325.6 951.9,1299.6 952.5,1298.1 953.6,1298.1 955.6,1297.6 957.6,1298 959.6,1298.6 961.6,1298.3 963.6,1297.8 965.6,1297.6 967.6,1298.2 969.6,1298.1 971.6,1297.7" fill="none" stroke="#2ee82e" stroke-width="1.4" stroke-linejoin="round" /><polyline points="981.6,1299.9 983.6,1300.8 985.6,1300.1 987.6,1300.5 989.6,1300.5 991.6,1300.2 993.6,1300.1 995.6,1301.4 997.6,1300 999.6,1300.2 1001.6,1301.2 1002.9,1300.9 1003.5,1301.7 1004,1275.7 1004.9,1328.2 1005.6,1302.5 1006.3,1301 1007.6,1300.8 1009.6,1300.6 1011.6,1301.6 1013.6,1301.9 1015.6,1300.8 1017.6,1301.6 1019.6,1301.2 1021.6,1302.2 1023.6,1301.6 1025.6,1302.1 1027.6,1301.7 1029.6,1300.9 1031.6,1301.4 1033.6,1301.8 1034.5,1301.5 1035.1,1302.3 1035.6,1275.8 1036.5,1327.5 1037.2,1303 1037.8,1301.5 1039.6,1300.9 1041.6,1300.7 1043.6,1302.1 1045.6,1301.9 1047.6,1301.4 1049.6,1300.4 1051.6,1301.3 1053.6,1301.6 1055.6,1301.1 1057.6,1300.9 1059.6,1300.3 1061.6,1300.5 1063.6,1300.8 1065.6,1300 1066.7,1299.9 1067.3,1300.7 1067.8,1275.9 1068.7,1328.4 1069.4,1301.2 1070.1,1299.7 1071.6,1298.9 1073.6,1298.9 1075.6,1300.1 1077.6,1299.6 1079.6,1299.9 1081.6,1298.6 1083.6,1298.4 1085.6,1299.3 1087.6,1298.9 1089.6,1298.9" fill="none" stroke="#2ee82e" stroke-width="1.4" stroke-linejoin="round" /><polyline points="1099.6,1301.6 1101.6,1300.5 1103.6,1301.4 1105.6,1301.6 1107.6,1300.9 1109.6,1301.7 1111.6,1301.8 1113.6,1300.4 1115.6,1301.3 1117.6,1300.9 1119.6,1301 1120.2,1301.1 1120.8,1301.9 1121.3,1276.1 1122.2,1327.6 1122.9,1302.5 1123.5,1301 1123.6,1301.1 1125.6,1301.6 1127.6,1301.2 1129.6,1301.6 1131.6,1300.6 1133.6,1301.4 1135.6,1300.8 1137.6,1300.4 1139.6,1301.4 1141.6,1301.1 1143.6,1300.5 1145.6,1301.5 1147.6,1300.9 1149.6,1301.2 1151.6,1301.7 1152.5,1300.9 1153.1,1301.7 1153.6,1276 1154.5,1327.2 1155.2,1302.4 1155.8,1300.9 1157.6,1300.6 1159.6,1300.9 1161.6,1300.9 1163.6,1300.4 1165.6,1300.8 1167.6,1301.4 1169.6,1300.9 1171.6,1300.1 1173.6,1300.7 1175.6,1300.5 1177.6,1300.1 1179.6,1300.5 1181.6,1299.9 1183.6,1300.5 1185.6,1299.8 1185.8,1299.9 1186.3,1300.7 1186.9,1275.1 1187.8,1328.7 1188.5,1301.3 1189.1,1299.8 1189.6,1300.3 1191.6,1299.4 1193.6,1299.1 1195.6,1299.3 1197.6,1299 1199.6,1300.1 1201.6,1300.3 1203.6,1299.3 1205.6,1299 1207.6,1300" fill="none" stroke="#2ee82e" stroke-width="1.4" stroke-linejoin="round" /><polyline points="1217.6,1302.4 1219.6,1303 1221.6,1302.2 1223.6,1302.6 1225.6,1302.1 1227.6,1300.9 1229.6,1299.7 1231.6,1299.9 1233.6,1298.9 1235.6,1299.6 1237.6,1298.9 1239.6,1299.5 1240,1299.3 1240.6,1300.1 1241.2,1275.1 1242.1,1326.8 1242.8,1301.3 1243.4,1299.8 1243.6,1300.3 1245.6,1300.6 1247.6,1301.2 1249.6,1301.1 1251.6,1301.4 1253.6,1302.3 1255.6,1303.8 1257.6,1302.9 1259.6,1303.8 1261.6,1304.4 1263.6,1305 1265.6,1306.1 1267.6,1305.2 1269.6,1305.3 1270.5,1306 1271.1,1306.8 1271.6,1282.5 1272.5,1331.7 1273.2,1307.4 1273.8,1305.9 1275.6,1304.9 1277.6,1305 1279.6,1305.2 1281.6,1304.3 1283.6,1304.2 1285.6,1303.5 1287.6,1303 1289.6,1302.9 1291.6,1302.2 1293.6,1303.5 1295.6,1302.8 1297.6,1301.3 1299.6,1300.9 1301.6,1301.1 1302.2,1300.4 1302.8,1301.2 1303.3,1275.8 1304.2,1324.5 1305,1300.6 1305.6,1299.1 1305.6,1299.1 1307.6,1298.6 1309.6,1297.8 1311.6,1296 1313.6,1296.2 1315.6,1294.5 1317.6,1293.7 1319.6,1294.2 1321.6,1293.9 1323.6,1292.8 1325.6,1292.8" fill="none" stroke="#2ee82e" stroke-width="1.4" stroke-linejoin="round" /><polyline points="1335.6,1300.6 1337.6,1300.7 1339.6,1301.5 1341.6,1301.8 1343.6,1303.8 1345.6,1304 1347.6,1305.3 1349.6,1305.4 1351.6,1305.8 1353.6,1306.7 1355.6,1305.3 1357.6,1305.3 1357.7,1305.7 1358.3,1306.5 1358.8,1280.9 1359.7,1334.1 1360.4,1306.6 1361.1,1305.1 1361.6,1305.6 1363.6,1304.6 1365.6,1304.4 1367.6,1304.1 1369.6,1303.1 1371.6,1302.2 1373.6,1301.7 1375.6,1300.7 1377.6,1299.6 1379.6,1299.2 1381.6,1299.7 1383.6,1298.6 1385.6,1297.5 1387.6,1298.3 1388.5,1298 1389.1,1298.8 1389.6,1274.5 1390.5,1326.6 1391.2,1299.3 1391.8,1297.8 1393.6,1298.3 1395.6,1297.1 1397.6,1296.2 1399.6,1295.3 1401.6,1294.7 1403.6,1293.8 1405.6,1292.8 1407.6,1292.7 1409.6,1292.1 1411.6,1291.6 1413.6,1291.4 1415.6,1291.4 1417.6,1290.6 1419.6,1291.2 1420.4,1291.3 1420.9,1292.1 1421.5,1264.7 1422.4,1320.5 1423.1,1293 1423.7,1291.5 1425.6,1291.3 1427.6,1291.4 1429.6,1292.8 1431.6,1291.9 1433.6,1293 1435.6,1293.2 1437.6,1292.6 1439.6,1292.1 1441.6,1292.5 1443.6,1293.2" fill="none" stroke="#2ee82e" stroke-width="1.4" stroke-linejoin="round" /><polyline points="1453.6,1304.1 1455.6,1303.2 1457.6,1303.4 1459.6,1303.4 1461.6,1302.5 1463.6,1302.1 1465.6,1303.1 1467.6,1302.1 1469.6,1301.4 1471.6,1300.9 1473.6,1300.6 1475.6,1299.5 1475.6,1299.3 1476.2,1300.1 1476.7,1273.9 1477.6,1323.7 1478.3,1299.6 1479,1298.1 1479.6,1297.7 1481.6,1297 1483.6,1297.2 1485.6,1296.4 1487.6,1294.5 1489.6,1294.9 1491.6,1294 1493.6,1292.9 1495.6,1293 1497.6,1291.8 1499.6,1292.2 1501.6,1291.5 1503.6,1291.3 1505.6,1290.3 1506.5,1291 1507.1,1291.8 1507.6,1265.4 1508.5,1319.2 1509.2,1292.6 1509.8,1291.1 1511.6,1292 1513.6,1292.4 1515.6,1292.5 1517.6,1292.3 1519.6,1293.6 1521.6,1293.2 1523.6,1294.4 1525.6,1294.6 1527.6,1295.3 1529.6,1295.3 1531.6,1295.2 1533.6,1295.9 1535.6,1295.6 1537.6,1295.5 1538.5,1296 1539.1,1296.8 1539.7,1269.9 1540.6,1323.3 1541.3,1297.5 1541.9,1296 1543.6,1295.7 1545.6,1295.4 1547.6,1295.2 1549.6,1296.8 1551.6,1295.3 1553.6,1296.6 1555.6,1295.9 1557.6,1295.4 1559.6,1295.9 1561.6,1296" fill="none" stroke="#2ee82e" stroke-width="1.4" stroke-linejoin="round" /><polyline points="1571.6,1293.7 1573.6,1292.7 1575.6,1292.4 1577.6,1292.7 1579.6,1293.7 1581.6,1292.9 1583.6,1293.5 1585.6,1294 1587.6,1293.6 1589.6,1293 1591.6,1293.6 1591.6,1293.6 1592.2,1294.4 1592.8,1270.6 1593.7,1320 1594.4,1295.3 1595,1293.8 1595.6,1293.6 1597.6,1293.9 1599.6,1294.2 1601.6,1294.9 1603.6,1294.6 1605.6,1294.4 1607.6,1295 1609.6,1294.6 1611.6,1294.2 1613.6,1295 1615.6,1294.5 1617.6,1294.4 1619.6,1294.8 1621.6,1294.9 1623.6,1294.2 1624.5,1295 1625.1,1295.8 1625.6,1269.2 1626.5,1323.4 1627.2,1296.5 1627.8,1295 1629.6,1294.9 1631.6,1295.9 1633.6,1295.3 1635.6,1295.2 1637.6,1295.6 1639.6,1296.2 1641.6,1296.1 1643.6,1296.1 1645.6,1296.7 1647.6,1296.5 1649.6,1297.4 1651.6,1297.2 1653.6,1298 1655.6,1297.7 1657.1,1298.1 1657.7,1298.9 1658.2,1274.4 1659.1,1325.2 1659.8,1300.1 1660.5,1298.6 1661.6,1298.9 1663.6,1298.5 1665.6,1299.1 1667.6,1299.4 1669.6,1298.8 1671.6,1299.1 1673.6,1299.8 1675.6,1300.3 1677.6,1300.5 1679.6,1300.6" fill="none" stroke="#2ee82e" stroke-width="1.4" stroke-linejoin="round" /><polyline points="1689.6,1292.4 1691.6,1293.7 1693.6,1292.6 1695.6,1292.8 1697.6,1293.5 1699.6,1293.9 1701.6,1293 1703.6,1294.1 1705.6,1294.3 1707.6,1294.6 1709.6,1294.9 1711.6,1295.7 1711.9,1295.2 1712.5,1296 1713,1271.4 1713.9,1321.4 1714.6,1297.3 1715.3,1295.8 1715.6,1296.3 1717.6,1296.7 1719.6,1296.2 1721.6,1296.1 1723.6,1297.1 1725.6,1296.7 1727.6,1298 1729.6,1298 1731.6,1298.6 1733.6,1299 1735.6,1299 1737.6,1299.1 1739.6,1298.6 1741.6,1299.3 1742.5,1299 1743.1,1299.8 1743.6,1275.4 1744.5,1327.2 1745.2,1300.5 1745.8,1299 1747.6,1299.3 1749.6,1298.8 1751.6,1300 1753.6,1299.6 1755.6,1299.9 1757.6,1299.7 1759.6,1301 1761.6,1300.8 1763.6,1301.6 1765.6,1302.1 1767.6,1301.9 1769.6,1302.4 1771.6,1302.6 1773.6,1302.7 1775.6,1303.9 1776.4,1303.6 1777,1304.4 1777.5,1279.8 1778.4,1330.5 1779.1,1305.7 1779.8,1304.2 1781.6,1305.2 1783.6,1304.1 1785.6,1304.4 1787.6,1305.3 1789.6,1304.9 1791.6,1305.7 1793.6,1305.6 1795.6,1305.6 1797.6,1306.4" fill="none" stroke="#2ee82e" stroke-width="1.4" stroke-linejoin="round" /><polyline points="509.6,1381 511.6,1381.3 513.6,1381.3 515.6,1380.7 517.6,1380.8 519.6,1381.4 521.6,1381.2 523.6,1380.7 525.6,1380.4 527.6,1381.3 529.6,1380.7 531.2,1381 531.8,1381.8 532.3,1355 533.2,1407.8 534,1382.6 534.6,1381.1 535.6,1380.8 537.6,1380.8 539.6,1381.5 541.6,1381.5 543.6,1382 545.6,1381.5 547.6,1381.4 549.6,1382 551.6,1380.9 553.6,1381.6 555.6,1382.3 557.6,1381.2 559.6,1381 561.6,1380.9 562.5,1381.5 563.1,1382.3 563.6,1357.8 564.5,1408.1 565.2,1383 565.9,1381.5 567.6,1380.8 569.6,1382 571.6,1381.5 573.6,1382.2 575.6,1382.3 577.6,1381 579.6,1381.5 581.6,1381.5 583.6,1381.6 585.6,1381.3 587.6,1381.7 589.6,1382 591.6,1382.2 593.6,1382.4 595.6,1383.2 596.2,1382.5 596.8,1383.3 597.4,1357.2 598.3,1411.5 599,1384.1 599.6,1382.6 601.6,1382 603.6,1382.1 605.6,1383.4 607.6,1382.5 609.6,1382.9 611.6,1382.6 613.6,1383.5 615.6,1383.6 617.6,1383" fill="none" stroke="#2ee82e" stroke-width="1.4" stroke-linejoin="round" /><polyline points="627.6,1382.3 629.6,1383.2 631.6,1382.7 633.6,1382.6 635.6,1383.2 637.6,1382.4 639.6,1382.1 641.6,1382.9 643.6,1383.1 645.6,1382 647.6,1382.4 647.8,1382.6 648.3,1383.4 648.9,1358 649.8,1407.8 650.5,1384.1 651.1,1382.6 651.6,1383.2 653.6,1382.6 655.6,1382.4 657.6,1381.9 659.6,1382.1 661.6,1382.6 663.6,1383.1 665.6,1382.6 667.6,1383.1 669.6,1382.2 671.6,1381.6 673.6,1382 675.6,1382.1 677.6,1381.6 679.6,1381.6 680.5,1382.3 681.1,1383.1 681.6,1357.6 682.5,1410.5 683.2,1383.7 683.9,1382.2 685.6,1382.9 687.6,1382.8 689.6,1381.5 691.6,1381.4 693.6,1382.7 695.6,1381.4 697.6,1381.5 699.6,1381.3 701.6,1381.1 703.6,1380.7 705.6,1381.3 707.6,1381.7 709.6,1380.5 711.6,1381 712.6,1381 713.2,1381.8 713.7,1356.5 714.6,1407.7 715.3,1382.3 716,1380.8 717.6,1380.2 719.6,1381.1 721.6,1381.2 723.6,1381.1 725.6,1380.5 727.6,1379.8 729.6,1380.7 731.6,1379.6 733.6,1380.7 735.6,1379.9" fill="none" stroke="#2ee82e" stroke-width="1.4" stroke-linejoin="round" /><polyline points="745.6,1382.7 747.6,1383.1 749.6,1382.5 751.6,1383 753.6,1382.5 755.6,1383.3 757.6,1382.3 759.6,1382.5 761.6,1382.1 763.6,1382.4 765.6,1382.7 767.6,1382.2 768.2,1382.6 768.7,1383.4 769.3,1357.6 770.2,1409.2 770.9,1384 771.5,1382.5 771.6,1381.9 773.6,1383.1 775.6,1382.1 777.6,1381.9 779.6,1382.1 781.6,1382.8 783.6,1382.6 785.6,1382.8 787.6,1382.2 789.6,1381.8 791.6,1382 793.6,1381.3 795.6,1382.3 797.6,1382.5 798.5,1382 799.1,1382.8 799.6,1358.4 800.5,1409.1 801.2,1383.5 801.9,1382 803.6,1382.6 805.6,1382.4 807.6,1382.1 809.6,1382.3 811.6,1381.4 813.6,1381.7 815.6,1381 817.6,1382.1 819.6,1381.3 821.6,1380.7 823.6,1381.9 825.6,1381.2 827.6,1380.4 829.6,1381.3 830.3,1380.7 830.9,1381.5 831.5,1355.6 832.4,1408.3 833.1,1382 833.7,1380.5 835.6,1380.6 837.6,1380.5 839.6,1380.9 841.6,1379.9 843.6,1379.7 845.6,1380.1 847.6,1379.5 849.6,1380.3 851.6,1379.9 853.6,1379.4" fill="none" stroke="#2ee82e" stroke-width="1.4" stroke-linejoin="round" /><polyline points="863.6,1381.9 865.6,1382.5 867.6,1382.4 869.6,1381.6 871.6,1382.5 873.6,1382.9 875.6,1383.1 877.6,1382.4 879.6,1383.2 881.6,1381.9 883.6,1383.4 883.8,1382.7 884.4,1383.5 885,1356.4 885.9,1410.1 886.6,1384.4 887.2,1382.9 887.6,1383.2 889.6,1383.5 891.6,1383 893.6,1383.3 895.6,1383.7 897.6,1382.8 899.6,1382.8 901.6,1383.8 903.6,1384.1 905.6,1383.1 907.6,1383.6 909.6,1383.6 911.6,1383.3 913.6,1384.2 915.6,1383.3 916.5,1383.7 917.1,1384.5 917.6,1357.5 918.5,1410 919.2,1385.2 919.9,1383.7 921.6,1384.1 923.6,1383.5 925.6,1383.1 927.6,1384.5 929.6,1383.2 931.6,1383.2 933.6,1383.1 935.6,1383.6 937.6,1383.1 939.6,1383.4 941.6,1384.7 943.6,1383.6 945.6,1384.4 947.6,1383.6 948,1384.1 948.5,1384.9 949.1,1359.6 950,1412.8 950.7,1385.7 951.3,1384.2 951.6,1383.4 953.6,1383.4 955.6,1383.6 957.6,1385 959.6,1384.2 961.6,1383.9 963.6,1383.6 965.6,1384.6 967.6,1384.1 969.6,1383.9 971.6,1384.3" fill="none" stroke="#2ee82e" stroke-width="1.4" stroke-linejoin="round" /><polyline points="981.6,1382.6 983.6,1382.4 985.6,1382.6 987.6,1382.1 989.6,1382 991.6,1382.5 993.6,1381.5 995.6,1381.7 997.6,1381.5 999.6,1381.4 1001.6,1382.3 1003.6,1381.4 1003.6,1381.7 1004.2,1382.5 1004.7,1358.5 1005.6,1410.2 1006.4,1383 1007,1381.5 1007.6,1381.9 1009.6,1380.7 1011.6,1382 1013.6,1381.2 1015.6,1381.6 1017.6,1380.5 1019.6,1381.2 1021.6,1381.5 1023.6,1380.6 1025.6,1380.2 1027.6,1380.6 1029.6,1381.2 1031.6,1381.2 1033.6,1380.1 1034.5,1380.8 1035.1,1381.6 1035.6,1354 1036.5,1408.1 1037.2,1382.3 1037.8,1380.8 1039.6,1380.5 1041.6,1381.5 1043.6,1380.5 1045.6,1380.3 1047.6,1381.6 1049.6,1381.6 1051.6,1381.1 1053.6,1381.5 1055.6,1381.7 1057.6,1381.9 1059.6,1381 1061.6,1382 1063.6,1382.4 1065.6,1382.2 1066.5,1381.8 1067.1,1382.6 1067.6,1356.9 1068.5,1408.6 1069.2,1383.5 1069.9,1382 1071.6,1382.1 1073.6,1382 1075.6,1383 1077.6,1383.1 1079.6,1382.8 1081.6,1382.4 1083.6,1383 1085.6,1383 1087.6,1382.5 1089.6,1381.9" fill="none" stroke="#2ee82e" stroke-width="1.4" stroke-linejoin="round" /><polyline points="1099.6,1381.1 1101.6,1381.8 1103.6,1382.1 1105.6,1381.4 1107.6,1381.9 1109.6,1381.9 1111.6,1381.2 1113.6,1381.7 1115.6,1382.2 1117.6,1380.8 1119.6,1381 1121.3,1381.7 1121.9,1382.5 1122.4,1356.1 1123.3,1410.1 1124.1,1383.3 1124.7,1381.8 1125.6,1382.4 1127.6,1382 1129.6,1381.8 1131.6,1382.4 1133.6,1381.9 1135.6,1381.5 1137.6,1381.9 1139.6,1382.6 1141.6,1382.4 1143.6,1382.2 1145.6,1381.4 1147.6,1383 1149.6,1381.6 1151.6,1381.9 1152.5,1382.3 1153.1,1383.1 1153.6,1355.5 1154.5,1408.5 1155.2,1383.8 1155.8,1382.3 1157.6,1382.7 1159.6,1383 1161.6,1382.6 1163.6,1382.1 1165.6,1382.6 1167.6,1382.5 1169.6,1382.3 1171.6,1382.7 1173.6,1382.3 1175.6,1382.2 1177.6,1381.8 1179.6,1382.6 1181.6,1381.5 1183.6,1381.5 1183.9,1382.1 1184.5,1382.9 1185,1355.3 1185.9,1408.4 1186.6,1383.6 1187.3,1382.1 1187.6,1382.3 1189.6,1381.4 1191.6,1382.7 1193.6,1381.6 1195.6,1382 1197.6,1381.7 1199.6,1382 1201.6,1382.2 1203.6,1381.5 1205.6,1382.1 1207.6,1382.8" fill="none" stroke="#2ee82e" stroke-width="1.4" stroke-linejoin="round" /><polyline points="1217.6,1381.4 1219.6,1380.2 1221.6,1381 1223.6,1381 1225.6,1381.1 1227.6,1380.3 1229.6,1380.2 1231.6,1380.9 1233.6,1380.4 1235.6,1380.9 1237.6,1381.1 1237.9,1380.7 1238.5,1381.5 1239,1353.8 1239.9,1409.5 1240.7,1382.1 1241.3,1380.6 1241.6,1379.9 1243.6,1381 1245.6,1381.4 1247.6,1380.4 1249.6,1380.7 1251.6,1380.3 1253.6,1381.1 1255.6,1380.1 1257.6,1379.8 1259.6,1380.5 1261.6,1380.4 1263.6,1380.6 1265.6,1380 1267.6,1381.1 1269.6,1380.5 1270.5,1380.4 1271.1,1381.2 1271.6,1357.3 1272.5,1408.7 1273.2,1381.9 1273.8,1380.4 1275.6,1380.2 1277.6,1380.7 1279.6,1379.5 1281.6,1380.9 1283.6,1380.6 1285.6,1379.6 1287.6,1379.8 1289.6,1379 1291.6,1380.1 1293.6,1380.3 1295.6,1379.6 1297.6,1380.1 1299.6,1379.1 1301.6,1379.6 1302.1,1379 1302.7,1379.8 1303.3,1353.7 1304.2,1404.6 1304.9,1380.3 1305.5,1378.8 1305.6,1379.3 1307.6,1379.4 1309.6,1378.5 1311.6,1378.5 1313.6,1377.6 1315.6,1379 1317.6,1377.6 1319.6,1378.3 1321.6,1378.3 1323.6,1377.6 1325.6,1377.9" fill="none" stroke="#2ee82e" stroke-width="1.4" stroke-linejoin="round" /><polyline points="1335.6,1382.1 1337.6,1381 1339.6,1381.3 1341.6,1381.8 1343.6,1381.3 1345.6,1382.3 1347.6,1381.5 1349.6,1381.9 1351.6,1380.9 1353.6,1382.2 1355.6,1382.3 1356.4,1381.6 1357,1382.4 1357.5,1355.8 1358.4,1410.4 1359.1,1383.1 1359.7,1381.6 1361.6,1382.3 1363.6,1381.3 1365.6,1382.1 1367.6,1382.3 1369.6,1380.9 1371.6,1380.9 1373.6,1381.8 1375.6,1382.3 1377.6,1380.8 1379.6,1382.1 1381.6,1381.8 1383.6,1381.5 1385.6,1381 1387.6,1381.5 1388.5,1381.5 1389.1,1382.3 1389.6,1355 1390.5,1407.6 1391.2,1383 1391.8,1381.5 1393.6,1381.6 1395.6,1381.1 1397.6,1382.3 1399.6,1382.1 1401.6,1381.3 1403.6,1382.1 1405.6,1382.2 1407.6,1382.8 1409.6,1383 1411.6,1383 1413.6,1381.8 1415.6,1382.5 1417.6,1382.2 1419.5,1382.8 1420.1,1383.6 1420.6,1357.4 1421.5,1410.8 1422.2,1384.5 1422.9,1383 1423.6,1383.5 1425.6,1382.5 1427.6,1383.8 1429.6,1383.6 1431.6,1383.7 1433.6,1384.3 1435.6,1384.2 1437.6,1384 1439.6,1383.9 1441.6,1383.8 1443.6,1383.8" fill="none" stroke="#2ee82e" stroke-width="1.4" stroke-linejoin="round" /><polyline points="1453.6,1382.9 1455.6,1382.7 1457.6,1382.9 1459.6,1382.1 1461.6,1382.2 1463.6,1382.2 1465.6,1383.1 1467.6,1383 1469.6,1382.3 1471.6,1382.6 1473.6,1382.4 1474.1,1383.2 1474.7,1356 1475.6,1408.8 1476.3,1383.8 1476.9,1382.3 1477.6,1382.2 1479.6,1382.3 1481.6,1381.8 1483.6,1381.8 1485.6,1382.8 1487.6,1382.6 1489.6,1381.3 1491.6,1381.3 1493.6,1382.4 1495.6,1381.7 1497.6,1382 1499.6,1381.9 1501.6,1381.9 1503.6,1382.3 1505.6,1381.1 1506.5,1381.7 1507.1,1382.5 1507.6,1355.7 1508.5,1409.9 1509.2,1383.2 1509.8,1381.7 1511.6,1382.2 1513.6,1381.3 1515.6,1381 1517.6,1381.3 1519.6,1381.7 1521.6,1382.1 1523.6,1381.8 1525.6,1382.4 1527.6,1381.1 1529.6,1381.4 1531.6,1381.8 1533.6,1381.8 1535.6,1381.9 1537.6,1381.6 1538.1,1381.6 1538.6,1382.4 1539.2,1355.3 1540.1,1407.6 1540.8,1383.1 1541.4,1381.6 1541.6,1381 1543.6,1382.1 1545.6,1382.1 1547.6,1380.9 1549.6,1382.1 1551.6,1380.8 1553.6,1381.9 1555.6,1381.8 1557.6,1381.3 1559.6,1381 1561.6,1381.2" fill="none" stroke="#2ee82e" stroke-width="1.4" stroke-linejoin="round" /><polyline points="1571.6,1384 1573.6,1383 1575.6,1383.6 1577.6,1383 1579.6,1383.1 1581.6,1382.6 1583.6,1383.6 1585.6,1382.3 1587.6,1383.4 1589.6,1383 1591.6,1383 1593.4,1382.3 1593.9,1383.1 1594.5,1358.1 1595.4,1407.2 1596.1,1383.6 1596.7,1382.1 1597.6,1381.4 1599.6,1382.6 1601.6,1382 1603.6,1381.7 1605.6,1381.5 1607.6,1381.2 1609.6,1381.9 1611.6,1381.8 1613.6,1381.7 1615.6,1380.3 1617.6,1380.9 1619.6,1381.1 1621.6,1380.2 1623.6,1381.3 1624.5,1380.7 1625.1,1381.5 1625.6,1356.9 1626.5,1406.2 1627.2,1382.2 1627.8,1380.7 1629.6,1381.1 1631.6,1380.2 1633.6,1380.5 1635.6,1381.2 1637.6,1381.6 1639.6,1381.9 1641.6,1380.8 1643.6,1381.9 1645.6,1381.6 1647.6,1381.3 1649.6,1381.3 1651.6,1381.2 1653.6,1381.2 1655.6,1381.9 1657.1,1382.1 1657.7,1382.9 1658.2,1358.5 1659.1,1407.5 1659.8,1383.8 1660.5,1382.3 1661.6,1381.8 1663.6,1382 1665.6,1382.3 1667.6,1382.1 1669.6,1382.3 1671.6,1382.4 1673.6,1383.6 1675.6,1382.8 1677.6,1383.1 1679.6,1383" fill="none" stroke="#2ee82e" stroke-width="1.4" stroke-linejoin="round" /><polyline points="1689.6,1384.5 1691.6,1383.3 1693.6,1383.4 1695.6,1384.1 1697.6,1383.8 1699.6,1383.2 1701.6,1383.1 1703.6,1384.3 1705.6,1383.2 1707.6,1383.7 1709.6,1384.2 1711.6,1383.6 1712.4,1383.6 1712.9,1384.4 1713.5,1357.1 1714.4,1409.9 1715.1,1385.1 1715.7,1383.6 1717.6,1383.5 1719.6,1383 1721.6,1384.3 1723.6,1383.7 1725.6,1383.8 1727.6,1383.4 1729.6,1383.9 1731.6,1383.3 1733.6,1383 1735.6,1383.3 1737.6,1383.9 1739.6,1384.1 1741.6,1383.5 1742.5,1383.5 1743.1,1384.3 1743.6,1358.1 1744.5,1409.8 1745.2,1385 1745.8,1383.5 1747.6,1383.8 1749.6,1384.2 1751.6,1383.8 1753.6,1384.3 1755.6,1383.2 1757.6,1384.2 1759.6,1384 1761.6,1383.7 1763.6,1383.8 1765.6,1383.1 1767.6,1382.9 1769.6,1382.9 1771.6,1384.3 1773.6,1383.6 1775.6,1383.9 1776,1383.8 1776.5,1384.6 1777.1,1357.1 1778,1409.9 1778.7,1385.3 1779.3,1383.8 1779.6,1383.7 1781.6,1384.4 1783.6,1384.2 1785.6,1383.7 1787.6,1384.1 1789.6,1383.4 1791.6,1384.6 1793.6,1383.4 1795.6,1384.6 1797.6,1384" fill="none" stroke="#2ee82e" stroke-width="1.4" stroke-linejoin="round" /><rect x="508.5" y="1008.5" width="111" height="75" fill="none" stroke="#ff1111" stroke-width="2"/></svg></svg>
<div style="left:1829px;top:1005px;width:17px;height:365px;background:#f1f1f1"></div>
<div style="left:1831px;top:1022px;width:13px;height:32px;background:#c1c1c1"></div>
<svg style="left:1834px;top:1011px" width="8" height="5" viewBox="0 0 8 5"><path d="M0 5 L4 0 L8 5 Z" fill="#a3a3a3"/></svg>
<svg style="left:1834px;top:1359px" width="8" height="5" viewBox="0 0 8 5"><path d="M0 0 L4 5 L8 0 Z" fill="#505050"/></svg>
<div style="left:504px;top:1370px;width:1343px;height:36px;border-bottom:1px solid #cfcfcf"></div>
<div style="left:504px;top:1371px;width:39px;height:34px;background:#e6e6e6"></div>
<svg style="left:513px;top:1377px" width="21" height="21" viewBox="0 0 21 21"><rect x="0" y="0" width="21" height="21" rx="4.5" fill="#4a8bca"/><path d="M4.5 10.5 L8.5 14.5 L16.5 6.5" stroke="#ececec" stroke-width="3.2" fill="none"/></svg>
<div style="left:1568px;top:1373px;width:29px;height:25px;background:#4a9bdc;color:#fff;text-align:center;font-size:13px;line-height:25px">1</div>
<div style="left:1596px;top:1373px;width:28px;height:25px;background:#f9f9f9;border:1px solid #d5dee6;color:#3a7fc6;text-align:center;font-size:13px;line-height:22px">2</div>
<div style="left:1623px;top:1373px;width:29px;height:25px;background:#f9f9f9;border:1px solid #d5dee6;color:#3a7fc6;text-align:center;font-size:13px;line-height:22px">3</div>
<div style="left:1651px;top:1373px;width:28px;height:25px;background:#f9f9f9;border:1px solid #d5dee6;color:#3a7fc6;text-align:center;font-size:13px;line-height:22px">4</div>
<div style="left:1678px;top:1373px;width:29px;height:25px;background:#f9f9f9;border:1px solid #d5dee6;color:#3a7fc6;text-align:center;font-size:13px;line-height:22px">5</div>
<div style="left:1706px;top:1373px;width:29px;height:25px;background:#f9f9f9;border:1px solid #d5dee6;color:#3a7fc6;text-align:center;font-size:11px;line-height:22px">&gt;</div>
<div style="left:1734px;top:1373px;width:37px;height:25px;background:#f9f9f9;border:1px solid #d5dee6;color:#3a7fc6;text-align:center;font-size:11px;line-height:22px">&gt;&gt;</div>
<div style="left:1786px;top:1373px;width:50px;height:26px;border:1px solid #d5d5d5;background:#fff;color:#777;font-size:14px;line-height:25px;padding-left:5px">500</div><svg style="left:1821px;top:1384.0px" width="10" height="6" viewBox="0 0 10 6"><path d="M0 0 L10 0 L5 5.5 Z" fill="#222"/></svg>
<div style="left:32px;top:1469px;width:1859px;height:3px;border-top:1px solid #e3e3e3;border-bottom:1px solid #e3e3e3"></div>
<div class="t" style="left:55px;top:1487.0px;height:20px;line-height:20px;color:#777;font-size:13px;letter-spacing:-0.2px">发布版本号: V1 | 当前用户: ecgdoctor1&nbsp;&nbsp;&nbsp;|&nbsp;&nbsp;&nbsp;关于</div>
<div style="left:1500px;top:1487px;width:369px;height:20px;text-align:right;color:#777;font-size:13px;line-height:20px;white-space:nowrap;letter-spacing:-0.15px">© 2018 北京海思敏医疗技术有限公司</div>
<div style="left:1874px;top:1500px;width:27px;height:26px;background:#8a8a8a"><svg style="left:9px;top:7px" width="10" height="10"><path d="M1 4.5 L5 1 L9 4.5 M1 8.5 L5 5 L9 8.5" stroke="#fff" stroke-width="1.7" fill="none"/></svg></div>
</body></html>
